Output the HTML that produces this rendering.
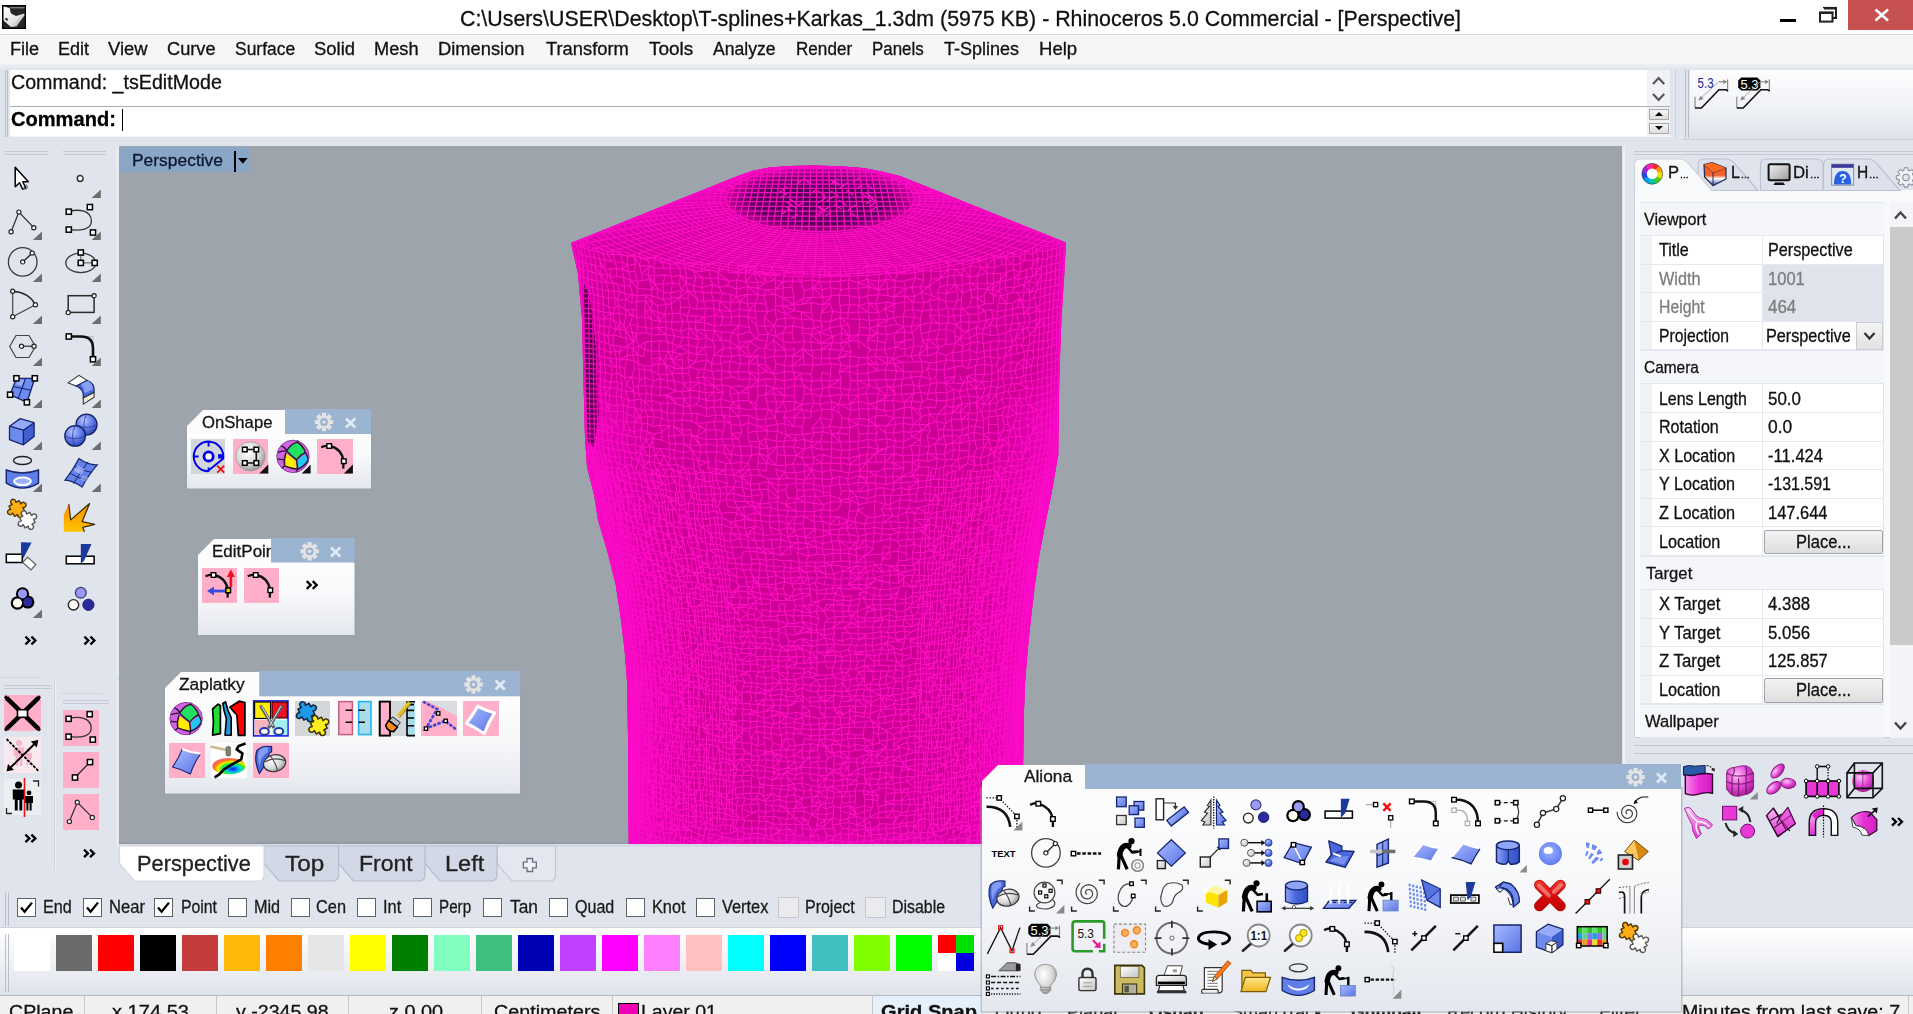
<!DOCTYPE html>
<html><head><meta charset="utf-8"><title>Rhinoceros 5.0 Commercial - [Perspective]</title>
<style>
html,body{margin:0;padding:0;}
body{width:1913px;height:1014px;overflow:hidden;position:relative;background:#e0e4ec;font-family:"Liberation Sans", sans-serif;}
div,span.t,svg{position:absolute;box-sizing:border-box;}
span.t{white-space:pre;line-height:1;transform-origin:0 0;display:block;-webkit-text-stroke:0.3px;}
.ic{overflow:visible}
</style></head><body>
<div style="left:0px;top:0px;width:1913px;height:34px;background:#fff;"></div><div style="left:0px;top:34px;width:1913px;height:1px;background:#d9d9d9;"></div><span class="t" style="left:459.5px;top:8.4px;font-size:21.79px;color:#111;transform:scaleX(0.9804);">C:\Users\USER\Desktop\T-splines+Karkas_1.3dm (5975 KB) - Rhinoceros 5.0 Commercial - [Perspective]</span><svg style="left:2px;top:5px" width="24" height="24" viewBox="2 5 24 24"><defs><linearGradient id="rh" x1="0" y1="0" x2="1" y2="1"><stop offset="0" stop-color="#ffffff"/><stop offset="0.6" stop-color="#e4e4e4"/><stop offset="1" stop-color="#8a9490"/></linearGradient></defs><rect x="2" y="5" width="24" height="24" fill="#262626"/><rect x="2.6" y="5.6" width="22.8" height="22.8" fill="none" stroke="#000" stroke-width="1.2"/><path d="M3.6 6.6L9.6 8L11 13.6L16 16L24.4 13.6V15.6L16.4 26.6L11 27L3.6 20.4Z" fill="url(#rh)"/><path d="M10 7.8H24.6" stroke="#bbb" stroke-width="0.8"/><ellipse cx="6.6" cy="19.2" rx="1.8" ry="1.3" fill="#5a3a48" transform="rotate(35 6.6 19.2)"/></svg><div style="left:1780px;top:19px;width:16px;height:3px;background:#000;"></div><svg style="left:1817px;top:5px" width="22" height="20" viewBox="1817 5 22 20"><path d="M1824 8.5h12v9.5h-3" fill="none" stroke="#222" stroke-width="2"/><path d="M1823 7.6h14" stroke="#222" stroke-width="1.4"/><rect x="1820" y="13" width="12.5" height="8.6" fill="#fff" stroke="#222" stroke-width="2"/><path d="M1819 12.2h14.5" stroke="#222" stroke-width="1.6"/></svg><div style="left:1848px;top:0px;width:65px;height:30px;background:#c75050;"></div><svg style="left:1872px;top:6px" width="20" height="18" viewBox="0 0 20 18"><path d="M3.5 3.5L16 14.5M16 3.5L3.5 14.5" stroke="#fff" stroke-width="2.6"/></svg><div style="left:0px;top:35px;width:1913px;height:30px;background:#f5f6f7;"></div><div style="left:0px;top:64px;width:1913px;height:6px;background:linear-gradient(#eef0f3,#dfe3ea);"></div><span class="t" style="left:9.8px;top:41.0px;font-size:17.74px;color:#111;transform:scaleX(1.0193);">File</span><span class="t" style="left:57.8px;top:41.0px;font-size:17.74px;color:#111;transform:scaleX(1.0185);">Edit</span><span class="t" style="left:108.3px;top:41.0px;font-size:17.74px;color:#111;transform:scaleX(1.0394);">View</span><span class="t" style="left:167.3px;top:41.0px;font-size:17.74px;color:#111;transform:scaleX(1.0278);">Curve</span><span class="t" style="left:234.8px;top:41.0px;font-size:17.74px;color:#111;transform:scaleX(0.9837);">Surface</span><span class="t" style="left:313.8px;top:41.0px;font-size:17.74px;color:#111;transform:scaleX(1.0429);">Solid</span><span class="t" style="left:374.4px;top:41.0px;font-size:17.74px;color:#111;transform:scaleX(1.0266);">Mesh</span><span class="t" style="left:438.4px;top:41.0px;font-size:17.74px;color:#111;transform:scaleX(1.0328);">Dimension</span><span class="t" style="left:545.6px;top:41.0px;font-size:17.74px;color:#111;transform:scaleX(1.0333);">Transform</span><span class="t" style="left:649.4px;top:41.0px;font-size:17.74px;color:#111;transform:scaleX(1.0706);">Tools</span><span class="t" style="left:713.3px;top:41.0px;font-size:17.74px;color:#111;transform:scaleX(0.9926);">Analyze</span><span class="t" style="left:795.8px;top:41.0px;font-size:17.74px;color:#111;transform:scaleX(0.9649);">Render</span><span class="t" style="left:872.3px;top:41.0px;font-size:17.74px;color:#111;transform:scaleX(0.9520);">Panels</span><span class="t" style="left:943.8px;top:41.0px;font-size:17.74px;color:#111;transform:scaleX(1.0161);">T-Splines</span><span class="t" style="left:1038.8px;top:41.0px;font-size:17.74px;color:#111;transform:scaleX(1.0451);">Help</span><div style="left:5px;top:70px;width:1px;height:67px;background:#b9bfcc;"></div><div style="left:7px;top:70px;width:1px;height:67px;background:#b9bfcc;"></div><div style="left:10px;top:70px;width:1637px;height:36px;background:#fff;"></div><div style="left:1647px;top:70px;width:23px;height:36px;background:#f1f2f6;"></div><div style="left:10px;top:106px;width:1660px;height:1px;background:#a9adb5;"></div><div style="left:10px;top:107px;width:1637px;height:29px;background:#fff;"></div><div style="left:1647px;top:107px;width:23px;height:29px;background:#f1f2f6;"></div><div style="left:10px;top:136px;width:1662px;height:1px;background:#f4f5f8;"></div><span class="t" style="left:11.1px;top:72.8px;font-size:19.55px;color:#111;transform:scaleX(1.0063);">Command: _tsEditMode</span><span class="t" style="left:11.1px;top:109.8px;font-size:19.55px;color:#000;transform:scaleX(1.0279);font-weight:700;">Command:</span><div style="left:122px;top:109px;width:1px;height:22px;background:#000;"></div><svg style="left:1650px;top:72px" width="18" height="34" viewBox="1650 72 18 34"><path d="M1653 84l5.6-6 5.6 6M1653 94l5.6 6 5.6-6" fill="none" stroke="#555" stroke-width="2.2"/></svg><div style="left:1649px;top:109px;width:20px;height:11px;background:linear-gradient(#f6f6f6,#dddddd);border:1px solid #a8a8a8;"></div><svg style="left:0;top:0" width="1913" height="140"><polygon points="1655,116 1663,116 1659,112" fill="#000"/></svg><div style="left:1649px;top:123px;width:20px;height:11px;background:linear-gradient(#f6f6f6,#dddddd);border:1px solid #a8a8a8;"></div><svg style="left:0;top:0" width="1913" height="140"><polygon points="1655,126 1663,126 1659,130" fill="#000"/></svg><div style="left:1675px;top:70px;width:1px;height:68px;background:#cdd2dc;"></div><div style="left:1685px;top:70px;width:1px;height:68px;background:#b9bfcc;"></div><div style="left:1688px;top:70px;width:1px;height:68px;background:#b9bfcc;"></div><div style="left:1690px;top:70px;width:223px;height:70px;background:linear-gradient(#fdfdfe,#f0f2f6 55%,#dde1e9);"></div><div style="left:1683px;top:139px;width:230px;height:1px;background:#c9cdd8;"></div><div style="left:0px;top:140px;width:118px;height:706px;background:#e0e4ec;"></div><div style="left:4.6px;top:150.5px;width:43.4px;height:1px;background:#c3c8d4;"></div><div style="left:4.6px;top:153.5px;width:43.4px;height:1px;background:#c3c8d4;"></div><div style="left:62.8px;top:150.5px;width:43.60000000000001px;height:1px;background:#c3c8d4;"></div><div style="left:62.8px;top:153.5px;width:43.60000000000001px;height:1px;background:#c3c8d4;"></div><div style="left:116px;top:146px;width:3px;height:698px;background:#e9eaee;"></div><svg class="ic" style="left:0;top:140px" width="118" height="730" viewBox="0 140 118 730"><defs><radialGradient id="gsph" cx="0.38" cy="0.3" r="0.75"><stop offset="0" stop-color="#b9c6ff"/><stop offset="0.45" stop-color="#6c87ee"/><stop offset="1" stop-color="#2c46b8"/></radialGradient><linearGradient id="gexp" x1="0" y1="0" x2="0" y2="1"><stop offset="0" stop-color="#ff8c00"/><stop offset="1" stop-color="#ffc400"/></linearGradient></defs><g transform="translate(22.0 178.5)"><path d="M-6.8 -11.2V8.2L-2.4 4.2L0.6 10.6L3.6 9.2L0.8 3.2H6.4Z" fill="#fff" stroke="#000" stroke-width="1.5" stroke-linejoin="round"/><path d="M1.5 9.5q2.6 2.4 3.6 -0.6q0.3 -2.2 -1.6 -2.4" fill="none" stroke="#555" stroke-width="1.1"/></g><g transform="translate(80.8 178.5)"><circle cx="-0.6" cy="0" r="2.9" fill="#fff" stroke="#333" stroke-width="1.5"/><polygon points="20,11 20,19.6 10.8,19.6" fill="#6e6e6e"/></g><g transform="translate(22.0 220.5)"><path d="M-10.9 11.3L-3.1 -8.4L11.8 7.2" fill="none" stroke="#2b2b2b" stroke-width="1.2" /><circle cx="-10.9" cy="11.3" r="2.1" fill="#fff" stroke="#222" stroke-width="1.2"/><circle cx="-3.1" cy="-8.4" r="2.1" fill="#fff" stroke="#222" stroke-width="1.2"/><circle cx="11.8" cy="7.2" r="2.1" fill="#fff" stroke="#222" stroke-width="1.2"/><polygon points="20,11 20,19.6 10.8,19.6" fill="#6e6e6e"/></g><g transform="translate(80.8 220.5)"><path d="M-12 -8.8C-2 -12 10.5 -10 10.6 0.5C10.6 9 0 10.5 -12 9.1" fill="none" stroke="#333" stroke-width="1.3" /><rect x="-14.6" y="-11.4" width="5.2" height="5.2" fill="#fff" stroke="#000" stroke-width="1.5"/><rect x="6.5" y="-16.0" width="5.2" height="5.2" fill="#fff" stroke="#000" stroke-width="1.5"/><rect x="-14.6" y="6.5" width="5.2" height="5.2" fill="#fff" stroke="#000" stroke-width="1.5"/><rect x="9.6" y="9.4" width="5.2" height="5.2" fill="#fff" stroke="#000" stroke-width="1.5"/><polygon points="20,11 20,19.6 10.8,19.6" fill="#6e6e6e"/></g><g transform="translate(22.0 262.5)"><circle cx="0.7" cy="-0.6" r="14.3" fill="none" stroke="#3a3a3a" stroke-width="1.3"/><path d="M0.7 -0.6L10.2 -9.4" fill="none" stroke="#2b2b2b" stroke-width="1.4" /><circle cx="0.7" cy="-0.6" r="2.1" fill="#fff" stroke="#222" stroke-width="1.2"/><circle cx="10.2" cy="-9.4" r="2.1" fill="#fff" stroke="#222" stroke-width="1.2"/><polygon points="20,11 20,19.6 10.8,19.6" fill="#6e6e6e"/></g><g transform="translate(80.8 262.5)"><ellipse cx="0" cy="0.4" rx="15" ry="9.8" fill="none" stroke="#3a3a3a" stroke-width="1.3"/><path d="M0 -10V0.4H13.9" fill="none" stroke="#555" stroke-width="1" /><rect x="-2.6" y="-2.2" width="5.2" height="5.2" fill="#fff" stroke="#000" stroke-width="1.5"/><rect x="-2.6" y="-12.6" width="5.2" height="5.2" fill="#fff" stroke="#000" stroke-width="1.5"/><rect x="11.3" y="-2.2" width="5.2" height="5.2" fill="#fff" stroke="#000" stroke-width="1.5"/><polygon points="20,11 20,19.6 10.8,19.6" fill="#6e6e6e"/></g><g transform="translate(22.0 304.5)"><path d="M-9.3 -13.2V12.3L13.4 0.3" fill="none" stroke="#444" stroke-width="1.2" /><path d="M-9.3 -13.2Q7 -12 13.4 0.3" fill="none" stroke="#2b2b2b" stroke-width="1.4" /><circle cx="-9.3" cy="-13.2" r="2.1" fill="#fff" stroke="#222" stroke-width="1.2"/><circle cx="13.4" cy="0.3" r="2.1" fill="#fff" stroke="#222" stroke-width="1.2"/><circle cx="-9.3" cy="12.3" r="2.1" fill="#fff" stroke="#222" stroke-width="1.2"/><polygon points="20,11 20,19.6 10.8,19.6" fill="#6e6e6e"/></g><g transform="translate(80.8 304.5)"><rect x="-12.6" y="-8.8" width="25.9" height="16.7" fill="none" stroke="#2b2b2b" stroke-width="1.5"/><circle cx="13.3" cy="-8.8" r="2.1" fill="#fff" stroke="#222" stroke-width="1.2"/><circle cx="-12.6" cy="7.9" r="2.1" fill="#fff" stroke="#222" stroke-width="1.2"/><polygon points="20,11 20,19.6 10.8,19.6" fill="#6e6e6e"/></g><g transform="translate(22.0 346.5)"><path d="M-12.3 0L-6 -11H7L13.5 0L7 11H-6Z" fill="none" stroke="#444" stroke-width="1.2" /><path d="M-0.5 -0.3H12" fill="none" stroke="#2b2b2b" stroke-width="1.2" /><circle cx="-0.5" cy="-0.3" r="2.1" fill="#fff" stroke="#222" stroke-width="1.2"/><circle cx="12" cy="-0.3" r="2.1" fill="#fff" stroke="#222" stroke-width="1.2"/><polygon points="20,11 20,19.6 10.8,19.6" fill="#6e6e6e"/></g><g transform="translate(80.8 346.5)"><path d="M0 -10H12.2V2" fill="none" stroke="#b9bcc4" stroke-width="1" /><path d="M-12 -10H0Q12.2 -10 12.2 2V12.8" fill="none" stroke="#111" stroke-width="2.6" /><rect x="-14.6" y="-12.6" width="5.2" height="5.2" fill="#fff" stroke="#000" stroke-width="1.5"/><rect x="9.6" y="10.2" width="5.2" height="5.2" fill="#fff" stroke="#000" stroke-width="1.5"/><polygon points="20,11 20,19.6 10.8,19.6" fill="#6e6e6e"/></g><g transform="translate(22.0 388.5)"><path d="M-5.6 -10.2L12.8 -10.2L4.9 13.8L-11.9 6.2Z" fill="#6f8cf0" stroke="#16256e" stroke-width="1.3"/><path d="M3.6 -10.2L-3.8 10M-8.8 -2L8.8 1.8" stroke="#16256e" stroke-width="1.1" fill="none"/><path d="M-4 -8.8L2 -8.8L0 -3L-6 -4Z" fill="#a8b9ff" opacity=".7"/><rect x="-8.2" y="-12.8" width="5.2" height="5.2" fill="#fff" stroke="#000" stroke-width="1.5"/><rect x="10.2" y="-12.8" width="5.2" height="5.2" fill="#fff" stroke="#000" stroke-width="1.5"/><rect x="-14.5" y="3.6" width="5.2" height="5.2" fill="#fff" stroke="#000" stroke-width="1.5"/><rect x="2.3" y="11.2" width="5.2" height="5.2" fill="#fff" stroke="#000" stroke-width="1.5"/><polygon points="20,11 20,19.6 10.8,19.6" fill="#6e6e6e"/></g><g transform="translate(80.8 388.5)"><path d="M-12.6 -5.6L-1.9 -13.1L6.3 -8.1L-4.4 -2.4Z" fill="#fff" stroke="#333" stroke-width="1.1"/><path d="M-4.4 -2.4L6.3 -8.1Q14.5 -5.5 13.3 4L2.5 9.4Q3.5 1 -4.4 -2.4Z" fill="#4a6be0" stroke="#16256e" stroke-width="1.1"/><path d="M0 -4.6L7 -7.8Q12.5 -5 12 1L4 4.5Q3 -1.5 0 -4.6Z" fill="#9fb2ff" opacity=".75"/><path d="M2.5 9.4L13.3 4V8.6L2.5 15.6Z" fill="#f4f0e0" stroke="#333" stroke-width="1.1"/><polygon points="20,11 20,19.6 10.8,19.6" fill="#6e6e6e"/></g><g transform="translate(22.0 430.5)"><path d="M-12.5 -4.3L-1.8 -11.9L12.1 -7.8L1.4 -0.3Z" fill="#95aaf8"/><path d="M-12.5 -4.3L1.4 -0.3V14.3L-12.5 9.2Z" fill="#6f8bee"/><path d="M1.4 -0.3L12.1 -7.8V6L1.4 14.3Z" fill="#3f5ed2"/><path d="M-12.5 -4.3L-1.8 -11.9L12.1 -7.8V6L1.4 14.3L-12.5 9.2ZM-12.5 -4.3L1.4 -0.3L12.1 -7.8M1.4 -0.3V14.3" fill="none" stroke="#16256e" stroke-width="1.3" stroke-linejoin="round"/><polygon points="20,11 20,19.6 10.8,19.6" fill="#6e6e6e"/></g><g transform="translate(80.8 430.5)"><circle cx="5.7" cy="-5.9" r="10.5" fill="url(#gsph)" stroke="#14205e" stroke-width="1.3"/><path d="M-4.8 -5.9Q5.7 -0.125 16.2 -5.9M5.7 -16.4Q0.4500000000000002 -5.9 5.7 4.6" fill="none" stroke="#2a3c9a" stroke-width="1" opacity=".8"/><circle cx="-5.7" cy="5.4" r="10.3" fill="url(#gsph)" stroke="#14205e" stroke-width="1.3"/><path d="M-16.0 5.4Q-5.7 11.065000000000001 4.6000000000000005 5.4M-5.7 -4.9Q-10.850000000000001 5.4 -5.7 15.700000000000001" fill="none" stroke="#2a3c9a" stroke-width="1" opacity=".8"/><polygon points="20,11 20,19.6 10.8,19.6" fill="#6e6e6e"/></g><g transform="translate(22.0 472.5)"><ellipse cx="0.5" cy="-12" rx="9" ry="4" fill="none" stroke="#222" stroke-width="1.4"/><path d="M-15.7 -2.5Q0.5 3.5 16.5 -2.5V10.7Q0.5 20.5 -15.7 10.7Z" fill="#5f7eea" stroke="#16256e" stroke-width="1.4"/><ellipse cx="0.5" cy="8.8" rx="8.4" ry="3.8" fill="#9db0fb" stroke="#fff" stroke-width="2"/><polygon points="20,11 20,19.6 10.8,19.6" fill="#6e6e6e"/></g><g transform="translate(80.8 472.5)"><path d="M-1.9 -13.9Q8 -7 16.4 -7.6Q8 2 1.3 14.5Q-8 8 -15.8 7.6Q-8 -2 -1.9 -13.9Z" fill="#6582ea" stroke="#16256e" stroke-width="1.2"/><path d="M-6.5 -6.6Q2 -1 11.3 0M-11.2 0.5Q-3 6 6.3 7.3M7.3 -10.8Q0 -1 -7.2 11M-7 -10.5" fill="none" stroke="#16256e" stroke-width="1"/><path d="M-3 -7L4 -3L0 2L-7 -2Z" fill="#b3c2ff" opacity=".7"/><path d="M2 3L8 5L5 9L-1 7Z" fill="#b3c2ff" opacity=".5"/><polygon points="20,11 20,19.6 10.8,19.6" fill="#6e6e6e"/></g><g transform="translate(22.0 514.5)"><path transform="translate(-5.2 -6) scale(1.25) rotate(-28)" d="M-4.6 -4.6H-1.7V-4.9A2.05 2.05 0 1 1 1.7 -4.9V-4.6H4.6V-1.7H4.9A2.05 2.05 0 1 1 4.9 1.7H4.6V4.6H1.7V4.9A2.05 2.05 0 1 1 -1.7 4.9V4.6H-4.6V1.7H-4.9A2.05 2.05 0 1 1 -4.9 -1.7H-4.6Z" fill="#ffad14" stroke="#4a3608" stroke-width="1.1" stroke-linejoin="round"/><path transform="translate(5.4 5.6) scale(1.25) rotate(-28)" d="M-4.6 -4.6H-1.7V-4.9A2.05 2.05 0 1 1 1.7 -4.9V-4.6H4.6V-1.7H4.9A2.05 2.05 0 1 1 4.9 1.7H4.6V4.6H1.7V4.9A2.05 2.05 0 1 1 -1.7 4.9V4.6H-4.6V1.7H-4.9A2.05 2.05 0 1 1 -4.9 -1.7H-4.6Z" fill="#ffffff" stroke="#555" stroke-width="1.1" stroke-linejoin="round"/></g><g transform="translate(80.8 514.5)"><path d="M-17 17.3V0.3L-12 -10.4L-10.1 5.4L8.8 -11L1.3 7.2L13.9 9.8L1.9 12.9L3.8 17.3Z" fill="url(#gexp)"/><path d="M-12 -10.4L-10.1 5.4L8.8 -11L1.3 7.2L13.9 9.8L1.9 12.9L3.8 17.3" fill="none" stroke="#3a2a00" stroke-width="1.2" stroke-linejoin="round"/></g><g transform="translate(22.0 556.5)"><polygon points="-1.1,-14.1 9.6,-14.1 2,0.6 -0.5,3.2" fill="#1c3a9c"/><rect x="-15.7" y="-2.3" width="16" height="8.3" fill="#fff" stroke="#000" stroke-width="1.5"/><rect x="-5.6" y="-3.6" width="11.2" height="7.2" transform="translate(7.3 7) rotate(42)" fill="#fff" stroke="#666" stroke-width="1.3"/><polygon points="-1.1,-14.1 4,-14.1 0.3,0.6 -0.5,-2" fill="#1c3a9c"/></g><g transform="translate(80.8 556.5)"><rect x="-14.5" y="-0.3" width="27.8" height="7.6" fill="#fff" stroke="#000" stroke-width="1.5"/><polygon points="0,-12.6 10.7,-12.6 3.2,4.4 0,7" fill="#1c3a9c"/></g><g transform="translate(22.0 598.5)"><circle cx="0.5" cy="-4.7" r="6.6" fill="#000"/><circle cx="-4.5" cy="4.5" r="6.8" fill="#000"/><circle cx="5.8" cy="3.5" r="6.6" fill="#000"/><circle cx="5.8" cy="3.5" r="4.6" fill="#2a2a9c"/><circle cx="0.5" cy="-4.7" r="4.6" fill="#9a9af5"/><circle cx="-4.5" cy="4.5" r="4.6" fill="#fffdf0"/><polygon points="20,11 20,19.6 10.8,19.6" fill="#6e6e6e"/></g><g transform="translate(80.8 598.5)"><circle cx="0" cy="-5.7" r="5.4" fill="#9a9af5" stroke="#3c3c80" stroke-width="1.3"/><circle cx="-7.3" cy="6.3" r="5.2" fill="#fffdf4" stroke="#222" stroke-width="1.4"/><circle cx="7.6" cy="6.3" r="5.6" fill="#2a2a9c" stroke="#1c1c70" stroke-width="1"/></g><g transform="translate(31.0 640.5)"><path d="M-5.6 -3.8L-1.6 0L-5.6 3.8M0.4 -3.8L4.4 0L0.4 3.8" fill="none" stroke="#000" stroke-width="2.3"/></g><g transform="translate(90.0 640.5)"><path d="M-5.6 -3.8L-1.6 0L-5.6 3.8M0.4 -3.8L4.4 0L0.4 3.8" fill="none" stroke="#000" stroke-width="2.3"/></g></svg><div style="left:0px;top:676px;width:120px;height:196px;background:#e0e4ec;"></div><div style="left:0px;top:677px;width:42px;height:1px;background:#d3d7e0;"></div><div style="left:4px;top:685px;width:47px;height:1px;background:#c3c8d4;"></div><div style="left:4px;top:688px;width:47px;height:1px;background:#c3c8d4;"></div><div style="left:54px;top:680px;width:1px;height:190px;background:#cdd1db;"></div><div style="left:55px;top:680px;width:1px;height:190px;background:#eef0f4;"></div><div style="left:60px;top:693px;width:42px;height:1px;background:#d3d7e0;"></div><div style="left:63px;top:700px;width:46px;height:1px;background:#c3c8d4;"></div><div style="left:63px;top:703px;width:46px;height:1px;background:#c3c8d4;"></div><div style="left:116px;top:680px;width:3px;height:166px;background:#e9eaee;"></div><div style="left:4.1px;top:695px;width:36.8px;height:36px;background:#ffb0c8;"></div><div style="left:4.1px;top:737.2px;width:36.8px;height:35.6px;background:#f7e9ee;"></div><div style="left:4.1px;top:779.4px;width:36.8px;height:35.6px;background:#eceef2;"></div><div style="left:63.4px;top:710px;width:35.6px;height:35.6px;background:#ffb0c8;"></div><div style="left:63.4px;top:752.2px;width:35.6px;height:35.6px;background:#ffb0c8;"></div><div style="left:63.4px;top:794px;width:35.6px;height:35.6px;background:#ffb0c8;"></div><svg class="ic" style="left:0;top:680px" width="118" height="190" viewBox="0 680 118 190"><g transform="translate(22.5 713.3)"><path d="M-16 -15.5L16 15.5M16 -15.5L-16 15.5" stroke="#000" stroke-width="4.6"/><path d="M-17.5 -17L-13 -13M17.5 -17L13 -13M-17.5 17L-13 13M17.5 17L13 13" stroke="#000" stroke-width="3"/><rect x="-5" y="-3.6" width="10" height="7.6" fill="#fff" stroke="#000" stroke-width="1.6"/></g><g transform="translate(22.5 755)"><circle cx="-3.5" cy="-11.9" r="3.1" fill="#f4b6c8"/><path d="M-8.7 -7.7h10.4v8.8h-1.8v9.9h-2.6v-9.4h-1.6v9.4h-2.6v-9.9h-1.8Z" fill="#f4b6c8"/><circle cx="6" cy="-5.0" r="2.0" fill="#f4b6c8"/><path d="M2.6 -2.2h6.8v5.8h-1.2v6.5h-1.7v-6.1h-1.0v6.1h-1.7v-6.5h-1.2Z" fill="#f4b6c8"/><path d="M-16 -16L16 16" stroke="#000" stroke-width="1.8" stroke-dasharray="3 1.2"/><path d="M-15 15.5L15 -14" stroke="#000" stroke-width="1.9"/><path d="M15.8 -15l-7.5 1.4 6 6z M-16 16.3l7.5 -1.4 -6 -6z" fill="#000"/></g><g transform="translate(22.5 797)"><circle cx="-4" cy="-12.0" r="3.5" fill="#000"/><path d="M-9.8 -7.4h11.6v9.9h-2.0v11.0h-2.9v-10.4h-1.7v10.4h-2.9v-11.0h-2.0Z" fill="#000"/><circle cx="6.5" cy="-4.1" r="2.4" fill="#000"/><path d="M2.5 -0.9h8.0v6.8h-1.4v7.6h-2.0v-7.2h-1.2v7.2h-2.0v-7.6h-1.4Z" fill="#000"/><path d="M2 -19V20" stroke="#ee1111" stroke-width="1.6"/><path d="M10.5 -16h5.5v5.5M-16 11v5.5h5.5" fill="none" stroke="#222" stroke-width="1.3"/></g><g transform="translate(31.0 838.4)"><path d="M-5.6 -3.8L-1.6 0L-5.6 3.8M0.4 -3.8L4.4 0L0.4 3.8" fill="none" stroke="#000" stroke-width="2.3"/></g><g transform="translate(80.6 727.6)"><path d="M-12 -8.8C-2 -12 10.5 -10 10.6 0.5C10.6 9 0 10.5 -12 9.1" fill="none" stroke="#333" stroke-width="1.3" /><rect x="-14.6" y="-11.4" width="5.2" height="5.2" fill="#fff" stroke="#000" stroke-width="1.5"/><rect x="6.5" y="-16.0" width="5.2" height="5.2" fill="#fff" stroke="#000" stroke-width="1.5"/><rect x="-14.6" y="6.5" width="5.2" height="5.2" fill="#fff" stroke="#000" stroke-width="1.5"/><rect x="9.6" y="9.4" width="5.2" height="5.2" fill="#fff" stroke="#000" stroke-width="1.5"/></g><g transform="translate(81.2 770)"><path d="M-6.2 7.5L8.8 -7.9" fill="none" stroke="#2b2b2b" stroke-width="1.3" /><rect x="-8.8" y="4.9" width="5.2" height="5.2" fill="#fff" stroke="#000" stroke-width="1.5"/><rect x="6.2" y="-10.5" width="5.2" height="5.2" fill="#fff" stroke="#000" stroke-width="1.5"/></g><g transform="translate(81.2 812)"><path d="M-11.8 9.6L-3.9 -9.7L11.1 5.4" fill="none" stroke="#2b2b2b" stroke-width="1.2" /><circle cx="-11.8" cy="9.6" r="2.1" fill="#fff" stroke="#222" stroke-width="1.2"/><circle cx="-3.9" cy="-9.7" r="2.1" fill="#fff" stroke="#222" stroke-width="1.2"/><circle cx="11.1" cy="5.4" r="2.1" fill="#fff" stroke="#222" stroke-width="1.2"/></g><g transform="translate(89.6 853.4)"><path d="M-5.6 -3.8L-1.6 0L-5.6 3.8M0.4 -3.8L4.4 0L0.4 3.8" fill="none" stroke="#000" stroke-width="2.3"/></g></svg><svg style="left:119px;top:146px" width="1503" height="698" viewBox="119 146 1503 698"><defs><clipPath id="bc"><path d="M571.0 243.0 L736.4 176.6 L752.0 171.0 L769.0 167.5 L790.0 166.0 L813.0 165.6 L840.0 166.2 L863.0 168.0 L882.0 171.5 L900.7 176.3 L1066.0 242.5 L1064.3 274.0 L1061.4 319.0 L1059.3 378.0 L1058.4 437.0 L1058.2 455.0 L1051.0 496.0 L1046.0 520.0 L1039.7 552.5 L1034.8 585.0 L1031.0 617.6 L1027.7 650.0 L1025.0 682.7 L1023.8 715.0 L1023.1 762.0 L1022.5 846.0 L628.8 846.0 L628.2 748.0 L627.2 683.0 L624.6 650.0 L620.7 617.6 L615.8 585.0 L607.7 552.5 L598.0 520.0 L594.4 496.0 L587.0 466.7 L585.0 437.0 L583.4 378.0 L582.0 319.0 L578.0 274.0Z"/></clipPath><clipPath id="tc"><path d="M571.0 243.0 L736.4 176.6 L752.0 171.0 L769.0 167.5 L790.0 166.0 L813.0 165.6 L840.0 166.2 L863.0 168.0 L882.0 171.5 L900.7 176.3 L1066.0 242.5 Q 819 312 571 243Z"/></clipPath><clipPath id="fc"><path d="M571 243 Q819 290 1066 242.5 L1100 260 L1100 850 L540 850 L540 260Z"/></clipPath><radialGradient id="nk" cx="0.5" cy="0.5" r="0.5"><stop offset="0" stop-color="#480050" stop-opacity="1"/><stop offset="0.7" stop-color="#560058" stop-opacity="0.97"/><stop offset="0.9" stop-color="#8a0070" stop-opacity="0.55"/><stop offset="1" stop-color="#b4007c" stop-opacity="0"/></radialGradient><filter id="bl" x="-2%" y="-2%" width="104%" height="104%"><feGaussianBlur stdDeviation="0.6"/></filter><clipPath id="nc"><ellipse cx="820" cy="199" rx="94" ry="33"/></clipPath><linearGradient id="tg" x1="0" y1="0" x2="0" y2="1"><stop offset="0" stop-color="#dc04a8"/><stop offset="0.55" stop-color="#cc02a0"/><stop offset="1" stop-color="#ca0092"/></linearGradient><clipPath id="ac"><path d="M584 284 L589.5 296 L596.5 350 L598.5 415 L593.5 447 L587.5 441 L585.5 380Z"/></clipPath></defs><rect x="119" y="146" width="1503" height="698" fill="#9da4ab"/><rect x="119" y="842" width="1503" height="2" fill="#969ca6"/><path d="M571.0 243.0 L736.4 176.6 L752.0 171.0 L769.0 167.5 L790.0 166.0 L813.0 165.6 L840.0 166.2 L863.0 168.0 L882.0 171.5 L900.7 176.3 L1066.0 242.5 L1064.3 274.0 L1061.4 319.0 L1059.3 378.0 L1058.4 437.0 L1058.2 455.0 L1051.0 496.0 L1046.0 520.0 L1039.7 552.5 L1034.8 585.0 L1031.0 617.6 L1027.7 650.0 L1025.0 682.7 L1023.8 715.0 L1023.1 762.0 L1022.5 846.0 L628.8 846.0 L628.2 748.0 L627.2 683.0 L624.6 650.0 L620.7 617.6 L615.8 585.0 L607.7 552.5 L598.0 520.0 L594.4 496.0 L587.0 466.7 L585.0 437.0 L583.4 378.0 L582.0 319.0 L578.0 274.0Z" fill="#ca0092"/><g clip-path="url(#bc)"><path d="M571.0 243.0 L736.4 176.6 L752.0 171.0 L769.0 167.5 L790.0 166.0 L813.0 165.6 L840.0 166.2 L863.0 168.0 L882.0 171.5 L900.7 176.3 L1066.0 242.5 Q 819 312 571 243Z" fill="url(#tg)"/><ellipse cx="820" cy="199" rx="100" ry="36" fill="url(#nk)"/><g filter="url(#bl)"><path clip-path="url(#tc)" d="M726.0 199A94.0 32.7 0 1 0 914.0 199A94.0 32.7 0 1 0 726.0 199M720.0 199A100.0 34.8 0 1 0 920.0 199A100.0 34.8 0 1 0 720.0 199M714.0 199A106.0 36.9 0 1 0 926.0 199A106.0 36.9 0 1 0 714.0 199M708.0 199A112.0 39.0 0 1 0 932.0 199A112.0 39.0 0 1 0 708.0 199M702.0 199A118.0 41.0 0 1 0 938.0 199A118.0 41.0 0 1 0 702.0 199M696.0 199A124.0 43.1 0 1 0 944.0 199A124.0 43.1 0 1 0 696.0 199M690.0 199A130.0 45.2 0 1 0 950.0 199A130.0 45.2 0 1 0 690.0 199M684.0 199A136.0 47.3 0 1 0 956.0 199A136.0 47.3 0 1 0 684.0 199M678.0 199A142.0 49.4 0 1 0 962.0 199A142.0 49.4 0 1 0 678.0 199M672.0 199A148.0 51.5 0 1 0 968.0 199A148.0 51.5 0 1 0 672.0 199M666.0 199A154.0 53.6 0 1 0 974.0 199A154.0 53.6 0 1 0 666.0 199M660.0 199A160.0 55.7 0 1 0 980.0 199A160.0 55.7 0 1 0 660.0 199M654.0 199A166.0 57.7 0 1 0 986.0 199A166.0 57.7 0 1 0 654.0 199M648.0 199A172.0 59.8 0 1 0 992.0 199A172.0 59.8 0 1 0 648.0 199M642.0 199A178.0 61.9 0 1 0 998.0 199A178.0 61.9 0 1 0 642.0 199M636.0 199A184.0 64.0 0 1 0 1004.0 199A184.0 64.0 0 1 0 636.0 199M630.0 199A190.0 66.1 0 1 0 1010.0 199A190.0 66.1 0 1 0 630.0 199M624.0 199A196.0 68.2 0 1 0 1016.0 199A196.0 68.2 0 1 0 624.0 199M618.0 199A202.0 70.3 0 1 0 1022.0 199A202.0 70.3 0 1 0 618.0 199M610.5 199A209.5 72.9 0 1 0 1029.5 199A209.5 72.9 0 1 0 610.5 199M603.0 199A217.0 75.5 0 1 0 1037.0 199A217.0 75.5 0 1 0 603.0 199M595.5 199A224.5 78.1 0 1 0 1044.5 199A224.5 78.1 0 1 0 595.5 199M588.0 199A232.0 80.7 0 1 0 1052.0 199A232.0 80.7 0 1 0 588.0 199M580.5 199A239.5 83.3 0 1 0 1059.5 199A239.5 83.3 0 1 0 580.5 199M573.0 199A247.0 85.9 0 1 0 1067.0 199A247.0 85.9 0 1 0 573.0 199M565.5 199A254.5 88.5 0 1 0 1074.5 199A254.5 88.5 0 1 0 565.5 199M558.0 199A262.0 91.1 0 1 0 1082.0 199A262.0 91.1 0 1 0 558.0 199M550.5 199A269.5 93.7 0 1 0 1089.5 199A269.5 93.7 0 1 0 550.5 199M543.0 199A277.0 96.3 0 1 0 1097.0 199A277.0 96.3 0 1 0 543.0 199M535.5 199A284.5 99.0 0 1 0 1104.5 199A284.5 99.0 0 1 0 535.5 199M528.0 199A292.0 101.6 0 1 0 1112.0 199A292.0 101.6 0 1 0 528.0 199M520.5 199A299.5 104.2 0 1 0 1119.5 199A299.5 104.2 0 1 0 520.5 199M513.0 199A307.0 106.8 0 1 0 1127.0 199A307.0 106.8 0 1 0 513.0 199M505.5 199A314.5 109.4 0 1 0 1134.5 199A314.5 109.4 0 1 0 505.5 199M498.0 199A322.0 112.0 0 1 0 1142.0 199A322.0 112.0 0 1 0 498.0 199M490.5 199A329.5 114.6 0 1 0 1149.5 199A329.5 114.6 0 1 0 490.5 199M483.0 199A337.0 117.2 0 1 0 1157.0 199A337.0 117.2 0 1 0 483.0 199M475.5 199A344.5 119.8 0 1 0 1164.5 199A344.5 119.8 0 1 0 475.5 199M468.0 199A352.0 122.4 0 1 0 1172.0 199A352.0 122.4 0 1 0 468.0 199M460.5 199A359.5 125.0 0 1 0 1179.5 199A359.5 125.0 0 1 0 460.5 199M453.0 199A367.0 127.7 0 1 0 1187.0 199A367.0 127.7 0 1 0 453.0 199M445.5 199A374.5 130.3 0 1 0 1194.5 199A374.5 130.3 0 1 0 445.5 199M438.0 199A382.0 132.9 0 1 0 1202.0 199A382.0 132.9 0 1 0 438.0 199M430.5 199A389.5 135.5 0 1 0 1209.5 199A389.5 135.5 0 1 0 430.5 199M423.0 199A397.0 138.1 0 1 0 1217.0 199A397.0 138.1 0 1 0 423.0 199M415.5 199A404.5 140.7 0 1 0 1224.5 199A404.5 140.7 0 1 0 415.5 199M408.0 199A412.0 143.3 0 1 0 1232.0 199A412.0 143.3 0 1 0 408.0 199M400.5 199A419.5 145.9 0 1 0 1239.5 199A419.5 145.9 0 1 0 400.5 199M393.0 199A427.0 148.5 0 1 0 1247.0 199A427.0 148.5 0 1 0 393.0 199M385.5 199A434.5 151.1 0 1 0 1254.5 199A434.5 151.1 0 1 0 385.5 199M378.0 199A442.0 153.7 0 1 0 1262.0 199A442.0 153.7 0 1 0 378.0 199M370.5 199A449.5 156.3 0 1 0 1269.5 199A449.5 156.3 0 1 0 370.5 199M363.0 199A457.0 159.0 0 1 0 1277.0 199A457.0 159.0 0 1 0 363.0 199M355.5 199A464.5 161.6 0 1 0 1284.5 199A464.5 161.6 0 1 0 355.5 199M348.0 199A472.0 164.2 0 1 0 1292.0 199A472.0 164.2 0 1 0 348.0 199M340.5 199A479.5 166.8 0 1 0 1299.5 199A479.5 166.8 0 1 0 340.5 199M333.0 199A487.0 169.4 0 1 0 1307.0 199A487.0 169.4 0 1 0 333.0 199M325.5 199A494.5 172.0 0 1 0 1314.5 199A494.5 172.0 0 1 0 325.5 199M318.0 199A502.0 174.6 0 1 0 1322.0 199A502.0 174.6 0 1 0 318.0 199M310.5 199A509.5 177.2 0 1 0 1329.5 199A509.5 177.2 0 1 0 310.5 199M303.0 199A517.0 179.8 0 1 0 1337.0 199A517.0 179.8 0 1 0 303.0 199M914.0 198.8L1340 198M913.8 200.9L1339 209M913.0 203.8L1335 225M912.2 205.4L1330 234M910.3 208.1L1320 249M908.5 210.1L1309 260M906.5 212.0L1298 270M903.0 214.5L1279 284M900.5 216.0L1265 292M896.2 218.3L1241 305M892.9 219.8L1223 313M888.5 221.6L1199 323M883.1 223.5L1169 333M877.0 225.2L1135 343M873.6 226.1L1116 348M867.8 227.4L1084 355M860.8 228.7L1046 362M853.8 229.8L1007 368M848.8 230.4L979 371M843.1 231.0L948 374M834.8 231.6L902 378M831.3 231.8L883 379M822.1 232.0L832 380M817.4 232.0L806 380M811.3 231.9L772 379M804.9 231.6L737 378M797.9 231.1L698 375M790.0 230.3L654 370M785.8 229.7L631 367M778.6 228.6L591 361M772.6 227.5L558 355M767.8 226.4L531 349M762.0 225.0L499 341M758.2 223.9L478 335M753.4 222.3L452 327M748.6 220.5L425 317M743.6 218.2L397 304M740.4 216.6L380 295M737.3 214.7L362 285M734.0 212.3L344 272M731.7 210.3L332 261M729.8 208.3L321 250M727.9 205.5L310 235M726.8 203.4L305 223M726.3 201.6L302 213M726.0 198.9L300 199M726.2 196.7L301 186M727.1 194.0L306 171M728.2 191.9L312 160M729.5 190.1L319 150M732.2 187.2L334 134M733.6 186.0L342 128M736.9 183.6L360 115M740.7 181.3L382 102M743.3 179.9L396 94M748.0 177.8L422 83M751.3 176.5L440 75M757.5 174.3L474 64M762.8 172.8L504 55M767.6 171.6L530 49M774.1 170.2L566 41M778.2 169.4L589 37M785.4 168.3L628 31M791.2 167.6L661 27M797.5 167.0L696 23M803.5 166.5L729 21M811.3 166.1L772 19M818.2 166.0L810 18M823.2 166.0L838 18M830.4 166.2L877 19M834.9 166.4L902 20M843.4 167.0L949 24M849.5 167.7L983 27M856.7 168.6L1023 32M862.2 169.5L1053 37M866.4 170.3L1077 42M872.3 171.6L1109 49M878.3 173.1L1143 57M881.7 174.1L1161 63M887.5 176.0L1194 73M891.3 177.5L1214 81M895.3 179.2L1237 91M898.9 181.1L1257 101M903.4 183.8L1281 116M905.4 185.2L1292 123M908.0 187.4L1307 136M910.3 189.8L1319 148M912.2 192.6L1330 164M912.9 193.9L1334 171M913.8 196.6L1339 186" fill="none" stroke="#fb0cc0" stroke-width="1.25"/><path clip-path="url(#nc)" d="M733.6 164L714.4 234M739.5 164L721.7 234M745.5 164L728.9 234M751.4 164L736.2 234M757.4 164L743.4 234M763.3 164L750.7 234M769.2 164L758.0 234M775.2 164L765.2 234M781.1 164L772.5 234M787.1 164L779.7 234M793.0 164L787.0 234M798.9 164L794.3 234M804.9 164L801.5 234M810.8 164L808.8 234M816.8 164L816.0 234M822.7 164L823.3 234M828.6 164L830.6 234M834.6 164L837.8 234M840.5 164L845.1 234M846.5 164L852.3 234M852.4 164L859.6 234M858.3 164L866.9 234M864.3 164L874.1 234M870.2 164L881.4 234M876.2 164L888.6 234M882.1 164L895.9 234M888.0 164L903.2 234M894.0 164L910.4 234M899.9 164L917.7 234M905.9 164L924.9 234M722 165.0L918 165.0M722 168.6L918 168.6M722 172.3L918 172.3M722 176.2L918 176.2M722 180.1L918 180.1M722 184.2L918 184.2M722 188.4L918 188.4M722 192.7L918 192.7M722 197.2L918 197.2M722 201.7L918 201.7M722 206.4L918 206.4M722 211.2L918 211.2M722 216.1L918 216.1M722 221.2L918 221.2M722 226.3L918 226.3M722 231.6L918 231.6M825 216l7.4 -5.1M856 189l7.4 -5.1M869 207l7.4 -5.1M866 184l7.4 5.1M785 206l7.4 5.1M818 203l7.4 -5.1M798 183l7.4 -5.1M831 191l7.4 5.1M839 200l7.4 5.1M816 215l7.4 -5.1M810 194l7.4 -5.1M833 180l7.4 5.1M868 196l7.4 5.1M804 179l7.4 5.1M827 201l7.4 -5.1M831 180l7.4 5.1M831 184l7.4 -5.1M866 204l7.4 -5.1M782 214l7.4 -5.1M818 191l7.4 5.1M780 192l7.4 -5.1M818 207l7.4 5.1M791 219l7.4 -5.1M785 201l7.4 5.1M846 190l7.4 5.1M840 188l7.4 -5.1M861 193l7.4 5.1M823 211l7.4 -5.1M834 204l7.4 5.1M851 213l7.4 5.1M790 199l7.4 5.1M869 212l7.4 -5.1M796 207l7.4 -5.1M815 218l7.4 -5.1M866 193l7.4 5.1M780 198l7.4 -5.1M790 204l7.4 5.1M818 206l7.4 5.1M853 182l7.4 -5.1M848 210l7.4 -5.1" fill="none" stroke="#fb0cc0" stroke-width="1.3"/><path clip-path="url(#fc)" d="M571.5 215.4l3.6 .9l4.5 1.9l3.9 1.1l4.2 .4l6.1 .9l5.1 1.4l5.8 1.5M617.7 223.5l4.7 .4l7.6 3.6l4.1 .9l7.1 1.7l7.6 .3l6.8-1.9l9.6 2.8M672.4 231.1l10.1-1.3l8 3.9M698.6 233.9l8.1 .5M716.9 232.1l6 1.9l11.9 1.5l8.1 .3l7.5-2.2l11.2 .1M768.8 236.2l11.4-.6l10.5 1.7l6.8-2.6l9.5-.3l11.3-.3l11.4 .1l7.4 3.6l10.7-3.2l8.2 1.1l11.6-.2l7.2-.1l11.9 1.3l9.5-.4l6.2-2.2l10-.6l8.5 .7l9.2-2.2l8.1-.9l10.4 2.7l7.7-2.8l6.6-1.5l8.8 1.8l6.2-.1l7.8-1.6l7.5-.6l10.1-2l4.5-1l5.3-.8l7.3-.4l7.5-1.2l5.1-1.3l7.3-1.7l3.9 .2l5-1.2l4-.1l4.3-1.3l5-1l3.7-1.2M571 223.1l4 1.2l4 .9l5 1l4.8 1.2l4 .8l4.9 1.9l5.4-.4l5.4-.1l9.5 2.6l6 1.6l3.1 1.2l10.4 1.9l4.4-2.4l9.9 2.5l5.9-1l7.4 2.6l7.2 1.1l11-2.4l4.4 2.4l12.3 .6l5.7 .2l10.4 1.3l8.9 0l10 2l6.8-2.6l9 .2l11.9 2.4l6.5 1.2l12.9-.4l5.6-.7l13.1-.7l6.3 1l11-.6l12 .4l8.5-2.3l7.5 .8l8.9 .2l10.8 2.3l9.4-4l11.6 .5l6.4 .1l8.8-.5l11.3-.5l9.4-1.1l9-.2l7.7 .5l7.3 .4M954.1 240.9l11.2-3.8l8.1 1.9l6.5-.7l8-1.8M993.4 236.2l6.5 .1l9.1-2.1l5.4 0l6.6-.1l7.1-2.2l6-3.2l5.1 2.2l4.8-1.6l4.9-2.1l4-.4l5.5-1.5l3.6-1.5l3.4-.7M572.5 230.3l4.2 1l4.7 2.2l3.4 .7l5.5 1l5.1 1.5l3.8 1.6l5.5 .5l6.7 1.7l4.5 1.2l7.1-2.6l7.9 1.5l6.7 1.3l7.2 2.2l7.1-1.5l7 2.1l9.6-.8l4.8 2.1l10.1-.2l7.3 2.5l10.5-.3l5.9-1.4l9.3 1.3l7.3 1.3l12.7 2.3M743.1 251.6l11.4-3.1l6 3l10-1.4l10.9 1.3l8.2-1.9l9.9 1.6l11.6-.3l6.7 2.2M829.5 250.8l9.8 0l8.1-1.3l9.4 .7l9.4 .1l11.8-1.1l5.6 2l10.2-3l9.7 2.8l7.8-.1l11.6-.7l6.8-3.7l10.1 1.8l6.4 .8l9.4-3.1l9.4 1.2l6.5-3.6l9 .8l7.9-.1l4.6-2.6l9.9 .5l5.5-1.9l7.6 .6l6.5-.6l3-1.5l6.3-1.5l7.3 .6l4.2-1.9l5.1-.6l4.2-1.1l4.4-1.3l5-1.1l3.5-1.5M574.9 238.1l3.6 1l3.7 1.6l4.5 .9l5.3 .8l4 1.9l5.4 1.5l4.8-.9l7.9 1.8l5.3 .4l6.7 1.5l6.9 2.1l4 1l8.2-.2l7.4-.6l8.9 3.3l4.9-1.5l10.4 2.2l8.9-.7l4.6 2.4l11.8-1.1l6.7 .2l10-.5l6.3 3.5l8.8-.3l11.4 .5l10-2.8l8.8 0l6.8 2.5l9 .7l13.2-.2l7.8-.6l10.4-1.3l7.7 3.4l9.2-2.8l11.9-1.1l8.5 3.9l8.4-2.9l11.7-.4l8.1 .9l7.3-.8l11.7-1.7l7.2 3l10.8-3.6l7.2 .9M930.2 255.9l9.9 .4l7-1.9l6.8-.9l11.4-1.6l6.5-.1l8.7-.7l6.2-.4l8.9-1.3l6 1.2l7.8-1.3l6.6-2.6l5 2.6l3.8-4.5l7.9 .7l6-1.9l4.3 .5l4.8-1.8l4.4-1l4.6-.5l4.5-1.4l3.6-1M576.7 246.3l3.4 .2l3.6 1.1l4.8 2.1l4.9 1l4.7 1l4.6 1.9l4.6 .6l6.1 .3l7 0l7.4 1.5l6.1-.1l6.7 1.4l5.9 1.1l8.9-.9l5 .7l9.2 1.9l6.8 3l6.8-.2l10.8 1.2l6.8-.2l9.7 .8l10-2.5l8.3 .6M737.3 264.6l9.3 1.6l9.7 .5M762.4 265.6l8.8 2l10.6-.8l8.8-1.6l12.3 1l9.2 .6l8.4-.8l8.1 0l11.5 .2l9.1-1.3l8.9-.4l8 1.9l9.8-1.1l12.4 2l5.9-3.7l10.2 2.7l8-1.8l10.9 .5l8.7-2.3l6.5-.7l8.3-.5l8.9-.9l7.2-.2l10.5-1l4.2-.4l8.2 .3M994.6 256.9l6.2-1l4.9 2.5l7.4-2.5l6.8 .8l5.4-4.2l7.2 2.2l3.8-4l6.5 .3l5-.3l4.8-2l4.3-.3l3.8-2l3.8-1.2M578.6 252.7l3.5 2.3l4.2 1.1l3.9 .6l4.9 .7l4.2 1.6l5.7 .6l6.7 2l3.1 .4l8 .4l4.6 3.2l8.1-1.4M639.7 266.3l10.3-.6l3.7 2.2l10.5 .2l5.9-.3l10 .8l4.8-.7l7.9 2.4l9.4 1.4l7.5-2.4l8.7 3.5M728.2 272.2l11 1.1l6-1.2M754.2 271.7l8.9 1.1l12 1.9l9.5-1.8l9.5-.9l9.8 1.2l8.2 1.3l7.4 .3l11.9 .7l9.2-.2l9.4-1M857.7 273.6l10.8-1.9l10.8 .2l6.8-.3l11.6 2.3l5.9 0l11.5-1.3l8-1.8l7.5 .1l10.4 .8l7.5-2.4l6.5-.3l8.5-.1l7-2.7l10.8 1.2l5.2-.1l8.6 .1l6.9-2.5l3.8-1l7.6 1l6.8-1.5l4.1-3l9.2-.2l4.7-1.9l4.6 1.1l4.7-1.1l3.9-2l5.1-.4l3.5-1.8l4.8-1.1M579 261.2l3.7 1.1l3.5 1.4l4.9 .4l4.3 1.5l5.6 .9l3.7 2.9l6.3-.5l6.2-.5l5 .7l6.3 2.7l6-.4M641.5 274l6.5 .7l6.3 1.1l11-.9l5.8 1.6l9.2-1.1l6.5 3.1l9-1.4l6.8 .5l7.6 .4l8.3 0l10.9 3.4l7.6-1.4l9 2.1l11.3 .2l9.3-.5l8.7-1.8l7.5 1.8l9.8-.9l8 .6l11.6-1.7l7.3 2.1l10.4-.2l10.4-.5l8.4-1.3l9.7 2.7l8.4-3.5l11.9 2.6l7.7-2.9l7.9 2.1l9.5 .3l11.6-3.4l8.2 2.9M931.3 279l8.5-.8l7.8-1.9l6.2-1l8-.1l8.3 2.2l7.4-1.8l9.5-2.4l6.2 .5l7.8-.2l5.8-1l6.8-3l6.7 2.8l6.3-2.9l5-1.4l5 1.2l4.9-2.5l5-.6l4.8-1.5l4.2-.9l5-1.1l3-2.3M579.5 268.6l3.9 1.5l4.4 .5l4.3 1.8l3.6 .7l5 1.5l6.9-.7l2.7 3.8l5.8-1.1l7.6 .8l7.2 3.1l6.9 .5l4.9-.7l6.9-1l5.1 4.5l8.1 .4l9.8-1.3l6.9 1.4M685.8 282.8l7.9 2.9l8.4 2l10.6-3.3l6.4 2.9l8.3-1.9l8.9 3.6l11.8-2.3l9.8 1.6l8 1.7l9.6-.5l7.8-1.6l8.6-.8M804.3 290.8l8.6-3.3l9.4 2.2l8.4-2l10.6 2l7.4-1.3l9.2-.1l12-1.4l8.6 3.2l9.2-1.5l7.8-1.6l10.1 1.7l6-1.5l9-.6l8.3-.1M940 287.1l7.8-2.7l7.5 .3l7.3 .3l6.8-2.2l7.8 .7l10.2 .4l6.2-.8l6.6-2.3l5.2 .1l9.6-3.2l3.1 2l8.3-2.7l6.6-.7l1.8-1.9l6.3 .2l5.8-1.3l4.1-1.2l4.3-1.5l4.1-.9l3.5-.8M580.2 276.4l3.2 .9l4.7 1.2l3.6 1.1l5.2 1.4l4.8 .7l4.5 .8l6.8 .2l3.9 1.2l7.5 2.4l5.7-.9M637.5 288.5l6 .4l8.4 .8l5.6-.7l5.8 3.1l7.6 .7l10.7-2.5l6.6 .7l6 .4l8.9 1.1l8.3-.2l11.1 1.1l8.6 1.2l5.3 1.9l10.7-2.1l11.2 .6l5.3 .1l12-.8l7.3 3.6l11.2-.9M803.2 298.1l9.5-.7l10.2 0l8.3-1.7l7.7-.5l10.4 .5l10.4 2.3l7.4-2.1l11.1-1.2l9.7 1l5.7 1.2l11-1.1l10.2 .5l6.5-3.9l10.6 3.1M937.4 292.3l8.7 1.4l11-2.7M962.6 293l8.2-3.2l7.6-1.5l8.6 .7l5.3 .8l7.3 .2l5.6-2.7l9.4 0l4.9-1.3l4.4-1.9l4.9-2.2l8.9 1.3l3.7-1.5l4.2-1.3l4.9-.3l5-1.1l4.1-1.9l2.8-.7M580.2 283.8l3.9 1.1l4.7 1.4l3.6 1l5.5 1.2l4.3 1.3l6.3 1l5.5 .3l5.7 0l5.5 2.7l7.3 .9l4.4 1.3l7.9-1l6.3 .7l6.4 1.9l5.7 1.9l7.8-1.7l8.6-.3l8.6 1.6M697.8 300.5l5.8 .8l9.7-1l6.2 .8l10.8 1.5l9.8-1.1l7.3 2.7l8-1.2l10.4 1.1M775.6 305.8l6.9-.1l11.1-.9l8.4-.5l9-1.6l11.9 2.4l6.5-2.2M839.9 305.6l9.6-1.2l9.3 1.3l10.2-2.8l7 1.1l11.4-2l7.3 1.9l9.7-2l8.6 .1l10.9 .6l5.2-1.7l10.3-1.9l5.8 2.3l11.9-.3l4.3-1.9M971.7 297.1l5.4 .4l6.9-2M993.2 295.8l7.4 0l7.1-1.9l4.1-.9l5-.8l7.1-.1l5.6 1l7.6-3.5l3.2-.4l4.8-1.4l5.3-1.2l4.7-1.2l4.1-.8l3.2-1.3M581.5 290.9l3.2 .8l4.9 1.7l4.2 .7l4.3 1.7l4.7 .6l6 2.2l6.2-1.5l2.3 3.2l8.2-1l6.3 3.7l5.4-2.2l8.6 .4l6.7 1.3l4.8 3.1l9.5-1.4l4.1 0M680.7 307.1l9.3 .3l6.5 1.9l9.2-1.1l8.1 .4l6 1.6l10.7 1.7l9.1-3l9.3 2l6.3 0l12.3 .9l7.3-2.3l10.2 4.1l10-2.9l6.4 1.1l10 .5M821.4 313l11.3-1.6l8.6 1.3l6.9 .1l9.9-.9l10 .3l10.8 .7l5.7-3.8l9 3.1M905 310.8l7.6-1.6l9.5 2.1l9.5-1.8l6.3 .8l9.8-2.4l5.8 1.4l7.7-.7l7.9-1.3l8.7-.7l7.2-2.8l8.3-.5M998.2 303.7l8.1-.1l6.2-.6l6.6-4.3l3.6 2.4l7.4-.4l4-3.4l6-.2l4.7-1.4l5.1-1.3l3.8-1.3l4.9-.5l3.6-1.9M581.6 299l4.8 .4l4 2l3.8 1.1l4.5 .8l4.9 1l4.6 2.2l6.7 1.8l4-2.8l6.2 3.5l8.3 .4l2.7 .1M644.8 310.9l6.1-1.1l7.2 2.6l6.7 2l7.7-.7l7.2-.5l7.4 3l8.8-.3l8.5 1.3l10.4-1.6l8.7 1.5l8.4-.1l7.2-.8l8.3 .2l8.8 2.6M776.8 319.3l8-1.2l10.6 .4l6 .8l11.3 .7l7.5 1l10.2 .6l9.5-4l7.9 1.3l11.9 .3l9.8 1.5l9.2-1.3l9.3 0l5.6-1.9l9.5-1.2l11.5 1.2l5.7 1M929.5 315.6l9.8-.8l9.1 2.5l4.5-2.1l7.7 .9l8.6-2.3l9.4 .3l6.2-3.4l6.4-1.1l6.4 2.2l8.1-2.1l6.7-.7l5-1.2l5.8-1l5.9 .8l7.3-.7l3.4-2.1l5.2-1.9l4.7-1.2l4-.8l4.2-.7l4-1.1M582.1 305.5l3.3 2.4l4.4 .4l4 1.3l4.9 1.5l4.6 .7l7.1 .9l2.4 .9l6-.6l7.2 2l7 .7l3.6 1.6l8.1-.3l6.9 2.7l8.2 1.9l6.3 .4l5.7 .3l11.1-.6l5-.2l7.9 1.2l8.9-.3l10 3.7l5.8-.9l9.8-.1l9 .2l10 2.3M756.2 325.6l8.1 .5l10.1-.7l11.5 1.6l6.7-1.3l10.8 2.7l10.5-.3l8.8-2.2M829.5 327.9l11.3-2l8-.8M859.6 326.9l9.8 1.4l7.8-2.5l8.1 .9l11.7-2.5l6.7 2.4l7.6-.8l9.1-.9l11.5-2.5l7.2 1.6l8.8-1.4l8.3 1.9l4.4-3.1l8.4 1.2l10.1-.9l7.1-1.5l7.1-1.9l3.7 1l7.9-3.7l7.8-.4l3.9-1.1l7.4-.6l4.4 .6l7.9-3.1l3.8 1.2l4-1l5.1-1.5l3.8-1.2l4.2-1.6l3.5-1.1M582.3 313.7l4.1 .8l3.3 2.1l4.8 .4l4.2 1.6l5.1 .7l7-.7l4.1 3.7l5.4 .5l3.7 2.4M630.1 323.7l7.8 2.8l7.8 .8l6.2 1.4l6.1-1.6l8.2 .4l5.8 2.1l8.5 1.4l9.1-2.8l5.8 1.3l9 .6l9.7 .6l7.5 1.2l10.9 .6l5 2.5l12.5-3.4M758.6 334.3l9.2 .2l8 1l6.8-2.6l9.6-.2M801.9 332.9l8.8 1.3l9.6-1.2l12.5 3.5l9-3.4l8.1 3.2l8.6-1.8l11 1.4l7.9-2.8l9.6 1.6l7.2-1.4l10.5-1.3l7.5 .9M920.8 333.8l8.2-2.1l10.4-2.3l6.2 .1l8.9 2.5M961.7 331.2l6.7-.5l8.1-3.2l7.1 1.5l6.8-4.1l6 1.2l9-1.6l6.5-.2l6.8-1.5l5.6-.3l6.5-.3l5.2-2l3.5-1.2l4.3-.5l4.7-.8l4.1-1.1l5-1.1l3-1.7M582.7 321.4l3.5 .6l4 1.8l4 .9l5.6 .8l4.7 1.3l5.1-.3l6.3 3.3l3.3-.4l6.2 1.6l7 1.4l4 1.3l10.5-.7l4.1 1.4l9 .4l5.6-.1l9.2 1.1l8.2 1.8l5-.5l10.9 2.8l8.1-2.9l5.5 4l8.7-1l8.6 .8M739.1 342l10-1.2l7.9-1.3l9.9 2M783.4 341.7l10.3 1.1l11-1.9l6.3 1.2l10.2 1.4l11.3-.8l8.4 .6l6.9-1.6l10.3-1.3M867.1 340.6l10.5 .2l7.8 2.3M895 342.9l9.3-2.1l9.5-1.7M922.7 339.5l5.2 .2l8.5-.5l10.3 0M954.9 335.8l5.1 2.2l9.8 .1l6.8-3.9l5.8-1l7.6 2.2l8.4-.4l7.9-2.3l3.3-2.1l8-1.1l5.5 .5l3.7-2.7l9 .7l3.3-1.1l5.2-.8l4.4-1.2l3.7-1.5l4.1-1.5l4.2-.3M583.3 328.2l2.8 2l3.8 .7l4.8 1.8l4.1 .3l5.1 1.3l4 1.7l5.4-1.4l8.4 2.8l4.1 .1l7.9 3.8l3.1-.3M645.8 341.4l5.8 .1l8.2-.8l7.8 1l4.7 1.9l7 2.7l9.3-1.5l7.8 2.6l8.2-.3l10.8-.4M723.7 347.7l6.5 .1l8.5 .2l8.6-1.2M758.4 347.9l6.3 .1l10.8 2.6l9.2-1.1l10.2-.7M802.4 348.8l9.4 1.7l10-1.3l8.9-.4l10.8 1.8l9.6 1.2M869.7 349.6l6.8-.3l7.9 .7l11.1-3l9.6 2.2l8.4-3.2l8.4 0l5.6 1.8l11.1-.2l6.3-2.9l10.6-1.1l7.9 2.3l7.1-3.1l7.2-1.1l5.6 2.2l7.4-2.6l8.6-.4l5.7-.1l7.3 .3l3.4-3.1l8.3 .3l6-3.6l4.6 .8l4.8-1l4.8-1.5l3.8-.9l4.7-1.2l4.1-1l3.6-1.2M583.2 335.9l3.8 1.7l3.8 1.7l4.3 .3l4.4 1.5l5.4 1.3l4.8 2.5l3.5 .3l7.8 1.5l6.7-.3l5.4 2.5l6.3-2.9l5.1 3.8l6.9 1.3l7.3 .1l9.6 .2l4.3 .4l8.1 2.3l8.2-1.8l8.2 2l9.6 .3M713.6 355.3l7.3 .5l11.2 .8l7.2-2l10.7 2.9l7.4-2.2l7.4 2.7l9.4-1.9l12.1-.2l6.7-.1l10.5 .3M812.9 357.5l8.5 .9l7.4-.1l9.8-.2l11.5-2.2l9.2 1.7l7.3 0l8.6-1.1l12.3 .8l5.8 .9l11.6-2.7l6.2 .8l7.8-1.3l8.6 1.2l9.4-3.7l8.1 2.9l7.4-2.7l9.5-1.2l7.6-1.7l7 3.1l7.3-1.7l6.4-.8l6.6-1.2l9.3-1.4l5.7-1.5l4.4-1.9l5.5 1.2l7.4-.6l5-3.5l4.8 .1l4.4-.9l4.5-.2l4.5-1.2l4.2-2.2l3.8-1M583.2 343.7l3.8 1.3l3.5 .9l5.1 2l3.8 .2l4.6 2l7.3 2.6l3.2-2.8l4.9 2.5M627.3 355.6l5.6-.6l4.5-.7l6.5 2.5M651.7 359l8.8-1.3M665.2 358l6.7 1.7l10.9 .2M687.8 358.8l7.6 3.2l11.5-2.1l4.8 4.1l9.1-.4l9.4-2.5l10.4 3.1l7.9-.5l8.8 .5l8.6 .4M775.8 363.3l8.2 2l8 .9l11.8-1.8l9 1l8.3-.7l10.2-1l10.1 1.5l8.4 1.2l7.5-.6l11-2.5l8.7 1.4l10.5-1.1l6.1 0l8.9-1.2l11.5-.5l7.7-.4l8.8 1.3l5.7-.5l10.3-2.3l7 .7l8.7 .1l8.5-1.3l7.2-.2l7-3l5.8 .8l8.2 .9l5.7-.8l5.9-2.8l6.7-.6l7-2.3l3.6-1.4l5 1.1l5.4-2l4.4-.3l5.7-1.4l3.2-1.6l5-1.3l3.8-1.1M582.8 351.7l4 .8l4.6 1.8l4.2 .2l4 1.4l5.1 1.4l4.5 1l7.1 .4l3.8 .9l6.8-.2l7.3 1.7l4.1 2.7l5.3 2l8.4 0l7.2-2.1l6.3 1l10.1 3.6l6.6 .5l7.5-1.7l9.6 2.6l5.2-.7l7.3 2.7l10.3-1.5l6.8 1.8l8.9-.4l11.1 .2l9.7 1.8l8.4-1.8l7.2 2.3l10.3-2.2l9.2 0l7.7 1.3l9.6 .9M822.3 372.1l8.2 2.4M839.2 372.1l9.9-.6l8.2 2.5l10.6-1.2l9.6-2.2l7.6-.6l11.4 .9l7.1 .5l7 .1l11.7 .4l5.1-3.3l9.6 .9l6.9 .4l10.7-2.8l7.8-1.1l4.8 2.7l8.5-3.1l9.2-1.2l7.1 1.1l4.6-.9M1004.5 364.5l6.8-2.4l6.5 .4l6.3-3.6l2.4 2l7.2-3l4.3-.3l5.4-1.3l3.6-1l4.4-1.3l4.5-.8l3.1-2.2M584 359l3 1.1l4.2 1.9l4.5 .9l4.8 1.3l4.1 .2l6.9 1.7l4.8 1.3l3.5-1.5l5 2.7M634.3 368.8l4.8 .2l5.5 .6l6.3 .8l6.8 3.8l9.2 .4l5.1-1.1l10.2-.4l6.5 .7M696.7 377.8l6.9-1l10.6 1.8l6.7 .7l11.1-2.7l8 3.2l10.3-1.2l8.7 2.2l5.3-1.9l11.6 .2l8.2 1.8l10.9-2.1l5.9 .4l11.3 2.5l8.6-1.9l9.2 1.3l11.3-2.2M851 380.5l6.2 0l11.5-.7l5.9 .4l11.5-.6l9.1-.3l7.5-.5l8.3-1.5l9.7-1.1l9.5 3.1l5.6-1.9M945 378.2l10.1-2M967.5 375.5l7.7-1.4l9.1 .5l7.5-1l6.4-2.1l4.9-.1l6.7-.3l5.1-.7l8.6-3l2.8 .6l4.6-1.5l6.4-1.3l5.9-1.2l3.9-1.7l4.3-.3l4-1.6l4.3-2M583.1 366.7l4 .9l4.1 1.3l4.2 1.7l4.8 1.3l5.2 .5l6.4 2.1l5.4-1.5l3 .8l4.6 4l7.1-1.3l7.8 3.5l4.9-2.8l9.1 4l6.8-2.5l7.3 2.3l6.1-.4l9.6 2.8l7.3-1.5l8.4 .5l5.6 2l8.5 1.6l8.9-1l8.4 1.4l9.7-.5l7.5 2.3l9.9-2.4l9.1-.5l7.1 2.5l10.9 .7l9.8-2.5l9.9 .2l6.1 3.6l12.7-1.7l5.4-1.2l11.4 1.5l9.2 1.4l9.1-.8l10.9-3.2l9.1 2.8l9-2.8l5.3 1.6l8.6-2l12.5-.7l4.9 1.9l12-2.6l5.8-1.4l8.6 .4l7.5-.1l10.4 .7l4.7-1.9l8.5-.9l5.7 .8l9.9-.6l6.8-1.5l4-1.4l9.3-.1l5 .3l6.2-2.2l2.6-1.2l5.2-.6l6.8-1.8l5.1-1.3l4.5-1.1l4.2-1.1l4.1-1.2l3.4-1.3M583.7 374.4l4.3 1.4l3.4 .3l5.1 1.4l4.1 1.8l4.1 1l6.2 2.4l5.8-1.6l5.8 3.3M633.4 386.8l4.3-.1l7.7-1.3l6 1.4l9-.1l7.1 .9l8.6 3.4l6.4 .9l6.5-1.6l10.1 .9l6.3 1.6l8.1-.8l9.6 1.1M730.2 394.1l8.6-1.1l9.5-.3M757.9 395.5l7.2-.6l8.4-1.3l11 2.3l9.7-.4M804.2 394.5l8.2-.9l8.1 2.4l9.4-.2l11.7-1.3l6.6 .7l10.2 0l7.4-1.6l12.6 .4l8.2 2.2l8.7-2.5l6.1 1.2l12.4-1.7l7.1-1.1l6.9 1.8l7.9-1.4l11.5 .4l6.4-3.8l6.2 2.6l7.1-2.3l8.7-.9l9.4 .2l6.4-2.9l5.8 2.5l7.1-2.8l7.5-2l2.4 0l6.1 .5l5-3.1l6.1 .3l6.8-1.5l4.1-1l4.7-1.4l4.7-.6l3-1.4l4.7-1.6M584 382l3.5 .7l4.8 1.5l4.1 1.5l3.8 .6l4.7 1.4l4.9-.4l7.9 1l3.8 2.3l4 .4l8.4 .6l5.2 3.2l7.7-1.4l5.1 1.1l7.7 1.4l6.7-.9l7 2.8l10.5 .7l6.8-1.5l8.9 1.4l6.2 2l9.1 .7l5.8-2.2l12.3 3.5l5.1-2.1l10.4 .3l7.9 3.4M766.9 402l9.5-.5l7.1 .1l11.7-.1l6.4 3.1l11.9-1.4l6.1 .9l12.1-2.3l7.2 2.2l11.3 .2l8.3-2.7l10.1 2l8-1.2l7.7-1.8l8.3 .2l11.9 1.6l7.1-1.5l10.3 1.5l5.5-3.5l9.5 1.9l9.8-.4l7.3-1l6.2-2.4l8.6-.9l8.9 1.1l4.4 .5l7.4-4l6.6 1.1l8.1-2.6l4.1-1l6.8 0l4.7-1.1l8-1.6l5.3 .3l4-1.2l4.7-.7l5.6-1l3.4-1.9l4.1-.9l4.3-1.8M584.3 389.4l4 1.5l3.8 .5l4.3 1l3.8 1.2l5 1.2l4.2 .7l6.5 1l5.1 .1l7.7 3.7l5.6-.5l6.4-.5l4.2 2l6.3-.6l9.1 2.2l7.7 .8l7.9-.6l7.2 3.3l6.3 .3l6.8-2l10.4 3.9l6.9-1.8l7.6 .4l8.8 .5l10.2 .7l7.6 1.3l8.1-.9l12.6 .4l7.4 3l10.5-.8l7.7-1.8l7.5-.5l9 2.8l11.9-2.3l9.4-.5l6.9 3M851.2 410.3l7.7-1.4l8.9-.2l9.4 .2l7.3 1.9l9.9-.1l10.1-3.3l6.7-.3l8.1 2.2l8.2-2.4l7.9 1.3M945.6 405.4l6.8 2.4l9.7-4.3l7.6-.2l6.2-.6l8.4 1.7l4.6-.2l8.7-1.7l4-3.6l9.6-.8l4.6 .3l4 .1l5.6 .1l5.2-3l6.8-.3l5.4-1.2l4.4-1.2l4.2-1.2l3.4-1l3.8-2.1M584.5 397l3.9 .6l3.7 1.8l4.9 1l4.3 1.3l4.7 1.1l3.1 2l8.3 .9l5.7-1l4.8 2.2l7.2 1l6.5 2.1l3-.1l8.2 .7l8.4-.4l5.7 3.2l6.7-.4l9.9 .7l8.2-.4l5.5 .1l9.3 3.2l9.4-1.4l6.5-.2l7.5 1.4l8.4-.2l10.4-1l8.3 4.1l8.4-.1l9.9-1.2M783.8 416.9l10.7 .8l10.2 .2l7-.9M820.3 417.8l11.8 2.1M841.9 417.5l6.6 2.2l11.1-1.2l9.3 1.2l7.2-4l10.8 .1l6.5 1.5l10.4 .3l8.7 .6M921.3 416.8l8.2-2.9l8.6-.1l6.7 .5l7.6-1.6l7.7-.5l9.2 .9l8.3-.2l3.7-1.4l8.7-.6l4.8-.1l10-3.9l4.3-.1l6.6-1.5l6.2 .2l6.9-.9l1.6 .8l6.7-3.1l5.6-.7l4.6-1.6l3.8-.2l4-2.1l3.9-1.6M584.8 404.1l3.1 2l4.7 .7l4.6 1l4.5 1.1l4.7 1.3l2.8 1.2l8.7-.3l5.2 .4l3.8 2.8l7.6 2.5l5.9 1.1l7.3-1.6l6.4 .5l7.8 1.6l6.1 2.5l6.5-.3l7.4-.7l9.5 1.2l5.2 2.4l10.1-1.1l7.4-.8l10.4 0l6.1 2.4l10.2 1.6l7.7-2.7l8.8 2.9l9 .7l10.9-2.6l7.5-.2l9.4 2.9l8.3-.3M811.8 427.9l11.4-.4l6-1.1l12.2 .9l8.7 .2l7-3.1l11.3 2l6.6-1.6l11.9 1.3l8.8-1.9l7.5-.6l10.1 1.1l5.6-.4l9.5 .3l7.8-3.4l9.7 2.3l5.4-4.3l9.8 .3l7-.7l8.6 1.5l7-.4l4.8-3.3l9.6-.8l3.6-.7l5.9 1.9l9.7-3.3l3.2 .2l7.9-2.1l5.4 .3l3.8-1.8l4.5-1.1l5-1.4l3.6-.9l4.6-1.9l2.7-.8M584.5 412.3l3.8 .7l4.6 1.3l4 1.8l4.6 .7l4.1 1l5.5 1l4.6 2.8l8.2-.6l2.9 1l8.4-.2l6.9 2.1l5.5-.6l4.6 3.2l7.3-1l10 .4l3.9 .1l8.7 4l7.9-.5M705.9 430.1l9.4-.6l8.3 1.8M731.3 433.3l10.4-1M747.7 432.7l8.6-1.5l11.5-.1l9.6 0l8.6 3.3l9 .1l7.1 0l11.7-1.7l9-1.1l9.1 2.3l6.3-1.1l10.8 1.8M859 434.2l8.7-.9l9.4-.2M884.8 432l8 1.2l11.1-1.7l6 .8l11.5-1.9l8.8-.4M938.5 429.9l4.9-1.1l8.9 1.6l10.4-.8l5.8-3.1l6.8-.3l8.2 1.6M988.6 424.4l9.3 .1M1004.2 424.5l3.9-.2M1015.2 420.3l4.5 1.4l7.3-3.7l6.4 2.7l3.3-2.6l4.9-1.3l5.4-.8l3.5-1.6l4.2-1l4.2-2.2M584.9 419.1l4.6 1.1l3.9 2.2l3.8 .8l5.1 1.3l4.7 1.2l4.9 1.6l6.4-1.2M623 429.9l7.2 .3l3.9 1.6l6.9-2.2l6.1 1.9l7.5 2.5l7.7-2.4M668.2 435.4l6 .6l9.3-1.3l8.7 .5l4.3 1.7l9.7 2.4l10.5-.1l4.7-.4l10.7-.1l6.5 .6M749.1 441.6l10 .1l6.3-2.7l10.7 2.1l8.3-.2l11.7-.4l8.8-1.1l5.8 2.4l9.5-.4l11.3 .9l8.9-.4l9.6-.4l8.4 0l9.5-2l7.5 .9l11.5-1.4l8.4 1.8l8.6 .6l8.4-4l8.2 1.9M927.1 437.1l11.4 2.4l5-3.4l8.8-.5l8.5 .5l6.9-2.2l6.3-1.4l9.6 2.2l5.1-2.3l9.8 1.3l4.9-3.7l7 1.3l3.3-3.9l5.7 1.9l8-3.3l6.3 1.6l2.9-2.1l5-1.6l4.4-.5l5.1-2.1l3.4-1.1l3.4-.4M586 426.8l3.7 1.7l4.1 .7l4.3 .9l4.2 1.5l4.8 1.1l6.2-.7l5.1 1.9l3.9 .4l5 .8l8.8 2.5l4.2-.6l5.7 2.4l7.1-.8l8.7 1.6l8.2 3.5l5.8 .1l8 .1l6.1 1.1l10.5 .5l6.3-1.9l10.3 2.5l7.1-1.2l9.8 .9l6.4 .6l11-.6l8.5 2.5l8 .3l9.4-1.8l6.4-.1l10.4 .2l10.6 2l6.5-1.8l11.2 2.6l9.5-.9l10.1 1.6l7.5-.2l8.3-2.2l10.9-1.1l10.1 2.6l8.5-1.9l6.7-1.4l9 2l7.5-2.7l9.5 0l9.4 1.6l6.1-3.6l10.9 1.7l6-2.2l6.7 .3l10.7-2.4l5-.6l8.5-.8l5.8 0l9.3 1.8l4.2-2.4l5.6-1.6l8.2-.9l3.5 .2l8.4 0l2.5-1.6l6.9-2.7l4.4 0l4.6-1.2l3.7-1.2l4-2.3l3.5-.9M586.1 434.1l3.9 1.6l3.5 1.4l4.7 1l4.5 1.8l5.3 .5l2.8-.1l6.1 2l5.4 .6l5 1.6l7.8-.2l6.8 4l7.7-1.6l3.3 1l6.9 1.2l8.9-.1l5.8 1.4l9 2.5l9-2.6l7.9 2.6l5.3-.8l11-.3l8 2.1l6.7 .6l10.1 1.6l9.8-.3l8-2.1l8.8 3.2M777.1 454.4l7.9 1.2l11.2-.1l5.7 2.2l11.7-.7l9.3-2.5l8.2 2.8l9.2 .4l8.5 .4l11.3-2.8l7-.6l8-1l9.3 1.1l10.1-1.5l8.3 2.8l10.1-1.2l6.3 .5l8.3-2.2l8.7 .7l7.9 .2l9.9-4.4l5.4 .9l9.6-.1M976.6 448.5l7.5-1.1l6.8 1l5.4-1l6.1-2l7-.9l5.4 1.6l8.1-4l2.8 1.5l4.7-2.4l5.9-.4l5.6-1.7l4.2-1.2l3.8-.6l4.9-1.3l2.7-1.7M587.2 442.5l3.8 .3l3.8 1.4l3.5 1.1l4.7 1.4l5.1 1.6l5.2 .6l4.9 1.3l6.2 .4l5.2 1.7l5.6 1.1l5.5 0l8.9 3.2l5.8-1.4l8.2 .2l6.6 2.5l4.2 .7l8.2-.8l10.5 1.2l5.5 1.8l10.5 1.1M715.4 460.2l10.3 3.1l5 .4l10.4-1.9l7 1.8M757.9 463.8l8.9-.6l8.9 2.2l10.1-.2l7-1.4l12.2 .6l8.2-.5l8.3-.6l9.5 .1l10-.2l9.4 1.4l8.5 .2l7.9-2.9l9.9 .5l8.5-.7l7.6 1.3l10.8-1.3l8.9 .7l5.7-2.8l9.5 1.9l9.5-3l8.5 1.7l6-.8l6.1 .3l10.8-3.5l4.9-.4l6.9 2.2l9.3-3.5l3.7-1.4l6.7-.4l7.8-1.4l5.5-.1l7.3 1.4l3.9-.8l5-3.6l5.4-.7l5.8-1l4.4-.9l3.8-1.5l4.1-.2l3.9-1.6M588.6 449.4l3.1 .9l3.9 1.3l4.4 1.2l4.1 2l5.1 .7l6.3 1.6l5.2 .5M624.6 456.7l7.8 1.8l5.6 1.9l5.8 1.1l5.5 .2l4.8 .4l6.7 1.9l7.9 1.6l8.2-1.4l6.4 3.9l10.9 .3M707.9 467.3l9.1 1.9l8.3 1l7.2-.7l8.1 1.4l8.7-1.5l8.8 .1l8.2 1.8M775.5 469.2l9.3 3.2l10.6 .5l8.9-1.5l7.6-1.5l10.5 2.2l8.2-2.3l10.6 1.8l7.6 1.2l11-1.9l8 .3l9.2 .5l7-3l10.5-.1l9.3-.2M912.1 471.2l7.2-4l8.8-.6l8 2.8l8-2.7l7.3-1.4l8.3 1.7l7.7-3.4l7.9 1.8l5.6-.6l6-.4l7.8-2.4l5-1l8.5 .4l4.1-.2l6.1-2.3l4.1 .6l8.6-2l3.1-2.2l4.4-.5l5.2-1.6l3.5-.7l4.6-1.2l3.4-1.4M589.9 456.2l3 1l4.9 1.5l4.4 1.1l3.6 1.3l5.3 1.1l5.2-.9l2.6 1.7l6.8 3.2l5.3-2l5.1 4.7M643 467.1l9 3.4l4.3-.5l7.2-.5l9.2-.4l6.2 3.7l7.8 0l8.2 1.6l6.7-2.4l8.9 1l5.1 1.1l9.7 .6l8.1 .3l7.7 2.1l10.3-2.3l9.6 .8l6.5 2.7l11 1l9-1.5l9.1 1.2l8.7 .8l9.5-1.9l7.1 1.1l10.5-.1l7.1-2.7l8.1 3.1l12.1-3.6l6.7 2.2l9.4-2.5l10.2 2.1l6.5-1l8.9 .3l10.5-.7l6.1-1.4l10.3 1.1l6.2 .2M943.4 475.8l9-4.4l5.8-.8M967.6 470.7l4.3 .6l9.9-.3l6.6-.8l5.4-1.6l6.4-2.7l4.4 3.1l6.1-3.8l7.1 .8l3.8-.8l7.2-3.9l4.3 1.2l5.2-2.1l4.3-1.2l3.9-.9l4.6-1.1l3.6-1.4M591.8 461.6l3.7 2.1l3.3 1.5l4.8 .4l3.4 1.8l5.7 .5l4.7-.3l3.1 2.9l8.8 2.3l4.9 .5l3.9-.1l5.9-.1l6.4 1.8l6-.4l9.5 2.6l5.1-.8l8.8 .1l8 3.7M695.9 478.2l7.2 2.1l5.7 1.7l8-2l10.8 3.7M735.3 480.7l7.4 2.3l7.6 1.3l9.4-.9l9-1.8l10.3 3.7l9-1l7-.8l8-.3l10.4 .8l9.7 2.4l7.1-.5l9.4-1.8l8.8 .6l9.5-2.1l9.4-.3l7.6 1l10.9 1.1l7.7-1.5l7.3-.2l9.2-.5l8.4-1.5l7.6 .1l6.9-1.7l10.6 .4l7.6 1.4l7.3-2.1l8.1-.4l4.1 .2l8.7-1.8l7.7-.2l7.6-1l3.1-.8l8.5-3.5l5.7 1.6l5.6-1.9l4-.3l4.8-.1l5.6-2.2l5.2-1.4l3.8-.5l5.2-1.5l3.7-1.5l3-1.3M592.5 468.6l4.5 1.1l4.1 1l3.3 1.8l4.7 1.5l4 1.1l3.8 1.9l7.3-2.1l6.5 2.1l4 3.5l5.4-2.5l5.4 3.6l6.1-.9l6.8 1.4l6.4 2.9l10.1-2.7l4.1 2.5l10.6 1.6l4.2 .9l7.3-.8l10.6 .3l7.6 1.7l6.3-1.8l8.8 .2l7.8 .3l9.2 3l7.9-.6l8.5-.8M777.5 492l8.2-3.1M797.2 489.9l7.1 .6l9.2-1.6l9.7 3.5l6.9-.1M841.5 491.2l8.4-.8l8.7 1.7l9.5-1.7l9.1-2.3l6.9-.3l9.4 2.2l8-2.4l6.5 2.2l10.2-1.7l8.8-1.8l7.8 .8l9 .3l7.7-.1l5.2-1.2l6.7-2l9-.9l6.2 .2l8.8-2.4l6.2-.8l6.7-.7l4.8 .7l3.2-1.1l6.9-.7l6.3-.4l4.3-1.9l5.6-.9l5-1l3.9-1.4l3.6-1.7l3.9-1.3l3.9-1.2M594.8 474.3l3.5 1.5l3.6 2.2l4.3 .7l4.7 1.6l3.7 .7l4.8-.7l7 2.1l2.3 .8l8.4 .8l4.7 2.1l6.2 2l6.9 .4l4.9 .8l6.8 .9l8.5 1.9l4.5 .2l10.3-1.4l6.7 2.9l8.1 .9l6.3 .2l10-1.8l6.7 1.2l6.3-1l11.4 3.6l6.1-.7l11.2-1.8M769 497.8l9.9 .7M787.8 497.9l8.8 .5l7.4-2.6l11.4 .3l8.7 0l6.5-.7l8.5 3.7l9.4-.1l7.8-2.6l11 2.1l7.1-2.4l9.6-.7l6.9-.1l10.9 0l7.8-1.5l7.1 .8M924.3 493.3l11 1.9l7.8-2.4l7.8-.2l4.2-.9l10.7-1.4l4.6-1.7l7.1-.7l9.1 .8l3.7-1.5l7.5-1.5l6.8-.3l4.6 1.6l5.6-3.3l6.6 1.2l4.8-2.8l4.6-1.4l4.6-.6l3.4-1.7l4.2-1.1l4.4-.8l3.5-1.7M595.2 480.8l3.9 2l4.1 .8l3.3 1.3l4.4 1l5.1 1.7l3.8 2.8l4.4-1.7l8.6 2.6l4-.4l6.6 1.7l3.9 1.1l9.5 2.2l3.4-2l6.2 2.3l9.4 2.3l6.8-1.6M691.1 496.2l5.9 3.3l6.9 1.1l9.6-.6l6.1 1.9l6.4-2.8l8.3 2l10.2 .3l7.8 .2l7.5 2.6l9.6-1.2l7.8-1.3l8.5 2.7l8.8-1.8l10.6-.7l8.5 1.5l9.9 1.1l6.8-2.4l11.5-.6l8.7 1.3M858.8 504.6l8-1.8l8.2-1.8l10.6 3.5l4.8-.4l9.1-4.1l11.1 .2l5.5 1.8l10-2.2l5.2 1.1l7.8-.5l9-.9l6.4-1.7l10.3-2l5.4 2.6l7.2-2.5l8.2 .1l5.5-.5l6.5-3M1000.6 490.7l7.7 1.8l4.2-2.3l5.5-1.8l5.2-.1l5.5-.9l5.2-.9l3.6-1.5l4.6-1.3l3.6-1.4l3.9-1.2M595.9 487.5l4.6 1l2.9 1.3l4.1 1.4l4.9 1.3l4.6 1l3 3.1l6.9-.9l3.3 1.6l8.9-.9l2.4 2.2M649.9 497.9l4.3 4.7l8.6 0l6.9-2l6.9 1.4l4.7 3.6l7.4-2.5l9.7 1.6l7.5-.3l6.2 .6l6.6 2M727.9 506.3l10.1 2.1l5.6-1.7l10.6 .2l6.1 .6l11.2 0l6.3 2.3l10.8 .8l7.6 .9l8.3 .2l10.1-.4l7.8-2.1l7.5 1.7l8.5-1.6M848.9 511.8l8.9-1.5l6.7-2.8M881.3 508.1l8.8 1l9.7-1.4l8.3 .9l9.8-1.1l6.7-1.5l9-1.6l5.4 .6l9.3 1l8.1-.7l5.6-3.2l6.6 1.5l8.7 .6l5.1-1.8l5.7-2.3l5.3-.2l7.3-1.4l6.1-.2l7.4 .1l2.9-1.3l5.2-2.3l5.8-.7l3.9-1.9l4.3-.2l3.9-2.2l4.1-.9l4.3-1.5M597 493.6l4.2 2l3.4 .5l4.4 1.5l3.5 1l4.6 1.5l3.9 2.3l6.5-1.7l4.3 2.6l8.4 2.9l5.7-1.4l2.8 2.5l8.4-1.8l4.7 .9l5.5 3.1l7.5 .2l8.4-.6l5.3 2.6l10.4-1.2l6 2.7l9.3-2l6.6 2.1l9.1-1.2l6.5 1l8.2 3.5l10.2-3.6l5.7 1.6l9.1 1.6l8.7-1l7.9 1.4l9.8-.2l7.8-.2l10.4 0l6 .9l10.5-.3l7.6-.1M848.2 518l7.4-.1M867.5 516.9l7.7 .5l9-2.8l8.4 1.2l5.1 .4l8.6-4l9 1.4l10.1-1l5.6 .9l6.6-1.3l7.6-1.5l9-1l6.6 1.8l7.9-1.8l5.5 0l7.9-1l7.3-2.2l6.8 .2l2.6-.8l5.6-3l5.2 2M1015.6 500.3l8.2-.3l2.8 0l4.2-1.4l4.8-1.1l4.3-.5l2.8-1.8l4.5-1.4M598.7 499.8l3.7 2.3l3.8 .4l3.5 1.4l5.1 1.5l4.3 1.5l5.2 2.2M627.8 508.8l7 1.8l3-.8l6.5 .6l8.6 3.3l6 1l5.3 .5l5.2-1.7M678.3 515.8l5.7-.6l5.2 3.8l7.4-.6l9.5 .9l7.3-1.6l9 .2l8.3 4l4.5-.8l9-1.8l10.7 1.9l6-.8l8.7 2.1l9.7-1.7l7.7 3.3l7.2-.6l8.8 0M814.1 522l9-.9l6.6 3.5l10.2 0l8.5-4l6.6 1l9.6 2.4l9.9-2.1l8.3 1.3l7.4-1.7l8.3 .7l10 .1M914.1 519.2l10.8 .5l4.5-1.4l7.3-1.4l9.1 2.1l7.4-2.4l7.2 .4l8.1 0l6.5-2.4l4.4-.4M988.8 515.1l3.1-1.5l7-3.3l7.9-.8l5.4 .8l2.4-1.3l7.6-2.3l3-.6l4.4-.6l5-1.5l4-.5l3.1-1.4l3.3-1.7M600.8 507.2l3.7 .5l3.7 1.2l4.3 1.6l3.6 1.7l4.8 .6l5.9-.2l2.3 4l5.7 0l5.9-.5M645.1 518.9l8.8-1.4l5.1 1l6.6 2.1l4.3 2.7l9.8-1.3l7 1.5l3.9-.1l10.3 2.8l6.5-.9l8.9-1.1l5.3 .2l9.7 4l5.4-2.2l8.5 2.4l10.4-2.6l7.4 3.7M769.9 527.2l8.7 2.8l8.5-2.4l7.5 3.1l9.5-2.6l11.3 .7l8.1 1.9l6.1-.5l9.9-1.1l6.9-1.2l9.9 .2l8.7 1.1l9-1.9l7.9 1.3l9.9 .2l7.7-1.1l7.5 .3l7-.2l10.4-.5l4.9-3.6l7.6 3l10.2-.4M952.8 522.1l7.8 2.4l5.9-4.3l6 1.2l6.1-2l9 1.9l4.5-1.9l7.9-2.8l3.5-1.6l5.1 .6l6.9-.5l3-2.8l5.3 .1l4.4-.9l5.2-.7l3.2-1.9l4.3-.2l3.1-1.7M603.2 513.3l3.1 1.3l3.8 1.6l3.2 .7l4.7 1.2l4 1.7l4.6-.6l5.4 3.1l4.7 .2l6.2 2.2l5.7 .3l4.5 2l5.7-1.3l8.1 .7l6.4 .1l4.9 1.2l9.6 .1l3.7 .5l9.6 3M709.2 532.9l6.2 0l6.3 .7l9-.7l9.6 1.7l6.2 .4l7.1-2.7l9.9 2.8l9.5-.1l7.6-1.7l7.2 3.8l9.1-1.4l8 1.7l9.6 .1l8.5-1.3l7.6-2.4l7.8 1.4l10.4-.9l9.5 2.4l7.9-2.5l7.9-1.3l7.9 .9l8.6 .9l8-2.5l8.1 .5l7.3-.5l9.7-.6M929.3 530.9l9.9 .4l6.1-.2M951.1 529.7l8 1.4M967.5 529.8l3.8-1.8l6.4 .2l5.8-3l8.8-.5l5.8 1.4l4.5-4l6.4-.5l5.8-1.4l4.3 .3l4-.8l5.1-1.7l3.9-1.4l3.9-.8l4.1-1.6l3.1-1.3M604.4 519.3l3.2 1.5l3.9 1.4l3.6 .6l4.9 1.2l4.3 1.2l4 2.7l7-.3l2.9 1.6l8 2.1l2.4-.4l5.7-.9l8.9 2.7l4.6 2.1l6.6-2l6.7 4.1l7.9 .7l4.9-2.9l6.8 4l10.3-2.1l5.6 1.4l8.2 2l5.6 1.1l9.2-2.4l8.7 1.3l7.4 1.2l6.9-.5l8.7-1.3l9.8 .2l9.5 3.1l7.4-.4l8.5 1.1l8.1-2.8l8.1 3l8.8-2.2l7.3-1.1l11.8 2.6l7.1-1.9l7.5-.8l7.8 1.7l7.3-1l10-2.2l7.1 2.5l10.7-2.4l5.2 .2l8.8-.4l7.4-.1l9.3-.1l4.3-2.9l9.4 1.6l6.9-2.6l4.8 1.1l6.5-2.1l8.6-.2l3.5 .6l9.1-4l4.4-.9l3.9 2.3l8.2-2.5l2.5-2.1l5.1-1.8l6 .5l4.7-1l3.5-.6l3.8-2.3l4.6-.8l2.8-.7M605.9 526.2l4.4 1.4l3.2 .8l3.8 .8l4.1 1.4l5.1 1.6l3.7 2.7l5.3-.6l3.5-.7l7.5 2.6l4.6 .9l4.2 1.9l7.7 1l7.7-1l5.4 1.3l6.6 1.7M687.1 542l10.5 .2l5.4-.3l7.9 2.6l5.1-.6l8.3 2.6l8.4 .8l9.4-.5l6.4 1.3l8.9-.8l6.2 .9l8.8 1l7.2-2.2l10.9-.4l8.5 2.4l8.7-1.7l9-.3l5.8 2.3l10.8 .1l7.9 .8l8.7-1.5l5.8 .6l11.1-3.1l6.7 2.9M883.8 545.9l6.1 2.4M900 545.7l5.6 .6l9.5-2.4l5 2.7l7.1-.6l10.1-.9l5.9-3.4l7.3 2.8l7.6-4.3l8.1 2.6l4.9-1.2l6.5-.5M988.4 537.3l8.8-2l5.5-.1l5.3-1.3l3.3 .3l6.3 .8l4-3.4l3.4-.5l4.4-1.8l4.2-.9l3.9-1.1l2.6-1.4M608.1 531.7l3.8 1.2l3.8 1.6l3.2 1l4.2 2l5 1.1l5.4 1l3.3-.7l4.9 1.4l4.5 4l4.7 .8l7.3-2.2l6.2 .6l8.1 3.1l3-.1l6.9 1.6M690 547.9l7 .7l8.7 2.7l4-1.2l8.3-.6l8.1 1.9l6.7 2.2M743 551.8l7.1-.5l6 .3l9.4 1.8l8.3 .2l7.2 1.4l9.9-.5M797.4 552.6l11.2 3.5l8.7-2l7.1 .9l8.7-1.9l7.1 .2l8.4-.2l8 2.7l8.1-.1l10.2-1.4l7.5-.1l6.3-1.8l9.3-1.4l8.7 2.8M912.7 552.2l8.6 .9l9-2.3l3.9 1.6l10.1-1.8l6.9-3.1l6.7 2.9l5.4-3.9l6.8 1.1l7.6-1.6l5.1-1.1l5.1-1.3l5.3 .9l8.1-.2l4.9-2.5l4.9-2.3l4.8 0l4.7-1.3l3.6-.4l4.5-2.3l3.6-.7l3.9-.9l2.6-2M609.4 538.1l3.8 1.5l4.1 1.5l2.9 1.6l4.2 .5l4.2 1.1l5.2 2.5l4.1-1.3l4.9 2.1l4.5-.4l6.2 4.1l6 .4l5.8 1.9l5.7-1.2l5.9 2l9.6 1.3l5.9-2.3l6.7 3.4l7.2-2.3M711.7 556.3l7.2 .1l9.6 1.8l5.9 .8l7.5-2M751.2 559.1l7.7 .1l7.5 1.2l6.9-1.2l9.9 1.7l7.6-.6l9.1 2.4l5.9-.1l10.3-.4l8.4-.2l8.5-.2l7.8-.9l8.9 .5l6.5 1.4l9.3-.6l7.6-.7M882.7 559.3l8-1M898.9 560.6l7.3-.3l6.3-1.8l7.2 1.1l10.7-2.6l3.5-1l10.7-1l4 .2l7.4-.8l7.9 1.6l5.3-1.6M976 553.1l6.2 .1l7.2-1.7l6.3-2.3l4.4 1.6M1005.7 546.8l3 1.2l7.1-3.1l3.1 .1l4.7-1.7l4-.3l3.4-2l4.2-1.3l3.2-1.3M610.8 544.6l3.8 .7l3.6 1.8l3.3 .8l4.8 1l3.7 1.4l6.6 .1l2.2 2.8l4.9-.7l5.2 .8l6.6 .7l6.3 2.4l6.6 .4l2.8 2l7 .2l7.4-1.1l6.2 .9l6.8 2.3l7.6 2.3l8.9-.4l5.6-1.4l6.8 1.2l8.4 .6l5.7 1.1l10.6-.7l7.9-.4l6.8 2.2l6.9 .4l11.2 1l6.2 1.3l7.2-.6l8.8-2.4l7.7 1.7l10.1-.8l6-1l10.2 .7l8.6 1.9l7.5-2.3l7.7 2l10.1-2.8l5.5-.2l8.6 1.2l7.3 .2l7.3-.7l9.5 .3l5.6-3.4l9.4 .9l9 .1M941.6 563.5l7.7-2.1l7.2-1.9l6.4-1l8.1-.6M973.9 558.7l8.7-2.4l5.1-.5l7.3-.6l4.6-.7l6.4-1l3.4 .4l5.9-2.9l2.7-.4l4.3-1.1l4.4-1.1l3.9-1.1l3.3-2.4l3.2-.3M612.5 549.1l3.9 1.9l2.8 1.3l3.7 .8l4.2 1.3l4.1 1.1l3.4 1.4l7.9 1.8l5-.8l3.3 3.2l6.3-1.5l5.8 2.2l5-.8l6.4 1.5l5.4 3.6l8-1l4.1 1.9M699.5 566.8l9.3 .9l4 1.1l6.8-1.1l7.2 1.8l9.2-1.6l7.3 2.8l6.7-1.2l9.7 1.5l6.4-.7l8.6 1.7l8.7-.9l6.8 .9l8.5-1.3l7.6 1.9l8.7-2l10.5 3.3l8.1 .1l9.2-2.8l7.3 .8l8.8 1.5l8.4-1.9l5-1.3l10.8 2.2l6.1-2.1l9.7 1l7.6 .4l8.4-2.4l4.5 .7M927.7 569l8.6 .8l7-3.9l6.7-1.1l5.6 1.3l7.9 1.2l5.9-3l4.8 1l5.5-2l8.8-.4l4.4 0l6.2-4.6l5.8-1.1l2.5 2.6l4.4-2.8l6.3-1.2l3.6-1.4l4.7-.8l3-.7l3.7-1.4l3.8-2M614.3 554.9l3.3 1.3l3.5 1.8l3.5 1.6l4.4 .3l4.4 1.3l5.5 3.3l1.9-1.4l4.6 2.9l7.5-1.6l6.5 1.5l2.8 3.6l8.2-2.6l6.4 4.4l5.8-1.1l5.5-.8l6.8 4.2l7.2-2.2l6.6 2.6l5.1 1.5l6.8-2.8l8.2 2.1l8.7 2.4l8.5-.3l7.1 .1l5.3 .5l10 0l8-2.2l8 3.6l6.1-.7l11.3-1.6l6.7 1.5l9.5-.3l8.3-.6l8.8 1.8l5.9 0l9.7-1l7.8 .6l9.1 .2l6.7-.8l6.8-2l9.1-.5l8.4-1l6.2 1.5l8.6-1.4l6 .7l9.7 .8l5.8-3.3l7.4 1.8l6.8-4.1l6 1.2l5.6 1M968.2 570.4l5.2-1.6l5.7 .2l8.8-3.4l2.5-.3l6.4 1.6l7.4-.4l3.5-4.2l6.3 .9l3-2l3.8-.9l4.3-1.6l3.7-1.3l3.5-1.1l3.4-.8M615.5 560.9l3.2 1.5l3.1 1.3l4.3 1.1l4.4 1.2l3.9 .6l3.7 3l3.4-2l5.6 4.4l6.1 1l4.7-2.6l7.6 1.8l3.2 1.2l8.1 3.2l5.4-.3l4.7-.6l9.2-.1l5.2 .5l8.4 2.6l6.9 0l6.7 1.5l6.9-1.3l5.9 3.4M745.9 582.1l7.8-.6l5.3 2.4l8.8 .3l7.5 .2l9.5-2.8l6.9 2.4l10.9-.8l6.8 1.6l5.7-2.3l9 2l10.3 .8l6.7-.3l7.2-.2l10.9-.5l7 .6l8.9-4.1l8 .6l5.8 1l9.6 1.1M911.1 581.4l7.5-.6l9.4-1.7l7.2 1l8.3-.7l5.2-1.3M953.2 577.1l9.8-1l5.3-2.3M974.2 576.5l5.9-4.1l5.5-.3M992.2 572.8l4.5-1.4l6.7 .6l3.9-2.7l4.5-1.2l4.8-.5l3.5-1.8l4.2-1.1l4.1-1.2l3.8-1.2l2.5-1.9M616.1 566.1l3.5 1.3l3.1 1.5l4.8 1.7l3.3 1.1l4.7 1l4.7-.3l4 3.8l4.6-2l7.4 1.9l4 1.7l3.2 1.8l9.3 1.5l3.2-1.2l7.6 1.8l5.2 .7l8.9 0l6 2.9l7.4-1.8l6.3 2.6l4.9 .5l6.8 .8M739.8 586.3l8-.1l4.6 1.2l6.8-.8l9.5 .5l7.6 1.4l6.9 .3M793.7 589.4l5.6-.2l10.6-.6l7.6 2.2l8.9-2.2l5.2-.2l8.1-1.1l8.3 1.9l9.9-.5l8.3-.7l7.7-.6l6.2 2.5l10.4-1l8.2-1.7l5.1-1.5l9.5 2l8.3-2.4l6.8 0l7-1.5l6.3 .7l7.7-2.6l7.3 1.1l6-2.7M968.8 582.6l4.4-2.5l7.9-1.3l3.2 .6l8-1.4l2.6-1.4l7-.1l5.4-.9l5.7-3.8l3 .6l3.2-1.2l4.2-1.4l4-.3l3.8-2.1l2.8-1.6M617.4 571.4l3.1 2.5l4.1 1l3.2 .5l3.8 1.6l4.4 1.4l2.8 1.1l6.3-.8l3.8 3.9l7.6-1.9l4.6 2.3l6.7 .8l2.4 2.8l7.4 1.2l5.3-2.6l7.5 4l4.7-1.3l8.4 2.5l5.4-.8l9.3 2.2l5.9-.8l7.4 1.7l5.8-1.7l10.3 .9l4.5-.5l8.2 1.8l10.9 2l5.9-1.6l8.4 .7l6.4 2.1l11-3.3l7.4 1M816.7 593.6l9.4 0l9.2 0l8 2.9l8.3-.9M859.2 592.7l7.2-.4l8.1 3.5l5.2-.3l11.6-.8l6.8-2.3M912.8 592.6l6.6-.7l6.1 .4l9.3-2l6.4 .5l8-1.8l4.4 1l5.4-1.3l6.5-2.1l9-.5l6.2 .2l4.2-.7l4-.7l6-2.9l7.6-.5l3.9 .7l3.7-4l5.1 .1l4.2-1.3l4-.6l3.6-2.2l3.4-.8l3.4-2.1M617.7 577.1l3.3 2.3l3.7 1.2l3.7 1l4.2 1.4l3.8 .5l2.8 .2l8.5 1.1l2.8 3.9l4.2-2.6l5.7 2.4l5.1 3.1M671.8 589.1l4.8 2.7l7.7 2.1l4.6 .1l6.3-1.9l7 4.1l8.4-.3l6.5-.9M723.9 597.2l7.2-.2l10 .5l7.3 .5l7.2-.6l5.2 .7l10.5 1.8l6.5 .8l7.8-.3l8.7-.2l8-1.7M811.4 601.2l6.6 .6l6.2-2.8l9.6 .8l9.2 .4l8 .7l8.2-2.3l5.6 .5l7.4 .5l8.5 .1l9.2-.2l5.4-1.1l9.8 1.1l6.8-3.3l9.2 .8l7.4-2.4l3.9 1.6l7-.4l9.3-1l6-2l6.1 1.8l5.2-.6l5.4-2.6l5.9-.4l9.1 .6l5.6-3.5l2.1-.5l4.8-1l5.4-1l5.3-.6l4.4-.8l4.1-1.4l4-1.1l4.4-1l3.2-1.3l3-2.4M618.8 582.9l3.6 1.3l3.5 2.1l3 1.2l3.9 .9l4.8 1.5l5.4-1l3 4.4M651.1 594.4l4.9 .1l6 .3l7.2 1.4l2.4 .9l8.9 1.3l6.1-2.2l3.8 1.4l5.9 1.6l9.6 .8l5 1.9l5.3 .8l8.4-1.4l6.8 3.3l7.9-.4l8.5 1l7.5-2.9l6.9 2.2l8.3-1M779.1 604.4l6.5-.7M795.1 605.4l8.3 .3l5.3-.4l9.4 .5M826.2 604.3l7 .3l9.7 .6l6.5 1l9.6-2M867.5 607l5-2.5l7.4 .6l9.6-.5l5.4-.1l10.8-1.8l6.8 1.4M917.7 604.7l8.9-.9l6-2.5l7.7-.8l6.8-1.4l6.7-.6l6.3-1l7.3 .7l6.9-1.1l5.5 1.2l4.3-2.1l4.5-3.4l7.3-.8l4-.6M1003.1 593l5.7-1.2l5.5-2.9l4.1-.5l3.1-1.4l4.2-1.6l3.1-1.6l3.4-.5M620.1 588.2l3.4 1.5l2.5 1.3l4.6 1.2l3.7 2l4.2 .8l5.9 2.8l1.4-2.7l5.2 4.2M656.6 598.3l7.6 0l3 2.6l5.3 0l5.6 3l8.9-1.8l3.7 4.2l6.3 .3l6.4-1.5l7.4 1l6.3-.3l10.2 1.6l6.4 .9l4.5-1.1l11.1 .8l6.5 .2M761.5 609.4l9.3 2.2l9.1-.7l4.4 .9l10.8-2.1l6.7 1.6l8.9 1.6l5.4-2l8 .3l9-.7l9.1 1.2l5.8-1l9.1 1M866.8 612.3l8.5-2.6l5.9-.4l8.6-1.1l5.3 2.6l9.8 .4l5-3.6l9.3-.4l8.5-1l4.7-.1M941.9 607.9l3.6-3.2l7.5 .5l4.9-2.4l6.8-1l8.3 .2l5.8-.6l4.4-.5l4 .8l5.4-2.8l5-.1l6.4-2.2l5.2-.9l3.5-.4l4.8-2.2l3.4-.1l3.8-1.7l3.8-.9l3.7-2.3M620.2 593.7l3.1 2.3l3.9 1.2l3.5 .7l3.8 1.2l4.8 1.2l3.4 1.6l5.8-1.1l5.9 2.1M658.4 603.8l3.9 1.4l5.2-.2l6.6 3.7l4.5-.3l9 0M692.9 610l5.8 1.6l6.3-2.1l6.4 .8l5.7 4.3l8.4-1.9l9.4-.4l3.5 2.3M747.2 613.9l6.7 1M762.3 615.3l6.6 1.3l7.6-.7l9.7-1.2l6.4 1.5l10-.9l8.4 .6l8.2 3.3M827.5 619l8.2-2.7l8 .5l6.8-1.1l7.5 .6l6.1 2.1l10.7-.9l6.1 .3l8.4-2.8l8.2 2l8-1.2l7.4 0l4.6-3.3l6.7 2l8.9-2.2l6 1.8l6.6-1l8.4-1l6.2-3.5l5.4-.4l5.1-.9l6.9 1.9M987.2 604.9l6-.7M999.9 603.6l2 .6l6.9-4.2l3.3 0l5.3-.9l3.9-.5l3-1.4l3.2-1.6l3-1.5M621.5 599.4l2.6 2.1l4.3 .9l2.8 1.8l4.6 .9l3.8 .6l4.5-.3l4 2.8l4.3 .8l4.5-.1l8.7 3l2.7 1.5l7.8 1.1l3.4-2.5l6.6 3l7.8 .9l4.3 .2l7.6 .8l4.8-.9l7.3 .6l9.1 3.7l7.6-2.5l4.2 2.7l10-.6l7.1-.1l5.6 .7l9.4-.3l7.4 .7l9.8 2.7l7.5-.3l6.8-1.7l8.3 1.9l6.1 1.2M825.1 622.3l9.9-.1l7-.6l8.9 1.2l7.7 0l6.9-1.8l8.7 1l8.8-2.3l6 .5l6.6 .8l8.2-2l8.8 .5l7.5-1.4l4.8-.4l7.5 2.2l8.8-1l5.1-.4l4.6-2.2l9.1-1.9l5.1 .5l4.3-1.1l8.6-.4l3.4 .8l6.2-4.7l4.6 2.3l6.3-1.2l4.9-1.7l5.1 .3l3.2-3.1l4-1.3l3.9-1.2l4.7-.8l3.2-1.1l3-1.6M622 604.8l3.2 2.1l3.2 1.4l4.3 .4l3.5 2l4.5 1.4l2.7 0l5.2 3l4.2 1.5l7.9-1.9l3.7 .6l6.8 2.4l4.6 .3l4.2 1.9l6.5 .9l8.7 .1M698.8 621.9l6.7 1.2l8.9 1.2l4.2 1l9.2 .6l5.8 0l8.4 .8l4.7-2.3l9 3.6l8.7-.9l7.5 1.6l6.7 .6l6.3-3.2l9 .2l9.9 1.1l8.2 2.9l4.1-.5l8.1 .1l8.6-2l10.9 .2l4.7-.2l10.6-1.1l5.9 .2l7.4-.2l7.2 .8l9.7-.7l5.7-1.2l8.4 .7l8.7 .5l6.8-3.6l4.8 2.6l7.3-.9l6.4-3l10.2 1.7l5.4-2.3M958.7 620l4.3-.8l6.4 .4l9.2-.7l3.1-1.1l5.2 1l6.8-4.8l4.9 1.1l3.6-.4l6.5-3.8l3.4 1l3.8-1.1l4.2-2.1l3.4-.7l2.8-.9l4.2-1.9M622.5 611.2l3 1.6l3.3 .8l4.1 .8l3.8 2l4.7 1.4l2.7 2.3l4.1-2.2l7.6 2.9l3.6-1.2l5.2 2.4l5.5-.3l5.4 2.9l5.9-1.3l5.6 2.7l7.1 1l4.9 .5l5.8-.8l7 2.3l6.3 .5l9.4 1l8.3-.6l5.2 2.7l8.1-2l8.9 .5l6 1.5l5.7-1.6l9.5 .5l6.9 3l10 .3l4.3-1.6l10.7-.8l6.7 .3l6.9 2.1l10.3-1.1M842.3 632.3l7.3 1l8.4 .4l8.4 .5l7.1-1.6l7.2-.9l6.3 .7l7.8 .2l10.5-1.9l5.1 1.9l7.5-3.8l6.7 2.9l7.1-2.3l8.5 .5l6.3-2.8l4.8 1.6l6.1-3.3l8.8-1.1M969.9 626.8l4.7-4l7.9 2.2l4-1.9l4.7 .3l6.4-1.6l3-1.8l4.2-1.3l6.6-1.6l3.8-.6l3.5-1.4l4-1.7l2.9-.9l3.3-1.7M622.8 616.9l4.1 .9l3.5 .7l3.2 1.4l4.2 1.4l3.3 1.7l3.4 .8l7.1-.8l4.5 3.9l4.6 1.8l4.9 .5l3.6-2l7.9 .9l3.7 1.7l8 .6l4.6 2l5.6 .5M705.4 635l8.3-2.2l6.7 .6l5.9 3l6.7-1.2l7.1 2.5l8.1-2.3l6.4 1.8l11 .4l5.2 0l7.7 3.1M788.5 640.8l6.5 .3l6.5-2.8l10 2.5l5.3 0l8.3-2.9l6.9 1.7l10.1 1l9.6-2.6l7.5 2l6.1-2.3l7.6 1.5l8.8-2.7l8.5 .7l6.6 2.4l7.3-.9l7.2 0l6.3-1.3l7.2-1.4l6.7-2.2l7-.8l5.7-.7l7-1.1M959.2 631.4l3 .3l6.6-1.4l8.8 1.2l5.6-3.3l2.2-.1l8.4-.6l3.2-1.3l6.5-1.3l1.4-1.7l5.4-1l4.5-1l3.7-.3l3.4-1.9l3.5-1.8l3.1-.9M623.6 621.7l3.7 1.5l2.9 1.5l4 1.3l4.1 1.7l3.7 0l2.8 2.7l5.9-1.5l6.3 2.9l4.3 2l5.6 .6l5.7 1.7l5.1-2.5l3.2 1.7l9 .8l6.2 3.1M700.7 637.4l5.1 3.7l6.5-.8l6.9 1.1l7.6 .9l7.3 .6l9.2 .5l6.2-2.3l7.2 2.3l7.8-.5l9.1 1.8l7.1 1.6l7.8-.6l4.7-.1l11-.3l8 1.2l5.2-1.8l9.6-.1l8.1-1l8.3 1.8l8.1-1.1l4.5 1.8l10-1.7l6.1 1.6l9-1.8l5.2-1.5l10.2-1.3l7.9 1.6M909.6 641.6l7.9 1.7l5.9 0l8.4-1.2l6.7-.9l7.6-1.7l6.9-2.3l5.4 2.2l6.9-1.9l4.7-1.2l4.4-.4l5-1.8l6.8-2l4.8-1M997.7 632.4l3.8-2.2l5.4 .3l2.9-2.2l4.2-.6l3.8-1.2l4-1.4l2.8-2l3.7-.6M624.3 627.6l3.8 1.4l2.8 .9l4.3 1.6l3.4 1.4l4.6 .6l4 2.3l5.2-1.4l5.5 4.6M661.1 636.2l3.3 1.1l7.1 3.8l5.4-.9l5 3.5l6.9-2l5.5 2l7-.1l7.6 .6l6.8 1.6M719.6 647.7l9.2-.9l6.7 .5l6.1 1.8l7.5-1l7.7 .3l9.1-.5l4.2 1l11 1.7l6 .5l8.4-1.8l6.4-.7l7.7 3.4l7.5-.4l10.1 .8l5.8-2l6.8 1.9l7.9-2.8l8.1 2.4l9.9-.7l7.6-.7l8.3-1.9l7.6 2.7l4.9-3.4l7 2l9.9-3l7.7-1.2M926.2 645.3l3.6-.7l8.8-.6l6.4 .2l7.3-1.9l4.1 2.8l7.9-4.2l5.2-.5l6.5 2.5l4.1-2l7-.9l2.4-3.3l7.6 .8l4.5-2.7l3.8 1.9l3.6-3.1l4.6-1l3.8-1.5l4-.8l3.5-1.8l2.6-.4M625.4 633l3.5 2l2.4 .8l3.6 1.6l3.6 1.3l5 .4l4.7 .4M652 640l3.5 1.1l7.7 2.5l5.2 2l3.7-1.5l6.9 .6l3.1 4.2l6.4-2M695.6 649.4l6.4 1.7l4.6-.2l6.6 2.1l7.2 0l8.9-.1l7.7 2.2l4.6-1.9l9.9 .1l3.7 3.1l8.5 .1l7.4-.3l6.8 .6l10.9-.6l7.8 .4l7.1-.2l6.9 1.1l6.4 .4M824.7 655.8l11.2-.7l5.4 2.1l9.4-2.7l4.9 0l11.2 .1l7.9 1.3l4.9-1.7l8.3-.5l6.2-1l8.9 2.3l8.1-.2M917.4 651.4l7 1.3l4.6-1.2l7.6-.2l9.4-1.7l2.8 .2l9-1.5l5.4-1.8l5.3 2.3l4.7-3.8l8.3 1l3.2-1.7M988.7 642l7.8-.3l2.7 .3l7.5-2.2l2.9-.8l4-.1l2.9-2l4.7-.5l2.3-1.8l4.1-2.1M625.2 638.8l3.3 1l3 1l4.1 1.9l3.8 1.7l4 .3l3.2 .8l6.7 3.4l5.5 1.2M662.5 648.3l4.9 3.2l6.7-.3l4 .9l6.4 2.3l6.7 1M695.6 652.7l7.9 1.6l6.2 1.5M722.5 656.1l7.4 2.1l5.2 .6l6 1.8l8.1 .9l9-2l7.4 .7l5.8-1.2l7.1 2.5l9.4-1.7l8.8 3.5l6.9-.1l6.4 0l7.3-.9l7.8-1l10 .9l7.8-1.9l7.7 .8l7.5 .2l6.8-1.1M874.1 661.9l4.8-2.1l8.1 .2l10 1.7l5.1-.7l8.3-3.3l7 1.4l7.4-.7l4.2-.1l7.8-1M944.4 657.9l5.7-3.3l6-1.2l7.8 1.6l4-1.5l5.7 .6M978.2 652l6.3-2.9l6.1 1.3l3.6-.9l6.8-2.5l2.1-1.1l5.5-.4l4.2-2.1l3.3-.5l4.6-1.2l2.3-2.1l3.6-.8M626.6 643.9l2.5 2.2l3.8 .5l2.7 2.1l4.9 .1l3.9 1.3l4.3 .4l2.1 .6l5.6 1.6l7.7 2.2l5.3 2.7l2.7-1.6l5.5 1.9l7.2-1l5.9 2.6l4.2-1l6.7 1.2l7.2 1.2l6.2-.4l5.3 2.4l7.7 .3l8.3 2.1l6.6-1.5l7.9 .4l5.8-.2l7.6 3.2l8.6-1.9l5.6 .6l7.6 1l7.3 1.2l10.1 .2l9-.8l4.4 2M826.7 668.2l5.8-.5l7.6 .8l9.6 .5l5.9-.2l9.1-3.2l9.6 .2l4.9-.7l10.2 .9l5.5-.3l7.8 .7l6.4-1.4l6.8-1.8l8.9 1.7l4.2-.6l7.9-3.2l5.3-.2l7.5 2.1M957.1 661.2l3.5-2.8l8.2-.5l6.1-2l6 1.2l4.7-1.9l3.5 .5l3.8-3.1l7.2-.2l5 .4l3-2l4.2-1.6l3.5-1.5l3.5-.2l3.5-1.7l3.8-1.9M626.1 650.2l3.2 .4l3.9 2.4l2.9 .5l3.8 2l4.3 .5l3 .4l6.6 1.7l4.8 1.5l3.3 .4l6.5-.4l4.6 3.3l5.6-.9l6 3.1l7.5-1.6l3.9 1.2l5.7 1.1l6.7 2.1l6.8-1.6l5 2.8l7.3-.2l7.8 .5l7.6 2.4l7.5-.8l9 1l3.5-.5l9.3-.9l6.6 1.6l9.5 1.1M793.4 673.6l11.2-.7l4.6-1.7l8.3 3.6l7.2 .4l7.3-.6l10.6-2.3l5.2-.1M859 672.1l4.9-1.1l9.3 .5l7.1-.6l8.4 .4l7.3-1.2l7 1.2M909.2 671.6l5.8-.4l7.2-3.5l7 1.9l9-2.1l4.7 1.2l5.5-.2l8.5-.8l3.9-3.3l6.4 .9l5.1-3.8l6.7 .1l6.3 1.1l2.3-1l6.2-1M997.7 658.7l6.6-.4l3.1-2.2l4.3-1l4.2-.8l3.4-1.7l3-1.2l3.9-2.3M627.1 655.6l2.4 1.7l4.3 1.2l3.2 1.2l3.5 .9l4.8 1.5l2.6 .2l5.2-.1l4.8 3.3l3.9 .8l5 2.2l7-.6l7 2.2M685.8 669.5l4.6 .1l7 3.3M701.6 670.4l7.9 3.6l6.7-1l6.5 .1l7.7 3.2l6 .2l5.1-1.6l8-.3M755.9 675.8l10.1 2.2l6.3-.8M779.7 679.7l6.8-.3l7.8 .7l7.2-2.7l9.8 0l5.4 2.5l9.4-.9l9.5-1.7l7.2 3l7.7-.7l5-1.1l9.2 .6M872.9 679.9l7.9-1.4l5.6-3l6.5 2.3l9.4 .6l8.6-3.6l5.8-.5l6.8-1.1l7.2 .8l7 .4l5.1-1.3l6.4-.6l5.9-2.1M961.4 669.4l7.5-.9l6.4 1.6l4.8-2.2l2.8-2l4.7 1.4l5.7-3l6.9 .4l2.8-3.5l3.9 .3l4.9-.9l3.2-1.3l3.8-1.7l3.8-1.1l2.5-1.5M626.8 660.4l3.4 2.1l4 1.6l3.5 .3l3.9 2.3l3.4 .4l4.3 3.1l6.4 1.1l3.9 .9M663.6 671.8l4.2 .2l7.4 3.2l2.3 1l8.2-.2l3.9-1.3l7.5 1.3l6.3 2.4l4.8 .7l8.9 .1l5.6 2.4M731.1 681.9l6.8-1.7l7 2.3l6.4 .1l6.3 1l7.5 .4l8.1-.6l7.1-1.1l7.8 1.1l9 .6l7.4 .2l5.2 1.1l10.5 .9l4.9-.3l10.4 .3l7.6-3.6M849.7 686l9.1-1l5.6 .7l6.2-1.7l7.9 .7l7-.3l10.7-3.5l6.2 1M907.1 682.3l10.3-2.3l4.3 1.8l6.4-3.4l8.7-.7l5 1.7l7.8-3.3l7.5 1.7l3.9-.5l4.7-.5l9.2-3l2.9-.2l7.4 .1l3.1-.8l3.4-.9l8.5-.4l3.9-4.7l3 1l4.1-1.2l4.2-2.2l3.5-.7l3.5-.9l2.7-2M626.8 666.2l4.1 1.1l2.9 1.5l3 1.2l4.1 1.7l4.8 .8l2.5 2.2l4.6-1.2l5.8 3.7l3.9 1.1l4.5 1.6l6.8-.3l5.9-.3l5.9 .2l3.3 1.8l8.9-.2l4.4 1.4l5.5 3.5l8.3-2.7l6.2 3.8l8.4-1.4l4.3 2.2M742.8 686.4l8.9 .5l5.5 .1l8.9 3l4.4 .5l11.2-1.1l5.2 .4l6.5 1.7l8.6-3.6l9.2 3.8l5.7 0l8.2-1.6l9.5 1.1l6.1 .2l6.9 0l9.7-2.1l7.6-.1l5.4 1.1l10.7-1.5l7.7-1.1l4.5 .6l9.9 1.1M906.9 686.9l7.6 1.6l6.9-4.4l7.8 2.7l5.4-1.9l6.6 0l9.8 .1l4.6-1.3l6.7-1l4.3-.7l6.1-3.4l4.2 2.4l7.3-1.9l5.8-2.7l4.3 0l3.6-.6l4.8-2.1l3.7-1.3l4.7-.1l3.6-1.8l3.4-1.9l3.4-.5l2.8-1.7M627 672.3l3.5 1l3.7 1.6l3.1 1.6l4.1 1.2l3.7 1.2l4.7 .8l5.7 3l4.8-.4l4.3 1.4l3.5 .1l5.4 2.5l5.3-1.3l7.3 .1l3.7 1.7l9 1.5l2.9 0l8.5 2.6l6 .3l6.2-.6l7.9 1.5l6.9-.7l4.8 1.4l7.6-1.5l6.3 2.1l8.4 0l6.5 2.7l10.3-2.3l5 3.1l10.7-.9l5.5-.3M809 697.2l11.2-.1l5.5-1.8l8.3 .1l8.9 1.2l7.9-.5l4.6-.5l7.2 .3l8 .4l9.8-.8l7.2 0l5-.8l9.5-.8l5.6-1.8l7.1 1.8l6.4-3.5l7.9 2.1l9-3.4l2.6 1.8l9.6-2l5.4 0l6.2 0l5-.6l6.9-2.4l3.8-2.7l4.4 0l6.4 1.2l3.3-2.3l5.1-2l5.6-1l4.6-.1l3.7-1.9l3.5-.9l3.4-2l4-.6l3.5-1.7M627 677.9l3.7 1.6l3 .6l3.4 1l3.7 2.1l4.2 .5l6.5 .1l2.8 1.4l5.9 3.3l3.2-1.4l5.5 1l5.5 2l5.8 2.2l3.8 .7l5.5-1.3l9 .3M704.4 694.5l3.1-.7l9.2 .8l4.8 1l9 3.5l4.5 0l7 .3M755.9 701.3l9.7-2.2l6.7 1.2l8.5-1l5.9 .9l9.1 1.5l7.6-.7M810.3 702.4l8.8-1.3l5.1 .1l9.1 .1M840.9 701l7.8 .7l7.4-2.2l8.9 .9l6.7 1.4l9.5-3.7l5.2 .8l9.8 1.9l5.2-1.7l6.4-.4l7.6-2.7l5.7-.3M930.9 696.7l6 .7l5.3-2.3l7.9 .5l2.9-2.1l9.8-2.4M964.9 693.1l9.2-2.4l2.3-2l8.1 .9l2.1-1.7l7.5-2.1l2.8-.7l4.2-.8l5.7 0l3.2-1l3.8-1.4l3.7-1.4l3.5-2.1l3.1-.7M627.5 682.9l2.9 1.8l4.1 1.1l2.7 1.4l4.2 1.5l4.2 1.1l3.7 .7l6.7 2.5l2.7-1.4l4.4 1.2l3.9 3.5l5.8-1.5l6.1 .6l4.5 2.9l8-1.5l5.2 1.5l7.3 1.4M709.4 702.6l4.9 .1l6.4-1.1l6.6 .9l9.6 1.3l5.5-.3l6.8 .3l8.9 .8l5.4 .6l10.8 .2l6.1-.3l7.7 .7l5-.9M802.5 706.5l8.4-.6l8.9 1.7l6 .2l7.7-.2l6-.8l10.4-1l5.7 .3l10.6 1.1l5.3-2.3l9.1 1.4l5.2 1l8.1-3.7l8.4 1.5l4.4-1.3l10.5-.3l3.6-2.3l6.7 .4l9.4 .4l7-2.7l4.6-1l5 .8l7.2 .8l5.8-.9l5.5-3.5l7.2-.8l5.4-1.6l2.7 1.4l5.7-3.4l4 2.7l6.5-2.9l2.4-1.8l4.1-.3l4.4-2.1l2.8-.4l4.1-1.9l3.1-1.6M627.4 689l3.3 .7l2.9 2l4.3 1.4l3 .6l4.1 1.6l3.2 .1l5.6 .3l4.5 4.6l7-1.8l3.6 1.9M675 702.5l5.1-1.6l4.3 4.3l4.7 .1l9.7 .6l3.5 .1l7.1 1.1l5.2 1.3l9.7-1.4l4.7 3.1l6-1.4l8.7 .1l8.4 1.3l4.9 2.3l7.2-.7l7.6-1.3l7.8 1.8l7.9 1.4l8.8-1.5l5.4 1.7l8.8-2.5M819.8 712l5.4 2.1M835.5 712.2l7.5 2.1l6.3-3l5.8 .7l9.1 .8l6 .6l10.9-3.7l5.6-.7l8.2 0l5.7 .4l8.6-.3l7.1 .3l7.4-2.2l4.6 .4l8.2-.6l5.5 1.3l5.3-4.4l7.6 1.4l5.9-.2M966.3 703l5.1-1.8l5.9 .4l5-2.2l6.1 .2l2.5-1.6l6-.4l6.8-2.3l2.3 .4l4.5-1.5l3.4-1.2l3.8-1.1l3.4-2.1l3-.7M627.5 694.3l3.7 .8l2.7 2l3.6 1.6l3.6 .9l4.3 .8l5.7 .9l1.4 .9l7.3 2.7l2.6-.1l5.3 .5l7.4 .8l2.4 2.1M683.7 708.9l7.1-.2l5 3.3l5.7 .8l8.1-.1M721.8 711.9l6.4 2.3l8 .6M742 714.9l7.5-1.1l8.9 2l5.4 2.6l8.2-2l7.8-.7l6 1l10.3 2.8l6.3-2.1l6.8-1.2l10 2.5l5.6-1l10.4-1l4.9 .8l9.7 .4l5.6-2.2l8.8 1.5l5.7 .5M877.8 717.5l7.4-.8l10.4-2.4l5.9 .6l6.6-1.6l5.3 2.7l8.4-3.5l6.8 1.5l5.1 .1l7.8-3l8.3 .1l3.3-1.9l8.3 .7l4.7-.1M971.4 706.7l6.6-.7l3.9-1.6l6.4 1.4l5.8-3l4.2-.7l3.4-.1l4.5-1.7l3.7-.4l3.6-2.1l3.8-1l3.7-1.1l3-1.3M627.3 700l3.5 1.2l3.6 1.3l2.9 1.5l4.5 1.7l4.4 .1l4.3 .1l4.6 4.6l3.3 .6M664.6 710.7l5.9 .2l2.9 3l5.8-1.8l6.3 2.8l5.1-.5l5.6 2.9l7.4-1.9M711.2 717.4l5.1 2.9l5.7-.5l7.6 .3l6.3 1.4l7.4-1l7.6 1.5l5.5-1l7.8 1.2l10.2 1.8l5.1-1.6l6.9 1.6l8.1-2.1l9.3 2.4l5.9 .4l8.9-.8l8.9-.9l6.3 .9l6.8 1.3l8.2-1.9l5.8-.3l11.1-1.9l6.5 0l7 2.3l5.5-.3l7.6-2.1l7.9 .3l8.9 0l6-2.8l8.5 1l6.9-2.4l6.7 2l4.6-1.3l6-1.9l7.1-1.3l4.1 1.2l9.1 .7l3.7-1.7l5-.1l5.2-3.9l5.2 .3l4.5-2.7l6.9-1.5l2.8-.1l4.5-.3l3.9-1.6l3.3-.9l4.6-1.4l3.1-1.6l3.2-1.5M628.2 705.1l2.3 1.9l4.4 1l3.5 2l3.7 .8l4 1.2l5.4-.2l2.5 1.1l4.3 .4l5.4 3l5-.3l3.6 4.2l7.2-2.7l4.6 3.6l5.3 .6l6.9 1.8M702 724l6.9 1.2l8.3-.4l6.5-1.3l7.4 .8l5.3 1l5.5 2.8l8.2 0l6.9-1.4l7.7-.2l6 1.2l8.7 .7l6.3-1.6l8.7 1.1l6.5 1.2l10.5 0l8.6 .3l3.8-.3l10.3 .7l7.5-2.3l8 0l5.1-.5l9.5 0l9.1 .3l5.8-.1l5.5 2.3l8.4-1.7l9.6 .1l4.1-2l10.1-.6l6-.3l7.1 .3l5.1 .1l6.2-2.9l7.9-1l5.3 1.3l5-2.5l7 .3l4.1-2.8l5.9-.2l7.4-.6M987.9 715l5.5 1.5l4.1-1.1l4.5-1.9l3.6-2.2l4.3-.8l4-1.1l2.9-1.7l3.4-.7l3.5-2.2M628 710.7l3.7 2.1l3.1 .6l3.7 1.5l3.5 1.8l3.4 1.3l3.8 1.2l6.9-.8l1.5 3.6l6.5-1.8l6.8 3.8l4.4 .9l2.6-1.4l5.5 2.2l5.8-.9l9.7 1.1l5.6 2.5l4.5 .8l7.8-.3l6 2.1M729.8 730.2l5.9 .1l7.3-.3l6.4 1.5M756.4 731.2l8.2 2.2l6.8-.2l9.8 2.3l5.6-3.1l6.9 1.5l7.7-.4l9.6 2.6l8.1-1.2l6.7 .6l6.4-1.8l9.8 1.5l6.2-2l7.6 1.8l7.3 0M873.5 732l4.1 2.5l10-2.8l5.4 2.6l6.8-2.3l10.1-.3l6.8-.2l5.6-.6l6.5 .5l5.1-2.7l9.4 .2l6.7 1.2l3.3-1.6l5.4-1.4l6.7-1.4l5.7-2.2l6.7 1.7l4.7-2.3M987.1 723.7l3.9-1.4l5.3-3.9l4.9 .6l4-1.9l4.6-1.2l4.1-1.3l2.6-.3l4.2-1.5l2.8-2M628.2 716.5l2.7 1l4.1 1.5l2.5 1.5l4.1 1.4l3.8 1.1l3.9 .1l6.7 1l4.4 4.1l3.9 .1l6.2 1.8l4.8-1.4l3.4 1.4l7.6 1.9l4.3-.2l7.8 2.3M703.4 732.2l5.4 1.4l7.1 1.6l6.6 2.6l8.4-2.8l6.5 2.1l4.3-.4M750.6 737.6l8.3 2M764 736.9l7.6 2.9M781.5 741.2l5.3-3.3l6.9 2.2M804.4 738.3l4.3 1.3l10.8 .3l4.9-1l10.6 1.7l7.3-.4l5.3-1.6l7.2-.1l8.9-.3l9.2 3M879.7 741.2l7.3-.8l7.8-2.2l7.6 .4l6-1.2l5.9-1.7l6.6 1.2l8.6-2.1l5.5 .8l7.5-1.4l5.1 1l5.6-1.6l7-2.6l6 2.2l4-2.6l7-2.1l3.6 .4l6-1l5.4 .2l4.2-2.2l5.4-2.1l3.8-.8l4.3-1.1l3.7-.8l3.3-1.7l3.3-1.5l2.6-1.6M628.2 721.5l3.3 2l3.7 1.3l3.1 1.7l4.2 .6l3.7 2.1l4.1 0l4.1 .7l3.1 1.5l4.7 1.2l6.6-.5l5.7 3.4l4.4-.3l6 3.4l5.7-1.6M695.6 739.7l8-.8l5.3 1.2l5.6-.1l7.1 2.4l9.1 0l4.3-1.3l6.8 2.1l9.8-.1l5.6 2.7l7.1-2.1M773 743l8.7 2.6M789.3 745.5l6.3-.1l7.6-1l8.1-.5l7.3 .7l7.9 2.6l5.2-3l8.8 1l8.7 2.1l5.8-3.2l11 2l7.5-1.2l5.2-1.9l8 3.3M893.4 745l6.5 .4l6.7-3.1l8.9 1l6.3-2.1l7.1 .9l7.9-.4l4.7 .3l6.6-2l5.3-2.8l5.9 2l7.1-3.3l4.5 1.3M976.5 733.8l5.6 1.8l7.1-1.4l4.6-2.7l2.2-.5l3.4 .5l5.9-3.3l4.4-1.2l4-.9l3.2-.8l3.2-1.3l3.3-2.1M627.8 727.5l3.8 1l3.6 1.6l3.2 2.1l3.1 .5l4.9 2l2 1l7.1 .1M660.5 738l3.3-.7l6.9 4.3l2.9-.2l6.6 1l3.9-1l8.3 .1l3.2 4.3l6.2-1.5l8.6-.2l7.4 3M723.7 746.1l5.7 3.3l5.5-1.6l8.8 1.7M751.1 749.9l5.3 .1l9.9 1.1l4.4 .2l9.1-1.7l6.7 .8l6.9-.6l8.8 .2l7.5 2.1l7.6-2M825.5 750.6l6.8 2.7l7.8-2.1l9.2 .7l6-2l8.2 0l8.1 1.8l6.3-.9l7.7-2l9 1.9l4.8-3.3l10.1 1.7M915.3 748.5l5.4-2.8l7.5 2.8l7.7-.3l4.2-1.4l9.5 0l6.3-1.9l6.2-2.4M966.2 744.3l7.1-2.8l3-1l4.8-1l7.7-2.4l4.4 .3M997.4 737.8l4.1-1.2l3.7-2.2l3.8-1.1l4.3-1.7l3.2-1.8l3.3-.8l4-.9M628.5 732.9l3.2 2.3l3.1 .6l3.4 1.7l3.8 .9l3.7 1.3l4.5 1.8M658.5 742.5l5.9 .6l2.8 1.6l6.7 2.2l6.3 .2l3.6 2.6l6.7-1.2l6.2 1.7l8.5-.9l3.4 .6M717.8 750.9l3.3 .1l7.8 3.2l5.9 .3l10.2-.9l6.5 1.3l6.9 1.6l5-2.6l10.9 1.2l7.5 .8l4.3 2l7.7-2.6l8.9 2.6l6.4-.1l10.8-.6M827.6 758l7.5-2.8l6.1 2.1l7.6 .7l8.6 .7l5.1-3.4l9.5-.8l5 .8l11.1 2.2l3.7-1l7.5 0l7-2l10.4-2.5l7 .1l4.4-.4l5.5 .8l7.9-1.5l8-2M953.6 750l6.3-1.5l6.4-.3l3.8-1.3l8.5-.4l4.6-2.2l2.2 1.1l5.7-2.2l4.3-.2l7.2-4l3.3 .9l3.8-1.7l3.9-1.3l3.5-.9l3-1.6l3.6-1.7M628.2 738.8l2.8 1l3.9 1.6l2.9 .9l4.7 2.2l3.9 1.2l3.1-.2l4.6 1.6l3.4 2.5l8.2 .1l3.1 1.9l6.7-.5l5.3 3.1l3.6-.9l5.8 2.8l8.8 .9l4.6 .2l5.1-.1l6.6 1.9l8.1-.7l5.9 1.3l5.3 1.4l6.9-2.3l10.6 1.4l7.1-.1l7.7-.2l5.8 .5l6.2 1l9.2-.4l6.9 1l9.1 .8M810.6 763.1l6.4-1.4l9.7-.7M833.6 764.4l9.4-.8l6.6-1.7l6.6 .2l7.3 .9l7.7-1.1l6.1 1.3l7.2-.1l9.3-2.9l9 1.9l3.3-1.3l8.5-1.4l8.9 0l3.6 .2l8.3-.9l4.5 .1l8.3-4.1l7.9 .5l2.6 .8l5.5-1.4l6-3.8l5.3 2.1l7.1-3.7l6.1 1.4M997.1 748l5.5-3.1l3.2 .7l3.8-1.4l4-1.1l2.9-1.6l3.3-1.9l3.4-.8M628.7 744.6l2.3 .7l3.3 2.1l3.5 1.6l4 .8l4.7 1.6l3.1 1.1M654.9 753.5l4.7 2.8l4.3-1.7l6.6 2.3l3.1 2l4.3-.7l6.7 2.2l7.3-.4l5.7 .3l6.9 1.9l3.5-1.6l7 3.6l6.1-1.6l6.8 0l7.8 4.3M742.4 767.3l6.9-.8l7.8-1.8l7.3 2l8.7 1.3l5.6 1.5l9-1.6l9 1l4.2-1.6l9.5 0l9.2 1.1l6.2-.7l8 2.1l6.1-1.5l8.6-.4M858.1 768.9l6.6-1.5l5.9-.3l10.1-1.2l6.2-.5l6.8-.3l9 2l3.3-.3l9.2-1.7l7.9-1.5l3.7 1.9l7.2-2l6.5-.2l5.9 .2l6.4-4.3l5.3 2.2l6.8-4.2l5.9 2.7l7-.6l4.2-4.3l6.7-.6l2 1.3l6.9-3.5l2.5-2l5 .9l4.1-1.9l3.3-.3l3.7-2.2l3.6-1.2l2.9-.7M628.6 749.6l2.7 1.4l3.6 1.4l3.9 1.6l2.9 1.8l4.9 1.2l5.2 .8l4.7-.9l4.2 3.6l3.7-1.1l3.3 4.5l8.4-1.3l2.5 2.9l7.2-1l3.5 2l6-2l8 .9l7.5 2.2l3.8 2.7l6.2-.4l10.4 .2l6.1-1l7.1 2.3l7.9-1.4l5.1 1l8.3-.4l8.2 2.1l5.3 2.4l6.6-2.7l10.3 2.6l5.1-2.2l8.2 .8l8.8 1.6l9.3 .1l5.1-2.8l8.2 2.1l7.7 .9l9.5-2l6.3 1.9l7.8-2.8l7.9-.6l6.1 1.2l6.5 0M901.2 770.3l7.3-1l6.5 1.2l7.9 .9l6.8-.5l4.5-2.4l8.5-2.2M946.5 767.4l7.8-2.6l7.2 2.1l6.1-.2l3.2-2.2l4.2-2.2l7.9 .8l2.8-.6l6.4-1.4M995.5 758.4l5 .4l4.5-1.8l3.9-1.2l4.4-1.8l3.9-.8l2.8-1.7l2.7-1.2M627.8 755.3l3.3 1.5l3.6 1.1l3.5 1.5l3.9 1.1l3.7 1.3l3.3 2.5l6.6 1.3l3.8 .2M668 767.6l6.1 .5l7.8 0l2 2.2l8.5 1.6l5.3-.8l5.1 .8l5.6 1.1l8.7 .3l4.6 2.1l6.9-.9l6.1 1.4l7.5-.5l9.5-.1l7.3 4.1l5.2-3l8 3.7l8.4-2.2l7.6 .6l5.7 .9l9.2-1.5M811.5 780.2l6.1 .6l8.5-2.2l8.2 2.8l8.1-2.1l5 0l9.1 .9M864.9 779.2l5.2-.6l9.7 .7l5.3-2.3l7.9 .2l7 .9l7.4-1.4l7.5 0l7.7-1.6l4.9 .7l8.9 .1l5.9-2.8M947.4 771.7l5.7 .5l6 .1l8-2.9l6-1.1l3.3-.2M980.4 767.3l8.3-1.6l4.2 .5l3.3-1.6l6.6-2.2l3-.9l3.4-.6l4.1-1.6l2.8-1.6l4.3-.3l2.6-1.9M629 761.4l3.1 .5l3.1 2.5l3.4 1l4 1.6l3.4 1.2l2.8-.1l5 1l7.1 .8l4.1 3.1l2.4 1.8l7.5 .5l4.2 1.3l6.1 0l7.1 .5l5.2 .7l7-.7l5.8 3.3l4.9-2l9.5 2.3l3.8-.3l6.1 2.3l7.6-2l8.8 .9M759.5 783.3l4.8 1.4l7.6 1.1l9.7 .1l6.2-.9l5.9-1l7.3-.9l10.8 2.4l6.4 1.4l6.3 .1l7.6-.6l10.7-1.1l4.9-.1l10-1.2l8.1-.6l4.4 2.3l7.2-1.8l9.1 .2l7 0l7.3-1.9l5.7-.4M914 782.1l6.9 .6l7.4-3.6l7.5 .6l7.5 .9l5.7-1.9l6.1-1.7l6.9 .8l2.2-1l5.4-2.4l7.6-.2l3.3 .3l5.9-4.4l6.1 1.2l2.9-2.1l4 .9l6.3-2.7l3.1-.5l4.7-1.3l2.6-1.8l4.2-1.1l3-1.7M628 766.9l3.1 .8l3.6 1.7l3.4 1.7l3.7 .6l4.8 1.9l2.8 .3l6.4 .8l4.4 .2l2.1 3.7l7.8 .3M676 780.4l3.5-1l5.7 3.8l4.4-.5l9.7 .1l5.6 .7l5.3 3l6.1-.8l6.7 1l8-1.1M735.2 788.4l8.9-2.3l7.8 .7l7.4 .6l4.3 .6M771.6 787.9l9.6 1.5l7.9 .4l7.2-.4l8.2 1.7l5.7-1.4l9 2.3l7.7-2.3l7.2 2.5l7.2 0l5.6-1.1l7.8-.3l9-.2l9.2 .9l7.1-2.8l6.2-.9l8.7 1.9l5.4 .1l8.2-1.8l7.3-.2l4.8-1.2l6.1 1.5l7.7-2.3l8.3-2l4.6 .6l6.7 .4l7.1-2.8l4.1-.5l7.3-.3l6.1-.3l5.4-2.2l3.5-2l6.2 .8l2.3-2.5l3.1 .8l6-3l4.5-.5l3-1.7l3.3-1.2l3.8-1.6l2.7-1.6M628.7 772.6l2.7 .5l4 2.1l3.4 .8l3.2 1.4l4.8 1.3l3.5 3l5.2-1.5l3.9 3l4.5 1.2l7-2l4 3.2l5 1.7l6.3-1.3l4.1 3.4l7.5 .7l5.1-.3l8.5 1.6l5.7 .8l4.9 1.1l5.7 .8M735.2 794.4l7-.8l8.1-.5l8.6 0l4.5 2.7l9.4-2.5l5.6 3.7l7.6-.3l7.9-1.9l9 3l9.4-.7l4.2-1.8l11 3l6.1-1.5l8.6 .1l8.1-.9l5.3-.3M864 794.5l8 .6l6.5 .2M886.2 793.9l9-1.2l6.2 .1l6.7-.3l6.8-1.1l5.1 .8l8-.1l5.7-1.6l7.4-1.7l6.7 .1l7.7-.4M958.2 789.7l6.7-3l4.5-.7l6-1.9M983 784.8l4.6 .2l3.2-2.2l7.2-.8l4.9-2.3l2.3-.5l3.8-1.1l3.6-1.6l3.7-1.8l3.6-.6l2.4-2.5M628.6 777.2l2.8 1.5l4 1.3l3.6 2.1l3 1.6l4.3 .1l4.1 .2l3.5 4.2l6-1.5l4.1 1.6l5.8 1.6l6.6 2.1l3.1 .7l6 .4l5.6 2.4l5.3-1.3M702.2 796.3l6.9-2.3l7.7 2.7l4.4-1.2l7 4.5l10-2.6l6.8 1.1l7.3 1.7l3.6-2.1l8.8 2.9l9.7-.3l5.4-1.5l6.3 3l10.3-.5l4.5 1.4M811.5 802.5l8.5-.9l4.8 1.4l7.5 .2M841.5 802.9l7.7-.3l6.1-.9M864.7 799.5l8.1-.1l4.5 1.5M884.8 801.3l8.9-1.1l8.1 1l8-2l3.1 .4l10.7-2l5.2-1.9l7.4 2.6l5-2.1l7.7-2.9l6.6 2.2l3.2-3l7.3 .8l4.4-2.3l6.7-1.2l4.9-1.1l6.6 1.1l2.6-1l3.9-.5l5-1.4l4.9-2.2l4-1.2l3.8-2.2l4-.9l3.3-1.7l2.9-1.4M628.9 783.5l3.3 1.7l3.2 .4l2.6 1.9l4.8 .9l4 1.2l5.2 0l2.4 2.1l6 1.7l4.7 1.6l4.8-1.1l3.5 4.4l5.5 .3l4.9-.2l7.7-.2l4 1.8l7.1 .8l8.9 1.8l4.5-1l5.9 2.9l7.7-2.3l6.9 3.3l6.5 .2l7.4-1.8l8.5 .5M765.2 804.1l6.5 1.8l9.1-.4l5.8 2.5l8.3 .3l8.7-.7l8.2-1.1l8.1-.4l6.2 2.5l8.1-2.4l6.1 2l9.1-2.7l5 3l10.3-2.6l7.8 2M878.1 807.1l8-2.8l8.6 .1l6.5-.6l8.4 1.1l6-.6l8.1 .1l4.8-3M934.9 800.7l7.5 .7l5.4 .9l5.9-1.8l6.1-1.6l6.4-.3l4.3 .2l6.9-4.3l3.4 0l4.6 1.8l6.8-1.2l4.9-1l3-4.3l4.6 .1l3.8-.6l3.9-1.7l3.6-1.3l4.1-1.4l2.5-1.3M629.2 788.8l2.3 2l3 1l3.7 1.7l3.7 .6l5 1.2l3.7 2.9l4.5-2.1l6.2 4.7l2.1 .4l7 1.4l5.9-.9l3.2 2.3l6.7-1.8l5.5 3.7l5.3-.3l6.6-.8l7.4 2l6.7 1.3l6.4 .9l4.9-.6l7.7 3.1M741.7 808.5l10.3 4.3l6.9-2.7l7.2 2.5l7.7-2.6l4.8 1.2l9.7 .7l4.9-.4l11.5-.3l7.3 3.5l5-.7l10.2 .3l6.1-1.8M840.7 811.2l9.7 2.4l5.9 .9l8.4-3.3l5.6-.7M879.3 812.3l6.3-.5l7.1-1.3l9.4 2.2l4.4-1.2l10.1-1.1l6.6-2.4l6.7-.1l4.3-.4l8.4-.6l5.8-.5l7.2 .4l4-.7l4.3-.5l7-2.6l7.6-2.3l1.6-1.4l5.4 .4l6.8-.1l5.1-1.6l2-1.4l5.2-.8l4.3-1.6l3.3-1.2l4-1l3.8-1.5l3.2-1.7M629 794.1l2.7 1.2l3.2 2.2l3.9 .9l3.5 1.2l3.8 1.1l2.9 3.1l4.4-1.6l7.8 2.5l1.6 .3l6 2.5l5.3-.4l5 3.1l6.5-2l7 2.6l3.5 .4l7.7 1.6l5.5-.4l8.3-.3l7.2 1.3l6.4 2.9l6.7 .5l5.2 1l7.6-3.4M758.7 816.3l5.1 .9l10-.8l4.8 1l8.4 2.3l7.1-2.1l8.7 .8l6 2.2M818.2 819l7.3 1.1l7.8-2.2l7.3 2.6l7-1.9l8.4-2.1l9.2 3.4l4.6-2.6l7.8 .5l9.6 0l8.1-.1l4.1-2.7l7.6 .8l7.2-1.4l5.7 .7l9.1-2l4.1 1.7l7.1-2.9l9.5-.9l5-.7l3.9-.4l7.4-.1l4.3-1.9l6.3-2.2l5.6 1.4l5.6-3.4l3.2-.2l3.5 .4l5.5 .2l4.5-2.9l5-1.4l3-1.3l3.6-.8l3.6-1.8l2.6-1.6M628.9 799.4l2.4 1.9l3.3 2.1l4.4 .6l3.5 .8l4.2 1.3l2.8 2.2l6.5 .1l3.4 2.3l4 .9l6-1.1l6.2 3.8l4.6 1.1l6.4 0l6.9 1.6l3.3-1l5.1 .5l9.5 2l6.1 .1l6.5 .5l5.8 .7l7.7-.7l7.1 1.3l6.9 .3l8 .7l7.1-.3l6.1 2.8l9.2 .5l4 0l9.7 0l7.4 .4l5.3-.5M816.3 825.7l7.6 .5M832 824.8l7.2-1l10.3-1.4l7.8 2.5l6.7 .9l5.9-4.2M879.8 823.9l7.5-.1l5.9 .5l7-.7l6.7-.7l7.2-1l8.3-3.5l6.3 1.3l4.9 .1l7.6-1.6l8.4 .2l5-3.4l3.9-.8l6.2 2.2l7.4-3.9l2.8 1.7l7-3.3l5-1l5.1 1.8l6-3.8l3.1-.4l3.4-1l4.8-.5l3.9-1.4l2.5-1.6l4.3-1.5l2.7-1.8M629.1 805.1l3.2 1.5l2.8 1.9l3.5 1.7l3.4 .9l4.9 1.7l4.2-.1l2.3 1.7l5.1 2.6l7.1-2.1l4.5 3.2l4.3 1.2l5-.7l6.8 2.8l4.7 1.7l4.9-2.1l8.8 1.5l4.9 1.1l6.8 2.6l5.7-1l8.6-.2M735.3 827.8l7 .2l9.9 1.3l5.8-1.7l6.6 1.9l6.5-1.8l8.8 2.8l7.4-2.1l8.5 2.9M801.5 828.1l10.2 2.1l6-.8l6.2-1.3l10.8 1.6M842.7 828.1l5.8 .8l7.9 1.1l9.3-.6l5.3 .9l6.7-.7l7.5-1.2l9.4-.5l4.9-1.1l7-1.4l7.3 1.1l8.4-1.4M930.1 823.9l4.2 0l8.7 1.8l2.8-2.2l9.8 .5l3.2-1.6l7.6-.2M971.6 819.8l6.6 .1l1.7-3.1l7.4 1.3l6.3-4.4l2.2-.4l6.3-1.1l2.8 .4l3.6-2.1l4.1-1.2l3.6-1.4l3.8-.9l3-1.4M628.3 810.9l3 1l3.4 1.7l4.6 1.7l2.8 1.6l3.8 .7l2.8 2.9l5.5 1.6l6.9 .7l2.1-1l7.5 2.3l3.3-.2l5.1 2.2l5.7 1l8.3-1.7l5.4 3.2l6.8-.2l5.5 2l5.8-1.1l5 3.5l8.6 .6l7.4-3.2l7 3.5l7.3 .1l5.9-.6l9.2 2.4M770.8 836l7.3-3l8.2 2.2l7.9-.5l9.1 1.2M809.9 837l8.3-2.6M826.8 835.4l8.3 .5l4.6-2.2l8.6 1l9.9 .2l6 1.6l6.9-1.8l9.2-.2l7.3-.6l6.1-1.4l7.8 2.3l7.1-2.7l4.4 1.1l8.8 0l5.4-1l6.4-.4l8.4-1l5.9-3.1l5.4-.8l8.4-.2l5.1-1.2l3.6 1.3l6.8-2l6.5 .1l3-3.1M998.2 818.4l3.7 2.3l2.9-2.4l3.5-1.8l3.9-.7l4.3-1.3l2.8-1.8l2.7-1.5M628.9 816.8l2.8 1.3l3.1 .9l3.5 2l4.1 1.6l3.8 .5l6.3 2l3.8 .5l4.2-.6l2.9 2.5l6.9 1.9l5.9 .6l2.3-.5l8.3 .9l4.1 .5l8.5 3.6l4.7 1.8M708.1 834.7l7.3-.7l7.3 3.1l7.1 1.6l7.6 .9l4.6-.8l6.8-.7l9.2 0l5.3 0l10.5 1.9l6.1 1.6l6.3-1.4l8.2 1.6l6.7-.4l10.8 .7l7.2 1l7-1.5l6-2l10 1.9l7.2 .3l7.5 .3l7.1-1.5l8.2 .5l8.6-2.9l3.9 1.3l9.2-.1l6.1 .2l6.1 .1l10.3-2.2l4 .6l8.1 .1l6.4-4l4.8 2.3l7.8-2.5M960.4 833.1l5.5-2.2l4.5-.2l8.1-1.5l1.3-.1l7.9-2.5l4.7-.9l4.7 1.3l3.5-3.8l3.9-.1l3.8-1.5l4.1-.9l4.2-1.1l2.8-1.5l3.3-1.3M628.3 822.2l3.8 1.9l3.2 1.4l3 1.4l3.9 1l4.9 1l2.6 3M654.3 831.1l5-.5l3.8 2.1l7.7 .4l6 1l4.1 3.1l3.2 .8l7.6-.4l5.6 2.8l5.1 1.2M708.7 840.2l6.4 1.5l8.7 2l5-2l8.9 3.5l7.6 0l6.6 0l5.7 .8l7.4-1l9.3 2.5l7.5-1.1l5.2-1.5l8.5 2.9l5.5 .2l10.4-1.7l5-.8l9.6 1.7l7.3-1l9.7 2l3.7-3l9.4 .3l7.7 .4l6.6-.5l6.8-1.6l8.1 2M891.4 843l8.4 2.8l5.9-2.1l7.3 .1l8.7-.6l5.6-2.1l9.1 1.6l6.6-1.6M948.3 839.5l6.3 0l3.2-1.7l9.4 1.3l3.3-4l5.9 .5l3.5-.8l6.8-2.7l6.1-.2l2.2-1.5l4.7 .7l5.5-2.7l3.9-1.3l3.4-.3l3.4-1.5l3.3-1.7l3.8-1.2M628.7 827.6l3.7 1.6l2.9 1.7l2.9 .5l3.9 1.7l4.9 1l4.4-.1l3.5 2.1l5.4 2.4l4.7 1.7l4 1.1l4.4-.2l6.3 2.7l4.7-1.5M691.8 842.3l6.1 .6l4.3 2.7l6.4-.1l6-.2l7.6 4.2l8.2-2.3l6.9 3.4l6.9-1.7l7.8 2.2l5.2-2.5l6.9 1.8l9.2 1.8l5.5-1.3l8.1 1.3l8.3-1.9l8.6 2.5l6.2-1.1l8.4 .6M826.8 852.5l7.9 .1l7.1-.8l6.4-.9l7.1 1.4l7.7-1.9l7.6 2.9l8.7-3.1l8.6 .1M891.6 848.9l8.8 .5M906.4 848.2l8.4-.4l8.5 1.1l6.1-1.5l3.7 .9l8.7-1l6.5-.7l5.2-1.1l4.5-.5l8.8-.2l2.5-4.7l8.8 1l3.9-2l6.5-1.9l2.7 2l4.2-1.8l4.8-3.3l4.2 0l4.8-1.4l2.8-1l3.9-.6l3-2.1l3.3-1.4M628.9 833.5l2.8 1.2l3.6 1.2l3.2 1.2l4.4 1.8l3.4 1.6l4.1 .3l5.7 1.3l1.7 .6l7 2.6l4.1 1.3l4.9-.3l4.7 2.2l6.9 1.6l5.9-.4l6-1l8.2 .8l4.6 3.3l4.6-1.2M724.8 851.6l6.7 .4l5.9 3.1l6 .4l7.7 .5l5.7-.4l7.7 .5l8.4-.5l6.4 .3l7.4 2.5l7.1-2.5l10.4 1.2l5.7 .3l8.9-.4M824 856.1l9.2 3.7l7.5-2.9l9.8 .7l7-1.7l7.6 2.7l6.5-1.4M880.7 856.2l3.6-.5l7.1-1.1M900.2 857.4l7.6-2.7l8.5 .2l3.3-2.7l7.9 .4l6.9 .9l5.5-.9l6.2-2l6.1-1.2l9.4 1.8l5.8-3.1M970.3 849.6l5.6-2.7l7.7-.3l2.4-1.9l5.6-2.4l5.7-1.4l1.9-.5l5.1-.7l4.1-.9l4.6-.7l3.6-1.8l3.3-1.8l3.1-1.8M629 838.4l3.3 2.4l2.5 1.4l3.5 .4l4 2.3l4.6 .6l4.6 .9l3.9 3l5.9-1.6l4 1.9l5.4 .1l3.9 3.3l7.3 1.9l4.1 0l6.5 .6l3.6 1.8M702.3 857.3l6.6-1.5l7.2 3.9l8.4-1.7l5.1 0l7.2 1.6l7.9 .6l6.2 2l5.8-.3l9.8 0l5.9 .2l5.9 1.5l9.2 1.3l9.1-3l5.5 .1l10 .7l6.2-.3l5.5 2.6l10.9-1l5.1 .9l10.6-1.2l7.4-2.3l5.6 3.3l9.3-2.3l5.1-.2l7.8 .7l8.4-2.8l8.1 2l5.7 0l8.7-3.9l4.1 1.8l7.8 .4l6.8-4.1l7.4-.6l5.8-.1l7.1-.8l6.1-1.5l2.1 1l7 .1l6.8-1.4l4.1-.8l4.9-4l4.7 1.2l4.4-1.8l3.5-2.5l5.3 1l4.2-1.2l4.1-2.1l3.3-.8l3.1-1.6l2.9-1.7M628.9 844.8l3.4 .6l3.1 2.1l2.8 1l3.9 2l4.3 .1l6 2.2l2.5 2.1l4.7 .4l5.6 2l3.7-1.6l7.2 2.8l2.5 2l9.2-.8l2.6 .1l8.3 2.4l3.3 .2l9.7 2.1l3.3-2.1l6.3 1.3l7.9 .4l9.1 2l6 .2l6.1 .8l8.3 .4l7.2-.9l8.7 1.8l5 .7l6.7-1.9l8.1 2.5l6.3-1.8l10.6-.6l8.7 1l6.6 .1l4.7-.7l10.4 3.4l7.3-1.6M854.9 869.6l6.9 .6M872.5 868.3l8-.1l5.7-2.4l9.1 1.8l6.1-2.4l8.2-.5l4.7-.2l9.1 .4l4.7 .7l5.7-2.5l6.3 .5l7.3-1.6l8 1.3l4.9-2.2l3.5-1.1l8.8-2.4l2.2 .8l6.4-3l5.5 .5l6.3-2.6l2.1-.1l6.4-1.5l3.2-1l3.5-.9l4.7-1.1l2.7-1.6l4.4-.9l2.3-1.7M628.8 850.3l3.3 .9l3.1 2.3l3.5 .9l4 .8l3.3 1.7l4.9 1.2l2.6-.2M661.5 859l3.7 3.9l6.4-2l3.5 2.6l5.7 .1l3.6 2.8l8.1 .7l5.3 1.8l7.3-1.9l6.5 1.3l4.4 1.6l6.1-1.5M731.4 870.1l3.6 .8l10.1-.1l5 .4l5.9 .7l8.3 1.2l7.4 1.5l7.3 .6l8.1-1.2l7.2 2.1l7.3-.2l10.5 .7l4.2-.3l8-2.5l8 1.7l8.7 1.1l6.4-.9l8.7-3.3l8.1-.1l6.5 .7l6.8-.9M887.4 874.5l4.8-3.2l9.3-.8l6.1 3l6.5-2.8l7.2 1M930.1 871.8l5.1-.5l5.5-1.2l7.7-2.2l5.8-1.5l6.4 .7l5.6-1.7l5.6-1.5l6-2.1l2.2 2.3M986.4 859.4l4.1 2.8l4.7-1.1l5.6-3.9l3.9-.5l3.9-.7l4.4-1.5l2.8-1.8l3.4-1.4l3.5-1.6M628.3 855l3.6 2.6l3.8 1.4l3.4 .3l3.7 1.7l3.7 .8l3.2 .4l6.4 4.3l2.6-.3M665.9 866.5l3.4 1.2l4.7 .7l7.6 .1l4.8 3.1l6.3 1.5l6.9-2.1l4.5 1.5l5.6 1.6l7.3 .2l7.5 2.7l6.3 .4l6.8-2.1l7 3.3l7.8-2.4M757.1 879.1l7.6-.2l7-.1l7.8-.9M788.7 879.6l6.2-.4l9.3 2.8l4.6-1.5l7.7-.5l8.7 2.4l7.7-2.4l7.7 2l8.1-3.8l8 2.1l5.1 .8l10.8-1.7l7.2 1.2l6.9-1.7l8.3 1.3l3.7-2.5l7.5-.1l9.8-2.6l3.6 .1l9.9 .8l5.3 .2l6.2-2l5.8-.5l5.1 .8l9-.7l5.3-2.7l4.6-1.9l5.8 1.1l6-4.2l4.2 2.4l3.3-2.4l6.4-1.7l2.8 0l5.7-2.1l3.7-1.5l4.4-.9l2.5-1.3l4-1.3l3.3-2.1M628.3 861.1l3.7 1.7l3.6 1.7l2.6 1.3l4.8 .9l3.5 1l3.5 1.7l4.2 2.8l5.7-1.3l4.9 1.6l3.5 1.3l7.8-1l2.9 3.7l6.4 1.2l4.4 0l7.3 1l5-.7l6.9 1.5l8-.2l5.1 .2M728.3 881.2l8.4 2l5.9 .9l8.2 1l5.9-2l7.6-.5l8 .5l6.7 1.3M786.4 885.7l8.3-.7M818.8 884.1l8 .9l5.9 1.1l6.3-.2l10.2 1.5M857.9 886l6.7-2.6l5.8 .1l7.1 .1l7.7-.8l8.7-.5l6.8 2.6l6.5-1.3l6.4-.6l8.9-3l6.5 1.7M934.4 882.4l8.3-1l6.7-2.7l6.2 1.5l2.5-3.3l6.3-1.9l5.9-1.4l4.4 2.3M983.2 874.6l2.1-.3l4.9-2.8l4.7-.4l3.9-3.5l5.7 .2l4.1-1.4l3.7-.9l3.7-1.8l3.8-.9l2.7-1.4M628.2 866.7l4.1 1.3l2.7 2.1l4.1 .9l3.5 1.4l3.5 .8l4 2l5.4-.7l3.1 1.8l5.4 3.3l7.5 .5l2.2-1.1l5.4 .8l6.9 .9l6.6 2.6l5 2.4l5.2 .9l5.9-.1l9-1.1l6.4 1.2l7.7 1.1l4.2-.2l9.4 1.7l5.4-.7l8.9 2l5.9 0l7-.8l6.7 .7l9.2 1.5l7.9-2.4l4.7 1.5l9.6 0l8.6-1.2l7-.2l5.6 2l9.8 1.1l6.5-2l8.4-1.3l5.5 3.6l8.4-.4l7.6-1.2M887.1 889.9l8-1.3l4.3-.3l9.7 .9l5.4-3.1l8.4 .9l4.5 .8l6.7-3l8.3 2.4M946.2 884.8l7.5-.3l6-1.4l5-2.3l7.3-.8l3.3 1M980.7 880.2l6.1-.9l6.5-.3l2.7-4.2l4.4-1.2l4 0l4.2-1.9l4.5-.9l3.1-1l3.1-1.4l2.8-2.1M629.1 872.5l2.4 .8l3.6 1.6l3.4 1.4l4.5 1.1l3.3 2.2l5.3-.8l3 1.6l7 2.6l3.2 1.2l4.1 1.6l6.2 .6M678.7 888l7.1 .4l4.8 1.4l7.6-.8l6.7 .7l6.7 .1l5.2 1.3l6.8 1.1l4.5 .3l8.4-.4M742.1 895.7l9.3-2.8M759 895.6l4.8 1.6l9.9-2.5l7 2.7l8.4-1.5l6 2.7l7.1-.7l8-.7l8.1-1.2l9.1-.3l4.2 1.9M839.8 898.6l10.5-.4l4.5-2.3l8.5 1.7M872.4 895.9l6.2-.1l6.2-2l8.2 .7l6.7 1.8l6.1-1.1l6.9-1.9l7.9-.6l8.1-.2l7-1.8l5.2 1.1l7.4-2.9l6-1.3l6.2 2.1l4.7-1.5l5.3-3l5.7-.2l5 1.7l3.9-4.6l7.6-1.4l2.4 1.6l6.2-3.7l2.9 .5l5.2-1.3l3.4-.9l3.3-2.2l3.7-.7l2.6-2.1M628.3 877.3l3.8 2.3l2.7 .8l4 1.5l3.7 .9l4.2 1.6l3.9 1.2l6.4 .4l2.7 3.2l4.4 1.6l6.5-1.5l6.2 3.3l5.1-.6M685.9 893.5l4.5-1.1l6.9 3.1M704.1 896.2l5-1.4l8.6 4.1l3.4-1.2l6.8-.1l9.6 1.1l8-.5l6.8 2.8l6.2-1.2l6.9 2l8.1 .7M780.1 900.4l5.9 .7l8.6 .6l10.1 2.6l6.1-2.9l7.4 .9l7.4-.6l8.7 2.9l4.8-.3l11.5-3.2l7.2 3l4.6-1.9l10.5-.8l4 1.6l9.8-.9l6.2-1.5l7.1 .3l9.5-.8l5.7-2.5l5.4 .1l9.5-.5l3.1-.8l9.5-.2l3.9 1.3l5.8-1.7l7.3-1.7l5.4-1.5l5.9-1.8l4 1.9l5.4-3.4l7.7 0l3-1.7l4.2 0l6.5-.3l2.7-2.8l4.1-1.4l3.7-1.6l3.9-.6l2.7-2.1l4.1-.8M571.5 215.4l-.5 7.7l1.5 7.2l2.4 7.8l1.8 8.2l1.9 6.4l.4 8.5l.5 7.4l.7 7.8l0 7.4l1.3 7.1l.1 8.1l.5 6.5l.2 8.2l.4 7.7l.6 6.8l-.1 7.7l0 7.8l-.4 8l1.2 7.3l-.9 7.7l.6 7.7l.3 7.6l.3 7.4l.2 7.6l.3 7.1l-.3 8.2l.4 6.8l1.1 7.7l.1 7.3l1.1 8.4l1.4 6.9l1.3 6.8l1.9 5.4l.7 7l2.3 5.7l.4 6.5l.7 6.7l1.1 6.1l1.7 6.2l2.1 7.4l2.4 6.1l1.2 6l1.5 6.9l2.2 5.5l1.3 6.4l1.4 6.5l1.7 4.5l1.8 5.8l1.2 6l.6 5.2l1.3 5.3l.3 5.7l1.1 5.8l1.3 5.3l.1 5.5l1.3 5.7l.5 5.4l.5 6.4l.3 5.7l.8 4.8l.7 5.9l1.1 5.4l-.2 5.8l1.4 5.1l-.5 6.3l1 5.4l-.3 4.8l0 5.8l.2 6.1l0 5.6l.5 5l-.1 6.1l.1 5.3l-.2 5.7l.9 5.1l-.2 5.6l.2 5.8l0 5l-.4 6l.7 5.4l-.3 5.9l.5 5.8l-.1 5l-.8 5.7l1.2 6.1l-1 5.5l.7 5.7l-.1 4.6l.3 6.3l.3 5.3l-.2 5.3l-.1 5.3l.2 5.7l-.8 5.8l.6 5.9l-.6 5.4l.4 5.4l.2 5.9l.1 4.9l-.1 6.4l-.1 5.5l-.5 4.7l0 6.1l-.1 5.6l.9 5.8l-.8 4.8M575.1 216.3l-.1 8l1.7 7l1.8 7.8l1.6 7.4l2 8.5l.6 7.3l.7 7.8l0 7.2l.7 7.6l.6 6.8l1.7 7.7l-1 8.5l1 6.6l-.2 7.5l-.1 8.2l.9 7.4l0 7.4l-.2 7.5l.2 7.6l.1 7.5l.9 8.2l-.5 6.9l.8 8.2l.1 6.7l-.5 8.5l.4 6.9l1.2 7.2l.2 8.3l.3 7.2l1 7.1l.7 7.5l1.2 6.9l2.6 6.5l1.5 6l1.3 6.1l.8 7l1.4 5.7l.7 7.1l1.2 6.5l2.1 5.6l1.8 6.9l1.3 6.2l2.7 6.8l1.6 5.3l1.3 6.7l1.4 5.7l1.8 5.7l1.2 5.2l1.1 6.2l.9 5l.9 6.5l.5 5.5l1.4 4.8l1.1 5.5l-.2 6.3l.8 5.5l1.1 5.4l.3 5.9l1.4 5l.4 5.4l.8 5.8l.8 6l-.4 4.8l.6 6.3l.2 4.5l.2 6.7l.7 5.2l.7 4.8l-.4 6l.2 6.2l-.3 5.2l.3 5l.5 5.4l-.4 6.1l-.3 5.8l1.2 5.8l-.8 4.7l.6 6l.1 5l.1 6.7l-.7 4.6l0 5.5l.3 5.7l-.2 5.8l1 5.1l-1 5.8l.3 5.4l0 5.6l.8 6.5l-.7 5.6l.2 4.5l-.4 6l1 5.3l-1 5.3l.4 6.2l.4 6l.3 5.1l-.7 5.5l.6 6.1l0 4.6l-.2 5.8l-.2 6.4l.1 5.2l.3 5.2l-.8 5.3l.6 6.3M579.6 218.2l-.6 7l2.4 8.3l.8 7.2l1.5 6.9l2.6 8.5l-.1 7.6l1.6 6.9l.3 7.9l.7 7.8l.8 7.1l.8 8l-.6 6.9l-.1 8.3l.5 7.2l-.3 7.1l.9 8.4l-.3 6.6l.9 8.4l-.2 7.7l0 6.9l.2 7.2l.9 8.1l-.2 7.2l0 8l.5 7.4l.3 7.5l.5 8.1l.4 6.8l-.3 7.9l1.3 7.1l.8 7.4l2.2 7.1l1 6.5l2.3 5.5l.8 7.3l1.3 5.6l.2 6.2l1.2 6.3l1.6 6.4l2 6.4l1.9 7.3l1.4 6l2 6.2l2.2 6.1l1.6 6.6l.9 6l1 5.2l1.9 5.7l.7 5.7l.9 5.2l1.9 6l.1 5.7l1.2 5.7l.1 4.7l1.2 6.2l1.2 5.2l0 5.9l.4 5.3l1.6 4.9l-.2 6.2l.7 5.2l.4 5.9l.2 5l1.4 5.8l.3 6.4l.6 5.5l.4 5.6l-.4 4.7l.4 6.1l-.5 5.2l.8 5.7l-.9 5.9l.3 5.4l.5 5.4l.5 5.5l-.1 5.4l.2 5.6l.2 5.8l0 5.3l-.4 5.7l.1 5.6l-.6 6l.6 5l-.2 5.5l.5 6.5l-.5 5l.7 5.8l0 4.8l0 5.6l-.9 6.2l.4 5.7l-.3 5.9l.5 5.1l-.4 5.1l.1 5.4l.5 6.5l0 5.4l0 5l-.5 6.3l.6 5.3l-.2 6l.5 5.5l-.1 5.5l-.6 5.6l.1 4.8l-.3 5.5M583.5 219.3l.5 6.9l.8 8l1.9 7.4l1.8 8.1l1.7 7l.9 7.4l1 8.3l-.4 7.2l.7 7.7l1.4 6.8l.4 8.4l-.4 7.1l.7 7.4l-.3 7.7l.5 8l.4 6.9l.5 8.3l0 6.6l.1 8.4l-.3 7.7l1.1 6.9l-.1 8.2l0 6.7l.6 8l.2 7.4l-.3 8.3l.3 7.1l.9 6.9l.1 8l.1 7.2l1.7 7.5l2.2 7l1.4 5.8l.8 6.9l1.8 6.2l.3 6.2l1 6.3l1.5 6.4l.7 6.3l2.8 6.6l.8 6.4l1.8 5.9l2.2 6.4l1.6 6.3l1.3 7.2l1.3 5.2l1.4 5.2l1.7 6.5l1.5 5.2l1.4 5.8l.3 4.8l.6 6.2l.5 5.9l1.7 4.7l.1 5.7l.5 6.3l1.5 4.5l.2 5.7l.7 5.5l.6 6.1l1 5.5l-.3 5.9l.7 5.3l0 6l.5 4.8l.9 6.2l.7 4.7l-.9 5.6l.5 6.5l-.2 4.6l.1 6.1l.7 5.9l-.4 5.6l-.2 5.3l1.1 6l.1 4.9l-1 5.6l.8 6l.1 5.7l-.2 5.3l-.4 4.8l0 6.7l1 5l-.6 5.4l.4 6l-.5 5.7l.7 4.9l.2 6.1l-1 5.4l.2 6l.6 4.9l.2 5.6l-.4 6.2l.7 5.1l-1 5.7l0 5.9l-.1 4.5l.3 5.7l-.2 5.5l-.1 5.9l.5 5.9l.4 4.9l-.9 6.5l.9 5.2l-.6 5.3l.3 5.6M587.7 219.7l1.1 7.7l1.5 7.8l1.7 7.2l1.4 8.3l1.7 6.7l.3 8.2l.3 7.5l1.2 7.9l1 7.5l.2 7.3l.6 7.5l0 7.8l0 7.5l1.1 6.9l-1 7.5l.7 8.1l-.1 7l.2 7.8l.9 8.3l-.3 7.7l.4 7.4l-.4 7l0 7.3l1.1 8.1l.4 7.2l-.2 7.9l.8 7.7l0 7.1l.4 8.3l.3 6.8l1.1 8.1l1.7 6.3l1.2 6.3l2.1 6.6l1.8 6.3l0 5.6l1.5 6.6l.1 6.1l2.3 6.8l1.3 6.8l1.9 5.9l2 5.9l1.4 6.6l1.7 6.9l1.3 5.7l1.9 5.7l.8 5.5l1.9 5.5l1.5 6.1l.3 5.7l.8 5.3l1 6l.2 5.4l1.5 5.8l.2 4.9l1.3 6l.4 5.6l.5 5.7l1.1 4.9l.5 6.4l.3 5.2l-.1 5.8l.9 5.7l1.1 4.4l-.6 6.7l.6 5.1l1.1 6.1l-.7 5l.5 6l-.6 5.5l.6 5.5l-.5 5l.2 5.9l.7 6.1l.3 5.1l-.1 5.9l-.4 5.2l.9 5.2l-1 5.6l.5 5.7l.5 6.1l-.7 5.3l-.1 6l.4 4.7l.5 6.5l-.8 4.7l.2 5.7l0 6.3l.8 4.7l-.9 5.7l.4 5.5l.2 5.2l-.5 6.3l.1 5.8l.3 5.7l-.2 5.3l-.1 5.2l.8 5.8l-.6 6l-.2 5.6l.6 4.7l.1 5.8l.2 5.7l-.4 5.7l.4 5l-.5 5.4M593.8 220.6l-1 7.6l2.6 8.5l.6 7.6l2.1 7.4l1.2 7.3l1.7 7.5l-.3 8.1l1 7.1l.5 8.1l.6 6.6l.8 7.9l-.3 7.5l.5 7.5l.7 7.5l-.6 7.5l1 8.1l-.9 7.7l.7 7.2l-.1 7.1l.8 8l-.7 7.9l.2 7.4l.3 7.1l.8 8l.4 7.4l-.8 7.6l1.4 7.9l.1 7l.9 7.7l.1 7.9l1.1 7.2l1.9 6.7l1.6 5.7l.4 7.2l1.5 5.9l1.4 6.6l1 5.9l.1 6.6l2 6.8l1.8 5.9l1.1 7l2.3 5.4l2.2 7l1.6 6.4l.5 5.7l1.4 6l1.2 5.2l2.2 5.7l1 5.4l1.1 6.1l.5 5.7l.4 5.1l1.2 6.4l.9 5.1l.8 5.3l.3 5.4l1.1 6.4l.7 5.7l-.3 5.2l.9 4.7l1.2 5.8l.3 5.6l-.1 5.6l1 5.4l-.2 5.9l1.1 6.1l-.3 5l.7 5.4l-.6 6.4l-.1 4.8l.6 6.1l-.6 5.5l.4 5.1l.8 5.4l-.1 6.2l-.7 6l0 5l.8 6.2l.2 5.5l-.7 5l.7 6l.1 5.7l.1 5.6l-.8 4.8l.2 6.4l.6 5.4l.2 5.1l-.5 5.1l.5 5.8l.1 5.7l-.8 5.4l.6 5.4l.2 6.7l-1 4.8l.3 5.5l.9 5.8l-.1 5.2l-.7 6.4l.6 5l-.5 5.1l-.4 6.3l.5 4.9l0 5.9l-.4 5.5l.2 6.4l.4 4.8M598.9 222l-1.2 8.1l1.5 8.2l2.2 7.5l1.3 7.8l2.3 6l-.3 9.8l2.9 4.5l-1.4 8.6l2.3 8.3l.3 7.8l-.6 7.9l2.2 6.2l.4 5.9l-1.2 7.9l-1.7 9.5l1.8 8.9l1.6 7.8l-2.1 5.6l2.3 7.8l.3 8.4l-.9 8.2l-1.1 4.6l-.4 8.2l-.3 9.3l.1 6.6l1.9 7.4l.8 8.5l1.4 4.7l-2.5 8.3l2.5 8.6l2.2 8.2l.8 4.2l1.1 6.3l-.5 9.4l2.5 3.3l.4 10.1l.2 6.2l1 5.8l3.3 6.7l2.5 3.5l-.2 6.6l1.7 8.7l1.9 7l3.3 4.7l.3 7.2l2.8 3.6l-2 6.5l4.3 7.6l-.8 5.1l2.1 2.8l-1.4 7.1l.4 4.2l3.8 5.2l1.4 8.9l-1.7 4.1l1.4 3.5l-.7 6.7l.7 8l.4 3.7l.3 6.6l2.4 5.4l1 3.7l-1.6 6l2.1 5l-1.5 5.9l.7 5.9l1.4 7.9l-1.1 4.5l1.6 5l1.7 4.1l-2.2 6.7l-1.1 4.9l2.9 5.9l-.6 4.6l1 5.9l-2.3 7.4l.1 3.9l1 6.1l-1.9 6.5l1.8 5.8l-.7 4l.1 7l2.2 5.3l-2.7 6.5l-.3 3.8l.6 5.8l.9 7.8l.1 2.3l1.6 5.6l-1.4 8.6l-1.6 5.6l.5 4.5l1.6 4.4l-2.4 7.8l3.8 4.6l-2.8 6.8l1.7 2.1l-1 6.8l1.1 5.6l.9 6.4l-1.5 5.3l-1.2 4.1l.3 7.2l.1 5.8l1.5 3.6l-1 6.8M604.7 223.5l-1.6 6.2l1.6 9.1l1.5 6.1l1.1 9.3l4.4 7.4M611 268.9l-.7 8.8l2.7 5l1 8.4l1 6l-.1 11.2l-2.1 5.3l2.1 8.7l1 7.5l-2.6 4.8l-.1 10.6l1.3 4.7l1.8 8.8l0 8.7l.9 5.6l-.5 8.1l1 7.2l-1.8 8.2l1.5 9.2l.5 5.4l-2.2 10.5l2.6 4.5l.1 7.8l-1.5 8.4l1.3 7.9l2.5 7.4l-1.8 5.4l1.6 7.5l3.7 4.4l2.2 7.5l-2.2 6.3l2.7 7l.6 5l.3 8.1l1.3 7.8l2.9 5.7l3.3 5.3M635.5 534.3l1.3 4.6l1.1 6.6M638.8 553.2l3.7 5.5l-1.7 4.4l.7 4.5l2.7 8.6l.9 2.5l2.6 6.1l-1.7 8.5l-.2 1.8l2.7 5.7l-.4 7.4l.5 6.9l-.4 2.8l3.4 5.1l-.9 5.9l1.7 5.5l-.4 5.6l1.3 8.9l-2.5 2.2l3 7l-.7 4.1l2.6 9.1l-2.9 2.2l2.7 9.2l-1.2 2.5l1.7 7.8l-2.2 2.7M652.5 702.2l2.6 8.3l-1.1 2.4l2.1 5.5l-.1 5.7l-1.6 5.8l1.1 5.9l-2.2 6.1l.8 5.2M654.9 753.5l1.6 3.4l-.8 8.7l-1.9 3.5l2 5.6l-.3 5.5l-1.6 8l.5 3.5l.7 4.4l-1.7 6.1l2.6 6.2l-2.6 6l.8 7.7l2.1 3.5l-2 5.5l.6 5l1.2 6M655.4 849.4l-.5 5.5l-1.4 3M656.1 866.5l-1.9 5.7l1.3 2.3l-.9 5.9l2.4 5.6M610.2 223.9l-1.7 5.7l2.9 10.9l2.7 6.2l-.7 7.8l1.4 7.5l2.4 6.4l-1.1 8.2M616.9 283.9l2.8 7.2l-2.4 9.2l1.6 5.2l-.1 7.5l1.5 9.8l-1.1 6.6l2.5 8M621 346.7l-1.6 5.7l.7 7.2l-.3 6.3l.4 7.9l2.3 10.6l-1 6.2l-.5 6l2.1 8.1l0 6.8l.8 9.5l-.9 8.9l-.7 4.4l0 8.6l2.1 7.7l.2 6.1l1.1 9.5l3.6 6.6l1.4 4.2l-2 6.2l4.1 8.1l-2.6 6l1.6 6l3 7.3l0 6l1.9 5.9l1.5 6.7l.8 4.4l2.7 6.7l1.1 7.3l.9 4.9l3.8 5.4l-2.1 8.1l1.7 6l1.7 2.2M648.9 582.6l1.6 6.1l.6 5.7l-.1 4.9l3.4 3.6l-2 6.1l.4 7.6l3 4.2l.3 6.1M657 631.8l.9 7.2l-2.4 2.1l3.3 9l-2.4 2.6l2.2 6.9M657.9 665.5l1.7 6.7l-1 5l1.7 5.1l-.1 6.2l-1.5 3.1l-.4 8.7l1.5 4.6l-1.4 6.2l-.1 2.2l-.7 8.7l2.8 6.2l-2.9 3.2l3 6.6l-2 4.5l-1 7.1l2.1 6.7l1.1 4.2l-1.2 5.3l1.4 4.1l-.7 5l-.8 8.3l.5 3.5l.5 6.7l.9 7.4l-.1 3.9l-1.8 6l-.9 6.3M661.1 822.8l-.6 2.2l-1.2 5.6l1 7.9l-2.5 4.2l3.5 5.1l-1.7 7.5l1.9 3.7l-2.8 7.2l1.2 4.7M661.6 883l-1.9 6.2M617.7 223.5l.3 8.7l-2.1 9.5l3.5 5.4l1 7.4l2.4 7.9l-.6 6.7l1.5 8.3l.7 8.9l.8 7.5l.3 5.5l-.4 9.7l.9 6l-2 10.2l1.4 5.8l.4 6.5l1.9 8.9l-.4 9.2l-.4 3.8l-2.1 9.2l0 9.2l1.6 6.5l-.9 6.7l3.2 9.3l-.8 6.6l-1 7.4l-.1 7.7l3.4 8.2l-2.9 4.9l0 9.4l2.3 7.8l2.8 6.2l-1.4 5.7l3.2 9.1l.5 7.2l2.4 3.5l-.3 6.9l2.3 5.5l1.1 9.8l-2.4 3.6l2.9 6.3l2.2 8.6l3.3 6.6l.3 4.9l-.3 8.1l1.1 2.9l1.6 6.1l1.9 7.8l2.1 3.3l.3 8.6l3 3.1l.3 4.6l-1.8 5.4l1.3 8.4l.6 3.8l1.8 5.5l-1.5 5.1l3.8 5.8l-1.3 4.9l1.3 9.1l.6 5.1M661.1 636.2l2.1 7.4l-.7 4.7l1.6 6.6l-2.2 5.1l-.1 6.3l1.8 5.5l-1.1 6.5l2.1 5.4l-1.2 3.4M663.1 692.8l2.2 5.7l-2.9 6.3M664.6 710.7l-.9 5.6l.4 3.9l.2 8.1l-2.1 4.3l1.6 4.7M664.4 743.1l1.3 6.6l-1.8 4.9l.5 4.8l-.1 6.5l.7 7.1l-2.7 5.6l1.6 5.8M664 788.3l1.1 6.7l-1.7 6.2l-.6 3.8l.6 6.6l2.2 3.3l-2.4 6.9l.2 5.7l-.3 5.2l1.9 7.5l-.2 5.1l.5 4.4l-.1 7.6l0 5.6l.7 3.6l-1.1 6M664.8 884.2l-.7 6.6M622.4 223.9l1.6 9.9l-1 5.3l3.1 9.5l1.7 7.4l-.4 9.6l1.1 6.2l2.4 8.7l-.8 4.9l2.4 9.3l-.7 8.3M633.4 309.4l-.4 6.3l-2.9 8l2.3 8.7l1.3 8.9l-.6 7.6l-.2 6.1l1.3 6.1l.1 7.7l-2.4 7.7l1.5 10.3l.5 4.8l.4 8.2l.8 8.1l-.6 8.9l.7 5l-1.1 10l2 5.8l-1 6.7l.1 9.1l2.8 7l-1.9 8.5l2 4.3l2 4.8M641.8 486.1l1.6 6.5l-1.9 6l4.4 6.2l-1.6 5.6l.8 8.5M648.6 525l0 5.9l2.5 6.2l-.2 8l2.6 6.2l2 2.7l1.6 5.6l2.3 6.3l-1.5 4.5l2.3 7.4l.9 5.2l-.7 5.5l1.6 6.3l2.2 3.5l-1.9 6.9l3.3 6.7l-1.2 3.4l.2 6.7M665.6 629.2l1.3 5.2l-2.5 2.9l4 8.3l-1 5.9M669.4 657.6l-1 2l-1.6 8.9l1 3.5l-.8 7.9l1.1 3.9l.8 4.3l-1.9 8.2l1.9 4.1l-1.2 4.9M670.5 710.9l-1.8 5.1l2.2 8l-.4 6.1l-1.7 2l1.9 9.5l-3.5 3.1l1.6 6.9l1.7 5.3l-2.8 7l.3 3.7l-.6 7.2l2.7 4.1M670.9 782.4l-1.1 7.5l.1 4l.5 8.7l-1.6 4.9l.6 3l.7 7.6l.6 6l-.4 5.3l.5 3.7l-1.8 8.2l-.1 5.3l1.8 3.2l-1.8 5.9l2.7 5.2l-2.3 6.8l-1 6.1l3.2 6.3l-2.6 5.7l1.7 3.5M630 227.5l-2.9 7.5l3.8 5.6l2.1 10.1l.9 5.2l1.6 8.3l-1 7.2l3.3 9.6l-.3 7.5l-.6 7.5l.3 4.8l-1.1 8.7l.5 7.8l1.3 9.2l-1.5 7.2l.4 7.3l2.6 5l-2 8.3l.9 9.5l.8 5.2l.6 11l-2 6.7l1.4 8.1l1.6 4.5l.9 10.7l-1.2 7.9l1.7 6l-1.1 5.7l-.7 7.4l1.6 11.3l-1.2 5.1l3.1 8.1l-.8 5.6l1 6l1.5 8.5l2.5 6.5l-.7 5.6l2.6 4.2l-1.2 9.4l4.2 6.4l1 3.8l-.8 9.5l1.2 3l1 9l2.9 3.9l1.3 8.8l2.3 4.7l1.1 5.4l-.7 7.7l3.3 2.7l-2.1 7.4l4.4 4.2l-2.3 7.8l3.7 4.6l-2 4.7l.3 4.1l.8 8.4l2.9 4.3l-1.1 4l-.9 5.5l3.4 8.9l-1.1 5M672.1 644.1l2 7.1l-2 4.8l.9 6.9l.8 5l1.4 7.3l-1.4 4.4l-.3 6.7l.9 3.8l-1.6 4.7l2.2 7.7l.1 3.6l-1.7 7.8l-1.1 6.3l3 4.7l0 3.8l-.8 6.8M673.6 741.4l.3 5.5l1.6 4.2l-1.9 7.8M676.1 762.6l-2 5.5l.8 7.2l1.1 5.1l-1.1 5.2l1.5 6.4l-3 6.3l2.9 3.4l-2.2 5.4l1.5 7.2l-1.2 5l-.4 4.6l2.2 6.1l.6 4.1l-3.4 7l.4 5.2l.8 6.8l1.5 5.4l-1 5l-1.1 4.9l2.1 4.4l-2.4 6.2l1.4 7.4l1.7 6.2M634.1 228.4l3.4 8.5l.1 5l-.6 9.8l3.6 5.6l-.9 9l1.8 7.7l1.2 6.3M644.8 295l1 6.2l-1 9.7l-.1 6.1l1 10.3l1.2 5.7M645.8 341.4l-1.3 8.4l-.6 7M643.6 365.8l1 3.8l0 7.6l.8 8.2l1.4 8l-1.9 7.9l-.3 8.6l3.1 6.4l-.1 7l-.5 8.2l-1.1 7.9l3.6 7.3l0 9.9l-.3 5.1l2.7 8.8l-1.6 4.4l1.2 5.8l3.3 7.8l1.9 7.4l-2.6 6.7l2.9 2.9l1.8 9.2l.1 3.8l-.2 7.2l4.4 7l-.2 7.3l1.4 3.5l.9 10.1l3.1 3.2l-.5 4.2l2.5 5.9l-1.7 6.5M672.7 581.1l-2.5 5.5l1.6 2.5M671.6 597.1l.9 3.8l1.6 7.8l2 5.8l-.3 3.5l-.3 6.6l1.6 3.5l.6 5.5l-.8 6.6l2.1 4.5l-.9 7.4l-.5 5.8l1 4.1l2.2 8.1l-3.3 6.1l2.2 3.1l-.9 5.7l1.4 7.3l-1.3 3.1M680.1 700.9l-2.6 7.3l1.7 3.9M679.5 717.5l-1.6 6l.8 6.6l.2 5.1l1.3 7.2l0 4.7l.6 7.1l-2.9 4l.7 7.3M681.9 768.1l-2.8 8.5l.4 2.8l.4 7.9l-.4 5.4l-.6 5.9l.6 5.4M679.1 810.2l1.1 5.2l-.8 3.2l-.3 7.5l-.6 3.4l2.4 7.7l-1.2 6.6M678.5 848.5l3.4 6.5l-3.3 5.5l2.2 3.1M681.6 868.5l-2.6 8l.1 3.3l-.4 8.2l3.2 4M641.2 230.1l.7 4.4l2.9 9.6l.4 7.4l1.3 6.9l3.5 7.3l-2 9l1.6 4.6l2.3 10.4l-.8 6l1.4 6.8l-1.6 7.3l.7 9.9l.3 9l-.9 5.7l.6 7.1l-.2 9.6l.3 7.9l.3 6.8l-1.1 4.6l2.8 10.8l-2.3 5.6l.5 7.7l-.7 6.2l1.6 9.9l1.3 6.2l-1.9 9.7M654.6 434l-1.5 4.6l-.2 9.1l2.5 7.5l-1.3 6.9l2.2 7.9l.1 4.5l2 7.6l1.4 7.2l.4 4.6l2.6 8.7l-1 3.8l2.4 8.8l1.4 5.4l1.3 5.8l.9 8.4l2.9 4.2l1.8 7.6l-1.5 5.8l.2 6.4M674.3 562.5l2.5 8.8l0 5.3M675.9 579.9l1.7 7.9l-1 4l3.9 6.6l-2.4 5.5l.5 4.5l.9 3.6l.5 7.9l1.4 3.4l-.6 6.5l.1 5.5l1 8.4l.2 5.2l2.4 5.5l.3 2.5l-.2 8.2l1.2 4.4l-.1 6.5l-.1 3.5l.5 5.6l-2.1 7.9M683.4 698.3l1 6.9l-.7 3.7l1.8 6l-1.4 6.2l-.7 4.6l2.9 6.3l-1.4 6.6l-.8 2.8l-.3 8.3M684.4 753.3l.2 7.1l1.2 4.1l-1.9 5.8l1.3 6.3l0 6.6M686.2 786l-.7 7.1l-1.7 5.3l2.4 3.8l-.6 6l1 7.2l-.4 6l-1.4 5.7l2 3.3l-2.7 7.6l.3 4.3l1 7.8M686 855l1.8 4.7l-3.4 6.7l2 5.2M686 880.7l-.2 7.7M648.8 230.4l3 6.6M651.9 242.6l.7 8.3l2.8 6.6l-1.7 10.4l.6 7.9l.4 8l2.8 5.2l0 8.6M657.3 305.6l.8 6.8l1.7 9.2l-1.8 5.5l2 7.7M659.8 340.7l-1.1 10.5l1.8 6.5l-1.3 6l-1.5 10.5l2.8 4.5l-.1 8l-.8 9.2M660.3 402.9l.9 7.3l.7 8.2l-2.4 7.1l2.8 6.1l-.5 8.6M659.8 448.9l3.8 6.5l-2.8 8.6l2.7 5.5l2.4 7.6l-1.1 7.9l1.8 5.2l-.2 6l3.3 4.4l-2.4 8.9l2.1 4l.5 9.8l3.4 3.2l1.1 6.3l1.7 7.5l-.6 6.2l1.4 7.9l1.3 4.6l1.5 7.1l2.9 4.1l-.4 6.1M683.5 581.7l-.6 3.5l1.4 8.7M686.6 596.2l.4 5.9M687.6 608.4l-1.5 6.6l.4 5.8l.5 5.2l1.8 4.4l1.1 5.7l-1.1 5.6l-.3 5.2l2.7 8.5l-.5 4.1l1.4 4l-1.7 6.1l-.8 5.1l-.7 6.6l.9 5.5M689.5 691.7l1.9 5.1l-2.3 8.5l1.7 3.4l-.2 5.7l-1.2 7.3l-.2 3.1M690.6 731.8l0 5.2l1.8 4.5l-1.9 7l-.3 7.6l1.7 3.9M689.3 766.5l3.1 5.4l-.1 5.2l-2.7 5.6l.7 6.7l.8 6.1l.4 2.7l.2 7.7l.9 4.9l.9 6.2l-2.6 6.1l2.2 2.3l-2.2 5.5l.8 6.7l.1 4.7l-.5 7.4l1.2 5.9l-2.1 4.2l2.1 7.3l.2 6l-2.9 4.6l2.8 5.6l-2 6.5l-.2 2.6M655.6 228.5l2.1 7.5l1.2 8.7l2.6 9.5l-1.1 4l3.8 9.9M665.3 274.9l-2.5 9.3l.5 7.9l-.1 7.4l3.6 4.7l-2 10.2l1.3 7.6l.1 5.5l-.6 7.2l2 7l.7 9.7l-3.1 6.6l.3 6.7l1.4 9.9l.9 6.4l-.3 6.6M666.3 395l1.7 8.7l-1.1 9.7l1.1 7.5l1.5 5l-1.3 9.5l1.8 8.3l-1.3 5.1l1.5 9.1l-1.5 7.7l4 3.5l-1.7 7.2l3.9 6M675.1 492.1l.7 6.4l.8 3.5l-1.8 7.7l3.5 6.1l1.4 6.2l-1.5 5.7l2.9 9.2l1.6 5.1l-.3 6.1l4.1 7.6l-.9 2.2l2.1 7.2l.4 4.3l-1.2 6.3l1.8 6.7M690.4 589.2l-1.5 4.8l1.5 3.6l.3 8.7l2.2 3.7l1 5.9l1.3 5l-1.1 6.1l-.7 5.4l2.7 6.8l-1.8 4.5M695.6 649.4l0 3.3l-.7 5.8l1.1 6.2l1.4 8.2l-.3 3.1l.7 5.1l1 7.2l-.3 3.7l-1.9 6.3l2.2 7.6l-3 6.1l.4 5.3l.1 6.2l2.6 2.4l-.5 8.2l-2.8 5.6M695.6 745.8l1.1 4.4l2.3 6.8l-1.4 3.3l-2.3 4.2l2.4 6.6l-.2 6.7l1.8 5l-1.5 7.3l-1.4 4.1l-.9 5.8l1.5 5.6l-.9 5.6l.7 4.8l-1 5l2.7 7.6l.9 5.9l-2.1 5.9l.6 2.5l-.6 5.8l-1.2 8.7l2.6 4.8l-.9 6.7l1.8 2.1l-2.5 7.7l.5 7M698.2 889l-.9 6.5M665.2 231.3l-.1 7.3l3.4 5.3l-2.1 8.8l3.2 7.4l.5 7.7l1 8.7l1.5 6.4l-1.7 9.9l.1 5l-.1 6.4l1.6 9.5l-.7 8.6l.2 7.3l2.8 6.2l-2.5 7.8l.3 8.2l-.7 7.9l3.7 8.6l-3.6 5.2l1.9 7.1l2.2 10.4M673.3 397.8l2.6 5.3l-2.3 9.9l.9 7.6l-1.1 5.4l.8 10l1.6 7.8l-1.3 6.4l-.1 8.4l2.5 5.6l2 8.6l.9 3.6l-.8 8.4l.6 7.5l3 4.6l-1.3 8.7l1.9 3.5M684 515.2l2.7 8.3l1.1 4.3l1.2 9.8l-1.9 4.4l2.9 5.9l2.4 5.5l-.6 5.4l0 8.2l3.1 6.6l1.2 2l1.5 6.8l-2.5 5.5l.1 4.2l1.1 7.1M697 606.6l1.7 5l-.5 4.5l.6 5.8l.2 5.6l0 5.4l1.7 4.5l.6 6.2l.7 7.5l1.5 3.2l-1.9 5.4l.1 6.1l-.1 4.6l1.8 8l-1.2 4.1l-.5 5.8l2.7 6.2M703.9 699.7l-1.6 6.3l-.8 6.8l2.1 2.6l-1.6 8.6l2.5 4.4l-1.1 3.8M703.6 738.9l-1.8 5.4l3.4 5l-1.6 7.9l.9 5l-1.2 3.2l-.5 6.5l1.7 5.2l.4 6.4l-2 6.3l-.7 6.5l.4 4.5l1 4l.2 8l-1.9 3.7l2.7 6l.7 5.9l-1.2 7.9l-1.7 5.3l-.2 4l3.3 3.9l-3.2 7.8l-.3 5.1M705.1 867l-1 5.5l-2 5.5l.7 8.6l2.1 3.1l-.8 6.5M672.4 231.1l-.1 8.6l1 6.3l3.5 8.9l-.4 8.2l3.7 5.5l.2 6.8l-.8 8.9l2.1 6l-2 7.2l1.1 9.6l-1 6.1l3.2 8.5l-2.4 9.3l2.5 6.6l-3.7 8.7M680.7 354.1l2.1 5.8l-.6 8.9l0 4.3l1.3 10.3l-1 8.5l1.3 6.6l-.7 7.9l.4 7.3l-1.6 6.2l.2 10.1l1.4 4.7l.3 9.2l-.3 8.8l-.9 5.1l.7 10.3l3.4 4.7l1.1 7.3l1.8 6.3l.3 4.5l1.2 5.3l-2.4 6.9l-.2 8.6l.7 7.3l1.4 4.4l.9 4.9l2.4 6.4l3.7 7.5l-.6 6.4l2.1 8.2l-.5 4.3l.9 5.7l2.6 4.6l-.8 4.7l2.3 9.2l-.1 5.1l-1.3 5.8l3.7 3.8l-2.5 5.1l1.6 4.4l.8 7.4l-.3 6.2l-.7 3.6l.6 8.3l.4 6.1l3.1 3.1l-2.3 6.7l3.1 4.9l-.9 5.1l-.4 7l1.1 6.1l-1.3 5.1l-.5 6.9l2.5 4.9l-2.7 2.9l1.9 8.8l0 4.5l.2 5.6l1.6 4.7l-2.3 7.8l.1 4l-.2 4.4l.1 6.5M710.4 744.1l-1.8 5.8l.1 7.2l-.7 3.5l2.8 7l-2.4 5.4l1.9 7.4l-.1 6.1l1.2 4.9l-2.3 2.6l2.4 8.6l-.5 4.2l-1.7 5.6l2.1 6.1l-1.9 5.1l1.3 6.8l-2.7 4.3l.6 5.5l-.1 5.3l1.5 7.3l-1.2 3l2.8 8.7l-.1 3.8l-1.9 5.8M709 879.5l-.3 7l2.9 3.3l-2.5 5M683.3 237.3l.1 8.5l2.3 8.4l-2.5 8.7l1.7 5l1.9 10.6l-1 4.3l2.4 8.2l0 8.1l1.8 8.3l-2.9 8.8l.8 5.3l1.7 6.7l-1.6 8.9l.6 7.7l.3 7.5l-1.1 6.5l1.9 8.3l-1 6.7l2.1 8.1l-1.8 8.4l1.6 6.7l-1.2 9.7l2.3 6.6l-.3 7.8M690 429.5l2.2 5.7l-2.3 9.8l2.6 5.1l.6 8.9l1.1 9.4l.7 6l1 3.8l-2.1 9.1l2.8 6.5l.4 5.7l1.4 5.2l.5 5.8l-2.3 7.9l4.3 7.8l.2 5.1l-.4 7.4l2.3 3.2M705.7 551.3l.6 3.2l-.1 8.9l2.6 4.3M708.7 574l1 4.7l1.3 4.8l-2.1 6.1l1.7 6.3l.3 6l-.1 4.2l.6 4.2l-.8 5.7l3.8 8.3l-2.6 4.7l1.9 3.8l-1.4 7.5l3.4 5.5l-2.5 7.2l3.5 2.9l-1.7 4.6l.2 5.8l1 6.7l.9 6.2l-1.1 4.1l.2 7.9l.5 3.4l-2.4 8.1l.3 5.7l2.2 5.5l-.5 6.4l.9 4.5l-.4 4.1M715.9 735.2l-1.4 4.8l3.3 7.1l0 3.8l-2.5 8.1l-.3 5.2l-.4 6.1l2.5 3l-1.9 5.1l1.1 7.3l.8 6.5l-.3 4.5l-.8 4.9l1.7 6.5l-.1 4l-.1 6.5l-1.2 7.6l.3 3.1M715.1 841.7l-.5 3.6l.1 6.3l1.4 8.1l-1.1 2.7l1 7.5l1 4.4M717 879.3l.7 6.1l-.9 5.7l.9 7.8M690.5 233.7l-2.8 6M690.7 248.3l-.4 8.3l3.7 7.5l-1.2 6.2l3 6.8l-2.1 8.6l.5 5.7l3.6 9.1l-1.3 8.8M695.9 315.9l-.1 6.8l-.4 6.8l3.5 10.4l-2.5 7.5l.7 6.9l-1.7 7.7M699.3 369.7l-2.6 8.1l2.5 4.6l-.1 8.8l.4 7.2l-3.3 6.3M697.2 413.4l-.6 10.1l3.2 4.1l-3.3 9.3l3.9 8.6l0 7.2l-1.8 8.1l0 4.8l3 6.4l1.5 8.3l-2 6.2M703.9 500.6l2 3.8l-1 8.8l1.2 6.1M707.4 525.3l1.8 7.6l1.8 3.7l-.1 7.9l-1.2 5.6M711.7 556.3l3.4 6.7l-2.3 5.8l1 6.7l2.8 3.2M717.3 586.1l.9 5.7l-1.1 3.2l-.9 7.7l.9 3.1l0 8.8l.8 2l.7 8.7l-.5 4.2l2.3 3.9l-1.2 8M719.6 647.7l.8 5.3l2.1 3.1l-2.2 6.8l-.1 6.2l2.5 4l0 8.5l-.5 5.5l.2 3.5l-.9 5l-.8 6l3.6 5.4l-2.5 4.9l.2 7.9l1.7 3.7l-.9 7.5l-.3 6.8l-.9 4.6l2.1 3.7l-2.6 4.9l2.3 7.3l-2.3 4.3l-.3 7.3l.9 5.5l3 5.3l-1.7 6M722 793.3l-.8 2.2l.7 9l2.2 4.5l.7 4.4l-.8 5.7l-2 6.1M721.6 832.8l1.1 4.3l1.1 6.6l-1.6 5.8l2.6 2.1l-.3 6.4l-3.2 5.7l.8 4.7l2.4 8.6l-2.4 2.5l2 7.1l-.5 5.6l-2.5 5.5M698.6 233.9l1.4 6.4l1.2 7.7l.9 7.5l-1.3 8.4l1.4 7.8M702.6 277.6l-.5 10.1l1 4.8l.5 8.8l2.1 6.9l-1.3 9l.3 5.2l-.3 7.7l2.6 6.9l-2.4 10.1l2.1 7.5l.2 5.3l-2.4 9.1l-.9 7.8l1.2 7.6l.6 8.4l.3 7.6l.9 8.2l-.1 8M706.7 422.4l-.8 7.7l.3 9.2l.5 4.3l-1 8.3l3.4 10l-1.2 5.4l2.6 5.7l-1.7 9l2.9 4.8l-.7 8.1l2.5 5.1l-1.4 5l2.1 6.2M713.4 517.7l2.9 6.5l-.9 8.7l1.2 5.1l-.6 5.9l2 5.6l.9 6.9l1.8 5.2l-1.1 6.1l1 5l2.7 7.5l-1.1 6.4l1.9 4.4l-.2 6.2l.7 4.1l2.7 6.1l-1.8 5.3l1.5 7.6l.8 5.6l-.3 4.6l-1.2 5.9l.5 5.9l2 4.5l.5 6.1l.6 5.3l-1.9 5l-.5 5.7l2.9 7.4l.7 5.6l-.5 3.8l-.3 6.4l.2 7l-3.2 3.4l1.7 7.6l-.8 4.1l1.4 5.9l1.5 4.2l-1.3 5.9l1.1 4.8l-.2 7.4l-1.3 7M728.9 754.2l.4 5.4l-1.4 3l3.3 7.5l-2.6 4.4l-.1 5.9l2.5 5.2l-3.3 8.5l.5 5.9l1.4 2.2l-.6 6.2l2.2 7.9l-1.4 3.5M730.6 825l-.4 8.4M729.8 838.7l-1 3l1.6 5.5l1.1 4.8l-1.9 6l-.4 6.1l2.2 6l-.6 7.3l-2.5 3.8l3.5 6.5l-3.7 4.8l-.2 5.1M706.7 234.4l-1 6.1l1.4 6.1l1.7 9.1l1.7 9M709.7 269.3l.5 8.7l2.5 6.4l-1.3 7.9l1.9 8l.5 8.3l1 7l-.1 10.5l-.6 4.6l-1.6 10.3l2.9 5.7l-1.8 8.6l-1.9 8.7l.1 7.7l2.4 6.9l-.9 7.4l.2 6l1.3 9.1l-1.3 5.7l2.4 8.4l-1.8 6.4l1.2 7.9l1.4 9.7l.3 6.9l-.3 5.5l-1.3 8.6l1.6 9l-1.4 4.9l1.2 5.9l2.5 8.5l1.7 4.6l-1.4 8.8l-.9 5.1l2.1 6.3l1.6 4.6l-.8 6.5l.1 9.2l3.1 6.4l-.5 6.5l1.8 4.9l2.4 6.8l-1 4.6l-.7 6.7l2 5.3l1.4 4.1l-1.2 8.5l2.5 5.3l-.4 4.3l.3 7.6l2.3 3.7l1.2 4l-.3 5.5l-1 8.1l2.2 4l-2.8 5.3l1.1 7.7l1.4 4.4l1.5 7.8l-1.9 3.7l1.2 6.5l-1 4.1l1.1 7.1l1.5 3.7l-3 7.7l2.3 3.5l-2.2 7.7l1.9 4.7l-1.9 4.9l1.2 6.1M735.9 721.5l.5 3.8l-.7 5l1.7 6.8l-2.4 4l-.1 6.7l-.1 6.7l-.2 6.5l1.1 5.9l1.6 2.2l-2.6 6.8l-.1 6.8l.6 5.7l0 6l3 3l-1.7 8.1l.2 6l1.2 5.3l-.4 2.3l-2.2 8.7l2.3 2.4l-.2 9.4l.3 5.6l-.4 5.4l.1 4.5l-.6 4.5l1.5 6.5l-3.3 4.8M737.6 875.3l-.9 7.9l-.7 4.3l.5 4.6l1 6.6M716.9 232.1l-.8 9.7l.3 6.1l2.4 7.3l1.7 7l-2.1 10.6l.1 5.2l.6 9.3l3.4 6.1l-3 7.7l.3 9.1l3.7 6.9l-3 8.1M721.6 331.9l-.4 8.1l2.5 7.7l-2.8 8.1l-.1 7.8l1.3 6.6l-1.2 9.1l1.3 5.7l.9 8.1l-2.5 5.8l.5 8.3l1.3 7.8l2.1 6.6l-.9 9.7l-2.2 7.5l2.7 6.1l.6 8.8M725.7 463.3l-.4 6.9l0 4.5l2.3 9l-2 3l2.1 7.6l-1.7 4.8l1.9 7.2M730.7 521.9l.6 6.5l-.6 4.5l-.3 8.2l2.3 6.2l.1 6.3l1.6 5.4l1.5 4.4l.1 4.5l1.5 9.3l-1.4 5.1l3.7 4l-2.5 4.7l3.8 6.5l-1.8 6.7l-1.1 3l.2 7.4l.4 5.9l3.2 6.2l-1 5.9l-.9 5.1l3.2 5.7l-1.7 5.7l0 4.1M741.1 660.6l1.8 3.2l0 8l-1.4 3.1l3.4 7.6l-2.1 3.9l-.8 6.4l0 6.6l.4 4.1l1.3 5.3l-1.7 6.1l1.3 5.6l-1.4 7.6l1.1 1.9l-1.3 6.7l.1 6.5l1.9 6.3l1.3 4.1l-3.5 5.1l.9 8.6l2 4.1l-2.2 4l0 5.3l1.9 5.4l-1.9 7.5l2.8 4.9l-2 7.2l-1.3 2.8l1.4 9.3l1.5 2.6l-2.3 7.6l2.3 5.7l-2.6 5.1l3.3 6.4l-1.1 3.7l-.8 6.6l1.3 4.7l-.4 6.1l.8 4.5l-.5 7.8l-2 5.5l2.8 5.1l-3.3 6.5M722.9 234l2.1 7.8l-1.3 7.4l1.4 9.5l3.7 4.1l-.6 9.4M729.4 281.4l-2 4M731.1 294.6l-.8 8l.2 9.3l1.4 5.1l-1.6 8.1M732.5 332.5l-2.7 8.3l.4 7l1.9 8.8l-1.9 4.5l-1.3 10.9l3.1 4.6M730.6 386.4l-.4 7.7l2.7 8.3l-3 5.3l0 8.7l.7 7.6l.7 9.3l.8 5.4l1.8 7.1l-2.5 8.5l-.7 9.4l1.8 5.8l.9 5.5l1.9 5.7l-.9 6.2l-.4 6.4l.3 7.8l3.7 7.3l-1.6 4.7l-1.2 8l1.5 5.1l3.6 8.4l-.7 4.1l2.5 8.1M743 551.8l-1.1 5.2l-.3 7.5l1.7 6.2l2.7 6.2l-.1 5.2l1.9 4.1l-.2 5.7l.8 6.1l-.6 7.2M749.3 608l-2.1 5.9l1.6 6M746.7 624.4l2.4 6.2l-.9 4.8l1.3 5.7l-.4 7l2.4 5.2l-2.3 8.2l1.6 2.7l-.4 6.8M749.5 674.6l1.8 8l.4 4.3l-2.1 4.4l2 6.8l-2.4 5.7l2.9 6.3l-2.6 3.7l1.4 8.2l-.8 6.1l-.7 3.4l1.2 6.1l1 5.5l-.5 6.8l.4 5l.6 5.2l-2.8 6.4l3 3.5l-.6 5.3l-.7 6.3l.9 5.2l-1.6 6.3l2 7.1l-1.9 3.7l1.6 8.9l-1.3 1.6M751.5 820.7l.7 8.6l-.3 4.5l-3.1 4.3l3.1 7.1l.1 5.9l-.9 4.9l-.2 6.2l-.5 4.9l-.3 4.1l2.3 5l-1.6 8.9l0 3.4l.6 4.4l.9 8.1M734.8 235.5l.2 8.3l1.4 7.7l-2.5 6.9l3.4 6.2l1.9 8.7l-2.2 6.7l-.7 9l.1 7.5l3.7 5l-.5 7.4l-.5 7.3l.2 9.1l-1.8 9.7l1.6 7l-.4 6l.6 6.6l1.3 9.6l-2.8 7.4l2.2 8.2M738.8 393l-.8 7.3l2.1 8.1l-1.8 7.8l2.5 9.4l.9 6.7l-3.1 7l1.7 7.1l1.2 9.5l-.4 5.9l-.5 9.1l.5 6.2l1.6 5.9l-.5 4.2l3.2 9.7l-.9 4.5M743.6 506.7l1 9.9l-.4 2.7l1 9.3l1.3 6.4l1.8 5l.2 8.1l1.6 3.2l1.1 7.8l1 4.7l-2.2 5.7l3.1 7.5l.6 4.5l-1.3 5.9l-.3 4l3.5 6l-.3 4.9l.5 5.9l-1.9 6.7l2 4.9l-.2 8.2l2.3 3.1l-3.4 6.1l2.1 6.2l.1 5l-1.6 8l3 3.1l-1.6 4.5l2.8 8l-3.5 3.8l1.7 7.8l-.4 3.4l-1.3 6.4l0 7.9l2.2 3.3l-1.1 7.8l1.4 3.4l-2 5.2l.6 5.7l-.6 4.5l2.5 8.4l-1.7 6.2l-.8 4.2l2 6.5l.8 3.5l-2.1 4.7l.3 6.3l1.6 8.4l.5 3.9l-.2 4.1l-.4 5.7l-3 5l3 6.3l0 5.7l-.2 6.2l.8 5.1l-1.5 6.2l-.2 5.6l.2 4.9l-.4 7.9l-.4 2.6l-.4 7l-.1 6.3l2 5.6l-2.7 4.4l1.1 7.2l-.4 4l3 7.4l-.7 5.1M742.9 235.8l-1.1 5.4l1.3 10.4l2.2 7.3l1.3 7.3l-1.4 5.9l.8 10l2.1 4.6l-1 7.7l.3 9.8l1.5 6.7l-1.5 5.5l1.9 11.2l.7 4M749.1 340.8l-1.8 6l2.7 10.7l-1.5 6.2l.4 8.1l1.4 6.8l-2.5 9.6l.5 4.5l.1 7.9M748.7 415.2l-.2 7.7l-.8 9.8l1.4 8.9l2.2 4.2l0 9.8l-3.2 8l1.2 5.8l2.1 5.4l-1.1 9.5l1.1 5.9l.1 6l.8 5.4l1.9 5.3l.6 6.1l.1 8.2l.7 4.8l-2 6.3l2.1 8.9l1.7 6.1l-1.3 4.3l2.8 7.6l1.2 4.2l-.4 7.6l-1.3 6.5l.6 6.4l.2 2.7l1.1 6.6l.5 4.9l1.4 6.4M761.5 609.4l.8 5.9l-.8 5.2l2.9 6.6l-.4 5.5l1.6 5l-1.1 5.3l1.4 5l-2.2 8.6l1.9 3.7l-1.4 7l-1.3 4.3l3.1 6.5l-.9 6l1 6l-1.8 3.4l1.3 5.7l-2.1 6.1l.7 6.5l-.4 6.7l.4 3.8l.5 4.3l-.1 6.9l-.6 3.5l.3 6.8l2 7.4l-2.9 2.8l3.5 5.9l-2.5 6.9l1.3 3.9l-1.5 5.8l.1 8.3l-.7 3.3l-.2 7.8l1.3 5.2l.5 3.1l.9 8.5l-2.3 4.6l2.8 3.9l-2 8.4l2.4 6.1l-3.7 2.5l1.7 6.9l-.9 5.4l.4 5.7M766.5 861.9l-.6 4.7l-1.6 6.5l.4 5.8l-.4 3.7l1.3 7.9l-1.8 6.7l1.6 4.6M754.5 248.5l.8 7.6l1 10.6l-2.1 5l3.1 10.6l.6 6l.4 6.7l-2.9 8l-.2 7.9l1 8.1l0 6.6l2.4 8.7l-1.6 5.2M757.4 355.3l-.1 8.9l1.3 9.4l.4 7.2l-1.3 5l.2 9.7l-1.6 8.5l-.5 4.8l1.2 10.5l.3 6.5l-1 5.4l2.8 10.5l.7 6.6l-.5 5.2l-1.4 10.3l.2 5.7l2.9 6.1M759.7 483.4l-.4 6.2l3.4 4.8l-2.9 9.8l.5 3.3l.2 7.1l.4 5.8l2.1 9.3l.5 5.4l-.9 5.6l1 7.5l1.9 5.2l.9 7l.5 5.2l-.8 4.7l2.3 7.2l-.6 6.7l.9 2.9l2.5 8.1M771.3 599.9l-.8 3.6l.3 8.1l-1.9 5l2 3.6M771.9 628.7l-2.2 2.3l1.1 6.6l2.8 7.1l-3.5 4.2l1 7.3l.3 2.8l1.4 6.3l-.6 5.3l.1 6.6l.9 6.2l-2.7 7.1l.3 5.6l1.5 4.2l2 5.1l-2.5 5l.2 6l2.4 7.6l-3.7 3.7l.7 5.5l.2 6.6l1.4 3.2l-2.3 8.3l3.6 3.8l-1.6 5.2l.4 7.7l.8 4.7l-1.7 7.4l-.3 5.7l-.3 2.1l1.2 5.4l1.6 7.4l-2.7 5.2l2.1 4.1l0 6.4l-1.1 7.5l-1.6 3.8l-.3 8.3l3 4l.5 7.5l-1 4.7l-.4 3.4l-.5 6.5l2.2 6.3M771.7 874.6l0 4.2l.6 4.3l.3 6.6l1.1 5l-.2 7.8M761.6 233.7l1.1 10.1l-2.2 7.7l3.6 4.6l-1.7 9.5l.7 7.2l3.5 9M765.9 290l-2.3 5.1l2.2 9l1.7 7.7l-3 5.9l-.2 8.4l3.5 8.4l-.9 7l-2.2 6.5l.1 10l1.1 6.6l1.1 7.2M764.3 378.9l2.5 6.4l-1.7 9.6l1.8 7.1l1.5 7.2l-3 10l.9 7.3l1.5 4.6l-2.4 7.9l2.4 9.6l.3 8.1l-1.3 6.5l-.5 8.1M767.5 478.3l1.2 3.3l-.9 7.2l1.2 9l.4 5.2l2.1 4.5l-1.9 8.7l0 6.3l.3 4.7l3.1 7.8M771.3 539.4l1.1 9.8l1.4 4.4l-.5 5.6l.5 6.8l.9 6l1.7 3.3l-1.1 9.1l1 4.1l.8 5.1l.7 7.1M779.1 604.4l.8 6.5l-3.4 5l1.8 5l.3 8.4l.6 2.2l-.7 9.2l2.2 5.6l.4 4.3l-3.2 6.2l.6 4.7l-.1 4.4l.4 6.3l.9 7.5l.6 2.6l1.4 7.1l-.6 4.4l-.3 5.5l-.4 5.8l-.8 7.1l.2 3.5l-.3 6.7l-.1 6l1.8 7.1l.3 5.7l.2 4.4l-1.9 4l2 6.3l-2.9 5.4l-.2 8.2l.5 5.6M780.6 777.9l1 8l-.4 3.5l-2.8 7.6l1.4 2.2l1 6.3l-2.2 5.7M778.6 817.4l3.3 7l-2 6.1l-1.8 2.5l1.8 8.6l1.9 4.8l-3 4.5l.5 5l-1 7.7l1.3 5.5l-.6 6.1l.5 2.7l-.5 6.5l.3 6M780.7 897.4l-.6 3M768.8 236.2l.4 8.8l1.3 5.1l.4 8.5l.3 9l3.9 7.1l.2 5.3l.2 9.5l.1 4.8l0 11.5l-.8 3.7l2 9.8l-2.4 6.1l1.4 10.1l-2.5 4.6l2.2 10.5l-1.3 5.5l1.6 7.2l-1.6 10.8l1.7 5l-2 8.7l-.4 5.8l2.9 7.9l-.6 10.7l-.5 5.8l1.9 5.9l.2 7.2l-1.3 10l1.1 5.7l-.1 7.6l-1.4 11M775.5 469.2l3 10.1l.5 6l-1.5 6.7l1.4 6.5l-1.7 3.2l.6 8.1l.5 5.4l1 5.6l-.7 9.2l2 3.3l.5 6.3l-1.5 7.4l1.4 8M783.2 560.9l1.8 6.1l-1.6 4.1l1 7.8l.4 2.7l-1.6 7.2l2.3 5.5l.1 6.1M785.6 603.7l-1.3 8.1l1.9 2.9l1.9 8.9l-3.2 2.5l1.2 8.4l2.4 6.3l0 4.9l-1.4 5.4l1.7 5.1l-.9 3.6l-1.9 7.1l2.3 6.4l-1.8 6.1l1.6 4l-1.2 6.4l-.8 7.1l.6 3.3l1.4 5.6l-.6 7.8l-1.7 3.1l.6 7.3l-.7 2.8l1.1 5.6l0 5.5l2.5 7.6l-2.8 4.9l-.4 7.5l2 3l-.4 7l-1.9 4.5l2.4 6.1l-.4 6.5l1.3 4.8l-3.1 6.9l.1 5.5l.5 5.8l1.7 3.9l-1.3 7.8l-1.1 4.7l1.4 4l-1 6.8l-.1 5l.8 4.7l-.1 7.3M786.7 858.4l.8 6.5l-1.2 2.3l.8 6.8l1.6 5.6l-2.3 6.1l2.1 6.2l.6 4l-3.1 5.2M780.2 235.6l1.9 9l-.7 6.8l-1.5 7.9M781.8 266.8l2.8 6.1l-1.8 8.9l.5 6.1l-.4 10l-.4 7.8l2.5 7.9l-.2 4.5l1.1 8.9l-3.3 5.9l.8 8.8l1.3 7.8l1.6 6.4l-2.3 9.4l.5 6.6l-.4 9l.7 7.6l-.3 7.4l-1 5.7l2.8 9.8l-2.5 5.5l.9 6.8l1.3 10.7l-1.6 6.5l-.8 5.8l1.4 8.9l.8 9.6l-1 7.2l2.7 5.4M788 484.3l-2.3 4.6l2.1 9l-2.1 6.5l2.9 6.2l-2.4 6l.8 7.5l.1 3.5l.7 9.5l2.8 5.6l-.1 3.9l.4 7.9M790.8 560.3l.4 8l-1 3.7l.3 6.2l1.2 5.8l2 5.4l-1.8 7l2.4 3.8l.8 5.2l0 4.3l-2.5 6.5l3 7.1l-1.7 3l2.2 8.5M795 641.1l-1.8 4.5l2.3 3.7l1.1 7.3l.1 6.7l-3.4 4.8M793.4 673.6l.9 6.5l2.8 3.9l-3.7 7.5l3.4 4.5l-1 5.7l-2.7 3.2M796.3 712.1l-.2 7.4l-1.6 2.4l-.1 6l-.7 6l0 6.2l1.9 5.3l-2.2 4.4l.4 5.5l1.2 6.6l1.7 7l-.6 6.1l-2.2 4.4M793.7 784l2.6 5.4l-2.4 5.4l2.5 6.9l-1.5 6.6l-1.7 3.2l.9 6.1l1.5 6.8l.2 6.9l-1.6 3.4l.2 7.1l1.1 6l-.3 2.5l-1.4 5.6l2.8 6l-2.2 7.8l-.1 6.4M794.9 879.2l-.2 5.8l1.7 4.5l-1.3 9.1l-.5 3.1M790.7 237.3l-3 6.6l1.9 5.6l3.5 9.6l-2.5 6.1l3.5 6.8l-1.5 8.9l-.7 6.2l2.2 9.9l-.5 7.8l1.4 5.9M795.4 318.5l-2.8 7.2l-.4 7l1.5 10.1M794.9 348.8l-1.9 7l-1 10.4l1.7 5.7l1.3 6.9l-.4 7.2l-.4 9.5l1 6l-1.2 8.1l.5 8.1l-.4 8.9M795 434.5l1.1 6l-2.1 6.4l2.2 8.6l-3.4 8.3l2.6 9.1l1.2 6.1l-1.6 4.5l2.2 6.4l-.6 8.5l-2.1 4.2l1.7 8.9l-.2 4.9l-1.8 7.1l.4 7.2l2.3 5l1.1 6.6l1 6.7l-1.6 3.6l2.5 10.1l-1.5 5l.3 3l3.1 5.9l.8 6.6l-3.3 6l3.6 3.9l-.6 5.4l1.1 7.2l-1.6 5.6l.8 4l-.2 6.3l1.4 5.8l-3.4 5.8M801.5 638.3l2.7 7l-2.3 3.3l1.8 7.8l-.1 6.8M803.4 668.3l1.2 4.6l-3.1 4.5l3 6.8l-2.5 3.7l.3 7.8l1.1 5.3l-.9 5.5l-.8 7.3l.7 3.6l1.4 6.9l-2.9 4.8l.5 4.4M804.4 738.3l-1.2 6.1l-1 5.6l.5 7.9l1.4 4.8l-3.2 4.6l.3 5.5l1.9 5.1l-2.1 5.2l3.5 8l-1.6 6.7l-2 5.3l2.7 4.5l1.1 3.6l-1.9 7.2l.2 6.4l-1.5 3.3l1.8 7.8M801.1 841.4l-.1 6.6l2.8 4.8l.4 4.3l-2.1 4.9l-1.4 5.9l.9 8l2.6 6.1l-3.5 3.1l.4 5.9l1.1 6.9l2.5 6.4M797.5 234.7l3.3 8.5l-1.3 7.9l1.4 7.4l2 7.7l1 7l-3.3 8.3l3.7 9.3l-1.1 7.3l-1.2 6.2M801.4 311.8l0 7.5l2 9.1l-1.5 4.5l2.8 8l-2.3 7.9l1.1 7.3l.3 8.3M801.4 373.2l-.5 6l3.6 7l-.3 8.3l-2.6 10.1l-.1 4.5l3.2 8.8l-2.3 8.4l-.3 8.2l2.8 4.9l-.3 9.5l-2.7 8.8l3.1 6.7l-.7 7l1 8.4l-2.3 3.4l1.3 7.3l-.3 5.3l1.1 6.1l-.6 9.8l-.7 4.5l-.8 7.3l1.1 4.6l.8 9.3l1.6 6l1.2 3.9l.9 8.8l-2.8 6.5l1.4 2.7l-.9 7.3l2.2 5.5l.9 6.7l.5 3.8l.4 5.5l1.1 7.1l-2.7 4.1l2 7.6l.3 3l-.3 7.6l1.3 6.8l-.9 2.1l.4 8.4l.7 5.7l-2.6 5.5l1 5.5l-.6 5.7l2.4 4.3l-3.2 3.7l2.1 6.2M809.7 685.3l1.5 6.4M809 697.2l1.3 5.2l.6 3.5M810.5 711.3l-1.3 4.9l.5 8.5l1.7 4.4l-.4 7l-2.3 3.5M811.3 743.9l-1.6 8.2l-.6 5.7l1.5 5.3l-.2 4.2l-1 6.3l2.1 6.6M811.8 785.5l-1.6 4.2l2.1 7.4l-.8 5.4l.3 4l.2 8.2l-3.2 5.9l-.5 3.7l3.4 5.9l-1.8 6.8l2 5.1l-.5 4.2l-1.4 5.4l-.1 5.7l2.2 5.3l-.8 4.6l.8 9.3l-3.3 3.9l.3 6.9l1.6 3.6l-.5 6.2M807 234.4l.1 9.8l4 6.6M811.3 257.2l.8 9.6l0 7.7l.1 5.3l.7 7.7l-.2 9.9M811 302.7l.4 9.6l1.3 7.7l1.2 8.1l-3.2 6.1l.3 7.9l.8 8.4l1.1 7l-.1 7.9l-1.8 8.7l1.2 7.6l-1.6 8.1l1.8 3.8l1.1 9.6l-3 8.7l1.2 5.1M811.8 427.9l2 4.9l-3.1 9l.4 5.3l2.5 9.9l-.4 6.9l-1.3 6l2.9 8l-1.4 6.1l.1 4.9l1.9 7.2l-1.8 7.3l1 7.9l-.4 4.9l-.1 5.8l1.3 6.8l-.9 8.7l.1 3.1l2.1 6.4l.6 7.1M816.1 562.2l-1.2 4.8l.1 3.6l3 7.2l-2.9 4.7l2.4 8.3l-.8 2.8l1.3 8.2l.1 4l-2 5.1l3.1 8.3l-2.4 5.5l-.7 5.1l1.7 2.9l-1 8.1l.6 3.9l-.3 6.9l-.1 6.3l.3 4.4l-.5 7.2l.7 5.3M816.7 679.9l3.5 6.3l-3.3 5.5l3.3 5.4l-1.1 4l.7 6.5l0 4.4M819.2 718.7l-.6 5.2l1.4 5.5l-.9 5.5l.4 5l-.9 4.7l-1.3 5.5l2.6 7.1l-2.9 4.5l2.6 6.7l-1.4 6.8l-.6 5.6l.6 6.1l1 5.1l-2.7 3.3l3.5 6.3l-.1 4.5l-2.9 7.9l1.2 5l-1.9 6.7l1.4 3.7M818.2 834.4l.9 8.7l-2.7 2.4M818.4 852.3l.4 4.7l-.5 5.4l1.7 5.9l-3.7 8l.2 3.7l2.3 4.1l.5 5.7l-1 6.2l-.1 6.3M818.3 234.1l-.2 9.5l-.3 9.4M819 260.6l1.5 5.4l-1 8.8l0 7.1l2.8 7.8l.6 7.7l0 7.7l-1.5 7.9l-1.2 8l2.5 4.9l-2.4 7.1l.9 10.5l.6 5.7l-.4 9.2l-.3 6.3M822.3 372.1l-1.5 7.7l2.5 8.3l-2.8 7.9l-.9 8.1l2.8 5.5l-2.1 8.2l2.9 9.7l-.4 4.2l-2.6 9.7l2.1 8.3M822.9 454.5l-1.4 8.8l.9 8.8l-.5 6.9l1.2 7.4l.1 6l.9 3.7M823.5 504.5l-1.1 4.7l-2.2 7.9l2.9 4l.4 9.6l-.5 5.5l-.3 7.4l-.2 5.7l1.9 5.7l.1 7l.5 4.2l.5 7.7l.8 3.3l-2.2 7.3M826.4 588.6l-.3 5l-1.9 5.4M826.2 604.3l-2.1 6.9l3.4 7.8l-2.4 3.3l-.9 7.6l.5 4.9l.4 3.1l1.9 6.7l.2 7.8l-2.5 3.4l.4 5.5l1.6 6.9M824.7 675.2l1.4 3.8l-1 6.9l0 4.2l.6 5.2l-1.5 5.9l1.6 6.6l-.6 6.3l-.4 3.6l2.7 5.3l-3.7 6.1l2 6.4l-1.4 3.4l2.1 8.3l-1 3.4l2.1 7.4l-.9 3l-.9 6.7l1.7 7.6l-1.4 3.3l-1.6 8.4l2.4 2.7l.6 8.6l-2.7 4.7l1.3 5.6l1.1 5.7l-1.7 5.8l-1.6 6.1l0 1.9l2.9 7.3l-.7 6.2l-.1 5.6l.8 5.3l-2.8 3.6l-.2 8.9l2.8 3.4l-2.3 5.4l.9 8.6l1.6 2.6l-.5 4.6l1.1 6.1l-1.8 6M829.7 234.2l.4 9.8l-.6 6.8l-1.3 7l.4 8.2l2.8 9.5l-1.5 6.2l.8 6l.5 8l-1.8 7.2l3.3 8.5l-2.3 10.2l-.9 6.3l3.3 8.6l-.3 6.2l-1.8 6.1l-1.9 9.5l2.5 5.4l-.8 10.8l-.5 6.6l-1.3 5.8l1.2 8.9l1.8 6l.1 7.3l.3 10.8l-2.9 6.5l2.7 7.6l-.4 8.3l.3 6.5l-.7 8.5l-.1 6.1l-.4 6.4l1.8 9.1l-2.2 7l-.1 6.4l.5 3.1l-.3 6.7l-.4 8.8l.8 5.9l-1 7.8l-.1 5.6l1 3.6l.9 7.6l1.8 8l-.2 3.7l-.1 8.7l-2 3.4l2.6 8.8l1.5 5l-.7 6.3l-2.8 3.1l3.7 5.2l-1.5 6.2l-.6 4.8l-.1 5.9l2.6 5.8l-.7 5.9l-2.2 5.7l2.2 5.8l-3 5.9l3.1 4l-2.1 6.8l2.9 4.7l-.8 7.1l-2.6 5.5l-.5 6.9l3.6 2.7l-.1 8.9l-.9 5l-.6 4.2l-.7 5.9l.2 6.3l2 4.6M835.2 716.7l-1.4 7.2l.3 5.9l-1.9 3.9l2.8 6.9l-3.3 3.6l.6 9.1l2.8 1.9l-1.5 9.2l.2 5.4l-1.2 2.7l1.7 8.9l-2.2 5l2 5.8l-.5 4.6l-1.3 6.4l1.9 3l-.9 6.3l0 5.4l-1.3 6.9l2.7 4.9l.4 6.2l-3 3.7l1.2 6.6l1.4 6.4l-1.5 7.2l1.5 4.2l-3.4 3.7l1 7.8l.6 4.5l-.2 6.1l-.8 5.5l-.3 6l2.7 7M837.1 237.8l1.5 3.9l.7 9.1l.8 5.9l0 9.5l.5 9.1l-.3 5.9l1 8.5l-2.4 5.5l1 10.4l1.4 7.1l-1.4 4.9l.9 8.3l1 7.2l-.9 10.2l.6 7.3l-2.9 7.5l2.8 7.1l-2.2 6.9l2.1 6.8l-1.2 9.5l1.5 6.1l-2.7 9.5l-.2 8.1l3.2 5.4l-.5 9.8l-3.2 5.6l2.2 9l1.5 8.5l-1.6 7.3l.7 5.5l.2 8.4M839.5 476.2l.1 7.9l1.9 7.1l-2.4 7.9l2.7 2.4l-3.4 7.8M838.3 516.7l1.6 7.9M839.5 529.1l-1.1 6.1l.4 5.1l2.4 9.9l-1 3.1l.6 7.6M841.2 565.9l1.6 5.3l-1.8 7.8l.1 6l-1.4 2.3l3.6 9.2l-.3 3.7l-.1 5l-.7 6.5l1.5 5.1l-1.7 4.8M842.3 632.3l-.2 8.3l1.3 4.8M839.8 652.3l1.5 4.9l1.6 3.1l-2.8 8.2l2.5 3.8l.2 8l.3 2.3l-2.4 8.8l2.2 5.2l-2 4.4l-1.4 5.8l3.5 7.5l-2.9 3.2l.5 7.7l1 2.3l.4 7.7l.3 5l-1.8 5l-.4 6l1.1 6.1l1.8 6.3l-3.1 4.7l.9 6.3l1.6 4.7l.4 6l-1.5 6.9l.9 4.7l-.7 6l-1.2 5.3l.4 3l-.1 9.3l-1.4 3.3l3.5 4.3l-3 5.6l2.4 7.8l.9 6.7l-1.2 3.6l-1.1 5.1l-.9 8l1.9 6.2l-.7 5.5l-.4 5.4l-1.6 3.9l2.7 6.8l-1.9 5.9M846.1 242.5l1.3 7l1.2 11.1l.6 4.3l.8 9.4l-1.3 5.6l0 8.5l.6 7.3l.2 8.7l-1.3 8.4l-.4 6.1M848.8 325.1l1.1 11.2l-2.1 5.4l3.3 10.1l-1 4.1l-.3 10.5l-.7 5.1l1.9 9l-1.7 9.3l-1.1 5.4l2 9l1 6.1l-2.7 9.4l1.6 7.8l-1.1 7.2l1 6.8l-.6 8.7l-.6 7.9l1.6 6.5l-1.6 8.2l-1.2 6.5l.8 5.4l1.5 5.7l-1.4 8.6l2 3.8l-1.6 9l-.7 6.2l.2 2.6l-2 7.3l2.4 6.4l1.8 8.6M849.9 548.7l-1.3 4.4l1.1 8.3l.1 6.4l.3 4.2l.6 6l-2.4 6.8M851.6 595.6l-.6 5.3l-1.6 5.3l-1.4 4.5l2.5 5l.4 7.1l-2.5 5.1M849.6 633.3l2.1 4.7l-.2 6.3l-3.8 5.2l3 5l-.1 6.6l-.9 7.9l-1.9 3.2l2.7 7.4l-.8 6.4l-2.1 5.4l3.2 4.7l-2.1 5.6M849.9 705.8l-.6 5.5l.5 6.6l-1 5.4l.8 4.2l-1.4 5.7l-.6 5.4l1.6 8.7l.1 4.6l-.5 6.1l.8 3.9l-1.1 6l0 7.6l-1.1 3.8l.3 5.9l-.8 5.9l3.4 4.9l-1.1 6.6M849.4 805.5l1 8.1l-2.8 5l1.9 3.8l-1 6.5l-.2 5.8l1 7.1l-2.6 3.4l1.5 5.7M850.5 857.6l-.1 6.1l-1.4 5.8l-1.6 6.2l1.3 2.5l.5 9.2l-1 3.3l2.1 7.5M856 235.7l-1 7M856.8 250.2l.2 7.5l1.1 6.8l-.4 9.1l.7 9l-.5 5.7l1.8 9.7l-.9 7.7l-.7 6.2l1.6 7.3l-.1 7.7l-1.1 7.6l-.4 5.9l.9 9M859.3 357.6l-2 8.2l0 8.2l-.1 6.5l1.2 8.5l0 6.2l.1 6.3l.4 7.4l.7 9.6l-2.5 5.9l1.9 9.8l-.6 7.3l-.7 6.5l2.4 7.3l-1.2 9.5l.9 6.1l-.1 4.8l-1.8 6.9l.7 9.5M856.3 496.4l2.5 8.2l-1 5.7l-2.2 7.6l-.6 3.7l1.3 6.5l2 8.6l-.6 4.3l-2 8.3l.9 6.5l-.4 7M857.3 565.5l1.6 8l-.4 5.1l.7 5.7l-1.3 4.4M859.2 592.7l0 5.9l-.2 5.6l-1.9 7.5l.9 4.6l.6 6.5l.4 4l-1 6.9l1.2 6.3l-3.2 6.1l-.2 5.8l-.2 2.6l2.5 6.8l-2.5 7.5l3.4 3.3l-3.5 6.4l3.3 6.5l-1.5 4.3l-1.9 6.3l.7 3.9l-.5 6.6l-.5 5.9l.3 3.7l-.8 7.3l.1 4M855.8 735l-1 3.5l.2 5.6l.3 5.8M857.4 758.7l-1.2 3.4l1.9 6.8l-.1 4.6l-1.5 6.7l1.2 3.8l-3 6.8l.9 4.9l-.3 6l-.9 6.8l1.9 6M856 816.5l1.3 8.4l-.9 5.1l1.8 4.9l-1.4 7.2M856.1 845.5l-.8 6.8l2.2 3.6l.3 5.5l-2.9 8.2l1.2 2.8l.6 7.9M857.9 886l-1.3 3.4l-1.8 6.5l3 8.2M867.6 235.5l-1.8 9.5M866.2 250.3l2.5 7M866.1 266.4l2.4 5.3l-1.7 7.4l3.1 7.8l-2.8 9l1.9 7l-.9 9.3l1.4 8.5l-.1 7.6l.1 7.6l-2.4 4.7l2.6 9l-3.1 8l1.7 5.7l-.4 9.5l.8 7l.6 6l-3.5 7.8l2.8 9.9l-.8 5.2l1.1 11l-.5 6.7l-.7 6.9l.2 6.2l.7 7.4l-1.5 7.8l-.3 7.2l1 9.3l-1.4 6.7l.9 4.4l.8 8.1l-.8 8.1l-.5 4.3M867.5 516.9l-2.9 7.1l.4 5.2l1.2 5l-1 6l1.6 6l-2.1 9.5l.8 6.5l-.5 5.3l2.3 4.1l.3 7.2l-1.4 6.1l0 3.1l.2 4.3l-1.6 6.8l2.7 7.9l-.7 5.3l-2.7 6.1l1.4 2.6l-.6 6M866.4 634.2l-1.1 3.5l.7 6.7l-.3 6.8l1.1 3.4l-1.9 5.6l-.2 5.4l-.8 5.4l.8 8.1l-.3 6.6M864.9 689.2l-2.3 6.7l2.4 4.5l1.2 6.8l-2 5.6l0 4.4M865.7 721.1l-1.5 5.9l-1.1 8l.6 3.2l2.3 7.9l-2.5 3.8M862.5 755.3l1 7.7l1.2 4.4l-.4 8l.6 3.8l.9 4.2l-2.1 7.2l.3 3.9l.7 5l0 6.4l0 5.3l.5 8.7l-1.2 5.9l1.7 3.6l-1.5 7.1l-.3 4.1l-.1 5.3l-.8 4.5l2.1 8.2l-1.7 6.1l-1.6 5.5l2.4 2.1l-2.4 8.8l2.8 2.3l-2.5 9.6l1.2 4.6l-.9 4.6M874.8 235.4l.4 5.6l2.8 8.2l-1.2 9l-.9 7.1l3.4 6.6l-.6 9.8l-.2 8.4l-.3 4.6l-2.2 9.3l2.9 8.9l-.2 6.5l-1.5 6.4l.2 7.3l.2 7.7l-1.1 8.5l-1.3 7.2l1.8 8.2l.5 5.9M874.6 380.2l3.8 8.4l0 5.4l-1.8 8.3l.6 6.6l-1.1 6.8l-1.1 9.1l2.1 8.3l-1.7 7.3l3.3 9.1l-3.6 4.2l1.6 8.7M877 471.7l-1.2 3.7l-.9 7.9l2.3 4.8l-2.8 8l.6 4.9l-.7 8.6l.9 7.8l-.7 4.5l-.5 5.4l.1 5.6l-1.1 9l.5 7.2M873.1 561.5l2 3.2l-2.8 5.6l2 7.7l.8 2.8M873.9 587.4l.6 8.4l-2.3 3.8l.3 4.9l2.8 5.2l-.5 7.8l-.6 4.5l-1.9 4.8l1.2 5.8l-.6 6.6l-.8 6.8l1.2 4.5l1.4 5.4l-.6 6l.2 3.9l-1.1 5.7l-.3 8.4l-2.3 4.1l-.3 6.3l.3 6l1.1 5.5l-.2 3.1l-1.3 8.5l-.3 4.3l2.3 3.4l1.1 6.2l.2 4.7l-.6 9.2l.6 3.7l-1.9 6.8l.4 2.8l-.8 7.4l-.6 5.2M872.1 772.6l-2 6l.1 7.1l2.7 5.8l-.9 3.6l.8 4.3l-.3 8.5l-2.2 2.6l-.5 6.8M869.9 821.6l1.1 8.7l.1 4.4l1 6.4l-1.7 4.3l.2 7.9l1 3.9l1.1 5.2l-.2 5.9l-1.8 4.7l1.9 6.4l-2.2 4.1l.1 9.1l1.9 3.3l.5 5.5M886.7 236.7l.1 4.8l-3.2 9.7l.5 6.2l4.2 9.9l-2.2 4.3l.3 7.2l1.3 9.8l.2 7.1M887.4 302l-2.8 7.1l3.4 10.3l-2.7 7.3l1.7 8l-1.6 8.4l-1 6.9l3.1 7.3l0 6.3l-2.4 6.4l1 9.6l1.3 6.2l-.8 10.4l-2.3 4.3l.2 10.3l2.4 5M886.9 426.1l-2.1 5.9l2.1 7l.3 8.6l-2.8 7.2l.8 6.9l-1.2 7l2 8.8l-.2 6.9M884.1 487.8l-.1 7.6l1.6 9.1l-4.3 3.6l2.9 6.5l-1.4 8.6l-.9 5.4l.1 5.2l-1.7 7.1M883.8 545.9l-1.4 8.3l.3 5.1l-2.1 5.2l2.5 8M881.1 576l2 5.4l-3 8.5l-.4 5.6l1 4.2l-.8 5.4l1.3 4.2l-.3 8.5l2.1 1.9l-3.5 7.9l1.2 4.1l1 4.8l-.6 7.7l.5 4.4l-2 5.6l-.7 5.6l.3 5.3M880.3 670.9l.5 7.6l-2.3 6.2l2.5 4.1l-.6 6.7l.8 2.6l-.6 8.2l.5 3.4l-3.3 7.8l1.4 5.9l-.1 3.8l-1.5 7.3l2.1 6.7l-1 1.8M877.9 750.8l-.9 4.5l.3 7.9l3.4 2.7l-.7 6.1l-.2 7.3l-2.4 4.6l2.6 4.8M878.5 795.3l-1.2 5.6l.8 6.2l1.2 5.2l-1.7 5.5l2.2 6.1l-2.1 5.7l2.6 4.9l.4 3.7l-3.5 5.6l2.1 6.4M880.7 856.2l-2.9 6l2.7 6l-3 3.9l2.3 8.5l-2.3 3l.6 7.8l.5 4.4l-1.7 7.2M896.2 236.3l-3 5.3l.6 6.6l2 7.5l-1.6 7.9l3.5 10.3l-3.4 7l1.2 6.1l-1.9 9.9l1.1 7l-1.1 8.3l0 5.3l3.4 6.7M894.2 333.3l.8 9.6l.5 4.1l-2.2 11.2l.3 5.4l2.9 7.3l-1.3 8.4l-2.5 8.1l2.6 6.3l-2.7 7l1.8 10l-1 6.6l2.3 6.9l-2.9 9l2.5 7.6l-1.4 5.4l.6 7.1l-1.7 9.7l1.7 5.6l-2 7.9l1 6.4l0 7.1l-2.6 5.3l-.5 8.8l-.3 5l2.5 6.7M890.2 521.5l1.6 7.3M890.6 534.7l-.3 4l-.4 9.6l-1.2 4.1l2 5.9M889.2 565.7l0 4.7l1 5.1l-1.3 6.9l1.6 6.5l.8 5.8l-1.4 4.8M889.8 608.2l-.5 6.8l-.3 5.2l.2 6.7l-2.2 5.5l3.2 4.8l-3.9 5.5l2.9 8.6M887.9 653.7l-.9 6.3M889.4 666l-.7 5.3l-2.3 4.2l-.9 8.9l3.2 3.3l-1.1 7.8M886.4 698.9l-.6 8.4l.9 1.7M885.2 716.7l-.5 6.4M884.6 729.5l3 2.2l-.6 8.7l-.3 5.9l-1.1 2.5l2.5 8.7l-3.6 5.6l2.4 2.3l-.8 7.8l-1 3.8l1.4 7.1l-.3 3.7l0 6.1l-1.4 7.4l1.3 3l-.5 7.5l1.6 6M887.3 823.8l-2.1 4.6l2.4 5.5l-3 5.6l.7 6.3l2.6 4.5l-3.6 5.4l1.3 7.2l.6 2.9l1.2 8.7l-.7 4.4l-1.5 3.9l1.9 7.1l-2.3 3.9l1.9 8.3M902.4 234.1l-.4 7l1.5 9.9l-.5 7.7l1.4 7.6l-.8 7.6M903.8 281.2l1.8 7.5l-1 7.1l-.2 6.1l.6 8.9l-1.9 5.5l.6 10.3l1 5.4l-.4 8.8l.8 8.4l-.2 6.3M902.5 362.4l1.1 9l-.9 7.4l-1.4 6.6l.1 9.5l3.1 7.4l0 5.1l-.7 10.2l-.6 6l.7 7.9l0 9.9l-1 6.8l-.1 7.9l.8 5.6l.2 6.7l-2.4 8.4l-.6 5.9l.7 4.9l.3 7.7l-2.3 4.7l.3 7.7l-2.1 8.5l.8 6l1 5.5l-.9 4.5l-1.2 9l2.6 4.5l-2 5.3l.9 9.6l-2.4 5.3l2.4 5.5l-.3 3.1l-.1 9M898.7 587.2l-.6 5.2l-2.8 6l-.4 6.1l.2 6.3l2.4 6.2l-1.9 4l-.7 4.7l-.1 6.9l2 7l-.3 1.8M894.1 647.9l0 4.8l2.9 9l-2.1 4l1.1 4.4l-3.1 7.7l3.3 3.1l-3 7.4l-.6 6.4l3.6 6.1l-2.3 2.8l1 5.4l.7 5.3l-3.3 6.7l.7 6.8M893 734.3l1.8 3.9l-1.4 6.8l1.2 5.7l-2.8 5.8l2 3.7l-.1 4.9l-1.1 8.1l.4 4l.5 6.9l1.4 5.6l.3 3l-1.5 7.5l1 4.2l-2 6.1l2.6 7.2l-2.1 6.6l1.4 3.6l-.9 4.6l.1 6.9l-2.4 3.6M891.6 848.9l-.2 5.7l2.6 5.5l1.3 7.5l-3.1 3.7l2.8 8.9l-1.1 2.1l1.2 6.3l-2.1 5.9l-.1 6.1M912.4 233.5l.9 7.1l-2 10.3l2.5 4.2M912.4 264.5l2.7 8.1l.3 5.2l-3.8 9.4l3.2 9.1l-1.8 5.7l-.4 7.2l2 8.3l-3.3 8.3l.9 7.1l1.6 6.2l-.3 6.9l-2.4 10.3l2.9 5.6M910.6 371.5l.4 5.8l2.8 7.4l0 8.5l-2.2 7.6l-.4 6.3l1.3 11.1l.8 6.5l-3.4 7.6l2.4 5.1M910.4 445.5l2.5 9.4l-.4 7.5l-.4 8.8l-.2 4.9M910 482.2l-2 7.6l1.6 4l1 6.4l-2.5 8.4l-1.8 3.6l2.2 10.1l-1.5 5.7l-.3 4.7l1.4 6.1l-2.5 7.5l1.1 7.5l-.5 6.5M903.8 565.2l2.7 6.6M904.8 576l-1.6 5.1l.6 4.6M906.1 590.6l-1 8.9l.6 3.2l-.8 8.5l.6 4.6l-1.7 3.2l-.5 7.4l2 4.3l-1.2 8l.3 4.3l-3.3 6.9l1.9 5.1l-.9 6l.6 5.4l.3 4.9l-.7 7.1l.1 3.5l.7 7.5l-1 4.5l-.7 5.2l.9 6l-1.7 4.3l.9 5.5l-1.3 6.4l2.4 6.6l-2.8 4.1l2.6 6.6M899.9 745.4l-.5 2l-.1 9.1l3.5 5.6l-.1 5l-1.5 3.2l-1.2 7.8l.8 4.1l-.5 7.6l1.1 3l.4 8.4l-.6 2.6l.9 8.9l-2.7 2.3M900.2 823.6l-.7 3.2l2 8l-1.6 4.8l-.1 6.2l.6 3.6M900.2 857.4l1.9 4.7l-.7 3.1l.1 5.3l-2.8 7.2l2 7.2l-1.3 3.4l.3 8l.3 4.6M920.9 234.2l1.8 5.3l.2 10.7l-1.9 5.8l2.3 9l-.2 5.8l.5 9.9l-3 5.9l.7 5.8l2.6 10.2l-1.8 8.7l-1.8 7.2l.1 6.4l.4 8.9l1.9 5.7l-.8 6.5l-3 9l2.8 6.5l.6 10.4l-1.6 4.3l-2 10.4l2.2 5.5l1 10.2l-2.6 7l2 7.5l-2.4 7.5l2.5 6.1l-.9 8.9l-.6 6.2l-.7 9.9l-1 4.2l1.1 7.6M918 474.7l.4 6l-.2 7.4l-1.5 6.5l-.6 7.4M917.9 507.5l-2.6 6.1l-1.2 5.6l-.1 8.6l0 4.4l-.7 6.8l1.8 4.9l-2.4 8.3l-.2 6.3l.8 7l1.6 3.9l-1.5 5.2l-2.3 6.8l2.2 6.3l-.5 4.9l-.9 3.6l.6 7.9M909.9 607.6l3 8.2l-.3 3.7l-.6 7.4M911.3 638.7l-1.7 2.9l1.4 5.3l.1 7.9l-.7 2.9M909.1 665l.1 6.6l1.7 3.2l-3.8 7.5l-.2 4.6l.8 5.2l.1 6.6l-1.1 5.1l2.5 5.3l-1.1 4.2l1 8l-2.4 4.6l3.2 5.8l-1.5 5.7l-1.8 4.9l2.9 6.8l-3.2 5.4l-.2 6.3l-.1 6l2.5 2.5l-1.1 7.4l-.9 5.1M908.5 788l-.4 4.5l1.7 6.7l-.2 5.7l-3.1 6.6l.5 4.3l-.1 7.1l-.4 2.5l2.1 6.7l-2.6 7.6l-.3 4l.7 4.5l1.4 6.5l0 7.4l1.8 2.6l-2 8.8l-1.4 4.1l1 6l1.9 5.6l-3.3 6M930.1 232l1.6 7.3l-2 7.2l.5 9.4l1.8 6.8l-1.4 8.2l.7 8.1l-2.4 7.5l3 9l-2.8 5.4l2.5 8.6l-2.1 6.1l2.4 6.8l-2.9 9.3l-1.1 8l-.4 8.1l0 8.4M930.5 362.8l-3.1 5.8l2.8 10.7l.5 4.7l-2.9 9.9l-.4 4.9M927.5 406.9l2 7l-1.1 10.7l1.8 5.4l-3.1 7.1l2.2 10l-1.8 6.1l.2 8.3M928.1 466.6l.2 9.2l-2.3 5l1 5.5l-2.7 7l1.8 6.5M924.6 506l.8 6.6l-.5 7.1l-.5 7.6l-.7 4.3l-1.6 7l-2 8l1.2 6.5l-1.6 6.5l-.8 2.5l.5 8l0 5.2l-.8 5.5l3 4.5l-2.2 6.6l1.7 5.1l-3.4 7.7l1.5 2.5l-1.7 5.3M920.1 618.1l-1.3 5.2l-.9 5.5l-.3 8.6l-.1 5.9l1.2 2.4l-1.3 5.7l0 7.7l-1.5 4.1l-.9 8l1.7 3.1l.7 5.7l-2.9 8.5l.3 5.4l.6 2.1l1.8 7.5l-.9 5.9l-2.9 6.6l1.7 2.5l1.7 6.8l-.1 6.2l-2.4 4.2l1.2 7.6l-.2 5.2l1.4 3.5l-2.1 7.4l.6 5.7l-.2 5.4l-.1 6.2l-.9 5.4l1.8 5.7l-.9 3.6l-2 8.2l2.7 4.7l1 6.1l-2.4 4l-.1 7.5l-.3 4.6l-.8 6.7l3.3 4.3l-3.3 6.3l1.8 4l1.5 7.1l.2 3.3l-2.2 6.3l-.2 6.2M916 875l-2.4 8l.9 3.1l-1.8 7.2l2.5 4.3M938.2 231.1l1.2 8.7M939.8 248.3l.3 8l-1.6 5.7l2.5 9.7l-1.2 6.5l.2 8.9l-2.6 5.2l2 6.7l-1.5 11.3l1.4 4.5l-.2 9.2l.3 5.4l-3 9.8l2.2 8.4l-1.7 4.9l-.7 9.8l.8 7.2l-1.2 7.9l.7 5.2l-.8 9.9l1.2 8.2l-1.5 7.5M938.1 413.8l-1.9 7.4l2.3 8.7l0 9.6l-3.1 4l.8 10.4l1 4.6l-1.1 10.9l-1.6 6.6l-1.6 3.1M934.8 487.1l.5 8.1l-4 5.7l2.3 3.5l-2.6 9.1l-1.6 4.8l-.1 5.4l0 7.2l.2 7.6l-2.3 7.5l3.1 4.8M930.4 557l-2.1 6l-.6 6l1.4 7.1l-1.1 3l.4 6.2l-2.9 7l3 2.3l-1.9 9.2l1.1 2.4l-3.5 8.3l.7 3.2l-1.3 8.2l1 5.8l.2 4.3l-1.4 7.3l2.8 2l-1.8 7.4l.4 5.7l0 6.5M922.2 667.7l1.3 5.5l-1.8 8.6l-.3 2.3l-.2 6.3l-.1 5.3l-.3 5.5l2.9 6l-1.9 5.3M923.6 719.5l-.8 5.5l-.5 5.9l-1.4 6l.9 4.3l-1.1 4.5l3 6.4l-.2 7.3l-.4 4.2l-.2 7.8l-.3 3.7l-1.7 7.6l-.3 3.9l-.6 5.6l3.6 5.4l.1 6.8l-.5 3.6l-3.3 7.1l2.5 3.3l-.2 6.7l-.4 8.1l-1.5 4.9l1.4 5.1l1.6 5.7l-3.7 3.3l1 7.8l2.8 4.9l-2.1 6.8l-1.7 3.4l2.9 4.9l.4 7l-2.3 5.7l0 5M948.6 233.8l-1.9 6.4l-.5 8.9l.9 5.3l-.3 7.1l1.7 7.8l-.9 7l.2 8.1l-1.7 9.3l-.9 7.6l2.5 6.6l.7 9.4l-.5 5.3l-2.3 6.9l1.1 9.7l-1.8 5.5M945 355.4l1.5 4.6l-2.6 9.9l1.1 8.3l.1 4.8l2.1 9.9l-.5 7.4l-1.1 5.1l-.8 8.9l1.1 9.2l-2.5 5.3l.1 7.3l2.8 9.1l-2.2 8.9l1.6 6.1l-1.6 6.5l-.7 9.1l.1 3.7l.3 7.9l-.7 5.4l-4 7.6l-.1 4.6M937.6 512.2l-.9 4.7l.2 9.8l2.3 4.6l-.4 7.1l-1.5 6.7l-3.1 7.3l-.3 3.6l3.4 7.1l-1 6.7l-1.4 3l.3 7.3l.2 3.7l-.6 6.5l-2.4 5.9M932.6 601.3l-.2 4.8l.7 6.2l-.7 7.6l-1.5 5.1l.8 4.4l-.2 4.4l.3 8.3l-2 2.5l-.8 6.9l0 6.8l0 6l.2 5.3l1.5 4.4l-2.6 4.4l1.1 8.4l-.1 5.7l1.8 4.2M927.5 701.6l.8 6l.3 6.4l1.9 3.1l-.6 8.2l-1.1 6.1l.7 3.4l-.6 7.3l-.7 6.4l-.1 3.2l-1 7.9l-.3 5.9l2.9 5.4M927.5 775.8l.8 3.3l-1.6 9l1.3 4l.8 3.6l-.3 5.7l1.4 6.5l-.9 5.2l-.3 6.6l1.4 4.2l-2.9 8.3l1.2 6l-1.1 2.9l2.1 6.3l-1.9 5.2l.9 7.8l-.3 5.2l2 6.2l-.6 4.1l-.5 5.8l-1.6 6.1l1.3 4.7l1.4 4.7M956.3 231l-2.2 9.9l1.5 5.1l-1.7 7.5l1.8 7.1M955 269l-1.2 6.3l1.5 9.4l1.8 6.3l0 10l-3.6 8.3l-.6 5.9l3.3 9.3l-1.7 7.5l.4 3.8l.6 7.8l-3.1 9.1l1.1 8l1.1 6.4l.5 9.1l-2.5 6.7M953.6 389.1l.4 10.2l-1.6 8.5l0 4.9l-1.1 6.5l1 11.2l0 5.2l0 7.4l1.7 6.7l-2.3 9.7M951.4 465.3l1 6.1l-1.3 9.5l.4 6.4M950.9 492.6l-2.8 6.9l.2 6.5l-3.1 4.7l.6 8.3l1.3 7.3l-1.8 4.8l-2.2 4.4l.1 6.2l1.1 8.9l.3 4.4l-3 8.5l1.7 2.4l-1 8.7l1.2 4.8l-1.8 5.1l-.5 6.3l-1.8 5l.9 4.7l1.6 7.4l-2.8 6.2l2.1 4.8l-3.9 3.1l2.9 7.9l-1.7 3.1l0 8.2l.1 2.8l-2 7.3l.2 6l.1 3.8l1.3 6.4l-.5 6.9l-.9 3.3l-2.2 7.2l3.5 4.2M936.9 697.4l0 4.6l-.4 5M933.7 714.1l3.5 5l-2.2 6.3l-1.1 3.3l1.1 6.9l1.8 6.1l-.9 6.5l-2.3 4.3M935.4 758.7l-1.4 4.8l.2 5l2.2 7.4l-.6 3.8l-1.4 6.1l-.7 4.7l2.5 7.8l-1.3 2.4l-.7 6.8l-1.1 7.3l.5 5l.7 4.1l-.7 7.9l1.2 2.4l1.6 8.5l-3.3 5.6l1.3 5.2l.8 2.8l-1.4 6.8l1.4 8.2l-.4 4.8l-.4 6.3l-.3 2.4l1.6 5.9l-2.5 5.7M962.9 229.5l2.4 7.6l-.3 10.1l.3 4.7l-2.4 8.5l.6 8.5l-1.7 6.3l.8 9.8l0 8l-1.2 6.1l-.2 9.5l-.6 7.5l0 5.3l1.1 9.8l-1.7 6.8l3.4 7.9l-1.5 5.6l.3 9.3l.2 5.2M959.6 375.2l3.4 8.4l-3.2 8.1l.4 5.2l1.9 6.6l-2 8.7l1 7.3l1.6 10.1l-1.9 6.5l-1.8 7.2l.4 7.3l-1.6 9.1l1.9 7.3l-1.5 3.6M958.4 478.8l-1.7 7.3l-1.6 5.6M954.5 497.8l1.9 7.5l-2.2 4.4l-1 6.9l-.4 5.5l-1.7 7.6l1.4 7.4l-2 7.4l.7 3l-2.6 7.7M949.3 561.4l.7 3.4l-.9 5.7l-.4 7.6l.7 3.8l-.2 7.1l-.5 5.8l-1.6 4.3l-1.6 5.6l.2 8.4l.6 5.4l1.2 5.2l-1 3.4l-2.3 5.2l1.9 7.2l-1.1 4.7l1 5.4l-1.6 8.3l-2.2 3M942.9 668.7l-.1 4.4l-1 6.3l-.6 5.5l-.5 6l1.5 4.2l1.7 4.2l-1.9 9M941.5 711.1l.3 6.7l-.6 4.7l2.1 6.4l-.8 5.3l-1 7.8l-1.4 4.8l1.4 4.2l-1.6 7.8l.6 4.5l2.2 3M942.3 773.1l1 7.5l-.6 3.2l-1.6 5l.1 7.4l1.2 5.2l.2 5.5l-2.4 5l1 6.3l1.8 7.5l-1 5.1M939.6 836.5l3.4 4.6l-1.2 6.2l-1.9 5.3l2.7 3.1M940.1 863.6l.6 6.5l.3 4l1.7 7.3l-.3 5.8l-1.5 4.6l1.8 4.4M971.7 231.3l1.7 7.7l-1.9 4.6l.3 8.2l1.6 7.6l-2.9 6.8l-.4 11.2l-.7 5.4l1.4 7l.9 7.3l-2.6 10.2M969.2 313.8l-.2 8.8l-.6 8.1l1.4 7.4l.7 4.7l-1 7l1.2 9.7l-3.5 9.2M967.5 375.5l.2 6.2l-.8 7.7l1.9 6.6l.9 7.3l-.4 9.8l-1.2 5.7l.4 7.7l-.8 7.4l2 7l-.7 9.6l-.4 5.7l-1.2 7.4M967.6 470.7l-1.1 7.7l-3.1 5.7l2.4 6.2l-1 5.5l-2.8 6.3l-1.2 9.4l-.4 5.5l.2 7.5l-1.5 6.6l.3 3.4l-1.3 5.7l-.2 10.2l-1.9 4l.5 5.1l-.9 6.6l-.5 5.6l-1.9 5.4l3.5 5.9l-3.1 7l1.1 2.8l-.9 5.7l-.8 6.7l1.1 6.9l-3.2 4.2l2 5.1l-1.6 7.3M951.2 631.2l1.8 6l-.7 5.1l-3.5 7.5l1.3 4.8l-.4 8.4l-1.3 5.5l.8 4l.4 3.6l1.4 8.9l-.7 3.9l-.2 6.7l-1.6 2.7l-1.2 5.6l2.5 7.3l-2 4.7l1.3 5.6M950 730.1l-2.4 5.1l.5 4.8l1.5 6.8l-.1 2.2l-1.3 5.7l-1.8 8.8l.1 3.9l.9 4.3l1.6 7l-1.7 5.7l.5 4.5l1.1 4.4l-1.1 9l.6 4.1l1.3 4.6l-.1 7.4l-3.8 5.1l2.1 4.2l-.5 6.3M948.3 839.5l0 7.1l-2.2 4l2.3 5l-1 6.4l1 5.9l-1.6 5.7l2.6 5.1l-3.2 6.1M948.3 888.9l-1.7 8.6M977.9 231.2l2 7.1l.6 6.1l0 6.7l-2.9 7.9l3.7 8.4l-3.8 8.2l-.3 7.9l1.2 4.8l-1.3 9.2l.7 9.1l.8 7.5l.5 7.6l-2.6 5.8l.1 6.7l1.1 7.5l-1.2 11.2l1.4 6.4l-2.2 6.3l-.5 8.5l1 6.7l-.6 7.7l2.1 8.6l-1.8 5.6l1.7 10.2l-.9 7.4l-1.4 5.9l-1.3 6.3l.7 7.8l1.9 8.2l-3.1 7.3l1.8 9.6l-3.4 5.9l-1.3 7.3l1.8 4.6l-2 5.4l-.2 9.8l-1.6 5.2l.1 6.1l-.2 7.3l-2 3.2l1 9.6l-3.3 5.8l2 7.2l-2.9 3.7l.6 9.5l-1 2.5l.6 8.8l-2.8 5.4M963 576.1l-.3 4.2l-3.7 8.4l1.8 5.9l-.7 2.9l-2.2 5.3l2.4 5.8l-.3 5.8l-1.3 5.6l-1.3 5.4l1.8 6M958.4 639.4l-2 5.7l1.4 3.2l-1.7 5.1l1 7.8l-.2 6.5l-1.8 2.7l2 7.4l-1.5 5.9l.1 5.2l-2.7 4.6l.5 5.6l1.4 6.2l-1.8 4l1.8 5.3M954.4 722.8l-1.1 5.7l-.1 5.1l.2 3.6l2.5 7.7l-2.3 5.1l2.5 5.2l-3.3 4l1.5 5.6l-1.2 7.4l2 4.8l-1.1 7.8l1.5 3.7M955.5 795.5l-1.8 5l1.9 6.3l-.9 3.5l-.1 4.7l1 9l-2.3 2.9l-.5 5.9l1.8 6.7l-1.1 6l-1.3 3.9l3.3 5.4l-.1 8.5M954.2 866.4l-2.3 8l3.7 5.8l-1.9 4.3l.6 3.1l-1.9 8.2M985.7 229.6l2.2 6.9l.5 7.8l-1.7 6.4l-.9 8.6l.7 8l.5 5.9l.4 10.7l-.4 5.1l-3 6.5l1 8.3M984.8 310.7l1.4 9.5l-2.6 8.8l-1.2 4.2l.9 10.7l.5 7.3l1.1 5.1l0 8.1l-.6 10.2l-2.4 7l3.1 7.1l-2.9 8.9l2.2 6.8l-3 7.1l2.4 8.4l-.2 7.9l.1 6.9l-.4 4.8l.9 7.9l-3.7 10.6l.5 6.8l.9 6.2l-2.5 5.8l-.7 6.6l-1.1 4.5l-.1 8l-.1 8.3l-3.1 5.5l.8 4.9l-2.5 6.8M971.3 528l-.6 5.5l.4 8.1l-1 6M969.2 554.4l1.8 3.5l-1.6 6.4l-1.2 6.1l.1 3.4l.5 8.8M965.5 586.6l.5 7.4l1.4 4.2l-2.7 3.6l1 6.4l-.6 6.7l-2.1 4.3M966.2 624.3l-4 7.4l3.1 5.8l-1 3.4l-1.1 5.6l.7 8.5l-3.3 3.4l.2 6l.6 5l-.4 7.9l1.3 5.4l-.4 6.2l.9 2.2M960.7 699.9l.1 5.2l.6 4.9l-2.4 5.8M959.4 720.3l-.7 6.8l1.5 3.9l-.9 8.2l2.8 3.3l-2.2 6l-1.2 7.5l-.6 5.4l3.4 5.5l-2.4 5.4l2.9 5.5M961.1 782l-2.9 7.7l.5 2.8l1.1 6.4l-.2 7.2l-1 3.8l-.1 4.3M958.8 822.4l2.9 4.3l-1.3 6.4l-2.6 4.7M958 845l3.6 6.2l0 2.1l-1.3 7.8l.3 6l.3 6.6l-2.8 3.2l1.6 6.2l.8 6.6M993.2 229l.2 7.2M995.6 249.4l-1 7.5l.5 10.5l-1.9 6.3l.4 9.4l-1.3 6.7l.9 6l.1 7.5M991.2 309.6l2.1 8.7l-2.9 6.6l-.4 10.5M990.7 341.3l-.5 9.1l.5 6.7l1.3 8.4l-.2 8.1l0 7.4l-.4 4.8l-1.9 7.8l-.6 10.6l1.1 6.7l-1.5 5.7l.1 7.8l.1 8l.3 7.1l1.9 8.9l-1.2 6.1l-2.8 9.9l1.5 5.8l-1.4 6.4l.4 4.4l-.8 7.7l-1 7.3M982.4 502.4l-.3 6.3l-2.7 5.5l-.8 5.2l-.9 8.8l1.6 5.1l-1.7 7.8l.1 4.9l-1.7 7.1l-2.1 5.6l.3 6.6l-.8 3.5l.8 7.7l-1 3.6l1.3 6l-3.1 5.3l2.9 5.7l-1.3 4.9l-2.2 5.3l-1.4 6.5l0 5.8M969.9 626.8l-1.1 3.5l1.2 6l-.5 4.1l-1 8.4l-.6 4.7l.9 4.4l-1.6 7.4l1.7 3.2l-3.2 8.3l.9 5.2l.3 6.3l-2 4.8l1.6 5.9l-.2 4l-.2 6.9l2 6.6l-1.7 4.1l-1 5.1l.8 7.5l.2 2.7M966.2 744.3l.1 3.9l-2.1 6.4l.7 2.6l2.7 9.5l-.5 2.7l-2.9 7.4M965.2 781.5l-.3 5.2l1.1 6.6l.2 5.3l-2.3 7l2.1 4.2l-1.3 6.6l1.7 5.8l.4 3.3l-.9 5.4l1.3 8.2l-.4 5.7l.6 3.3l-3.7 6.2l.1 5.7l2.4 5.4l0 5.6l-1.8 4l.3 5.8l.5 7.4l-.1 4.4M1003.3 227l-3.4 9.3M1002.9 242.2l-1.3 8.4l-.8 5.3l1.2 9M1001 273.5l-.8 7.3l-.6 9.2l1 5.8l-2.4 7.9l-.6 8.1l-.6 7.5l-.6 6.8l2 8.9l.9 5.9l-2.5 8.3l2.1 8.8l-2.3 6.6l1.6 6.9l.4 8l-1.4 8.8l-1.1 6.4l1.5 7.8l-2.8 8.3l3.3 5l-.2 8.7l.6 9.2l-.2 7.6l-2 6.1l-2.9 5.7l1.3 8.9l-.9 6.6l.8 7l-1 4.6l-3.3 7l.8 8.3l-3 4.6l1.3 6.4l-.6 8.6l-1.2 6.2l-4.1 3.9l-.7 8.7l-.5 6.6l.5 4.4l-.6 8.3l.4 3.1l-2.9 7l-.6 5.7l1 3.4l1 6.4l-.4 7.5l-3.4 4.7l2.5 7.3l-1 3.1l-1.1 7.8l.3 4.2l.6 5.5l-4 3.9l3 8.7l-3.2 4.4l1.6 7l-2.8 2.1l.4 9.1l1.3 1.8l-2.6 5.6l3 8.6l-.4 3.7l-2.2 4.8l1.1 7.3l.3 4.8l-2.1 4.8M971.4 701.2l0 5.5l.4 8.1l-1.3 3l.6 5.7l-.9 7.1l.7 6.6l2.4 4.3l-3.2 5.4l.1 3.9l.6 9.1l0 4.6l2.3 3.8l-3.5 6.1l2.9 6.8l-3.1 4.8l1 5l.1 7.8l.4 4.2l-.6 4.9l1.8 4.6l-.5 7.3l-1.2 7l0 3.9l.1 4.4l-1.2 5l1 9.5l.4 4.8l1.9 3.2l-.8 6.3l-1 5.2l-.5 4.5l1.7 6.4l-1.5 5.2l.5 5.6M1007.8 226l1.2 8.2l-.6 6.1l1 9l-3.7 9.1l.1 5.5l1 8.6l-1.4 8.4l-.2 6.4l2.5 6.6l-1.4 9.7l-.6 6.1l-.8 5.9l.5 8.9l.9 8.2l-1.3 8.1l1.1 7l-1.5 9.4l-.1 7.3l-1.4 6.9l-.5 6.7l1.7 7.4l-.1 6.6l-2.6 6.8l3.2 8l-3.1 8.2l2.5 9.4l-.8 5.5M1002.5 438.9l-.1 6.5l-2.3 7.3l-.4 8.3l.5 4.9l-2.5 8.9l2.6 4.7l-2.5 6.2l-.2 6.8l-4.2 7.4l2.8 6.8M991.9 513.6l.2 5.8l.2 5.3l-.4 5.2M988.4 537.3l-.5 6.3l1.5 7.9l-1.7 4.3l.8 7.1l-.6 2.7l-2.3 6.5l-1.3 7.3l.6 6.2l1.5 6l-2.3 4.6l-.9 4.7l-.9 5.9l-.9 7.4l.3 3.6l.8 7.2l.7 3.2M979.4 634.1l.7 6.8l1.4 5.1l-3.3 6l2.7 5.1l-1.9 4.5l1.1 6.3M977.8 673.6l-.9 7.4l.7 2.2l-1.2 5.5l2.8 6l-1.9 6.9l.7 4.4l-1.2 8.7l-.4 2.9l1.4 7.6l-.6 3.3l-.7 5.3l-.2 6.7l2.3 6l-3.1 6.4l2.3 6.4l-2.8 3l1.4 5.8l.8 6.1l1.4 6.7l-3.2 3.2l1.7 5.7l.3 4.7l1.1 6.2l-1.9 5l-1.7 8.5l3.3 5.7M977.2 824.8l1.3 4.4l-2.1 6.4l1.7 5.5l-2.2 5.8l1.6 6.1l-2.7 5.4l3 3.4l-1.2 8.4l-1.9 5.7l.6 5.1l.9 4l-1.2 7.7M1013.1 225.2l1.3 9l1.6 6.7l0 5.8l-2.9 9.2l.3 9l.2 4.6l1.4 8.2l-.4 9.6l-2.8 5.7M1012.5 303l-.1 6l.3 6.2l-.8 9.1l-2.3 6.3l2.7 10.5l-.5 5.2l-1.3 8.1l.8 7.7l-1.5 9l2.1 6.9l-.1 5.5l-3.5 7.6l2.9 7l-2.1 8.7l-1.5 10.2l.5 7.3l2.3 7l-2.3 6l1.3 7.2l-1.5 6.8l.3 10.1l-3.6 7.6l1.6 2.3l-1.1 8.9l-.5 5.2l-4 5.3l.1 7.8l-1.9 7.4l.1 4.4l1.1 6.3l-1.9 9.5l-1.8 2.9l.9 6.3l-4 9.2l2.5 4.7l-.7 6l-2.1 7.7l-2.5 2.4l1.8 7.5l.1 5.2l-3.4 6.9l3.1 3.2l-3.4 4.7l-1.4 8.9l0 3.2l.4 4.6l-.7 9.3M986.5 623.1l-1.1 5l.8 4l.9 7.9l-2.4 4.3l-.2 4.8l1.1 6.1l-.3 7.5l-2.4 3.2l2.3 7.8l-1 5.4l-2.2 4.1l2.5 6.4l.1 3.5l-2.3 6.3l-.4 5l.1 6.4l1.8 6.2l-1.3 5.9l-1.7 6l1.3 6.7l-1 3.9l2.1 4.8l-.6 4.9l-.6 5.8l.9 8.1l-2.5 4.2l.1 7.2l3.5 4.2M983 784.8l-1 3.9l-1.2 5.8l-.7 4.8l2.1 7.8l-.3 3.8l-2 5.9l3.8 8.1l-3.9 4.2l.1 5.7l2.1 4.3l1.6 7.5l-2 5.6l-.4 3.2l-1.2 8.7l2.6 1.9l.6 8.6l-2.5 5.6l.5 6.5l-.8 2.6M1020.4 224.8l.6 9.3l1.5 6.2l-1.5 9l-1.1 7.4l.3 6.7l.1 8.9l-2.2 7.4l1.4 6.3M1019.1 298.7l-1.7 9.1M1016.6 314.1l2.1 8.7l-1.1 6.7l-1.9 8.5l.5 6.4l1 9.4M1017.8 362.5l-2.9 7.9l2 7.9M1014.2 383.5l.9 7.6M1015.8 398.4l-.1 6.9l1.6 8.4l-2.1 6.6l-1.5 7.1l2.6 9l-1.5 9.7l-1.4 5.1l-1.1 10l-1.6 4l1.2 7.7l-3.6 6.2l.9 7.9l-.9 5.5l-1.5 5.8l-2.4 4.6l2.4 6.6M1002.6 522.1l-2.4 9.2l2.5 3.9l-1.4 9.1l-1.2 6.5l-.5 3.7l-.5 3.8l-2.3 8.6l-.1 4.5l-1.8 5.2l0 5.4l-.8 5.6l1.8 4.4l-3.3 6.9l.6 5.3l-1 7.6l1.5 2.2l-2.5 9.4M993.8 627.5l-2.8 3.6l-1.5 5.6l-.8 5.3l1.9 8.4M989.1 655.7l-1.5 6l0 5.6M988.3 672.9l1.7 3.5l-1.6 8l-1.8 3.5l.7 6.6l1.1 5.1l-.1 6.2l-1.1 5.3l.7 3.9l-.8 8.7l-.3 4.2l2.4 6.3l-.4 2.9l-3.4 8.3l3.3 5.2M988.7 754.4l-3 8.1l3 3.2l-2.3 4.4l1.1 6.6l.1 8.3l1 4.8l-3.2 6.5l.1 3.4l2.3 4l-.9 6.2l.4 8.2l-.6 3.7l1 4.8l-1 5.5M988.5 837.2l-2.5 7.5l.5 3.5l.2 7.7l-.3 3.5l.4 9l-1.5 5.9l1.5 5l-1.7 2.8l3 7.2M1025.5 238.8l-.7 6l.5 7.7l-1 7.9M1026.6 269.4l-.2 7.6l-2.5 7.1l0 8l-1.2 9l.5 5.7l.8 6.7l.3 9l-1.2 7.5l.9 8.3l-2.3 7.3l2.5 5.9l-.1 7.4l-.6 8.5l-.4 8.7l-2.8 7.9M1019.8 390l0 8.5l2.1 7l-1.4 8.4l-.8 7.8l-.3 7.6l.4 7.3l3.1 5.5l-2.2 10.5M1018.4 458.9l-.6 7.1l-.3 5l-2.3 7.4l-.4 5.3l-2.3 6.5l1.7 8.2l-4.6 6.5l2.6 5.4l-3.6 5.3l.4 6l-.6 7.2l-.4 5.1M1006.2 541.8l-.5 5l.3 6.7l-1.1 3.7l-.7 9.3l-.8 5.5l-1.5 4.5l.6 5l-3.6 5.1l1 4.8l-2.3 7.4l2.3 4.8l-1.4 7l.1 4.5l-1 6.7l-.6 4.4l.7 6.2l-.6 5.1l-.6 4.2l-2.3 7.8l-1.3 3.1l.9 8.1l-.5 3.6l-1.6 7.7l2.6 4.4l-2.6 5.7l2.4 3.7l-1.1 5.3l-2.1 6.9l3.2 4.8l-2.4 5.6l1.7 8.1l-2.4 5.8l1.2 5.8l1.6 3.4l-.6 5.9l-2.1 5.8l2.6 5.8M990.7 755.7l1.4 5.4l.8 5.1l-.4 5.1M993.7 777.5l-2.9 5.3l.4 6M992.2 795.1l.1 4.5l-1.3 3.9l1 8.2l1.6 2l-3.2 7.2l2 4.8l.4 6.2l-1.6 7.3l.4 3.1l-.4 7.1l1.8 3.9l-2.5 8.9M990.1 866l.1 5.5l3.1 7.5l-.6 1.7l-1.6 6.9M1033 222.3l1.1 6.4l-2.3 8.6l.9 8.2l-.2 9.2l1 5.5l-1.9 7.8l1.4 8.3l-4.2 5.6l.7 11.2l.6 7.6l-1 6.9l-.7 6.5l2.4 8.1l-4 5.1l3.2 7.4l-.9 10.3l-1.3 5.1l-1.3 10.8l-.2 7.1l-.6 6.9l-.4 6l2.5 7.5l-2.4 10.2l3.4 6l-.4 7.2l-1.4 6.2l.4 8l.8 10.6l-2.5 7l-1.1 8.2l-2.1 7.7l-.9 5.7l-.1 5.5l0 7.3l-.1 6.9l-3.4 3.5l-.9 8.7l-1.5 3.2l-1 8.7l.9 6.1l-.7 5.1l-3.9 6.5M1011.3 534.2l-.2 5.3M1008.7 548l.7 5.9l-2 5.9l.3 2.5l-.4 7l0 6.3l-.9 6.6l-2.1 3.4l-1.2 7.4l.9 3.6l-2.1 7.6l1.5 4.7l-1.2 5.8l-1.6 5.3l2.9 4.9l-2 5.3l.1 4.6l-2.4 7.2l1.8 5l-.9 5.4l-2.4 6.3l2.5 6l0 6.9l-2.3 4.2M996.8 680.1l.1 5l.1 8.7l-.1 3.8l1.4 4.5l.3 4.8l-1.1 8.5l-1.2 3l.1 7.5l-.4 5.1l1.4 6.8l-2 5.2l1.7 5l.5 4.2l-2.1 6.2l.7 6.2l-.8 4.6l.6 5.8l2 7l-2.9 6.3l2 5.8l.3 3.9l-2.9 5.9l3.5 4M995.8 813.3l2.4 5.1l-1.1 8.6l-2.1 3.4l.4 7l1.9 3.5l-1.7 6.7l-.5 5.6l.1 7.9l1.3 3.2l-1.6 6.8l1.1 3.7l-.9 7.5l.2 5.3M1040.3 220.6l-1.1 10.3l-.1 7l-.4 5.7l-2.4 7.1l1.9 7.6l-1.6 10.9l-1.8 5.2l2.9 8.8l-.6 6.4l-3 7.7l2.3 9.6l-.1 4.1l-.3 9.2l-.2 7.8l-1.2 7.5l-.5 6l-1.3 9.7l.9 6.7l-2.8 8.6l0 7.8l.5 6.9l1.7 7.5l-2.5 6.9l-.2 9.8l3.4 6.7l-.4 8.6l.3 6.9l-3 7.4l-.3 6.2l-.8 7l1.5 9.3l-2.3 3.8l-2.5 9.3l-.5 5.5l.4 6l-3 6.2l-.9 6.5l1.5 5.2l-1.6 6.7l-3.7 5.6l.6 8.2l-3.1 4.4l1.6 10.1l-1.7 4.5l-.1 5.4l-.5 6.1l-3.5 6l2.2 6.2l-2.2 4.9l1.2 3.7l-2.9 6.4l-.5 6.8l-.8 6.8l.4 3.9l-.4 4.3l-.3 9.2l.2 1.7l-3.9 7.8l.1 4.5l2 7.3l-1.5 6.2l1.3 3.1l-3.6 6.1l2 6.9l-.8 5.5l-1.3 2.9l1.1 5.7l-1.4 6.8l-.3 5.4l-1.3 5.2l2.4 6.6l.2 4.4l-2 6.7l-.3 4.8l.6 6.7l-.8 5.5l.6 4.8l-2.4 7.7l2.1 5.1l1.1 2.4l0 5.9l-2.5 5.3l.4 8.6l2.3 3.6l-3.4 7.7l-.3 5.7l3.8 3.9l-2.8 7.2l0 2.9l-.7 6.8l.6 7.5l1.1 3.4l1 4.7l-.2 8.5l-1.3 2.5l-.9 7.9l.5 3l-1 6.3l-.1 4.7l2.4 6.6l-.7 5.5l-1.5 7.1l-.5 3.3l1.6 6l.9 5l.5 8.7M1044.2 220.8l-.2 8.5l-.7 6.7l-.3 8.1l-.2 6.9l0 8.4l-1.3 7.3l-.4 7.9l.3 7.1l-1.1 7.5l-.2 7.9l-.3 7.7l.3 7.4l-.6 6.8l-.4 7.9l.3 7.6l-.5 7.1l-.7 7.6l-.2 8.4l-.7 7.6l.4 7.3l.5 7.2l-1.1 7.8l.3 7.8l-.3 7l.5 8l-.9 7.8l-.1 7.4l1 6.8l-1.3 8.5l-1.3 6.7l-.8 7.8l-1.1 7.2l-1.2 5.9l-.5 6.8l-.6 5.5l-2.1 6.7l-.6 6.7l-1.5 5.9l-1.4 6.1l-1.4 6.3l-.7 7.3l-1.1 5.7l-.4 6.2l-1 6.6l-1.7 6.8l-.9 5.6l.1 5.2l-1.1 5.4l-.4 6.4l-.6 4.8l-.8 5.9l-1.2 5.9l.3 4.7l-1.6 6.4l-.6 4.7l-.4 6.1l.4 5.8l-.7 5.2l-1.1 5.1l-.5 6.1l-.8 5.3l.6 5.4l-1 6.5l-.5 5.3l-.7 5.3l-.5 5.4l.2 6.4l-.7 4.5l.6 6.6l-.2 5.3l-.9 4.8l.1 6.6l.2 4.6l-.3 6.2l-.3 4.8l-.4 5.8l.4 5.9l-.3 5.2l-.1 6.2l.7 5.5l-.1 5.7l-.7 5.5l-.1 5.9l.8 4.5l-.1 5.9l-.6 5.4l.1 6.4l-.2 5.5l-.3 5.2l-.1 5.9l-.1 5.4l0 5.3l.4 6.1l-.1 5.7l-.3 4.8l.7 5.3l-.8 5.7l-.1 5.6l.1 6.4l.3 4.6l0 6l.3 5.5l-.5 5.6l-.1 5.8l-.2 5.5l.3 5.4M1049.2 219.6l-.3 7.6l-.5 8.2l-.6 6.9l0 8.4l-.3 7.6l-1 7.8l.4 7.2l-1.3 7.1l-.5 7.4l-.3 7.9l.2 7.2l-.9 8.3l-.3 7.3l.5 7.6l-.1 6.9l-.9 7.7l-.7 8.2l.8 7.4l-.2 7.7l-.4 7.2l-.5 7.5l-.5 8.1l1 7.3l-.1 7.5l-.6 7.6l-.5 7.6l0 7.1l.4 8.4l-.1 6.8l-1.1 7.4l-2.2 8.3l-.3 5.6l-1.2 6.6l-.7 7.2l-1 5.9l-1.5 6.4l-1.9 5.7l-1.2 6.4l-1.2 6.9l-1.4 6l0 6.5l-1.5 6.4l-1.7 6.7l-.8 6.7l-.6 5.5l-1.3 6.2l-.6 4.9l-.9 5.9l-.7 5.5l-.9 5.4l.2 5.8l-1.3 5.8l.3 5.6l-.9 4.7l-.1 6l-1.7 5.7l.2 6l-.7 5.7l-.4 4.7l-.8 6.5l-.4 4.9l0 6.3l-.8 4.5l-.5 5.8l-.6 5.9l.1 5.5l-.6 6.1l-.1 5.6l-.4 4.8l-.7 6.2l0 5.5l.5 5.4l-.6 5.7l-.1 5l.1 5.6l-.1 5.4l.1 6l-.2 5.1l-.7 6.3l.7 4.9l-.1 6l-.4 5l-.3 6.6l.3 5.1l-.4 6l.8 5.4l-.6 5.8l0 5.4l-.5 5.8l.4 4.9l.6 5.6l-.2 6.2l-.8 4.5l-.2 6l0 5.1l.8 5.5l.1 5.6l-.8 6.1l.2 6.1l-.4 4.9l.4 6.2l.1 4.7l-.1 5.7l0 5.3l.8 6.1l-.8 5.3M1053.2 219.5l-.3 7.3l-.3 7.5l-.4 7l.4 7.4l-1.2 7.6l-.1 8.3l-.3 7.5l-.5 8l-.1 6.5l-.5 7.8l-.2 7.3l-.5 8l-.7 8l.2 7.2l-.7 7.2l-.2 8.4l.5 7l-1.3 7.8l.1 7l.2 7.8l-.3 7.2l.4 8.5l-.2 7.1l.1 7.1l-.2 7.8l-.1 8.2l-1 7.4l.6 7.7l-.5 6.8l-.9 7.7l-1.4 7.6l-1.2 6l-1.7 7.3l-.6 6.3l-1.5 5.6l-1.3 6.6l-1.2 7l-.7 5.5l-1 6.5l-1.2 6.8l-1.3 5.8l-1.9 7.2l-.8 5.5l-.7 6.2l-1.1 7.5l-.9 5.4l-.3 5.2l-1.3 5.1l-.8 6l-.9 5.1l0 6.6l-1.3 5.3l-.6 5.3l-.6 6l.4 5.6l-1.7 5l.5 5.1l-1.4 6.4l-.2 5.8l-.7 5.6l-.4 4.6l-.9 5.8l-.4 6l-.3 4.8l.1 6.6l-.9 5l.4 5.2l-.7 6l-.5 5.7l-.4 5.7l.6 4.8l-.5 6.3l-.4 4.8l-.4 6.2l.8 5.4l0 5.2l-.3 6.5l.1 5l-.4 5.5l.3 5.3l0 6.2l-1.1 5.8l.8 5.1l0 5.3l.2 6.3l-.9 5l0 5.9l.2 4.8l-.4 6.3l-.2 5.4l.3 5.5l.7 6.1l-.6 4.7l-.4 6.5l.2 4.9l.1 6.1l-.5 4.9l1 6.4l-.3 4.7l.2 5.9l.1 5.8l.1 5.3l-.8 5.7l.8 5.3l-.3 6.1l-.5 4.6M1057.5 218.2l.9 7.1l-1.4 7.7l-.2 7.8l.1 7.6l-.4 7.5l-1 7.8l-.2 6.9l.2 8.4l-.4 6.4l-1.4 7.7l0 7.8l-.7 7.6l-.4 8.1l-.2 6.8l.3 7.5l-.4 8.4l-.8 6.6l-.1 8.1l0 8l.1 7l.2 7.7l-.9 7.2l.6 7.8l-.3 8.1l-.4 7.1l-.2 7.5l.6 6.9l-.8 8.6l-.4 7.4l-.9 6.8l-1.7 8.4l-.8 5.8l-.4 6.7l-2.2 6.1l-.9 6.2l-.9 6.4l-1.9 6.1l-.3 7.2l-1.3 6.5l-2 5.4l-.6 6.9l-2 5.7l-.4 6.9l-1.3 6.4l-1.3 6.2l-.4 6.3l-1.2 5.6l-.6 4.5l-.4 6.1l-1 6l-.4 4.7l-.5 6.5l-.8 4.7l-1 5.9l-.4 5.9l0 5.6l-.8 5.2l-.8 5.4l-.8 5.6l-.1 6.1l-.4 5.2l-.2 6.1l-.5 5.3l-1.4 5.8l0 5.1l-.5 5l.1 6.2l-.8 4.8l-.5 5.6l-.1 6.3l-.3 5.8l.5 5.6l-.4 4.9l.4 5.8l-.9 5.1l-.3 6.6l.4 5.1l0 5.9l-.4 4.5l.6 6.2l-.6 5.5l-.3 5.2l1 6.5l-1.1 4.5l0 6.1l-.2 5.6l.4 5.3l.5 5.7l-.8 5.9l.2 5.7l-.1 5.7l-.4 5.3l.5 4.9l.3 6.6l.1 5.1l-.7 5.7l0 5.8l.7 5.2l-.6 5.7l-.4 5.1l.2 5.6l-.2 5.8l.4 5.2l.2 6.1l-.1 4.9l.1 6.2M1062.5 217.2l-.5 6.6l0 8.1l-.7 7.5l-.6 7l-.7 7.7l.5 8.5l-1.1 7.1l.2 7.4l-.4 7.5l-.6 8l-.7 7.6l-.7 6.7l.4 8.6l-1.1 6.4l.3 8l-.3 7.2l0 7.5l-.6 8.6l-.5 7.2l.2 7.4l-.9 7.5l.2 7.7l-.1 7.7l.3 7l.2 7.3l-.6 8.4l-.2 6.8l-.2 7.4l.5 8.4l-1.7 7.9l-1.2 7.4l-.8 5.9l-1.3 6.3l-2 6.3l-.4 6.7l-1.7 5.8l-1.4 6.6l-1.6 6.3l-1 6.9l-.8 6.6l-.8 5.5l-1.5 6.5l-1.1 6.6l-1.3 6.6l-1 5.8l-1.3 5.2l-.8 6.6l-.8 4.8l-.1 6l-1 5.1l-.8 6l-.7 6l-.9 4.4l-.3 6.6l-1 5.2l0 6.1l-1.2 5.4l-.7 5.4l-.2 4.7l-.8 5.9l.3 5.4l-1.4 6.1l-.5 5l-.2 6.2l-.5 5.6l.3 5.1l-.2 6.4l-.9 5.2l.1 5.5l-.6 4.8l.3 6l-.2 5.4l-.1 5.9l-.2 5.3l-.6 6l.5 5.8l-.5 5.1l-.1 6.1l-.3 5l.3 5.4l-.3 5.2l0 5.9l.2 6l.4 5.9l-.1 5.3l-.6 5.1l.2 6.3l.2 4.6l0 6.2l-.1 5.6l-.3 5.4l.3 5.6l0 5.5l-.7 5.7l.1 5.4l-.2 5.5l-.3 5.4l1 5.5l-.8 5.9l.9 5.8l-.8 5.1l.4 5.9l.2 5.6l-.5 5.6l.5 5.6l-.9 4.8M1066.2 216l-.8 7.1l.1 7.3l-.6 8l-.4 6.8l.3 7.8l-1.3 7.3l-.6 8.6l-.5 7.5l0 6.9l-.2 7.4l-.3 8.4l-1.2 6.7l-.1 8l.1 7.8l-.3 7.1l-.1 7.4l0 7.4l-1.3 7.5l.7 7.4l-.7 8.1l.4 7.2l-.2 7.5l-.6 7.4l.4 7.5l-1 8.1l.9 7l-1 8.6l-.1 6.9l-.3 7.6l-.5 8l-1.7 7.6l-.6 5.9l-1.9 6.4l-1.1 6.4l-.8 6.2l-1.3 6.3l-1 6.3l-1.4 6.4l-2.2 6.6l-1 6.6l-.8 5.9l-1.8 7.1l-1.3 5.9l-1.3 6l-.4 6.5l-1.3 6.2l-.2 4.9l-1.2 6l-1 4.9l-.7 5.4l-.2 5.5l-1.1 5.7l-.5 6.3l0 4.8l-1.7 6l0 6l0 5.1l-1.6 5.6l-.4 5.5l-.2 6.2l-.8 5.6l.1 4.4l-1 6.3l0 5.1l-.4 5.2l-1.1 5.9l0 5.9l-.8 5.5l.8 5.5l-1 5.8l.3 5.1l-.3 6.3l-.1 5.3l0 5.1l-.3 5.3l-.2 6l-.7 5.5l.6 5.6l.4 6.2l-.1 4.6l-.5 6.1l-.5 6l0 5.5l.3 5.2l.3 5.5l-.9 5.2l-.1 5.4l.7 5.7l-.4 6.3l.6 5.2l-.9 5.5l.4 5.4l.3 5.9l-1 5.6l.7 5.6l.3 5.6l-.8 5.2l.8 5.1l-1 6l.3 5.8l.4 5.2l.2 5.4l-.4 6.3l-.4 4.9l.3 5.6l.6 6.1M589.7 470l7 30l5.6 30l9.4 30l6.4 30l4.5 30l3.5 30l3.1 30l-.3 30l.2 30l.9 30l.3 30l.2 30M594.2 470l5.8 30l5.8 30l9.5 30l5.8 30l5.1 30l3.4 30l1.4 30l1.9 30l-.9 30l1.2 30l.5 30l.4 30M597.6 470l6.2 30l6.1 30l9.3 30l5.7 30l4.4 30l3.4 30l2.9 30l.7 30l-.1 30l0 30l.8 30l.5 30M602.4 470l6.2 30l5.6 30l8.7 30l6 30l4.3 30l3.2 30l3.3 30l-.3 30l.3 30l-.3 30l.6 30l.4 30M605.9 470l7 30l6.5 30l7.1 30l6.3 30l4.2 30l4 30l1.6 30l.4 30l1.5 30l-.7 30l0 30l-.1 30M610.9 470l7.4 30l4.5 30l8.4 30l5.9 30l4.7 30l2.4 30l3 30l.9 30l.6 30l-.2 30l-.9 30l.9 30M615.7 470l7.4 30l4.7 30l8.3 30l5.4 30l4 30l3.5 30l2.8 30l.2 30l-.4 30l1.6 30l-.3 30l.3 30M621 470l7.6 30l4.6 30l8.2 30l5.2 30l3.8 30l2.9 30l2.6 30l.7 30l-.6 30l.3 30l.3 30l.5 30M627.3 470l6.8 30l3.9 30l7.3 30l5.8 30l4.4 30l3.5 30l1.4 30l1 30l-.4 30l1.3 30l-1.2 30l.7 30M634 470l4.6 30l5.6 30l7.5 30l5.6 30l2.9 30l4.1 30l1.5 30l.7 30l.2 30l.5 30l-.8 30l.1 30M639.4 470l5 30l5.9 30l6.1 30l6.6 30l2.6 30l3.1 30l2.3 30l-.2 30l1.5 30l-1.2 30l.7 30l.3 30M645 470l6.7 30l3.8 30l7.1 30l5.8 30l2.5 30l4.1 30l.9 30l1.4 30l-.7 30l1.1 30l-.6 30l0 30M651.6 470l6.5 30l3.5 30l6.9 30l5.7 30l3.9 30l2 30l2 30l.7 30l-1 30l1 30l.5 30l.2 30M658.6 470l5.9 30l3.5 30l7.4 30l5.3 30l2.4 30l3.5 30l1.6 30l.4 30l.4 30l-.3 30l-.3 30l.5 30M666.3 470l5 30l3.1 30l7.1 30l5.3 30l2.5 30l2 30l2.3 30l.3 30l.2 30l-.3 30l.8 30l.6 30M673.5 470l5 30l3 30l5.6 30l5.8 30l3.2 30l2.2 30l.8 30l.3 30l.1 30l.2 30l.9 30l.2 30M680 470l4.6 30l4.2 30l6.5 30l4.7 30l2.8 30l2 30l1.5 30l-.9 30l1.1 30l.2 30l-.5 30l.6 30M688.3 470l5 30l2.5 30l6 30l4.8 30l2.4 30l2 30l1.9 30l-.7 30l.6 30l.4 30l-.7 30l.3 30M695.9 470l4.2 30l4 30l4.2 30l4.1 30l3.2 30l1.5 30l2.5 30l.4 30l-1.3 30l1.5 30l-1.3 30l1.3 30M703.4 470l4 30l3.4 30l5.4 30l4.7 30l1.1 30l2.7 30l.8 30l.2 30l.7 30l-.4 30l.6 30l-.9 30M711.9 470l3.2 30l3.9 30l4 30l3.9 30l2.5 30l1.7 30l2.1 30l-1.2 30l.6 30l1 30l-1.3 30l.9 30M931 470l-1.4 30l-3.6 30l-1.4 30l-1 30l-1.4 30l-1.7 30l-.1 30l-.9 30l-.2 30l-.9 30l-.2 30l.3 30M939.5 470l-1.6 30l-3.1 30l-1.9 30l-2.3 30l-.7 30l-2.9 30l-.8 30l-.1 30l0 30l-.9 30l-.3 30l-.1 30M947.5 470l-2.6 30l-3.5 30l-1.4 30l-2.6 30l-.8 30l-2.6 30l-.8 30l-1.4 30l-.1 30l.5 30l-.3 30l-.5 30M955.7 470l-3.7 30l-3.3 30l-1.6 30l-3 30l-.6 30l-2.4 30l-.6 30l-1.6 30l-1 30l-.2 30l0 30l.1 30M963.2 470l-3 30l-3.2 30l-4.1 30l-2.1 30l-.6 30l-2.1 30l-2.4 30l-.5 30l.2 30l-.6 30l-.2 30l.4 30M970 470l-2.1 30l-4.1 30l-4.2 30l-.8 30l-2.6 30l-2.5 30l-.6 30l-.9 30l-1.4 30l.5 30l-.4 30l-.9 30M977.3 470l-2.9 30l-4.4 30l-2.8 30l-2.6 30l-1.8 30l-2.9 30l-1.6 30l-.1 30l-.1 30l-1.8 30l.7 30l.6 30M984.8 470l-3.2 30l-4.3 30l-3.7 30l-2.9 30l-1.8 30l-2.1 30l-2.6 30l-.7 30l-.5 30l-.1 30l.5 30l-1.4 30M990.6 470l-2.9 30l-5.2 30l-3 30l-2.2 30l-2.8 30l-2.8 30l-.6 30l-.9 30l-.8 30l-.2 30l-1.3 30l.7 30M997.2 470l-2.7 30l-5.4 30l-3.9 30l-2.5 30l-2.5 30l-2.6 30l-1.2 30l-1.1 30l-.4 30l-.6 30l.1 30l.2 30M1004 470l-4.5 30l-4.3 30l-3.1 30l-3.6 30l-2.7 30l-1.8 30l-2.3 30l-1.3 30l-1.1 30l.7 30l-.2 30l-.8 30M1010.9 470l-4.8 30l-5.8 30l-4.1 30l-2 30l-2.8 30l-2.7 30l-2.9 30l-1 30l.2 30l-.9 30l.6 30l-1.1 30M1016.4 470l-4.9 30l-4.5 30l-4.2 30l-4.3 30l-2.8 30l-2.1 30l-2 30l-1.6 30l.3 30l-.2 30l-1.1 30l.7 30M1021 470l-4.1 30l-5.3 30l-4.1 30l-3.5 30l-2.2 30l-3.4 30l-2.8 30l-.5 30l-1 30l1 30l-.4 30l-.6 30M1026.6 470l-4.8 30l-5.1 30l-4.4 30l-2.9 30l-3.2 30l-2.3 30l-3 30l-1 30l-.1 30l-1.2 30l-.4 30l1.1 30M1031.4 470l-4.8 30l-5 30l-4.1 30l-4.3 30l-3.6 30l-1.9 30l-2.9 30l-.5 30l-.5 30l-.2 30l-.5 30l.5 30M1037.2 470l-4.5 30l-6.8 30l-3.9 30l-4.1 30l-3.1 30l-3.3 30l-1.4 30l-2.2 30l-.4 30l.5 30l-.7 30l.4 30M1040.8 470l-4.4 30l-5.8 30l-4.6 30l-4.3 30l-3.5 30l-2.3 30l-1.9 30l-1.6 30l-1.1 30l-.2 30l-.5 30l.8 30M1045.9 470l-5 30l-5.4 30l-5.3 30l-4.5 30l-3.5 30l-2.1 30l-3.5 30l-.8 30l-.7 30l.5 30l-.5 30l-1.2 30M1049.4 470l-5.3 30l-5.2 30l-5.8 30l-3.1 30l-4.6 30l-2.9 30l-2.2 30l-1.7 30l-.2 30l-.7 30l.5 30l-.7 30M1053.3 470l-4.9 30l-6.3 30l-4.6 30l-4.2 30l-4 30l-3.6 30l-2.6 30l-.5 30l-1.1 30l.8 30l-1 30l.2 30M593.8 220.6l-5 6.8M604.7 223.5l-7 6.6M634.1 228.4l7.8 6.1M655.6 228.5l9.5 10.1M698.6 233.9l7.1 6.6M750.4 233.6l12.3 10.2M807 234.4l11.1 9.2M902.4 234.1l-9.2 7.5M1020.4 224.8l7.7 7.1M1033 222.3l-4.9 9.6M597.7 230.1l-2.3 6.6M651.8 237l-7 7.1M683.3 237.3l7.4 11M741.8 241.2l12.7 7.3M762.7 243.8l-8.2 4.7M893.2 241.6l-9.6 9.6M913.3 240.6l9.6 9.6M1009 234.2l7 6.7M1021 234.1l4.5 4.7M615.9 241.7l-1.8 5M623 239.1l10 11.6M630.9 240.6l6.1 11.1M644.8 244.1l7.8 6.8M760.5 251.5l10.4 7.1M770.5 250.1l9.4 9.2M856.8 250.2l11.9 7.1M893.8 248.2l-9.7 9.2M946.2 249.1l7.7 4.4M980.5 244.4l6.2 6.3M1016 240.9l5 8.4M1031.8 237.3l6.9 6.3M592 242.4l6.1 9.3M606.2 244.9l7.2 9.6M614.1 246.7l6.3 7.8M702.1 255.5l-8.1 8.6M770.9 258.6l10.9 8.2M819 260.6l-6.9 6.2M857 257.7l-7.8 7.2M884.1 257.4l-8.2 7.9M947.1 254.4l-8.6 7.6M986.7 250.7l7.9 6.2M1001.6 250.6l4.1 7.8M1032.7 245.5l-7.4 7M633.9 255.9l5.8 10.4M756.3 266.7l-11.1 5.4M820.5 266l10.9 9.5M828.6 266l12 9.3M866.1 266.4l-8.4 7.2M912.4 264.5l-8.8 9.4M912.4 264.5l10.7 6.3M994.6 256.9l-8.1 10.4M1005.7 258.4l7.7 6.5M1019.9 256.7l4.4 3.7M599.3 259l5.4 10.4M627.4 265.6l-5.2 3.5M650 265.7l-8.5 8.3M692.8 270.3l9.8 7.3M718.4 272.8l11 8.6M754.2 271.7l-8.2 10.4M754.2 271.7l12.4 10.1M763.1 272.8l12.2 7.2M794.1 272l6.5 9.5M886.1 271.6l8.2 9.3M948.5 269.3l-8.7 8.9M955 269l6.8 6.2M963.5 268.9l6.6 8.5M981.3 267.4l5.7 5.8M1038.2 258.3l-6.6 9.7M595.4 265.6l5.3 9M648 274.7l6.7 9.1M680.3 275.4l5.5 7.4M766.6 281.8l-8.7 6.5M782.8 281.8l-7.3 7.7M819.5 281.9l-6.6 5.6M858.4 282.6l11.5 4.3M866.8 279.1l11.7 11M886.4 278.8l-7.9 11.3M939.8 278.2l-10.9 8.3M1006.8 272.5l-6.6 8.3M1020.3 272.3l-5.3 5.4M1041.5 266.7l-6.7 7.7M600.7 274.6l5.5 7.9M607.6 273.9l5.4 8.8M630.9 280.5l6.6 8M654.7 283.8l-2.8 5.9M685.8 282.8l-4.2 7.5M748.1 286.7l10.2 8.3M765.9 290l9.7 4.3M812.9 287.5l10 9.9M905.6 288.7l-12 8.2M928.9 286.5l-7.6 5.9M955.3 284.7l-9.2 9M955.3 284.7l7.3 8.3M969.4 282.8l9 5.5M993.6 283.1l-6.6 5.9M1000.2 280.8l-7.9 9M1026.4 277l2.4 4.9M1041.1 274.6l-3.4 8.6M688.2 291l-8.6 6.5M688.2 291l9.6 9.5M736.4 296.5l-6.1 6.1M747.1 294.4l-7 7.1M782.9 297.9l10.7 6.9M803.2 298.1l-9.6 6.7M812.7 297.4l-10.7 6.9M831.2 295.7l-8.3 9.4M904.6 295.8l8.4 6.2M931.9 295.5l7.5 3.5M987 289l6.2 6.8M999.6 290l-6.4 5.8M1023.9 284.1l5.6 9M1037.7 283.2l-8.2 9.9M632.5 294.7l-7 4.6M644.8 295l7.7 7.5M679.6 297.5l-8.7 6.7M719.5 301.1l11 10.8M755.4 303l-6.5 7.9M782.5 305.7l12.5 5M829.4 302.9l-8 10.1M858.8 305.7l9.3 6.5M869 302.9l9.9 10M894.7 303.9l-10.1 5.2M977.1 297.5l7.9 6.3M1000.6 295.8l5.7 7.8M1016.8 292.2l5.9 8.9M645.8 301.2l5.1 8.6M719.8 310.2l-5 5.4M785 313.6l10.4 4.9M801.4 311.8l11.3 8.2M961.2 308.6l8 5.2M977.8 306.6l7 4.1M1019.1 298.7l4.1 8.1M625.1 309l7.9 6.7M644.8 310.9l6.8 8.8M650.9 309.8l8.9 11.8M664.8 314.4l-5 7.2M704.4 317.2l-8.6 5.5M747.4 316.4l8.8 9.2M764.5 317.7l9.9 7.7M839.9 317.6l8.9 7.5M888 319.4l-10.8 6.4M929.5 315.6l9.6 8.4M1029.1 307.6l-5.1 5.9M1036.4 306.9l3.7 5.3M610.4 312.7l-6.6 6.6M739.3 325.3l-6.8 7.2M774.4 325.4l-6.6 9.1M813.9 328.1l6.4 4.9M829.5 327.9l-9.2 5.1M840.8 325.9l9.1 10.4M869.4 328.3l8 4.8M903.7 326.6l-9.5 6.7M920.4 324.9l-8.2 8M956.2 324.5l5.5 6.7M986.2 320.2l4.2 4.7M620.3 322.8l-4.4 7M624 325.2l-4.8 4.2M630.1 323.7l-4.7 7.3M658 327.1l7.6 7.6M689.6 328.2l9.3 11.7M695.4 329.5l11.6 7.5M714.1 330.7l7.1 9.3M750 331.6l7 7.9M775.8 335.5l7.6 6.2M810.7 334.2l10.5 9.3M832.8 336.5l-11.6 7M849.9 336.3l-9 7M858.5 334.5l-10.7 7.2M877.4 333.1l-10.3 7.5M968.4 330.7l-8.4 7.3M1018.7 322.8l4.4 7.2M1039.5 319l-3.7 9M1039.5 319l4.8 7.1M625.4 331l8.3 10.3M636.4 333.7l-2.7 7.6M729.8 340.8l8.9 7.2M749.1 340.8l-10.4 7.2M749.1 340.8l9.3 7.1M773.3 340.1l-8.6 7.9M773.3 340.1l11.4 9.4M832.5 342.7l-10.7 6.5M847.8 341.7l-6.3 8.9M858.1 340.4l11.6 9.2M904.3 340.8l-8.8 6.2M922.7 339.5l4.8 8.3M927.9 339.7l10.7 7.9M960 338l-4.5 5.6M1023.1 330l-7.4 8M1035.8 328l-5.8 6.7M633.7 341.3l-6 5.1M645.8 341.4l-6.4 4.6M679.3 346.3l-6.7 5.5M679.3 346.3l9.6 6M704.6 347.1l-7.5 7.2M723.7 347.7l-10.1 7.6M738.7 348l11.3 9.5M758.4 347.9l-8.4 9.6M802.4 348.8l-9.4 7M802.4 348.8l10.5 8.7M851.1 351.8l-12.5 6.3M927.5 347.8l-8.6 7.2M627.7 346.4l-8.3 6M633.1 348.9l4.3 5.4M668.3 351.4l3.6 8.3M680.7 354.1l-8.8 5.6M757.4 355.3l-8.9 8.4M803.5 356.1l-11.5 10.1M866.6 357.6l10.4 7.1M875.2 356.5l12.3 7.1M893.3 358.2l-5.8 5.4M893.3 358.2l9.2 4.2M1011.8 346.3l-7.2 10.9M627.3 355.6l-7.2 4M660.5 357.7l-8.5 8.1M660.5 357.7l5 7M671.9 359.7l10.3 9.1M695.4 362l-5.7 5.1M757.3 364.2l9.7 7.6M765.9 364.6l8.3 9.5M849.8 366.4l-10.6 5.7M868.3 363.3l9.2 7.3M893.6 363.6l10 7.8M609.2 358.3l7.1 9.1M665.5 364.7l6.5 8.8M748.9 371.8l10.1 9M801.4 373.2l-6.4 5.6M1004.5 364.5l-6.3 7M1017.8 362.5l5.7 4.9M1026.5 360.9l4.4 5.6M703.6 376.8l9.7 9.2M759 380.8l-11.2 7.4M841.3 378.9l-12.6 8M857.2 380.5l12.1 5.3M955.1 376.2l-10 6.8M967.5 375.5l-4.5 8.1M967.5 375.5l8.7 5.3M631.9 376.5l-5.5 7.8M683.5 383.4l5.5 6.9M699.2 382.4l-10.2 7.9M713.3 386l9.8 7.1M730.6 386.4l8.2 6.6M747.8 388.2l-9 4.8M773.9 387.8l-8.8 7.1M773.9 387.8l10.6 8.1M878.4 388.6l8.2 7.6M887.4 385.8l7.9 7.9M945.1 383l8.5 6.1M967.7 381.7l7.9 6.8M981.9 381.6l-6.3 6.9M626.4 384.3l7.5 7.3M676.1 391l-9.8 4M713.5 392l-7.8 8.4M858.4 395.2l-8.2 9M886.6 396.2l-10 6.1M913.8 393.2l-9.3 9.1M1020.3 384l7.5 4.4M609.8 387.3l-4.6 7.5M666.3 395l9.6 8.1M683.8 398.5l5.6 8.2M732.9 402.4l7.2 6M748.4 400.6l7.4 8.2M783.5 401.6l-7.7 10.6M801.6 404.6l-7.6 5M838.9 404l-7.1 5.1M838.9 404l12.3 6.3M868.6 403.5l8.6 5.4M982.1 397.6l-6.2 5.1M989.5 393.6l-5.2 10.8M996.1 394.7l-7.2 9.5M644.9 401.3l7.9 9.3M729.9 407.7l8.4 8.5M768.4 409.2l6.9 8.8M801.5 409.1l-7 8.6M911.2 407.1l10.1 9.7M945.6 405.4l-7.5 8.4M962.1 403.5l-9.7 9.2M969.7 403.3l-9.6 8.9M975.9 402.7l5.4 8.8M1019.8 398.5l-4.1 6.8M606 402.8l3.2 8.6M635.1 407.9l5.3 10M722.4 415l8.2 9M783.8 416.9l10.3 9.7M820.3 417.8l-8.5 10.1M848.5 419.7l8.6 4.7M868.9 419.7l6.1 5.1M893.4 417.3l-6.5 8.8M921.3 416.8l-8 7.9M929.5 413.9l6.7 7.3M969.3 413.1l-8.2 6.4M1009.1 406.8l8.2 6.9M1030.4 405.4l7.2 4.9M640.4 417.9l-5.2 3.9M696.6 423.5l9.3 6.6M757.3 425.8l10.5 5.3M875 424.8l9.8 7.2M928.4 424.6l-7 5.8M1042.1 409.2l-5.4 8.9M611.1 418.8l7.2 7.3M626.8 422l-3.8 7.9M669.5 425.9l-7.2 5.7M673.4 426l10.1 8.7M705.9 430.1l-9.4 6.8M731.3 433.3l7.3 6M786 434.4l10.1 6.1M831.9 434l8.5 7.9M921.4 430.4l-9.1 7M1015.2 420.3l-4.8 11M1033.4 420.7l-6 5.3M602.3 424.5l4.8 8.2M607 425.7l6.3 6.3M647.1 431.5l6 7.1M692.2 435.2l8.2 10.3M759.1 441.7l8.7 6.9M820.2 441.4l-9.1 5.7M920.5 439.3l-10.1 6.2M943.5 436.1l-8.1 7.4M960.8 436.1l-8.5 6.9M967.7 433.9l-8.7 9.4M983.6 434.7l5.4 4.8M1003.4 430l-5.1 11.3M1036.6 425.5l-5.9 9.5M646 439.4l-4.1 8.9M653.1 438.6l-3.5 8.1M683.8 443.9l8.7 6.2M724.1 444.9l7.3 9.4M777.2 446.8l-9.1 9.9M804.6 448.9l-8.4 6.6M887.2 447.6l-12.1 6.1M989 439.5l-4.9 7.9M1002.5 438.9l6.9 5.6M1028.2 436.6l2.2 4.6M641.9 448.3l-6.7 5.1M641.9 448.3l7.7 8.3M659.8 448.9l-4.4 6.3M692.5 450.1l6.1 10.7M724.7 453.7l6 10M759.3 453.5l7.5 9.7M768.1 456.7l7.6 8.7M813.6 457l7.9 6.3M860.1 455.3l-9.7 9.3M875.1 453.7l-8.3 8.2M894.5 453.3l-9.3 8.4M927.5 453.2l9.7 5.3M990.9 448.4l2.5 4.7M1002.4 445.4l-9 7.7M1030.4 441.2l-5.8 10.6M640.7 453.4l-2.7 7M655.4 455.2l5.4 8.8M663.6 455.4l5.1 10.2M709.1 461.9l-10.5 3.7M748.1 463.6l-7.5 7.3M805 464.4l6.9 5.5M866.8 461.9l-7 9M892.8 463l11 5.4M912.5 462.4l6.8 4.8M957.8 459.7l-6.4 5.6M968.6 456.2l6.7 9.2M993.4 453.1l6.3 7.9M1013.4 451.2l-5.2 10.2M1013.4 451.2l5 7.7M1020.7 452.6l1.8 6.9M604.1 454.8l7 7.4M638 460.4l5 6.7M649.3 461.7l-6.3 5.4M660.8 464l-4.5 6M683.3 468.1l-4.4 4.7M717 469.2l-6.5 3.8M725.3 470.2l-9.7 3.9M740.6 470.9l-7.2 4.1M749.3 469.4l-8.2 7.7M784.8 472.4l-6.3 6.9M811.9 469.9l-6.6 9.9M867.8 471.2l8 4.2M912.1 471.2l-10.7 5.6M919.3 467.2l-7.4 8.9M967.4 463.6l-9.2 7M625.7 466.2l-5.2 4.3M652 470.5l4.4 4M656.3 470l9.6 7.1M741.1 477.1l9.2 7.2M859.7 475.7l7.6 6.6M901.4 476.8l-7.9 6.1M911.9 476.1l6.5 4.6M993.8 468.6l3.9 6.2M1010.7 465.2l6.8 5.8M1033.1 462.5l-6.8 8.1M620.5 470.5l-3.6 6.5M656.4 474.5l8.4 10.5M768.7 481.6l8.8 10.4M867.3 482.3l-8.7 9.8M918.4 480.7l-10.4 9.1M997.7 474.8l7.4 5.4M1031.9 468.4l4.5 5.8M616.9 477l9.5 5.4M651.6 480.7l8.2 8.6M734.4 486.9l-6.7 7.4M767.8 488.8l11.1 9.7M849.9 490.4l6.4 6M972.4 483.2l-6.6 7.1M1000.3 479.5l4.3 5.9M614.6 481l5.2 9.4M648 488.1l8.8 7.8M796.6 498.4l8.5 3.5M815.4 496.1l8.1 8.4M848.5 499l10.3 5.6M935.3 495.2l3.8 5.2M1004.6 485.4l3.7 7.1M1021.4 484.9l1.8 3.4M1035.4 480.1l-6.7 7.3M624.2 488.7l6 8.6M666.4 496.2l10.2 5.8M744.5 501.4l9.7 5.5M759.8 504.2l-5.6 2.7M785.7 504.4l10.5 7.1M948.1 499.5l8.3 5.8M991.1 495.5l-8.7 6.9M1023.2 488.3l4.9 5.8M620 496.6l-2.9 3.5M626.9 495.7l-5.9 6.7M639.1 496.4l6.8 8.4M669.7 500.6l5.1 9.1M738 508.4l6.6 8.2M754.2 506.9l6.3 7.7M857.8 510.3l9.7 6.6M908.1 508.6l7.2 5M917.9 507.5l7.5 5.1M977.3 504.2l4.8 4.5M1000.7 498.5l-4.5 8.2M1017.1 497.1l-7.5 7.8M1028.1 494.1l-4.3 5.9M617.1 500.1l-2.3 5.3M688.5 511.7l-4.5 3.5M744.6 516.6l10.3 4.6M796 516.4l-9 7.7M803.8 516.2l10.3 5.8M838.3 516.7l-8.6 7.9M838.3 516.7l10.1 3.9M892.6 515.8l-9.8 7.4M974.2 509.7l-5.7 7.3M989.4 506.5l-10 7.7M1026.6 500l3 5.5M619.1 506.9l7.7 5.7M658.9 514.7l6.7 5.9M684 515.2l-4.3 6.8M730.7 521.9l6 4.3M787 524.1l7.6 6.6M848.4 520.6l-8.9 8.5M855 521.6l-8.6 6.3M914.1 519.2l10.3 8.1M929.4 518.3l-5 9M953.2 516.6l7.4 7.9M616.1 512.2l5.9 7.6M620.9 512.8l5.7 6.4M640.7 516.1l-4 6.4M653.9 517.5l4.9 8.2M665.6 520.6l7.7 5.9M690.6 523.4l-2.8 4.4M700.9 526.2l8.3 6.7M755.6 526l-9.1 9M794.6 530.7l-6.8 6.4M815.4 528.8l-10.5 8.6M823.5 530.7l7.1 3.1M891.8 528.8l6.8 3.4M914 527.8l9.7 3.8M929.3 523.7l-5.6 7.9M947.1 526.3l4 3.4M966.5 520.2l-7.4 10.9M622 519.8l-2 4.2M642.9 524.7l-4.7 4.5M653.1 527l-4.5 3.9M730.7 532.9l8.9 5.8M746.5 535l9.2 6.2M923.7 531.6l5.8 6.9M977.7 528.2l5.1 5.7M992.3 524.7l4 4.3M635.3 527.6l-5.1 7.3M646.2 531.3l4.9 5.8M663.2 532.7l7.5 6.3M798 542.3l-7.5 4.3M806.5 543.4l10.2 3.6M838.8 540.3l11.1 8.4M857.7 541l-7.8 7.7M865.2 540.2l-9.5 9.1M908.1 538.8l7 5.1M938.8 538.4l-11.6 7.6M959.4 534.5l-8.9 10M964.2 535.6l-6.1 4.6M979.3 533.3l-8.2 8.3M1008.4 528.8l2.9 5.4M621.4 530.6l6.7 8M676.1 540.3l6.3 7.8M757.4 547.3l8.1 6.1M763.6 548.2l10.2 5.4M790.5 546.6l-9.5 8.4M873.5 549.1l-8.8 6.6M937.3 545.1l-7 5.7M958.1 540.2l-6.9 7.3M1002.7 535.2l-9.5 9.3M672.5 546.6l4.4 7.8M709.7 550.1l9.2 6.3M864.7 555.7l-8.5 7.1M888.7 552.4l-6 6.9M934.2 552.4l10.4 2.6M977.7 546l-8.5 8.4M982.8 544.9l6.6 6.6M1015.9 539.5l-7.2 8.5M1024.2 537.8l-5.3 7.2M628.6 544.3l8 6.1M637.9 545.5l-1.3 4.9M642.8 547.6l6.1 5.7M659.5 551.7l8.9 5.1M699.1 556.8l-7.3 2M824.5 562l6.5 3.2M919.7 559.6l-6.4 5.9M944.6 555l-7.3 8.1M976 553.1l-5 4.8M638.8 553.2l-4.2 3.7M643.7 552.5l7.1 8.6M671.2 558.8l8.5 7.3M706.2 563.4l-6.7 3.4M798.4 567.7l7.9 4.9M814.9 567l10.6 6.9M849.8 567.8l-7 3.4M857.3 565.5l-7.2 6.5M865 567.5l-6.1 6M875.1 564.7l8 7.8M889.2 565.7l9.7 5.7M941.6 563.5l8.4 1.3M949.3 561.4l6.3 4.7M971 557.9l-7.5 9.4M971 557.9l3.2 7.4M987.7 555.8l-8 7.5M1006 553.5l1.4 6.3M1015.3 551l-7.9 8.8M1018 550.6l3.7 3.8M631.2 555.5l7.7 9M642.5 558.7l2.9 7.3M650.8 561.1l8.6 4.8M679.7 566.1l8.4 3.3M699.5 566.8l-4.6 6.8M726.8 569.5l10.7 7.7M850.1 572l8.4 6.6M867.3 571.6l-8.8 7M906.5 571.8l-7.9 2.7M955.6 566.1l-6.5 4.4M633.4 561.2l-2.9 4.8M682.6 570.2l-5.8 6.4M688.1 569.4l8 6.2M702.1 571.4l-6 4.2M753.1 577l5.9 6.9M801.8 576.6l-10.1 7.4M808.5 578.1l-5.9 5.1M858.5 578.6l-10.2 6.2M874.3 578l8.8 3.4M904.8 576l-6.3 7.5M634.4 566.6l-3.6 5.1M657.9 570.4l5.5 9.2M676.8 576.6l6.7 5.1M753.7 581.5l5.5 5.1M848.3 584.8l9.6 3.9M875.1 580.8l-8.9 7.2M903.2 581.1l10.1 6.6M918.6 580.8l-5.3 6.9M935.2 580.1l-6.8 5.2M985.6 572.1l6.7 5.9M1016.6 567.6l2.6 3.6M635.5 572.7l3.3 6.8M648.8 574.2l7.7 6.5M663.4 579.6l6.8 7M703.6 585.3l-8.5 2.6M703.6 585.3l5.3 4.3M739.8 586.3l-8.3 6.4M747.8 586.2l4.3 5.2M776.3 588.5l-5.1 6.7M839.7 587.3l-4.4 6.3M857.9 588.7l8.5 3.6M984.3 579.4l-3.6 6.9M984.3 579.4l4.6 5.5M1007.3 575.6l2.8 2.6M648.9 582.6l5.8 3.5M661.1 583l-6.4 3.1M677.6 587.8l-5.8 1.3M737.3 591l-6.2 6M747.6 591.9l8 5.5M771.2 595.2l6.6 5.5M791.9 596.4l-6.3 4M810.3 594.1l-8 4.4M859.2 592.7l5.6 6.4M898.1 592.4l-8.2 7.1M953.6 590l7.2 4.6M974.5 586.1l2.8 4.9M1006.4 582.2l-7.5 4.4M1015.2 578.3l-5.6 6.7M639.2 583.7l6.8 9.6M723.9 597.2l7.5 7.4M760.8 598.1l-5.5 4.2M818 601.8l-9.3 3.5M833.8 599.8l9.1 5.4M921.1 597l-8.6 7.1M921.1 597l5.5 6.8M986.4 591.6l-6.6 6.7M986.4 591.6l2.2 1.2M1009.6 585l4.7 3.9M643 588.9l-4.5 6.1M651.1 594.4l5.5 3.9M671.6 597.1l6.5 6.8M686.6 596.2l4.1 10.1M705.9 600l-8.9 6.6M731.4 604.6l-4.1 2.8M747.8 605.2l-9.6 2M755.3 602.3l-6 5.7M803.4 605.7l7.3 7.2M818.1 605.8l6 5.4M833.2 604.6l-9.1 6.6M867.5 607l-10.4 4.7M867.5 607l7.8 2.7M912.5 604.1l-7.6 7.1M940.3 600.5l5.2 4.2M1014.3 588.9l3.2 4.2M645.8 595.1l8.6 7.8M687 602.1l5.9 7.9M733.7 608.3l4.7 6.3M738.2 607.2l9 6.7M755.8 608.2l6.5 7.1M857.1 611.7l-6.6 4M932.4 606.1l-8.2 8.4M978.8 601.4l-8 5.9M992.6 598.9l7.3 4.7M674.1 608.7l-5.8 4.7M711.4 610.3l-5.6 6.6M747.2 613.9l-8.4 6.6M762.3 615.3l-6.4 4.5M850.5 615.7l8.1 7.1M880.9 617.8l-6.7 4.2M977.7 609.2l-8.3 4.6M977.7 609.2l3.7 5M1012.1 600l3.6 4.8M644.1 605.4l-3.4 6.7M648.1 608.2l-4.7 3.9M802.4 621.6l9.6 8.7M842 621.6l-9.2 6.3M850.9 622.8l-7.2 5.3M850.9 622.8l8.1 4M903.8 619l8.2 7.9M978 613.4l-8.6 6.2M1003.4 608.9l-4.8 6.2M1008.5 609.2l-6.3 5.5M648.6 615.1l7.2 5.7M671.2 617.7l-6.6 4.3M686.5 620.8l7.6 6.2M727.8 625.9l-9.7 3.6M727.8 625.9l8 4M803.8 627.4l-7.7 7.4M812 630.3l-11.6 2.9M843.7 628.1l5.9 5.2M937.3 622l-5.6 7.4M993.7 614l3.9 7.8M670.1 621.7l-4.5 7.5M749.1 630.6l-9 7.1M749.1 630.6l5.5 6.6M817.8 632.7l7.3 5.2M866.4 634.2l-7.2 5.8M910.4 632.6l-6.3 6.1M974.6 622.8l8.6 5.4M986.5 623.1l7.3 4.4M1000.6 620l-3.6 6.2M637.8 621.3l4.2 6.4M660.7 628.7l-3.7 3.1M713.7 632.8l5.5 8.6M748.2 635.4l-4.9 8M801.5 638.3l10.7 8.2M904.1 638.7l-7.6 2.7M917.6 637.4l-8 4.2M959.2 631.4l-6.2 5.8M983.2 628.2l-8.8 7.7M1003.5 624.9l3.4 5.6M657 631.8l-4.6 2.6M749.5 641.1l7.3 7.3M764.5 642.9l-7.7 5.5M780.7 646.3l6.4 4.8M793.2 645.6l-6.1 5.5M793.2 645.6l8.7 3M835.1 643.6l-7.9 8.8M886.3 642.7l-4.7 5.9M886.3 642.7l7.8 5.2M931.8 642.1l-5.6 3.2M970 636.3l-5.7 4.6M979.4 634.1l7.7 5.9M1006.9 630.5l-5.3 4.3M643.2 633.5l-4.7 5.2M701.3 643.6l-5.7 5.8M719.6 647.7l-6.4 5.3M809.6 652l7.4 5.9M817.1 651.6l7.6 4.2M833 650.4l-8.3 5.4M865.7 651.2l-10.1 3.3M918.7 645.7l5.7 7M976 642.9l-7.5 5.9M987.1 640l-5.6 6M643.5 639.1l-4.1 5.3M648.2 639.5l5.1 9.4M652 640l6.8 10.1M679 644.7l5.5 9.7M695.6 649.4l-4.4 6M713.2 653l9.3 3.1M737 655.1l4.1 5.5M751.5 653.3l-10.4 7.3M796.6 656.6l-8.7 3.2M810.6 657.5l-7 5.7M817 657.9l-7 5.3M866.8 654.6l7.3 7.3M924.4 652.7l4.6 5.6M984.7 644.3l5.9 6.1M653.3 648.9l-4.6 1.6M667.4 651.5l-3.3 3.4M678.1 652.1l-6 3.9M703.5 654.3l-8.6 4.2M796.7 663.3l-10.7 3.6M897 661.7l5.7 4.7M963.9 655l4.9 2.9M973.6 654.1l7.3 3M990.6 650.4l2.3 2.2M1003.1 645.9l5 4.9M1012.8 643.4l-4.7 7.4M672.1 656l-3.7 3.6M677.6 657.9l7 7.2M694.9 658.5l-2.8 5M720.3 662.9l7.2 6M778.4 665.9l-6.2 4.7M864.7 665.6l8.5 5.9M936.9 661.1l-7.7 8.5M949.7 663l-6.8 5.7M985.6 655.2l-6.6 6.4M989.1 655.7l-3.8 7M1005.1 652.8l-7.4 5.9M639.9 655.5l5.4 6.6M653.8 658.1l4.1 7.4M673 662.9l-6.2 5.6M673 662.9l7.8 7.2M684.6 665.1l5.8 4.5M692.1 663.5l5.3 9.4M750.4 671l-8.9 3.9M778.8 672.2l7.7 7.2M817.5 674.8l-6.2 2.6M847.8 672.2l-5 8.1M859 672.1l5.7 7M972.3 661.5l-3.4 7M1007.4 656.1l-4.4 5.1M647.9 662.3l7.8 9M673.8 667.9l-6 4.1M697.4 672.9l6 5.5M772.3 677.2l8 5.1M816.7 679.9l-7 5.4M864.7 679.1l-5.9 5.9M937.7 674.4l-9.6 4M641.6 666.7l4.1 5.8M667.8 672l6 7.6M689.6 674.7l-4 4.8M722.7 681.6l7.9 4.1M780.3 682.3l-9.8 8.2M797.1 684l-10.2 5.8M843.1 682.6l4.5 8.8M864.4 685.7l5.9 4.6M928.1 678.4l6.5 6.5M957.1 677.8l-6.1 7.2M957.1 677.8l5.2 4.9M985.2 673.7l-8.3 7.3M988.3 672.9l6 3.5M991.7 672l6.2 3.8M1004.1 666.9l2.3 5.5M640.9 671.7l4.2 7.2M645.7 672.5l4.1 7.2M658.6 677.2l6 6.5M673.8 679.6l-5.7 4.2M685.6 679.5l-6.8 5.5M688.9 681.3l9.9 7M697.8 681.1l3.9 7.2M707.7 686l-6 2.3M730.6 685.7l6.6 5.7M766.1 690l-10.2 3.4M770.5 690.5l-6.2 2.9M870.3 690.3l10.1 5.2M906.9 686.9l7.9 7M914.5 688.5l6.7 1.9M934.6 684.9l-5.5 7.6M941.2 684.9l9.1 4M966.6 682l-4.7 6.9M976.9 681l-3.1 4.9M984.2 679.1l-6.6 4.1M686.1 685.1l-5.9 7.2M742 692.8l-7 6.3M796.8 696l6.6 5M802.3 695.7l8 6.7M820.2 697.1l4 4.1M834 695.4l-9.8 5.8M855.4 695.6l-6.7 6.1M887.6 695.5l-6.4 2.6M892.6 694.7l-6.2 4.2M914.8 693.9l-7 4.8M940.7 690.9l-3.8 6.5M1002.4 679.1l4.4 5.2M645 683.7l-3.6 5M654.3 685.2l4.4 6.4M680.2 692.3l3.2 6M721.5 695.6l5.8 6.9M730.5 699.1l6.4 4.7M735 699.1l7.4 4.4M765.6 699.1l-7.5 5.5M795.8 701.7l-7.7 4.1M856.1 699.5l10.1 7.7M865 700.4l6.5 4.5M881.2 698.1l4.6 9.2M986.6 687.9l6.4 3.2M656 693l-7.8 2.4M663.1 692.8l-4.8 7.5M678.9 695.4l5.5 9.8M727.3 702.5l-3 4.5M774.3 705.4l-10.1 6.3M802.5 706.5l8 4.8M833.5 707.6l9.5 6.7M855.6 706.1l-6.3 5.2M966.5 699l-5.7 6.1M984.6 693.1l-7.3 8.5M668.9 700.4l-6.5 4.4M680.1 700.9l3.6 8M698.8 705.9l-8 2.8M729 710.1l7.2 4.7M757 712.4l-7.5 1.4M779.6 712.2l-7.6 4.2M779.6 712.2l6.2 4.5M801.7 713.8l7.5 2.4M819.8 712l5 5.7M835.5 712.2l4.6 5.3M881.1 709.7l4.1 7M909.2 709.1l-7.7 5.8M928.3 707.6l-6.5 4.9M947.3 703.9l-5.8 7.2M954.9 705.3l6.5 4.7M977.3 701.6l-5.9 5.1M977.3 701.6l4.6 2.8M1010.5 694.2l-4.3 6.1M683.7 708.9l-4.5 3.2M683.7 708.9l6.9 5.5M785.8 716.7l-6.3 5.7M849.8 717.9l4.8 5.1M921.8 712.5l8.7 4.6M941.5 711.1l-4.3 8M966.1 709.9l-7.1 5.9M966.1 709.9l5.7 4.9M988.3 705.8l-6.3 5M988.3 705.8l3.4 2.6M690.6 714.4l-6.5 6.7M690.6 714.4l5.7 9.1M711.2 717.4l-9.2 6.6M735.9 721.5l-4.8 2.8M827.5 723l-7.5 6.4M872.2 721.1l6.9 6.1M947.8 715.9l6.6 6.9M959 715.8l-4.6 7M971.8 714.8l4.6 2.8M987.2 711.1l-3.4 5.9M1005.9 706.5l4 4M696.3 723.5l-7.1 1.3M708.9 725.2l-4.4 3.2M717.2 724.8l5.6 6.2M723.7 723.5l6.1 6.7M794.4 727.9l7 5.6M841.6 727.5l-9.4 6.2M879.1 727.2l8.5 4.5M906.7 725.9l-6.9 6.1M949.1 721.5l4.2 7M959.4 720.3l6 5.4M683.4 725.7l7.2 6.1M704.5 728.4l4.3 5.2M729.8 730.2l-7.3 7.6M743 730l-5.6 7.1M756.4 731.2l-5.8 6.4M977.8 725.2l3 3.7M987.1 723.7l5.1 4.4M991 722.3l5.4 3.6M996.3 718.4l5.5 5.4M649.3 723.1l-3.1 6.1M715.9 735.2l5.7 7.2M737.4 737.1l-6.7 5.3M786.8 737.9l-5.1 7.7M819.5 739.9l7 7.3M835 740.6l5.5 4.6M863.7 738.2l9.8 6.7M902.4 738.6l-9 6.4M914.3 735.7l7.5 5.5M986.8 727.9l7 3.6M1005.6 723l4.1 4M678.9 735.2l-5.3 6.2M730.7 742.4l4.2 5.4M781.7 745.6l4.8 4.8M818.6 744.6l-8.9 7.5M826.5 747.2l5.8 6.1M866 746.1l5.6 5.6M886.7 746.3l-8.8 4.5M899.9 745.4l-5.3 5.3M928.9 742.1l7 6.1M953.4 737.2l-3.8 9.6M680.2 742.4l3.6 7.3M701.8 744.3l-5.1 5.9M743.7 749.5l7.8 5.4M770.7 751.3l-7.3 2.6M770.7 751.3l11.1 4.6M802.2 750l-8.4 5.3M840.1 751.2l8.7 6.8M863.5 749.9l8.5 4.6M885.6 748.8l-8.6 6.5M909.5 749.1l7.2 2.9M940.1 746.8l9.4 2.2M988.8 737.1l-5.6 7.2M993.2 737.4l2.2 5.6M650.2 741.5l-3.8 4.2M774.3 755.1l4.6 6.2M809.1 757.8l-5 4.9M848.8 758l-5.8 5.6M872 754.5l-8.5 8.5M877 755.3l-5.8 6.6M888.1 757.5l-10.8 5.7M899.3 756.5l-5.5 3.7M953.6 750l5.1 6M966.3 748.2l3.9 2.6M970.1 746.9l5.4 6M654.1 747.1l-4.5 5.4M654.1 747.1l5.5 9.2M729.3 759.6l6.4 7.3M741.5 758.7l-5.8 8.2M741.5 758.7l7.8 7.8M778.9 761.3l-5.8 6.7M795 761.9l-7.3 6M804.1 762.7l-7.4 6.2M843 763.6l5.5 4.3M902.8 762.1l3.2 4.7M988.7 750.6l-6.7 4.4M988.7 750.6l2 5.1M649.6 752.5l6.9 4.4M735.7 766.9l-4.5 3.2M778.7 769.5l-4.8 3.2M796.7 768.9l-10.9 3.5M833.8 769.8l-6.3 5.5M833.8 769.8l7 4.8M848.5 767.9l-7.7 6.7M858.1 768.9l-9.6 6.6M906 766.8l9 3.7M940.5 763.3l6 4.1M958.1 761.4l-3.8 3.4M977.8 759.3l5.1 3.8M646.6 757l-4.5 3.5M710.8 767.6l-8 4.3M714.6 770.3l-6.2 2.7M779.2 775.1l-7 5M785.8 772.4l-5.2 5.5M818.2 775.2l7.9 3.4M840.8 774.6l6.6 4.7M886.1 773.2l6.9 4M922.9 771.4l-8 5.3M970.8 764.5l5.6 3.6M1005 757l-2.2 5.4M664.3 765.9l-3.4 4M681.9 768.1l3.3 8.5M788.2 778.5l5.5 5.5M826.1 778.6l-7.9 8.3M856.5 780.2l-8.8 5M864.9 779.2l5.3 6.5M893 777.2l-6.5 6.9M914.9 776.7l-8.4 5.1M942.3 773.1l-6.5 6.6M953.1 772.2l8.9 5.6M642.6 767l4 6.6M667.4 774.8l8.6 5.6M759.5 783.3l4.1 4.7M787.8 785l8.5 4.4M832.1 786.4l-5.2 3.3M832.1 786.4l9.2 5.8M906.5 781.8l9.3 6M955.1 777l-7.8 7.4M977.2 774.2l6.8 4.5M646.6 773.6l-4.6 3.8M679.5 779.4l6.7 6.6M735.2 788.4l-7.5 5.7M819.2 792l8.3 6.3M846.9 791.1l-4.7 5.8M872.9 791.5l-8.9 3M872.9 791.5l5.6 3.8M908.5 788l-7.1 4.8M942.7 783.8l-9 6.7M961.1 782l3.8 4.7M642 777.4l4.3 6.4M670.9 782.4l5.5 9.6M697.8 790.1l-6.7 5.4M717.1 792.2l4.1 3.3M772.8 793.3l-8.1 7.7M802.9 797.8l-6.5 3.9M816.5 795.3l-5 7.2M908.1 792.5l-6.3 8.7M955.5 788.5l-6.6 4.8M676.4 792l2.5 6.6M721.2 795.5l-5.2 6.1M721.2 795.5l8.4 6.7M800.9 803.1l-6 5.2M820 801.6l-8.2 4.9M824.8 803l-4.9 3.1M884.8 801.3l9.9 3.1M941.2 796.2l-6.3 4.5M941.2 796.2l6.6 6.1M955.5 795.5l-7.7 6.8M977.1 789.8l-6.6 9M982 788.7l-4.6 5.8M982 788.7l3.4 7.6M1000.1 786.9l-3 7.2M1005 784.7l3.5 4.6M652 789.6l3.1 6.5M665.1 795l5.3 7.6M780.8 805.5l7.5 6.4M819.9 806.1l-7.9 8.6M849.4 805.5l6.9 9M928.5 801.4l5.7 6.1M992.2 795.1l5.2 2.9M641.9 794.1l4.2 6.6M646.9 795.3l2.1 8.5M650.6 798.2l2.8 4M679.5 804l-5.4 3.1M691.7 805.9l4.4 5.3M729 808.4l8.9 8.4M758.9 810.1l-8.2 4.3M788.3 811.9l5.8 5.7M812 814.7l6.2 4.3M850.4 813.6l5.6 2.9M879.3 812.3l-9.5 5M892.7 810.5l-5.5 7.3M955.6 806.8l3 3.1M978.5 800.7l-8.2 7.2M978.5 800.7l3.7 6.4M999.4 796.6l-4.9 7.3M662.8 805l6.6 5.5M709.3 812.4l8.2 6.2M794.1 817.6l8.9 7.2M802.8 818.4l5.5 5.9M825.5 820.1l-9.2 5.6M833.3 817.9l-9.4 8.3M865.2 819.9l-7.9 5M899.4 815l-6.2 9.3M907 815.8l-6.8 7.8M966 809.8l6.1 2.7M659.4 810.7l-6 3.7M680.2 815.4l6 6M711.4 818.5l-6.8 4M737.5 819.1l-6.9 5.9M772.7 823.9l7.2 6.6M864 825.8l7 4.5M879.8 823.9l-8.8 6.4M922.4 818.4l-8.6 8.1M954.6 815l-8.8 8.5M954.6 815l4.2 7.4M964.7 816.4l-5.9 6M679.4 818.6l5.4 8.5M704.6 822.5l-6.1 6.1M730.6 825l7 5.2M779.9 830.5l-9.1 5.5M787.3 828.4l6.9 6.3M817.7 829.4l-7.8 7.6M856.4 830l-8.1 4.7M865.7 829.4l5.4 5.3M913.8 826.5l8 6.7M930.1 823.9l3.5 7.9M934.3 823.9l7.7 6.9M993.6 813.7l-6.9 8.1M654.2 822.1l6.3 2.9M674 823.9l-3.7 5.5M679.1 826.1l-2.9 3.9M684.8 827.1l6.1 3.8M901.5 834.8l-7.7 4.6M908.6 832.1l-8.7 7.5M913 833.2l-7 6.5M921.8 833.2l-5.5 4.3M927.2 832.2l7.6 2M961.7 826.7l-8.9 6.1M970.4 826.8l-4.5 4.1M986.7 821.8l5.7 3.9M656.3 825.6l-6.6 6.3M676.2 830l-5.4 3.1M715.4 834l-6.7 6.2M722.7 837.1l-7.6 4.6M742 838.8l-4.3 6.4M794.4 841.8l-7.4 3.1M801.1 841.4l10.3 4.9M826.1 841.6l-9.7 3.9M856.8 842.1l-10.1 3.1M872.1 841.1l5.1 2.7M979.8 829.1l-3.4 6.5M992.4 825.7l-5.7 6.4M997.1 827l-4.3 4.9M1008.3 821.6l-3.1 6.8M647.1 828.9l-5 4.2M684.1 838l7.7 4.3M697.3 840.4l4.9 5.2M723.8 843.7l-9.2 1.6M737.7 845.2l-7.3 2M801 848l-5.8 2.3M801 848l9 3.7M826 847.2l8.7 5.4M833.3 846.2l8.5 5.6M995 830.4l5.2 3.7M651.4 834l-5.1 6.5M654.9 836.1l2.9 6.6M669 841.3l4.8 5M773.3 852.2l-8.8 3.9M786.9 852.2l-7.6 3.7M795.2 850.3l-8.5 8.1M795.2 850.3l9 6.8M841.8 851.8l-8.6 8M923.3 848.9l-7 6M933.1 848.3l-5.6 4.3M933.1 848.3l6.8 4.3M650.4 840.8l-3.5 4.7M685.4 850.1l-3.5 4.9M691.3 849.7l4.8 7.7M705.5 849.5l-9.4 7.9M705.5 849.5l3.4 6.3M724.8 851.6l-8.7 8.1M724.8 851.6l4.8 6.4M751.1 856l5.6 5.9M772.9 855.6l5.4 8M779.3 855.9l8.2 9M786.7 858.4l9.9 3.5M927.5 852.6l-6.9 7.4M939.9 852.6l8.5 3M970.3 849.6l-6.6 4.7M970.3 849.6l7.2 3.4M983.6 846.6l2.9 1.6M991.6 842.3l-5.1 5.9M997.3 840.9l1.8 4.2M1004.3 839.7l4.3 5.2M651.5 846.4l3.4 8.5M750.9 862.2l-6.6 4.1M766.5 861.9l8.1 6.5M812.1 862.7l7.9 5.6M877.8 862.2l-5.3 6.1M916.5 858.2l-6.9 6.5M935.2 856.3l-7.1 9.3M948.4 855.6l-8.3 8M970.7 854.4l4.1 4M986.5 848.2l6.5 5.1M646.4 850.6l-3.7 4.6M678.6 860.5l-3.5 3M702 862.4l-4.2 6.5M738.3 866.1l6.8 4.7M779.6 869.1l-7.9 5.5M820 868.3l4.3 5.5M872.5 868.3l-8.3 4M895.3 867.6l-7.9 6.9M901.4 865.2l-9.2 6.1M914.3 864.5l7 7.2M960.3 861.1l-6.1 5.3M963.8 860l-3.2 7.1M981.2 855.4l-3.4 6.4M1001.5 851.7l3.2 5M646 856.9l-3.2 4.1M653.5 857.9l5.2 8.3M711.6 868.3l-7.5 4.2M716 869.9l8.5 7.1M764.3 873.1l7.4 5.7M794.3 876.1l-5.6 3.5M812.1 876.6l4.4 3.4M824.3 873.8l8.6 6.2M864.2 872.3l-7.5 8M864.2 872.3l8.4 7.1M901.5 870.5l-6.5 9.7M966.2 865.4l-5.3 8.3M971.8 863.9l-5.6 7.1M971.8 863.9l4.8 6.3M1000.8 857.2l-4.3 7.1M665.9 866.5l-6 4.4M674 868.4l5 8.1M686.4 871.6l-7.4 4.9M704.1 872.5l4.9 7M771.7 878.8l7.3 5.6M816.5 880l10.3 5M840.6 882l-7.9 4.1M898.7 877.7l8.5 5.9M976.6 870.2l6.6 4.4M999.3 864.3l5.2 3.5M676.1 872.8l3 7M717 879.3l-8.3 7.2M818.8 884.1l7.5 5.5M839 885.9l9.2 4.8M893.9 882.3l5.5 6M929 881.7l-6.1 5.3M994.9 871.1l-1.6 7.9M994.9 871.1l5.5 2.5M1008.6 866.4l-4.2 7.2M658.6 876.3l-4 4.1M692.6 883.3l5.6 5.7M717.7 885.4l5.9 6.8M745.4 889.2l-8.9 2.9M772.6 889.7l-8.8 7.5M788.5 891.9l6.6 6.7M796.4 889.5l5.8 8.4M899.4 888.3l-6.4 6.2M934.1 884.8l-5.4 7.7M986.8 879.3l-5.6 7.4M1008.6 871.7l-4.4 7.4M654.6 880.4l5.1 8.8M690.6 889.8l-4.7 3.7M711.6 889.8l6.1 9.1M723.6 892.2l4.3 5.4M742.1 895.7l-4.6 3M751.4 892.9l-5.9 5.3M863.3 897.6l9.6 3.8M928.7 892.5l-8.1 5.2M935.7 890.7l-5.6 6.5M948.3 888.9l4.1 6.9M954.3 887.6l5.4 6.5M960.5 889.7l4.6 2.9M985.1 882.1l-4.7 7.2" fill="none" stroke="#fb0cc0" stroke-width="1.25"/></g><path d="M585.0 437.0 L587.0 466.7 L594.4 496.0 L598.0 520.0 L607.7 552.5 L615.8 585.0 L620.7 617.6 L624.6 650.0 L627.2 683.0 L628.2 748.0 L628.8 846.0M1058.4 437.0 L1058.2 455.0 L1051.0 496.0 L1046.0 520.0 L1039.7 552.5 L1034.8 585.0 L1031.0 617.6 L1027.7 650.0 L1025.0 682.7 L1023.8 715.0 L1023.1 762.0 L1022.5 846.0" fill="none" stroke="#ff0ccc" stroke-width="120" opacity="0.16" stroke-linecap="round"/><path d="M585.0 437.0 L587.0 466.7 L594.4 496.0 L598.0 520.0 L607.7 552.5 L615.8 585.0 L620.7 617.6 L624.6 650.0 L627.2 683.0 L628.2 748.0 L628.8 846.0M1058.4 437.0 L1058.2 455.0 L1051.0 496.0 L1046.0 520.0 L1039.7 552.5 L1034.8 585.0 L1031.0 617.6 L1027.7 650.0 L1025.0 682.7 L1023.8 715.0 L1023.1 762.0 L1022.5 846.0" fill="none" stroke="#ff0ccc" stroke-width="84" opacity="0.2" stroke-linecap="round"/><path d="M585.0 437.0 L587.0 466.7 L594.4 496.0 L598.0 520.0 L607.7 552.5 L615.8 585.0 L620.7 617.6 L624.6 650.0 L627.2 683.0 L628.2 748.0 L628.8 846.0M1058.4 437.0 L1058.2 455.0 L1051.0 496.0 L1046.0 520.0 L1039.7 552.5 L1034.8 585.0 L1031.0 617.6 L1027.7 650.0 L1025.0 682.7 L1023.8 715.0 L1023.1 762.0 L1022.5 846.0" fill="none" stroke="#ff0ccc" stroke-width="52" opacity="0.25" stroke-linecap="round"/><path d="M585.0 437.0 L587.0 466.7 L594.4 496.0 L598.0 520.0 L607.7 552.5 L615.8 585.0 L620.7 617.6 L624.6 650.0 L627.2 683.0 L628.2 748.0 L628.8 846.0M1058.4 437.0 L1058.2 455.0 L1051.0 496.0 L1046.0 520.0 L1039.7 552.5 L1034.8 585.0 L1031.0 617.6 L1027.7 650.0 L1025.0 682.7 L1023.8 715.0 L1023.1 762.0 L1022.5 846.0" fill="none" stroke="#ff0ccc" stroke-width="26" opacity="0.3" stroke-linecap="round"/><path d="M571.0 243.0 L736.4 176.6 L752.0 171.0 L769.0 167.5 L790.0 166.0 L813.0 165.6 L840.0 166.2 L863.0 168.0 L882.0 171.5 L900.7 176.3 L1066.0 242.5 L1064.3 274.0 L1061.4 319.0 L1059.3 378.0 L1058.4 437.0 L1058.2 455.0 L1051.0 496.0 L1046.0 520.0 L1039.7 552.5 L1034.8 585.0 L1031.0 617.6 L1027.7 650.0 L1025.0 682.7 L1023.8 715.0 L1023.1 762.0 L1022.5 846.0 L628.8 846.0 L628.2 748.0 L627.2 683.0 L624.6 650.0 L620.7 617.6 L615.8 585.0 L607.7 552.5 L598.0 520.0 L594.4 496.0 L587.0 466.7 L585.0 437.0 L583.4 378.0 L582.0 319.0 L578.0 274.0Z" fill="none" stroke="#ff0ccc" stroke-width="40" opacity="0.14"/><path d="M571.0 243.0 L736.4 176.6 L752.0 171.0 L769.0 167.5 L790.0 166.0 L813.0 165.6 L840.0 166.2 L863.0 168.0 L882.0 171.5 L900.7 176.3 L1066.0 242.5 L1064.3 274.0 L1061.4 319.0 L1059.3 378.0 L1058.4 437.0 L1058.2 455.0 L1051.0 496.0 L1046.0 520.0 L1039.7 552.5 L1034.8 585.0 L1031.0 617.6 L1027.7 650.0 L1025.0 682.7 L1023.8 715.0 L1023.1 762.0 L1022.5 846.0 L628.8 846.0 L628.2 748.0 L627.2 683.0 L624.6 650.0 L620.7 617.6 L615.8 585.0 L607.7 552.5 L598.0 520.0 L594.4 496.0 L587.0 466.7 L585.0 437.0 L583.4 378.0 L582.0 319.0 L578.0 274.0Z" fill="none" stroke="#ff0ccc" stroke-width="20" opacity="0.22"/><path d="M584 284 L589.5 296 L596.5 350 L598.5 415 L593.5 447 L587.5 441 L585.5 380Z" fill="#38003a" opacity="0.85"/><path d="M583 288L600 289.5M583 293L600 294.5M583 298L600 299.5M583 303L600 304.5M583 308L600 309.5M583 313L600 314.5M583 318L600 319.5M583 323L600 324.5M583 328L600 329.5M583 333L600 334.5M583 338L600 339.5M583 343L600 344.5M583 348L600 349.5M583 353L600 354.5M583 358L600 359.5M583 363L600 364.5M583 368L600 369.5M583 373L600 374.5M583 378L600 379.5M583 383L600 384.5M583 388L600 389.5M583 393L600 394.5M583 398L600 399.5M583 403L600 404.5M583 408L600 409.5M583 413L600 414.5M583 418L600 419.5M583 423L600 424.5M583 428L600 429.5M583 433L600 434.5M583 438L600 439.5M583 443L600 444.5M588.5 290L590 444M592.5 300L594.5 446M596 330L597.5 430" fill="none" stroke="#f60abc" stroke-width="1.2" clip-path="url(#ac)"/><path d="M571.0 243.0 L736.4 176.6 L752.0 171.0 L769.0 167.5 L790.0 166.0 L813.0 165.6 L840.0 166.2 L863.0 168.0 L882.0 171.5 L900.7 176.3 L1066.0 242.5 L1064.3 274.0 L1061.4 319.0 L1059.3 378.0 L1058.4 437.0 L1058.2 455.0 L1051.0 496.0 L1046.0 520.0 L1039.7 552.5 L1034.8 585.0 L1031.0 617.6 L1027.7 650.0 L1025.0 682.7 L1023.8 715.0 L1023.1 762.0 L1022.5 846.0 L628.8 846.0 L628.2 748.0 L627.2 683.0 L624.6 650.0 L620.7 617.6 L615.8 585.0 L607.7 552.5 L598.0 520.0 L594.4 496.0 L587.0 466.7 L585.0 437.0 L583.4 378.0 L582.0 319.0 L578.0 274.0Z" fill="none" stroke="#ff08c8" stroke-width="5" opacity="0.85"/></g></svg><div style="left:119px;top:146px;width:131px;height:26px;background:linear-gradient(#98a7b7 0,#8aa6c6 3px);"></div><span class="t" style="left:131.6px;top:152.7px;font-size:16.62px;color:#0c1830;transform:scaleX(1.0485);">Perspective</span><div style="left:234px;top:151px;width:1.6px;height:21px;background:#000;"></div><svg style="left:236px;top:156px" width="14" height="10" viewBox="236 156 14 10"><polygon points="238,158 247.6,158 242.8,163.8" fill="#000"/></svg><svg style="left:184px;top:407px" width="190" height="84" viewBox="184 407 190 84"><defs><linearGradient id="fg187" x1="0" y1="0" x2="0" y2="1"><stop offset="0" stop-color="#fdfdfe"/><stop offset="0.45" stop-color="#f7f8fa"/><stop offset="1" stop-color="#e4e7ee"/></linearGradient></defs><rect x="185.5" y="432" width="187" height="58.0" fill="#98a0ad" opacity="0.55"/><rect x="284" y="409" width="87" height="25" fill="#9ab4d2"/><rect x="187" y="434" width="184" height="54.5" fill="url(#fg187)"/><path d="M187 435 L187 426 L203 410 L285 410 L285 435Z" fill="#fcfcfd"/><g transform="translate(324 422)"><circle r="6.6" fill="#e3e3e3"/><rect x="-2.1" y="-9.2" width="4.2" height="4.6" fill="#e3e3e3" transform="rotate(0)"/><rect x="-2.1" y="-9.2" width="4.2" height="4.6" fill="#e3e3e3" transform="rotate(45)"/><rect x="-2.1" y="-9.2" width="4.2" height="4.6" fill="#e3e3e3" transform="rotate(90)"/><rect x="-2.1" y="-9.2" width="4.2" height="4.6" fill="#e3e3e3" transform="rotate(135)"/><rect x="-2.1" y="-9.2" width="4.2" height="4.6" fill="#e3e3e3" transform="rotate(180)"/><rect x="-2.1" y="-9.2" width="4.2" height="4.6" fill="#e3e3e3" transform="rotate(225)"/><rect x="-2.1" y="-9.2" width="4.2" height="4.6" fill="#e3e3e3" transform="rotate(270)"/><rect x="-2.1" y="-9.2" width="4.2" height="4.6" fill="#e3e3e3" transform="rotate(315)"/><circle r="3.9" fill="#9ab4d2"/><circle r="1.8" fill="#e3e3e3"/></g><path d="M346.0 418.4L355.20000000000005 427.6M355.20000000000005 418.4L346.0 427.6" stroke="#dfe8f3" stroke-width="2.8"/></svg><span class="t" style="left:202.2px;top:414.6px;font-size:16.9px;color:#151515;transform:scaleX(0.9867);">OnShape</span><svg style="left:195px;top:536px" width="162" height="102" viewBox="195 536 162 102"><defs><linearGradient id="fg198" x1="0" y1="0" x2="0" y2="1"><stop offset="0" stop-color="#fdfdfe"/><stop offset="0.45" stop-color="#f7f8fa"/><stop offset="1" stop-color="#e4e7ee"/></linearGradient></defs><rect x="196.5" y="560.5" width="159.5" height="76.0" fill="#98a0ad" opacity="0.55"/><rect x="270" y="538" width="84.5" height="24.5" fill="#9ab4d2"/><rect x="198" y="562.5" width="156.5" height="72.5" fill="url(#fg198)"/><path d="M198 563.5 L198 555 L214 539 L271 539 L271 563.5Z" fill="#fcfcfd"/><g transform="translate(309.6 551.3)"><circle r="6.6" fill="#e3e3e3"/><rect x="-2.1" y="-9.2" width="4.2" height="4.6" fill="#e3e3e3" transform="rotate(0)"/><rect x="-2.1" y="-9.2" width="4.2" height="4.6" fill="#e3e3e3" transform="rotate(45)"/><rect x="-2.1" y="-9.2" width="4.2" height="4.6" fill="#e3e3e3" transform="rotate(90)"/><rect x="-2.1" y="-9.2" width="4.2" height="4.6" fill="#e3e3e3" transform="rotate(135)"/><rect x="-2.1" y="-9.2" width="4.2" height="4.6" fill="#e3e3e3" transform="rotate(180)"/><rect x="-2.1" y="-9.2" width="4.2" height="4.6" fill="#e3e3e3" transform="rotate(225)"/><rect x="-2.1" y="-9.2" width="4.2" height="4.6" fill="#e3e3e3" transform="rotate(270)"/><rect x="-2.1" y="-9.2" width="4.2" height="4.6" fill="#e3e3e3" transform="rotate(315)"/><circle r="3.9" fill="#9ab4d2"/><circle r="1.8" fill="#e3e3e3"/></g><path d="M331.0 547.4L340.20000000000005 556.6M340.20000000000005 547.4L331.0 556.6" stroke="#dfe8f3" stroke-width="2.8"/></svg><div style="left:198px;top:539px;width:73px;height:23.5px;overflow:hidden;"><span class="t" style="left:13.8px;top:4.6px;font-size:16.9px;color:#151515;transform:scaleX(1.0063);">EditPoints</span></div><svg style="left:161.5px;top:669px" width="361" height="128" viewBox="161.5 669 361 128"><defs><linearGradient id="fg164" x1="0" y1="0" x2="0" y2="1"><stop offset="0" stop-color="#fdfdfe"/><stop offset="0.45" stop-color="#f7f8fa"/><stop offset="1" stop-color="#e4e7ee"/></linearGradient></defs><rect x="163.0" y="694.3" width="358.0" height="100.7" fill="#98a0ad" opacity="0.55"/><rect x="257.7" y="671" width="261.8" height="25.3" fill="#9ab4d2"/><rect x="164.5" y="696.3" width="355.0" height="97.2" fill="url(#fg164)"/><path d="M164.5 697.3 L164.5 688 L180.5 672 L258.7 672 L258.7 697.3Z" fill="#fcfcfd"/><g transform="translate(473 684.5)"><circle r="6.6" fill="#e3e3e3"/><rect x="-2.1" y="-9.2" width="4.2" height="4.6" fill="#e3e3e3" transform="rotate(0)"/><rect x="-2.1" y="-9.2" width="4.2" height="4.6" fill="#e3e3e3" transform="rotate(45)"/><rect x="-2.1" y="-9.2" width="4.2" height="4.6" fill="#e3e3e3" transform="rotate(90)"/><rect x="-2.1" y="-9.2" width="4.2" height="4.6" fill="#e3e3e3" transform="rotate(135)"/><rect x="-2.1" y="-9.2" width="4.2" height="4.6" fill="#e3e3e3" transform="rotate(180)"/><rect x="-2.1" y="-9.2" width="4.2" height="4.6" fill="#e3e3e3" transform="rotate(225)"/><rect x="-2.1" y="-9.2" width="4.2" height="4.6" fill="#e3e3e3" transform="rotate(270)"/><rect x="-2.1" y="-9.2" width="4.2" height="4.6" fill="#e3e3e3" transform="rotate(315)"/><circle r="3.9" fill="#9ab4d2"/><circle r="1.8" fill="#e3e3e3"/></g><path d="M495.0 680.4L504.20000000000005 689.6M504.20000000000005 680.4L495.0 689.6" stroke="#dfe8f3" stroke-width="2.8"/></svg><span class="t" style="left:179.4px;top:677.0px;font-size:16.9px;color:#151515;transform:scaleX(1.0279);">Zaplatky</span><div style="left:190.7px;top:439px;width:34.5px;height:34.6px;background:#d3d7da;"></div><div style="left:232.7px;top:439px;width:35.6px;height:34.6px;background:#ffb0c8;"></div><div style="left:317.2px;top:439px;width:35.7px;height:34.6px;background:#ffb0c8;"></div><div style="left:201.5px;top:568px;width:35.7px;height:35.4px;background:#ffb0c8;"></div><div style="left:243.7px;top:568px;width:35.7px;height:35.4px;background:#ffb0c8;"></div><svg class="ic" style="left:300px;top:575px" width="24" height="20" viewBox="300 575 24 20"><g transform="translate(312.3 585)"><path d="M-5.6 -3.8L-1.6 0L-5.6 3.8M0.4 -3.8L4.4 0L0.4 3.8" fill="none" stroke="#000" stroke-width="2.3"/></g></svg><div style="left:294.8px;top:700.8px;width:35.6px;height:35.7px;background:#d3d7da;"></div><div style="left:378px;top:700.8px;width:37px;height:35.7px;background:#d3d7da;"></div><div style="left:421px;top:700.8px;width:36px;height:35.7px;background:#ffb0c8;"></div><div style="left:463px;top:700.8px;width:35.6px;height:35.7px;background:#ffb0c8;"></div><div style="left:169.4px;top:742.6px;width:35.6px;height:35.6px;background:#ffb0c8;"></div><div style="left:211px;top:742.6px;width:35.6px;height:35.6px;background:#ffffff;"></div><div style="left:253px;top:742.6px;width:35.6px;height:35.6px;background:#ffb0c8;"></div><svg class="ic" style="left:160px;top:400px" width="370" height="400" viewBox="160 400 370 400"><defs><radialGradient id="ggs" cx="0.4" cy="0.35" r="0.7"><stop offset="0" stop-color="#ffffff"/><stop offset="0.6" stop-color="#d8d8d8"/><stop offset="1" stop-color="#8a8a8a"/></radialGradient><linearGradient id="gbl" x1="0" y1="0" x2="1" y2="1"><stop offset="0" stop-color="#a9baff"/><stop offset="1" stop-color="#5874e6"/></linearGradient><radialGradient id="grb" cx="0.62" cy="0.68" r="0.62"><stop offset="0" stop-color="#1010e0"/><stop offset="0.22" stop-color="#0090ff"/><stop offset="0.4" stop-color="#00e0c0"/><stop offset="0.55" stop-color="#30e830"/><stop offset="0.72" stop-color="#f0f000"/><stop offset="0.88" stop-color="#ff8800"/><stop offset="1" stop-color="#ff6060"/></radialGradient></defs><g transform="translate(208.6 456.4)"><path d="M14.6 2A14.8 14.8 0 1 0 -1 14.8L15 1.8" fill="none" stroke="#0000f0" stroke-width="2"/><circle r="4.6" fill="#fff" stroke="#0000f0" stroke-width="2.8"/><path d="M0 -15v5M-15 0h5M0 15v-4" stroke="#0000f0" stroke-width="2"/><path d="M9.5 -2.2h5.5v4.4h-5.5z" fill="#0000f0"/><path d="M8.6 9.3l7 7M15.6 9.3l-7 7" stroke="#ee1111" stroke-width="1.9"/></g><circle cx="250.5" cy="456.4" r="14.6" fill="url(#ggs)" stroke="#9a9a9a" stroke-width="0.8"/><path d="M244.8 449.5H256.3M244.8 463H256.3M256.3 449.5V463" fill="none" stroke="#111" stroke-width="1.6"/><rect x="242.5" y="447.2" width="4.6" height="4.6" fill="#fff" stroke="#000" stroke-width="1.5"/><rect x="254.0" y="447.2" width="4.6" height="4.6" fill="#fff" stroke="#000" stroke-width="1.5"/><rect x="242.5" y="460.7" width="4.6" height="4.6" fill="#fff" stroke="#000" stroke-width="1.5"/><rect x="254.0" y="460.7" width="4.6" height="4.6" fill="#fff" stroke="#000" stroke-width="1.5"/><polygon points="268.3,464.6 268.3,473.6 259.3,473.6" fill="#111"/><g transform="translate(293 456.4) scale(0.988)"><circle r="16.4" fill="#d264e0"/><path d="M-6.5 -5.5Q-2 -13 4.5 -14.5Q11 -10 12.5 -4Q7 -1 3.5 3.5Q-2 -1 -6.5 -5.5Z" fill="#22e060"/><path d="M-7.5 -3.5Q-2 0 2.8 4.5Q3.5 9 3.8 12.5Q-3 12 -8.5 9.5Q-9.5 3 -7.5 -3.5Z" fill="#ffea00"/><path d="M13 -2.5Q8 0 4.5 4.5Q5 9 5.5 12.5Q12 10 15.5 3.5Q15 0 13 -2.5Z" fill="#22c8f2"/><path d="M-6.5 -5.5Q-2 -13 4.5 -14.5Q11 -10 12.5 -4Q7 -1 3.5 3.5Q-2 -1 -6.5 -5.5ZM3.5 3.5Q4.5 9 4.6 13M-7 -4Q-9.5 3 -8.5 9.5Q-3 12 4.6 13Q12 10 15.5 3.5Q15 0 12.5 -4M-6.5 -5.5Q-11 -6 -15 -4M-8.5 9.5Q-11 12 -11.5 12M-12 -11Q-8 -9 -6 -6M4.5 -14.5V-16.4M-16 2.5Q-12 3.5 -9 3.2M4.6 13Q4 15 3 16" fill="none" stroke="#2a1038" stroke-width="1.4"/><circle r="16.4" fill="none" stroke="#8a3a9a" stroke-width="1"/></g><polygon points="310.6,464.6 310.6,473.6 301.6,473.6" fill="#111"/><path d="M321.2 447.2Q325.2 445.6 329.2 446Q341.2 448 343.7 461L343.2 468.6" fill="none" stroke="#111" stroke-width="2.3"/><rect x="326.9" y="443.7" width="4.6" height="4.6" fill="#fff" stroke="#000" stroke-width="1.4"/><rect x="341.5" y="458.9" width="4.6" height="4.6" fill="#fff" stroke="#000" stroke-width="1.4"/><polygon points="352.9,464.6 352.9,473.6 343.9,473.6" fill="#111"/><path d="M205.5 576.2Q209.5 574.6 213.5 575Q225.5 577 228.0 590L227.5 597.6" fill="none" stroke="#111" stroke-width="2.3"/><rect x="211.2" y="572.7" width="4.6" height="4.6" fill="#fff" stroke="#000" stroke-width="1.4"/><rect x="225.8" y="587.9" width="4.6" height="4.6" fill="#fff" stroke="#000" stroke-width="1.4"/><path d="M230.9 587V574" stroke="#ee1122" stroke-width="2.6"/><polygon points="230.9,569.6 235,577 226.8,577" fill="#ee1122"/><path d="M226 591H212" stroke="#3a4ae0" stroke-width="2.8"/><polygon points="207,591 214,586.6 214,595.4" fill="#3a4ae0"/><rect x="225.9" y="588.1" width="4.6" height="4.6" fill="#e8f000" stroke="#000" stroke-width="1.4"/><path d="M247.7 576.2Q251.7 574.6 255.7 575Q267.7 577 270.2 590L269.7 597.6" fill="none" stroke="#111" stroke-width="2.3"/><rect x="253.4" y="572.7" width="4.6" height="4.6" fill="#fff" stroke="#000" stroke-width="1.4"/><rect x="268.0" y="587.9" width="4.6" height="4.6" fill="#fff" stroke="#000" stroke-width="1.4"/><g transform="translate(186.1 718.6) scale(0.988)"><circle r="16.4" fill="#d264e0"/><path d="M-6.5 -5.5Q-2 -13 4.5 -14.5Q11 -10 12.5 -4Q7 -1 3.5 3.5Q-2 -1 -6.5 -5.5Z" fill="#22e060"/><path d="M-7.5 -3.5Q-2 0 2.8 4.5Q3.5 9 3.8 12.5Q-3 12 -8.5 9.5Q-9.5 3 -7.5 -3.5Z" fill="#ffea00"/><path d="M13 -2.5Q8 0 4.5 4.5Q5 9 5.5 12.5Q12 10 15.5 3.5Q15 0 13 -2.5Z" fill="#22c8f2"/><path d="M-6.5 -5.5Q-2 -13 4.5 -14.5Q11 -10 12.5 -4Q7 -1 3.5 3.5Q-2 -1 -6.5 -5.5ZM3.5 3.5Q4.5 9 4.6 13M-7 -4Q-9.5 3 -8.5 9.5Q-3 12 4.6 13Q12 10 15.5 3.5Q15 0 12.5 -4M-6.5 -5.5Q-11 -6 -15 -4M-8.5 9.5Q-11 12 -11.5 12M-12 -11Q-8 -9 -6 -6M4.5 -14.5V-16.4M-16 2.5Q-12 3.5 -9 3.2M4.6 13Q4 15 3 16" fill="none" stroke="#2a1038" stroke-width="1.4"/><circle r="16.4" fill="none" stroke="#8a3a9a" stroke-width="1"/></g><path d="M212.6 709L218 704.2L220.4 705.4V733.6L212.6 735.2L213.4 722Z" fill="#22dd33" stroke="#000" stroke-width="1.7" stroke-linejoin="round"/><path d="M222.8 703.5L225.6 701.8Q227.6 711 231.2 717.6V735.2H225L226.4 718.6Q223.6 711 222.8 703.5Z" fill="#2299dd" stroke="#000" stroke-width="1.6" stroke-linejoin="round"/><path d="M229.9 707.3L239.2 701.2L244.9 702.6V735.4H238.3L236.9 715Q233 711 229.9 707.3Z" fill="#ff0000" stroke="#000" stroke-width="1.7" stroke-linejoin="round"/><rect x="253.6" y="700.9" width="34.4" height="35" fill="#fff" stroke="#1010e0" stroke-width="1.5"/><rect x="254.6" y="702" width="16" height="16.5" fill="#ffee00" stroke="#000" stroke-width="1.2"/><rect x="272" y="702" width="15.2" height="16" fill="#ee1122" stroke="#000" stroke-width="1"/><rect x="254.6" y="720" width="15" height="15" fill="#f8b4bc"/><rect x="272.6" y="720" width="14.6" height="15" fill="#a4f0f0"/><path d="M260.5 705.5L274 728M282 705.5L268.5 728" stroke="#5c6068" stroke-width="3.4"/><path d="M261.5 706L273 726M281 706L269.5 726" stroke="#d9dde3" stroke-width="1"/><ellipse cx="264.4" cy="731.4" rx="4.4" ry="3.4" fill="#fff" stroke="#1a3ca0" stroke-width="2"/><ellipse cx="278.8" cy="731.4" rx="4.4" ry="3.4" fill="#fff" stroke="#1a3ca0" stroke-width="2"/><path transform="translate(306.4 711.8) scale(1.35) rotate(-28)" d="M-4.6 -4.6H-1.7V-4.9A2.05 2.05 0 1 1 1.7 -4.9V-4.6H4.6V-1.7H4.9A2.05 2.05 0 1 1 4.9 1.7H4.6V4.6H1.7V4.9A2.05 2.05 0 1 1 -1.7 4.9V4.6H-4.6V1.7H-4.9A2.05 2.05 0 1 1 -4.9 -1.7H-4.6Z" fill="#1e9be8" stroke="#102040" stroke-width="1.1" stroke-linejoin="round"/><path transform="translate(318.8 725.6) scale(1.35) rotate(-28)" d="M-4.6 -4.6H-1.7V-4.9A2.05 2.05 0 1 1 1.7 -4.9V-4.6H4.6V-1.7H4.9A2.05 2.05 0 1 1 4.9 1.7H4.6V4.6H1.7V4.9A2.05 2.05 0 1 1 -1.7 4.9V4.6H-4.6V1.7H-4.9A2.05 2.05 0 1 1 -4.9 -1.7H-4.6Z" fill="#ffee22" stroke="#3a3000" stroke-width="1.1" stroke-linejoin="round"/><rect x="338.8" y="701.6" width="13.6" height="33" fill="#ffb0c8" stroke="#c0607f" stroke-width="1.5"/><path d="M345.6 710.2h6.6M345.6 722.3h6.6" stroke="#000" stroke-width="1.5"/><rect x="358.6" y="701.6" width="12.4" height="33" fill="#a8dcea" stroke="#22b4f0" stroke-width="1.6"/><path d="M358.6 710.2h6.4M358.6 722.3h6.4" stroke="#000" stroke-width="1.5"/><rect x="379.8" y="701.6" width="10.2" height="34" fill="#ffb0c8" stroke="#000" stroke-width="1.9"/><rect x="407" y="701.2" width="8" height="35" fill="#a8dcea"/><path d="M407 701.4V736M407 701.8h8M407 704.6h7M407 710.4h7M407 718h7M407 725.8h7M407 735.6h8" stroke="#000" stroke-width="1.6" fill="none"/><path d="M409.6 702.2L398 716.4" stroke="#e8c020" stroke-width="3.4"/><path d="M409.6 702.2L398 716.4" stroke="#7a6000" stroke-width="0.8" transform="translate(1.6 1.2)"/><path d="M392.6 716.8L400.4 722.6L397 726.6L389.4 720.6Z" fill="#b8bcc4" stroke="#222" stroke-width="1"/><path d="M388.6 720.4L397.4 727.2L393.6 731.6Q388 731.6 385.6 725.6Z" fill="#ff8a1a" stroke="#000" stroke-width="1.6"/><polygon points="428,700.8 457,700.8 457,716" fill="#d9dce0"/><path d="M423.1 701.6L437.2 709.2L426 728.5L445.2 720.9L456.1 729.4" fill="none" stroke="#4040d8" stroke-width="2.6" stroke-dasharray="3.4 1.2"/><rect x="436.5" y="711.7" width="3.4" height="3.4" fill="#fff" stroke="#000" stroke-width="1.3"/><rect x="444.0" y="719.2" width="3.4" height="3.4" fill="#fff" stroke="#000" stroke-width="1.3"/><rect x="424.3" y="726.9" width="3.4" height="3.4" fill="#fff" stroke="#000" stroke-width="1.3"/><path d="M477.7 706.3Q486 710.5 494.6 712.9Q488 723 484.3 733.6Q475 727 466.4 723.3Q473 715 477.7 706.3Z" fill="url(#gbl)" stroke="#fff" stroke-width="3" stroke-linejoin="round"/><path d="M181.9 749.6Q191 753.5 200.2 754.3Q193.5 764 190.3 774.1Q181 769 172.5 767Q178.5 758.5 181.9 749.6Z" fill="url(#gbl)" stroke="#16256e" stroke-width="1.1" stroke-linejoin="round"/><path d="M182.3 749.2Q191 753 200.4 753.6" fill="none" stroke="#fff" stroke-width="2.2"/><ellipse cx="228.9" cy="766.1" rx="16.6" ry="8.2" fill="url(#grb)"/><path d="M210.4 746.4L226.6 750" stroke="#cdbb8c" stroke-width="2.6"/><rect x="226" y="746.4" width="4.6" height="9.6" rx="1.6" fill="#7d8078" stroke="#555" stroke-width="0.6"/><path d="M245.6 743.6L238.6 746L236.6 749.4L242.4 753.4L241.2 759.4L232 764.4L224 769.4L219 774.6L214.6 777.4" fill="none" stroke="#000" stroke-width="2.6" stroke-linejoin="round"/><path d="M271.6 746.6Q262 745 257 750.5Q253.5 760 259.4 773.6L263 768Q266 764 268.4 757Q269 752 271.6 752Z" fill="#4a68dc" stroke="#16256e" stroke-width="1.2"/><path d="M268 747.4Q262 746.6 258.6 751Q257 758 259.6 766Q261 756 268 752Z" fill="#9db0ff" opacity=".7"/><ellipse cx="274.6" cy="763.2" rx="11.2" ry="8.4" fill="url(#ggs)" stroke="#333" stroke-width="1.2" transform="rotate(-12 274.6 763.2)"/><path d="M264.6 762Q274 756.6 285 760.6M270 755.6Q275.6 762 277.6 771" fill="none" stroke="#444" stroke-width="1.1"/></svg><div style="left:119px;top:844px;width:1503px;height:3px;background:#d6dae4;"></div><svg style="left:100px;top:844px" width="480" height="44" viewBox="100 844 480 44"><path d="M497 846 L497 863.5 L512 881 L549.5 881 Q555.5 881 555.5 875 L555.5 846Z" fill="#e4e7ef" stroke="#c3c8d6" stroke-width="1.2"/><path d="M425 846 L425 863.5 L440 881 L491 881 Q497 881 497 875 L497 846Z" fill="#d3d8e6" stroke="#b7bdce" stroke-width="1.2"/><path d="M338.5 846 L338.5 863.5 L353.5 881 L419 881 Q425 881 425 875 L425 846Z" fill="#d3d8e6" stroke="#b7bdce" stroke-width="1.2"/><path d="M264 846 L264 863.5 L279 881 L332.5 881 Q338.5 881 338.5 875 L338.5 846Z" fill="#d3d8e6" stroke="#b7bdce" stroke-width="1.2"/><path d="M119.5 846 L119.5 863.5 L134.5 881 L258 881 Q264 881 264 875 L264 846Z" fill="#ffffff" stroke="#d5d9e3" stroke-width="1.2"/><path d="M527 858.5h5.6v3.7h3.7v5.6h-3.7v3.7h-5.6v-3.7h-3.7v-5.6h3.7z" fill="#eef0f5" stroke="#6b7080" stroke-width="1.3"/></svg><span class="t" style="left:137.3px;top:853.9px;font-size:21.51px;color:#222;transform:scaleX(1.0128);">Perspective</span><span class="t" style="left:284.9px;top:853.9px;font-size:21.51px;color:#222;transform:scaleX(1.1301);">Top</span><span class="t" style="left:359.3px;top:853.9px;font-size:21.51px;color:#222;transform:scaleX(1.0716);">Front</span><span class="t" style="left:444.8px;top:853.9px;font-size:21.51px;color:#222;transform:scaleX(1.0949);">Left</span><div style="left:5px;top:892px;width:1px;height:34px;background:#b9bfcc;"></div><div style="left:8px;top:892px;width:1px;height:34px;background:#b9bfcc;"></div><div style="left:16.7px;top:898px;width:19px;height:19px;background:#fff;border:1.3px solid #5f6368;"></div><svg style="left:16.7px;top:898px" width="19" height="19" viewBox="0 0 19 19"><path d="M4 9.6l3.6 4.2L15 4.6" fill="none" stroke="#000" stroke-width="2.3"/></svg><span class="t" style="left:42.8px;top:899.4px;font-size:17.46px;color:#1a1a1a;transform:scaleX(0.9279);">End</span><div style="left:82.5px;top:898px;width:19px;height:19px;background:#fff;border:1.3px solid #5f6368;"></div><svg style="left:82.5px;top:898px" width="19" height="19" viewBox="0 0 19 19"><path d="M4 9.6l3.6 4.2L15 4.6" fill="none" stroke="#000" stroke-width="2.3"/></svg><span class="t" style="left:108.8px;top:899.4px;font-size:17.46px;color:#1a1a1a;transform:scaleX(0.9523);">Near</span><div style="left:154.2px;top:898px;width:19px;height:19px;background:#fff;border:1.3px solid #5f6368;"></div><svg style="left:154.2px;top:898px" width="19" height="19" viewBox="0 0 19 19"><path d="M4 9.6l3.6 4.2L15 4.6" fill="none" stroke="#000" stroke-width="2.3"/></svg><span class="t" style="left:180.8px;top:899.4px;font-size:17.46px;color:#1a1a1a;transform:scaleX(0.9055);">Point</span><div style="left:228px;top:898px;width:19px;height:19px;background:#fff;border:1.3px solid #5f6368;"></div><span class="t" style="left:254.2px;top:899.4px;font-size:17.46px;color:#1a1a1a;transform:scaleX(0.9283);">Mid</span><div style="left:290.8px;top:898px;width:19px;height:19px;background:#fff;border:1.3px solid #5f6368;"></div><span class="t" style="left:316.1px;top:899.4px;font-size:17.46px;color:#1a1a1a;transform:scaleX(0.9373);">Cen</span><div style="left:357.4px;top:898px;width:19px;height:19px;background:#fff;border:1.3px solid #5f6368;"></div><span class="t" style="left:383.2px;top:899.4px;font-size:17.46px;color:#1a1a1a;transform:scaleX(0.9384);">Int</span><div style="left:412.5px;top:898px;width:19px;height:19px;background:#fff;border:1.3px solid #5f6368;"></div><span class="t" style="left:439.3px;top:899.4px;font-size:17.46px;color:#1a1a1a;transform:scaleX(0.8711);">Perp</span><div style="left:483px;top:898px;width:19px;height:19px;background:#fff;border:1.3px solid #5f6368;"></div><span class="t" style="left:509.8px;top:899.4px;font-size:17.46px;color:#1a1a1a;transform:scaleX(0.9918);">Tan</span><div style="left:549.2px;top:898px;width:19px;height:19px;background:#fff;border:1.3px solid #5f6368;"></div><span class="t" style="left:574.8px;top:899.4px;font-size:17.46px;color:#1a1a1a;transform:scaleX(0.9209);">Quad</span><div style="left:625.5px;top:898px;width:19px;height:19px;background:#fff;border:1.3px solid #5f6368;"></div><span class="t" style="left:651.7px;top:899.4px;font-size:17.46px;color:#1a1a1a;transform:scaleX(0.9337);">Knot</span><div style="left:696px;top:898px;width:19px;height:19px;background:#fff;border:1.3px solid #5f6368;"></div><span class="t" style="left:721.5px;top:899.4px;font-size:17.46px;color:#1a1a1a;transform:scaleX(0.9385);">Vertex</span><div style="left:777.5px;top:897px;width:21px;height:21px;background:#ebebed;border:1px solid #c6c8cc;"></div><span class="t" style="left:804.6px;top:899.4px;font-size:17.46px;color:#1a1a1a;transform:scaleX(0.9155);">Project</span><div style="left:864.5px;top:897px;width:21px;height:21px;background:#ebebed;border:1px solid #c6c8cc;"></div><span class="t" style="left:891.6px;top:899.4px;font-size:17.46px;color:#1a1a1a;transform:scaleX(0.9130);">Disable</span><div style="left:0px;top:927px;width:1913px;height:1px;background:#cfd3dd;"></div><div style="left:0px;top:928px;width:1913px;height:67px;background:linear-gradient(#ffffff,#f4f5f8 35%,#dfe3ea);"></div><div style="left:5px;top:934px;width:1px;height:58px;background:#b9bfcc;"></div><div style="left:8px;top:934px;width:1px;height:58px;background:#b9bfcc;"></div><div style="left:13.6px;top:935px;width:36px;height:36px;background:#ffffff;"></div><div style="left:55.6px;top:935px;width:36px;height:36px;background:#6b6b6b;"></div><div style="left:97.6px;top:935px;width:36px;height:36px;background:#ff0000;"></div><div style="left:139.6px;top:935px;width:36px;height:36px;background:#000000;"></div><div style="left:181.6px;top:935px;width:36px;height:36px;background:#c43c3c;"></div><div style="left:223.6px;top:935px;width:36px;height:36px;background:#ffb90a;"></div><div style="left:265.6px;top:935px;width:36px;height:36px;background:#ff8000;"></div><div style="left:307.6px;top:935px;width:36px;height:36px;background:#e6e6e6;"></div><div style="left:349.6px;top:935px;width:36px;height:36px;background:#ffff00;"></div><div style="left:391.6px;top:935px;width:36px;height:36px;background:#008000;"></div><div style="left:433.6px;top:935px;width:36px;height:36px;background:#80ffc0;"></div><div style="left:475.6px;top:935px;width:36px;height:36px;background:#40c080;"></div><div style="left:517.6px;top:935px;width:36px;height:36px;background:#0000b4;"></div><div style="left:559.6px;top:935px;width:36px;height:36px;background:#c040ff;"></div><div style="left:601.6px;top:935px;width:36px;height:36px;background:#ff00ff;"></div><div style="left:643.6px;top:935px;width:36px;height:36px;background:#ff80ff;"></div><div style="left:685.6px;top:935px;width:36px;height:36px;background:#ffc0c0;"></div><div style="left:727.6px;top:935px;width:36px;height:36px;background:#00ffff;"></div><div style="left:769.6px;top:935px;width:36px;height:36px;background:#0000ff;"></div><div style="left:811.6px;top:935px;width:36px;height:36px;background:#40c0c0;"></div><div style="left:853.6px;top:935px;width:36px;height:36px;background:#80ff00;"></div><div style="left:895.6px;top:935px;width:36px;height:36px;background:#00ff00;"></div><div style="left:937.6px;top:935px;width:18px;height:18px;background:#ff0000;"></div><div style="left:955.6px;top:935px;width:18px;height:18px;background:#00e000;"></div><div style="left:937.6px;top:953px;width:18px;height:18px;background:#ffffff;"></div><div style="left:955.6px;top:953px;width:18px;height:18px;background:#0000e0;"></div><div style="left:0px;top:995px;width:1913px;height:19px;background:#f0f0f0;border-top:1px solid #b4b7bd;"></div><div style="left:83.6px;top:996px;width:1px;height:18px;background:#c8c8c8;"></div><div style="left:215.8px;top:996px;width:1px;height:18px;background:#c8c8c8;"></div><div style="left:348px;top:996px;width:1px;height:18px;background:#c8c8c8;"></div><div style="left:480.8px;top:996px;width:1px;height:18px;background:#c8c8c8;"></div><div style="left:612.2px;top:996px;width:1px;height:18px;background:#c8c8c8;"></div><div style="left:871.7px;top:996px;width:1px;height:18px;background:#c8c8c8;"></div><div style="left:1907.7px;top:996px;width:1px;height:18px;background:#c8c8c8;"></div><div style="left:873px;top:996px;width:110px;height:18px;background:#e6f0fb;"></div><span class="t" style="left:8.7px;top:1002.1px;font-size:19.27px;color:#111;transform:scaleX(1.0178);">CPlane</span><span class="t" style="left:112.4px;top:1002.1px;font-size:19.27px;color:#111;transform:scaleX(1.0418);">x 174.53</span><span class="t" style="left:235.6px;top:1002.1px;font-size:19.27px;color:#111;transform:scaleX(1.0172);">y -2345.98</span><span class="t" style="left:388.5px;top:1002.1px;font-size:19.27px;color:#111;transform:scaleX(1.0310);">z 0.00</span><span class="t" style="left:493.7px;top:1002.1px;font-size:19.27px;color:#111;transform:scaleX(1.0236);">Centimeters</span><div style="left:618px;top:1003px;width:21px;height:14px;background:#f000b4;border:1.5px solid #000;"></div><span class="t" style="left:640.5px;top:1002.1px;font-size:19.27px;color:#111;transform:scaleX(1.0124);">Layer 01</span><span class="t" style="left:881.4px;top:1002.1px;font-size:19.27px;color:#111;transform:scaleX(1.0429);font-weight:700;">Grid Snap</span><span class="t" style="left:994.7px;top:1002.1px;font-size:19.27px;color:#111;transform:scaleX(0.9611);">Ortho</span><span class="t" style="left:1066.7px;top:1002.1px;font-size:19.27px;color:#111;transform:scaleX(0.9391);">Planar</span><span class="t" style="left:1148.7px;top:1002.1px;font-size:19.27px;color:#111;transform:scaleX(0.9059);font-weight:700;">Osnap</span><span class="t" style="left:1230.7px;top:1002.1px;font-size:19.27px;color:#111;transform:scaleX(0.9339);">SmartTrack</span><span class="t" style="left:1350.7px;top:1002.1px;font-size:19.27px;color:#111;transform:scaleX(0.9122);font-weight:700;">Gumball</span><span class="t" style="left:1446.7px;top:1002.1px;font-size:19.27px;color:#111;transform:scaleX(0.9443);">Record History</span><span class="t" style="left:1598.7px;top:1002.1px;font-size:19.27px;color:#111;transform:scaleX(0.9883);">Filter</span><span class="t" style="left:1681.5px;top:1002.1px;font-size:19.27px;color:#111;transform:scaleX(1.0185);">Minutes from last save: 7</span><div style="left:1622px;top:140px;width:291px;height:787px;background:#e0e4ec;"></div><div style="left:1623px;top:146px;width:2px;height:698px;background:#eef0f4;"></div><div style="left:1634px;top:151px;width:279px;height:1px;background:#c3c8d4;"></div><div style="left:1634px;top:154px;width:279px;height:1px;background:#c3c8d4;"></div><div style="left:1634px;top:190px;width:279px;height:548px;background:#f8f9fb;border-left:1px solid #cfd3dd;border-bottom:1px solid #c9cdd8;"></div><svg style="left:1630px;top:156px" width="283" height="38" viewBox="1630 156 283 38"><path d="M1823.5 190.5 L1823.5 165 Q1823.5 159 1829.5 159 L1868 159 Q1873 159 1877 164 L1900 190.5Z" fill="#dde1ec" stroke="#bcc2d2" stroke-width="1.2"/><path d="M1760.5 190.5 L1760.5 165 Q1760.5 159 1766.5 159 L1817 159 Q1823 159 1823 165 L1823 190.5Z" fill="#dde1ec" stroke="#bcc2d2" stroke-width="1.2"/><path d="M1698 190.5 L1698 165 Q1698 159 1704 159 L1726 159 Q1731 159 1735 164 L1758 190.5Z" fill="#dde1ec" stroke="#bcc2d2" stroke-width="1.2"/><path d="M1634.5 190.5 L1634.5 165 Q1634.5 159 1640.5 159 L1680 159 Q1685 159 1689 164 L1712 190.5Z" fill="#f8f9fb" stroke="#cfd3dd" stroke-width="1.2"/><rect x="1635.2" y="189" width="75" height="3" fill="#f8f9fb"/></svg><span class="t" style="left:1667.8px;top:164.3px;font-size:17.04px;color:#111;transform:scaleX(0.9710);">P</span><span class="t" style="left:1679.8px;top:170.3px;font-size:9.78px;color:#111;transform:scaleX(1.0655);">...</span><span class="t" style="left:1731.4px;top:164.3px;font-size:17.04px;color:#111;transform:scaleX(0.9431);">L</span><span class="t" style="left:1740.8px;top:170.3px;font-size:9.78px;color:#111;transform:scaleX(1.0655);">...</span><span class="t" style="left:1793.4px;top:164.3px;font-size:17.04px;color:#111;transform:scaleX(0.9845);">Di</span><span class="t" style="left:1809.8px;top:170.3px;font-size:9.78px;color:#111;transform:scaleX(1.1883);">...</span><span class="t" style="left:1857.0px;top:164.3px;font-size:17.04px;color:#111;transform:scaleX(0.9133);">H</span><span class="t" style="left:1868.8px;top:170.3px;font-size:9.78px;color:#111;transform:scaleX(1.1883);">...</span><div style="left:1640px;top:202.0px;width:244px;height:535.4px;background:#fff;border:1px solid #e3e5ec;"></div><div style="left:1640px;top:202.0px;width:244px;height:34.0px;background:#f5f6f9;border-top:1px solid #e3e6ee;border-bottom:1px solid #e3e6ee;"></div><span class="t" style="left:1644.1px;top:210.5px;font-size:17.18px;color:#111;transform:scaleX(0.9363);">Viewport</span><div style="left:1640px;top:236.0px;width:12px;height:28.6px;background:#f1f2f6;"></div><div style="left:1640px;top:263.6px;width:244px;height:1px;background:#e6e8ef;"></div><div style="left:1762px;top:236.0px;width:1px;height:28.6px;background:#e6e8ef;"></div><span class="t" style="left:1658.8px;top:242.1px;font-size:17.46px;color:#111;transform:scaleX(0.9225);">Title</span><span class="t" style="left:1767.6px;top:242.1px;font-size:17.46px;color:#111;transform:scaleX(0.9296);">Perspective</span><div style="left:1640px;top:264.6px;width:12px;height:28.6px;background:#f1f2f6;"></div><div style="left:1640px;top:292.20000000000005px;width:244px;height:1px;background:#e6e8ef;"></div><div style="left:1762px;top:264.6px;width:1px;height:28.6px;background:#e6e8ef;"></div><div style="left:1763px;top:264.6px;width:121px;height:27.6px;background:#dfe3ec;"></div><span class="t" style="left:1658.8px;top:270.7px;font-size:17.46px;color:#7d7d7d;transform:scaleX(0.9308);">Width</span><span class="t" style="left:1767.6px;top:270.7px;font-size:17.46px;color:#7d7d7d;transform:scaleX(0.9484);">1001</span><div style="left:1640px;top:293.20000000000005px;width:12px;height:28.6px;background:#f1f2f6;"></div><div style="left:1640px;top:320.80000000000007px;width:244px;height:1px;background:#e6e8ef;"></div><div style="left:1762px;top:293.20000000000005px;width:1px;height:28.6px;background:#e6e8ef;"></div><div style="left:1763px;top:293.20000000000005px;width:121px;height:27.6px;background:#dfe3ec;"></div><span class="t" style="left:1658.8px;top:299.3px;font-size:17.46px;color:#7d7d7d;transform:scaleX(0.9046);">Height</span><span class="t" style="left:1767.6px;top:299.3px;font-size:17.46px;color:#7d7d7d;transform:scaleX(0.9726);">464</span><div style="left:1640px;top:321.80000000000007px;width:12px;height:28.6px;background:#f1f2f6;"></div><div style="left:1640px;top:349.4000000000001px;width:244px;height:1px;background:#e6e8ef;"></div><div style="left:1762px;top:321.80000000000007px;width:1px;height:28.6px;background:#e6e8ef;"></div><span class="t" style="left:1658.8px;top:327.9px;font-size:17.46px;color:#111;transform:scaleX(0.9013);">Projection</span><span class="t" style="left:1766.0px;top:327.9px;font-size:17.46px;color:#111;transform:scaleX(0.9296);">Perspective</span><div style="left:1856px;top:322.30000000000007px;width:27px;height:27.5px;background:linear-gradient(#f4f4f4,#e2e2e2);border:1px solid #c9ccd2;"></div><svg style="left:1861px;top:329.8px" width="17" height="12" viewBox="0 0 17 12"><path d="M3.5 3l5 5.6 5-5.6" fill="none" stroke="#333" stroke-width="2.2"/></svg><div style="left:1640px;top:350.4000000000001px;width:244px;height:34.0px;background:#f5f6f9;border-top:1px solid #e3e6ee;border-bottom:1px solid #e3e6ee;"></div><span class="t" style="left:1643.8px;top:358.9px;font-size:17.18px;color:#111;transform:scaleX(0.8982);">Camera</span><div style="left:1640px;top:384.4000000000001px;width:12px;height:28.6px;background:#f1f2f6;"></div><div style="left:1640px;top:412.0000000000001px;width:244px;height:1px;background:#e6e8ef;"></div><div style="left:1762px;top:384.4000000000001px;width:1px;height:28.6px;background:#e6e8ef;"></div><span class="t" style="left:1658.8px;top:390.5px;font-size:17.46px;color:#111;transform:scaleX(0.9145);">Lens Length</span><span class="t" style="left:1767.6px;top:390.5px;font-size:17.46px;color:#111;transform:scaleX(0.9718);">50.0</span><div style="left:1640px;top:413.0000000000001px;width:12px;height:28.6px;background:#f1f2f6;"></div><div style="left:1640px;top:440.60000000000014px;width:244px;height:1px;background:#e6e8ef;"></div><div style="left:1762px;top:413.0000000000001px;width:1px;height:28.6px;background:#e6e8ef;"></div><span class="t" style="left:1658.8px;top:419.1px;font-size:17.46px;color:#111;transform:scaleX(0.9206);">Rotation</span><span class="t" style="left:1767.6px;top:419.1px;font-size:17.46px;color:#111;transform:scaleX(0.9977);">0.0</span><div style="left:1640px;top:441.60000000000014px;width:12px;height:28.6px;background:#f1f2f6;"></div><div style="left:1640px;top:469.20000000000016px;width:244px;height:1px;background:#e6e8ef;"></div><div style="left:1762px;top:441.60000000000014px;width:1px;height:28.6px;background:#e6e8ef;"></div><span class="t" style="left:1658.8px;top:447.7px;font-size:17.46px;color:#111;transform:scaleX(0.9234);">X Location</span><span class="t" style="left:1767.6px;top:447.7px;font-size:17.46px;color:#111;transform:scaleX(0.9522);">-11.424</span><div style="left:1640px;top:470.20000000000016px;width:12px;height:28.6px;background:#f1f2f6;"></div><div style="left:1640px;top:497.8000000000002px;width:244px;height:1px;background:#e6e8ef;"></div><div style="left:1762px;top:470.20000000000016px;width:1px;height:28.6px;background:#e6e8ef;"></div><span class="t" style="left:1658.8px;top:476.3px;font-size:17.46px;color:#111;transform:scaleX(0.9269);">Y Location</span><span class="t" style="left:1767.6px;top:476.3px;font-size:17.46px;color:#111;transform:scaleX(0.9150);">-131.591</span><div style="left:1640px;top:498.8000000000002px;width:12px;height:28.6px;background:#f1f2f6;"></div><div style="left:1640px;top:526.4000000000002px;width:244px;height:1px;background:#e6e8ef;"></div><div style="left:1762px;top:498.8000000000002px;width:1px;height:28.6px;background:#e6e8ef;"></div><span class="t" style="left:1658.8px;top:504.9px;font-size:17.46px;color:#111;transform:scaleX(0.9344);">Z Location</span><span class="t" style="left:1767.6px;top:504.9px;font-size:17.46px;color:#111;transform:scaleX(0.9437);">147.644</span><div style="left:1640px;top:527.4000000000002px;width:12px;height:28.6px;background:#f1f2f6;"></div><div style="left:1640px;top:555.0000000000002px;width:244px;height:1px;background:#e6e8ef;"></div><div style="left:1762px;top:527.4000000000002px;width:1px;height:28.6px;background:#e6e8ef;"></div><span class="t" style="left:1658.8px;top:533.5px;font-size:17.46px;color:#111;transform:scaleX(0.9296);">Location</span><div style="left:1764px;top:529.9000000000002px;width:118.5px;height:24.5px;background:linear-gradient(#f3f3f3,#dedede);border:1px solid #9fa3aa;border-radius:2px;"></div><span class="t" style="left:1795.8px;top:533.5px;font-size:17.46px;color:#111;transform:scaleX(0.9474);">Place...</span><div style="left:1640px;top:556.0000000000002px;width:244px;height:34.0px;background:#f5f6f9;border-top:1px solid #e3e6ee;border-bottom:1px solid #e3e6ee;"></div><span class="t" style="left:1645.5px;top:564.5px;font-size:17.18px;color:#111;transform:scaleX(0.9691);">Target</span><div style="left:1640px;top:590.0000000000002px;width:12px;height:28.6px;background:#f1f2f6;"></div><div style="left:1640px;top:617.6000000000003px;width:244px;height:1px;background:#e6e8ef;"></div><div style="left:1762px;top:590.0000000000002px;width:1px;height:28.6px;background:#e6e8ef;"></div><span class="t" style="left:1658.8px;top:596.1px;font-size:17.46px;color:#111;transform:scaleX(0.9485);">X Target</span><span class="t" style="left:1767.6px;top:596.1px;font-size:17.46px;color:#111;transform:scaleX(0.9646);">4.388</span><div style="left:1640px;top:618.6000000000003px;width:12px;height:28.6px;background:#f1f2f6;"></div><div style="left:1640px;top:646.2000000000003px;width:244px;height:1px;background:#e6e8ef;"></div><div style="left:1762px;top:618.6000000000003px;width:1px;height:28.6px;background:#e6e8ef;"></div><span class="t" style="left:1658.8px;top:624.7px;font-size:17.46px;color:#111;transform:scaleX(0.9531);">Y Target</span><span class="t" style="left:1767.6px;top:624.7px;font-size:17.46px;color:#111;transform:scaleX(0.9646);">5.056</span><div style="left:1640px;top:647.2000000000003px;width:12px;height:28.6px;background:#f1f2f6;"></div><div style="left:1640px;top:674.8000000000003px;width:244px;height:1px;background:#e6e8ef;"></div><div style="left:1762px;top:647.2000000000003px;width:1px;height:28.6px;background:#e6e8ef;"></div><span class="t" style="left:1658.8px;top:653.3px;font-size:17.46px;color:#111;transform:scaleX(0.9629);">Z Target</span><span class="t" style="left:1767.6px;top:653.3px;font-size:17.46px;color:#111;transform:scaleX(0.9484);">125.857</span><div style="left:1640px;top:675.8000000000003px;width:12px;height:28.6px;background:#f1f2f6;"></div><div style="left:1640px;top:703.4000000000003px;width:244px;height:1px;background:#e6e8ef;"></div><div style="left:1762px;top:675.8000000000003px;width:1px;height:28.6px;background:#e6e8ef;"></div><span class="t" style="left:1658.8px;top:681.9px;font-size:17.46px;color:#111;transform:scaleX(0.9296);">Location</span><div style="left:1764px;top:678.3000000000003px;width:118.5px;height:24.5px;background:linear-gradient(#f3f3f3,#dedede);border:1px solid #9fa3aa;border-radius:2px;"></div><span class="t" style="left:1795.8px;top:681.9px;font-size:17.46px;color:#111;transform:scaleX(0.9474);">Place...</span><div style="left:1640px;top:704.4000000000003px;width:244px;height:34.0px;background:#f5f6f9;border-top:1px solid #e3e6ee;border-bottom:1px solid #e3e6ee;"></div><span class="t" style="left:1644.5px;top:712.9px;font-size:17.18px;color:#111;transform:scaleX(0.9620);">Wallpaper</span><div style="left:1890px;top:202px;width:23px;height:536px;background:#f3f4f7;"></div><div style="left:1890px;top:227px;width:23px;height:418px;background:#c9c9c9;"></div><svg style="left:1891px;top:208px" width="20" height="14" viewBox="0 0 20 14"><path d="M4 10.5l5.5-6 5.5 6" fill="none" stroke="#444" stroke-width="2.4"/></svg><svg style="left:1891px;top:719px" width="20" height="14" viewBox="0 0 20 14"><path d="M4 3.5l5.5 6 5.5-6" fill="none" stroke="#444" stroke-width="2.4"/></svg><div style="left:1634px;top:745px;width:279px;height:1px;background:#c3c8d4;"></div><div style="left:1634px;top:753px;width:279px;height:1px;background:#c3c8d4;"></div><svg style="left:979px;top:761.7px" width="705" height="252" viewBox="979 761.7 705 252"><defs><linearGradient id="fg982" x1="0" y1="0" x2="0" y2="1"><stop offset="0" stop-color="#fdfdfe"/><stop offset="0.45" stop-color="#f7f8fa"/><stop offset="1" stop-color="#e4e7ee"/></linearGradient></defs><rect x="980.5" y="786.7" width="702" height="225.79999999999995" fill="#98a0ad" opacity="0.55"/><rect x="1084" y="763.7" width="597" height="25" fill="#9ab4d2"/><rect x="982" y="788.7" width="699" height="222.29999999999995" fill="url(#fg982)"/><path d="M982 789.7 L982 780.7 L998 764.7 L1085 764.7 L1085 789.7Z" fill="#fcfcfd"/><g transform="translate(1635.5 776.8)"><circle r="6.6" fill="#e3e3e3"/><rect x="-2.1" y="-9.2" width="4.2" height="4.6" fill="#e3e3e3" transform="rotate(0)"/><rect x="-2.1" y="-9.2" width="4.2" height="4.6" fill="#e3e3e3" transform="rotate(45)"/><rect x="-2.1" y="-9.2" width="4.2" height="4.6" fill="#e3e3e3" transform="rotate(90)"/><rect x="-2.1" y="-9.2" width="4.2" height="4.6" fill="#e3e3e3" transform="rotate(135)"/><rect x="-2.1" y="-9.2" width="4.2" height="4.6" fill="#e3e3e3" transform="rotate(180)"/><rect x="-2.1" y="-9.2" width="4.2" height="4.6" fill="#e3e3e3" transform="rotate(225)"/><rect x="-2.1" y="-9.2" width="4.2" height="4.6" fill="#e3e3e3" transform="rotate(270)"/><rect x="-2.1" y="-9.2" width="4.2" height="4.6" fill="#e3e3e3" transform="rotate(315)"/><circle r="3.9" fill="#9ab4d2"/><circle r="1.8" fill="#e3e3e3"/></g><path d="M1656.9 772.9L1666.1 782.1M1666.1 772.9L1656.9 782.1" stroke="#dfe8f3" stroke-width="2.8"/></svg><span class="t" style="left:1023.6px;top:769.3px;font-size:16.9px;color:#151515;transform:scaleX(1.0229);">Aliona</span><svg class="ic" style="left:982px;top:790px" width="700" height="222" viewBox="982 790 700 222"><defs><radialGradient id="gsph" cx="0.38" cy="0.3" r="0.75"><stop offset="0" stop-color="#b9c6ff"/><stop offset="0.45" stop-color="#6c87ee"/><stop offset="1" stop-color="#2c46b8"/></radialGradient><linearGradient id="gbl" x1="0" y1="0" x2="1" y2="1"><stop offset="0" stop-color="#a9baff"/><stop offset="1" stop-color="#5874e6"/></linearGradient><linearGradient id="ggr" x1="0" y1="0" x2="1" y2="1"><stop offset="0" stop-color="#ffffff"/><stop offset="1" stop-color="#c4c4c4"/></linearGradient><linearGradient id="gcy" x1="0" y1="0" x2="1" y2="0"><stop offset="0" stop-color="#8ea4f6"/><stop offset="0.45" stop-color="#4a68dc"/><stop offset="1" stop-color="#3350c4"/></linearGradient><radialGradient id="gtor" cx="0.45" cy="0.4" r="0.6"><stop offset="0" stop-color="#9fb2ff"/><stop offset="1" stop-color="#5f7cf0"/></radialGradient><radialGradient id="ggs" cx="0.4" cy="0.35" r="0.7"><stop offset="0" stop-color="#ffffff"/><stop offset="0.6" stop-color="#d8d8d8"/><stop offset="1" stop-color="#8a8a8a"/></radialGradient><linearGradient id="gred" gradientUnits="userSpaceOnUse" x1="0" y1="-15" x2="0" y2="15"><stop offset="0" stop-color="#f03a30"/><stop offset="0.5" stop-color="#d80c0c"/><stop offset="1" stop-color="#c00000"/></linearGradient><linearGradient id="gfol" x1="0" y1="0" x2="0" y2="1"><stop offset="0" stop-color="#ffe88a"/><stop offset="1" stop-color="#f0b420"/></linearGradient></defs><g transform="translate(1003.9 812.5)"><path d="M-17.4 -5.8Q4 -6 6.3 14.4" fill="none" stroke="#111" stroke-width="2.6" /><path d="M-17.4 -14.6H-4.7L13 3.9V15.5" fill="none" stroke="#111" stroke-width="1.3" stroke-dasharray="1.4 1.6"/><rect x="-6.9" y="-16.8" width="4.4" height="4.4" fill="#fff" stroke="#000" stroke-width="1.4"/><rect x="10.8" y="1.7" width="4.4" height="4.4" fill="#fff" stroke="#000" stroke-width="1.4"/><polygon points="18.5,9 18.5,18 9.5,18" fill="#8a8a8a"/></g><g transform="translate(1045.9 812.5)"><path d="M-15.8 -7.6Q-11 -10 -7.6 -8.8Q5 -5 7 6.5V14.4" fill="none" stroke="#111" stroke-width="2.4" /><rect x="-9.9" y="-11.1" width="4.6" height="4.6" fill="#fff" stroke="#000" stroke-width="1.4"/><rect x="4.7" y="4.2" width="4.6" height="4.6" fill="#fff" stroke="#000" stroke-width="1.4"/></g><g transform="translate(1129.9 812.5)"><rect x="-13.3" y="-15.5" width="9.6" height="9.7" fill="url(#gbl)" stroke="#16256e" stroke-width="1.3"/><rect x="4.2" y="-11" width="9.7" height="8.7" fill="url(#gbl)" stroke="#16256e" stroke-width="1.3"/><rect x="-0.7" y="-6.7" width="9.3" height="8.8" fill="url(#gbl)" stroke="#16256e" stroke-width="1.3"/><rect x="-13.3" y="3" width="9.6" height="9.1" fill="url(#ggr)" stroke="#333" stroke-width="1.3"/><rect x="5.1" y="5.6" width="9.3" height="9.2" fill="url(#gbl)" stroke="#16256e" stroke-width="1.3"/></g><g transform="translate(1171.9 812.5)"><rect x="-15.8" y="-13.7" width="7.5" height="21" fill="#fff" stroke="#222" stroke-width="1.4"/><path d="M-8 -9.5H3.5V-5" fill="none" stroke="#333" stroke-width="1.2"/><polygon points="3.5,-2.6 0.8,-6.6 6.2,-6.6" fill="#333"/><rect x="-11" y="-3.6" width="22" height="7.2" transform="translate(5.8 3.9) rotate(-38)" fill="url(#gbl)" stroke="#16256e" stroke-width="1.3"/></g><g transform="translate(1213.9 812.5)"><path d="M-3 -12.5L-6.5 -7L-4.5 -6L-9.5 -0.5L-6.5 0.8L-12.5 8L-9 9.5L-11 12.5H-3Z" fill="url(#ggr)" stroke="#333" stroke-width="1.2"/><path d="M2.6 -12.5L6.1 -7L4.1 -6L9.1 -0.5L6.1 0.8L12.1 8L8.6 9.5L10.6 12.5H2.6Z" fill="url(#gbl)" stroke="#16256e" stroke-width="1.2"/><path d="M-0.2 -16V16" stroke="#000" stroke-width="1.3" stroke-dasharray="1.3 1.3"/></g><g transform="translate(1255.9 812.5)"><circle cx="0" cy="-7.6" r="5" fill="#9a9af5" stroke="#3c3c80" stroke-width="1.2"/><circle cx="-7.6" cy="5.6" r="4.9" fill="#fffdf4" stroke="#222" stroke-width="1.3"/><circle cx="7.7" cy="4.7" r="5.2" fill="#2a2a9c" stroke="#1c1c70" stroke-width="1"/></g><g transform="translate(1297.9 812.5)"><circle cx="0.4" cy="-5.8" r="6.6" fill="#000"/><circle cx="-4.9" cy="3" r="6.8" fill="#000"/><circle cx="6.5" cy="2.1" r="6.6" fill="#000"/><circle cx="6.5" cy="2.1" r="4.5" fill="#2a2a9c"/><circle cx="0.4" cy="-5.8" r="4.5" fill="#9a9af5"/><circle cx="-4.9" cy="3" r="4.5" fill="#fffdf0"/></g><g transform="translate(1339.9 812.5)"><rect x="-14.8" y="-1.4" width="27.3" height="7" fill="#fff" stroke="#000" stroke-width="1.5"/><polygon points="1,-13.7 9.8,-13.7 5.4,0.4 1,5.6" fill="#1c3a9c"/></g><g transform="translate(1381.9 812.5)"><path d="M-16 -7.9H-8.6M8.8 7.6V15.3" stroke="#aaa" stroke-width="1.2"/><rect x="-8.4" y="-10.0" width="4.2" height="4.2" fill="#fff" stroke="#000" stroke-width="1.3"/><rect x="6.7" y="3.2" width="4.2" height="4.2" fill="#fff" stroke="#000" stroke-width="1.3"/><path d="M1.4 -9.1L8.8 -1.7M8.8 -9.1L1.4 -1.7" stroke="#ee1111" stroke-width="2.4"/></g><g transform="translate(1423.9 812.5)"><path d="M0 -11.1H11.9V1" fill="none" stroke="#b9bcc4" stroke-width="1" /><path d="M-12.1 -11.1H0Q11.9 -11.1 11.9 1V10.9" fill="none" stroke="#111" stroke-width="2.5" /><rect x="-14.4" y="-13.4" width="4.6" height="4.6" fill="#fff" stroke="#000" stroke-width="1.4"/><rect x="9.6" y="8.6" width="4.6" height="4.6" fill="#fff" stroke="#000" stroke-width="1.4"/></g><g transform="translate(1465.9 812.5)"><path d="M-11.9 -2.3H-8Q1.6 -2.3 1.6 8V10.9" fill="none" stroke="#aaa" stroke-width="1.2" /><rect x="-14.1" y="-4.5" width="4.4" height="4.4" fill="#fff" stroke="#aaa" stroke-width="1.2"/><rect x="-0.6" y="8.7" width="4.4" height="4.4" fill="#fff" stroke="#aaa" stroke-width="1.2"/><path d="M-11.9 -12.8H-6Q12.1 -10 12.1 10.9" fill="none" stroke="#111" stroke-width="2.5" /><rect x="-14.2" y="-15.1" width="4.6" height="4.6" fill="#fff" stroke="#000" stroke-width="1.4"/><rect x="9.8" y="8.6" width="4.6" height="4.6" fill="#fff" stroke="#000" stroke-width="1.4"/></g><g transform="translate(1507.9 812.5)"><path d="M-10.5 -9.8H7.9M-10.5 8.3H7.9" fill="none" stroke="#111" stroke-width="1.3" stroke-dasharray="4 2.4"/><path d="M7.9 -9.8Q13.6 -0.7 7.9 8.3" fill="none" stroke="#333" stroke-width="1.2" /><rect x="-12.7" y="-12.0" width="4.4" height="4.4" fill="#fff" stroke="#000" stroke-width="1.4"/><rect x="5.7" y="-12.0" width="4.4" height="4.4" fill="#fff" stroke="#000" stroke-width="1.4"/><rect x="-12.7" y="6.1" width="4.4" height="4.4" fill="#fff" stroke="#000" stroke-width="1.4"/><rect x="5.7" y="6.1" width="4.4" height="4.4" fill="#fff" stroke="#000" stroke-width="1.4"/></g><g transform="translate(1549.9 812.5)"><path d="M-13 12.3L-6.9 0.4L6.3 -3.5L13 -14.2" fill="none" stroke="#444" stroke-width="1.6" /><circle cx="-13" cy="12.3" r="2.6" fill="#fff" stroke="#222" stroke-width="1.3"/><circle cx="-6.9" cy="0.4" r="2.6" fill="#fff" stroke="#222" stroke-width="1.3"/><circle cx="6.3" cy="-3.5" r="2.6" fill="#fff" stroke="#222" stroke-width="1.3"/><circle cx="13" cy="-14.2" r="2.6" fill="#fff" stroke="#222" stroke-width="1.3"/></g><g transform="translate(1591.9 812.5)"><path d="M-1.4 -2.3H13.9" fill="none" stroke="#111" stroke-width="1.6" /><rect x="-3.5" y="-4.4" width="4.2" height="4.2" fill="#fff" stroke="#000" stroke-width="1.4"/><rect x="11.8" y="-4.4" width="4.2" height="4.2" fill="#fff" stroke="#000" stroke-width="1.4"/></g><g transform="translate(1633.9 812.5)"><path d="M-6.6 1.5 L-7.0 1.3 L-7.3 1.1 L-7.7 0.7 L-7.9 0.2 L-7.9 -0.4 L-7.8 -1.0 L-7.4 -1.6 L-6.9 -2.2 L-6.3 -2.6 L-5.5 -2.8 L-4.6 -2.7 L-3.7 -2.5 L-2.9 -2.0 L-2.2 -1.2 L-1.7 -0.2 L-1.5 0.9 L-1.6 2.0 L-2.0 3.1 L-2.7 4.2 L-3.8 5.0 L-5.0 5.6 L-6.4 5.8 L-7.8 5.6 L-9.2 5.1 L-10.4 4.2 L-11.4 2.9 L-12.1 1.4 L-12.3 -0.3 L-12.1 -2.0 L-11.4 -3.7 L-10.3 -5.1 L-8.8 -6.3 L-7.0 -7.0 L-5.0 -7.2 L-3.0 -6.9 L-1.1 -6.1 L0.6 -4.8 L1.9 -3.0 L2.7 -0.9 L2.9 1.3 L2.6 3.6 L1.6 5.8 L0.1 7.7 L-1.9 9.1 L-4.3 10.0 L-6.8 10.2 L-9.4 9.8 L-11.8 8.7 L-13.9 7.0 L-15.5 4.7 L-16.5 2.1 L-16.7 -0.8" fill="none" stroke="#444" stroke-width="1.2" /><path d="M14.4 -15.5H8Q4 -14.5 1 -10.5" fill="none" stroke="#111" stroke-width="1.2" /><polygon points="-0.6,-8.6 1.4,-13 4,-9.4" fill="#111"/></g><g transform="translate(1003.9 853.4)"><text x="-12.4" y="3.4" font-family="Liberation Sans, sans-serif" font-size="9.6" font-weight="700" fill="#000" textLength="24" lengthAdjust="spacingAndGlyphs">TEXT</text></g><g transform="translate(1045.9 853.4)"><circle cx="0" cy="-0.5" r="14.3" fill="none" stroke="#444" stroke-width="1.3"/><path d="M0 -0.5L9.5 -9.8" fill="none" stroke="#2b2b2b" stroke-width="1.4" /><circle cx="0" cy="-0.5" r="2.1" fill="#fff" stroke="#222" stroke-width="1.2"/><circle cx="9.5" cy="-9.8" r="2.1" fill="#fff" stroke="#222" stroke-width="1.2"/></g><g transform="translate(1087.9 853.4)"><path d="M-10.9 0.2H13.2" fill="none" stroke="#111" stroke-width="2.5" stroke-dasharray="3.6 1.7"/><rect x="-16.6" y="-2.0" width="4.4" height="4.4" fill="#fff" stroke="#000" stroke-width="1.4"/></g><g transform="translate(1129.9 853.4)"><g transform="translate(0 0) scale(1.0)"><circle cx="1.6" cy="-12.2" r="3.1" fill="#000"/><path d="M-1 -7.6Q-8.6 -9.4 -10.2 1.4" fill="none" stroke="#000" stroke-width="5.6" stroke-linecap="round"/><path d="M-10.6 1L-11.4 14.4M-9 2L-3.4 14.4" fill="none" stroke="#000" stroke-width="3.2" stroke-linecap="square"/><path d="M-2.4 -6.4L2.6 -0.8L8 -1.6" fill="none" stroke="#000" stroke-width="2.5" stroke-linejoin="round"/></g><path d="M3 -2H10.6M10.6 -4.6V2.6" stroke="#000" stroke-width="2"/><circle cx="7.7" cy="12.1" r="5.8" fill="none" stroke="#888" stroke-width="1.6"/><circle cx="7.7" cy="12.1" r="2.6" fill="none" stroke="#aaa" stroke-width="1.2"/></g><g transform="translate(1171.9 853.4)"><polygon points="-0.5,-13.7 13.4,-0.5 -0.5,12.7 -14.4,-0.5" fill="url(#gbl)" stroke="#16256e" stroke-width="1.3"/><rect x="-14.5" y="7.2" width="8" height="8" fill="url(#ggr)" stroke="#222" stroke-width="1.4"/></g><g transform="translate(1213.9 853.4)"><path d="M-5 5L6 -6" stroke="#222" stroke-width="1.3"/><polygon points="7.4,-7.4 6.4,-2.6 2.6,-6.4" fill="#222"/><rect x="-13.6" y="3.6" width="10" height="10" fill="url(#ggr)" stroke="#222" stroke-width="1.4"/><rect x="5" y="-14.5" width="9.6" height="9.6" fill="url(#gbl)" stroke="#16256e" stroke-width="1.3"/></g><g transform="translate(1255.9 853.4)"><path d="M-8.6 -10.7H8" stroke="#111" stroke-width="1.5"/><polygon points="9.4,-10.7 5.4,-13.5 5.4,-7.8999999999999995" fill="#111"/><circle cx="-11.6" cy="-10.7" r="3.5" fill="url(#ggr)" stroke="#555" stroke-width="1"/><circle cx="12.6" cy="-10.7" r="3.6" fill="url(#gsph)" stroke="#2a3c9a" stroke-width="0.8"/><path d="M-1.9000000000000004 -0.5H8" stroke="#111" stroke-width="1.5"/><polygon points="9.4,-0.5 5.4,-3.3 5.4,2.3" fill="#111"/><circle cx="-4.9" cy="-0.5" r="3.5" fill="url(#ggr)" stroke="#555" stroke-width="1"/><circle cx="12.6" cy="-0.5" r="3.6" fill="url(#gsph)" stroke="#2a3c9a" stroke-width="0.8"/><path d="M-6.300000000000001 9.5H8" stroke="#111" stroke-width="1.5"/><polygon points="9.4,9.5 5.4,6.7 5.4,12.3" fill="#111"/><circle cx="-9.3" cy="9.5" r="3.5" fill="url(#ggr)" stroke="#555" stroke-width="1"/><circle cx="12.6" cy="9.5" r="3.6" fill="url(#gsph)" stroke="#2a3c9a" stroke-width="0.8"/></g><g transform="translate(1297.9 853.4)"><polygon points="-4.9,-10.7 13.5,-6.3 4.7,10.4 -13.7,4.2" fill="url(#gbl)" stroke="#16256e" stroke-width="1.3"/><path d="M-4.4 -8.6L4.4 9" stroke="#fff" stroke-width="1.5"/><rect x="-6.6" y="-10.8" width="4.4" height="4.4" fill="#fff" stroke="#000" stroke-width="1.4"/><rect x="2.2" y="6.8" width="4.4" height="4.4" fill="#fff" stroke="#000" stroke-width="1.4"/></g><g transform="translate(1339.9 853.4)"><path d="M-11.2 -12.5L2 -7.2V-2.8L14.2 -1.9L5.4 13.9L-13.9 8.6L-8.6 1.6Z" fill="#4a68dc" stroke="#16256e" stroke-width="1.3" stroke-linejoin="round"/><path d="M-8.6 1.6L2 -2.8" stroke="#16256e" stroke-width="1.2"/><path d="M-7 0L1 3" stroke="#fff" stroke-width="1.8"/><path d="M-6 4L9 2.5L4 11L-10 7.5Z" fill="#9db0ff" opacity=".55"/></g><g transform="translate(1381.9 853.4)"><polygon points="-4.9,-9 6.5,-14.2 6.5,9.5 -4.9,13.9" fill="url(#gbl)" stroke="#16256e" stroke-width="1.4"/><path d="M0.8 -11.6V11.7M-4.9 2.5L6.5 -2.4" stroke="#16256e" stroke-width="1.1"/><rect x="-11.9" y="-3.7" width="12.4" height="3.5" fill="#c4c4c4"/><rect x="0.5" y="-3.7" width="13" height="3.5" fill="#6e6e6e"/></g><g transform="translate(1423.9 853.4)"><path d="M-1.2 -9.8Q8 -6 16.3 -5.4Q11 2 7.6 8.6Q-3 5 -12.6 4.2Q-6 -3 -1.2 -9.8Z" fill="url(#gbl)" stroke="#fff" stroke-width="2.4" stroke-linejoin="round"/></g><g transform="translate(1465.9 853.4)"><path d="M-2.8 -9.8Q6 -6 13.9 -4.6Q9 3 5.1 10.4Q-5 6 -14.2 4.2Q-8 -3 -2.8 -9.8Z" fill="url(#gbl)" stroke="#fff" stroke-width="1.6" stroke-linejoin="round"/><path d="M-14.2 4.2Q-5 6 5.1 10.4Q9 3 13.9 -4.6" fill="none" stroke="#16256e" stroke-width="1.5"/></g><g transform="translate(1507.9 853.4)"><path d="M-11.4 -8.1V8.5Q-6 12 -1.5 10.5L0.5 7.5L2.5 10.8Q8 11.5 11.4 8.5V-8.1Z" fill="url(#gcy)" stroke="#16256e" stroke-width="1.5" stroke-linejoin="round"/><ellipse cx="0" cy="-8.1" rx="11.4" ry="4.4" fill="#8fa6f8" stroke="#16256e" stroke-width="1.5"/><path d="M0.5 -3.8V7.5" stroke="#16256e" stroke-width="1.1"/><polygon points="19,11.5 19,19 11.5,19" fill="#8a8a8a"/></g><g transform="translate(1549.9 853.4)"><circle cx="0.5" cy="0.2" r="12.8" fill="#fff" opacity=".8"/><circle cx="0.5" cy="0.2" r="11.6" fill="url(#gtor)"/><ellipse cx="-1.6" cy="-2.8" rx="4.6" ry="3.5" fill="#fff"/></g><g transform="translate(1591.9 853.4)"><g fill="#6f8bee" stroke="#fff" stroke-width="1.2"><polygon points="-7,-12 -1.5,-11 -2.5,-4 -6,-5.5"/><polygon points="0,-10.5 6.5,-7 3,-2 -1,-4"/><polygon points="7.5,-5.5 11.5,0 5.5,2.5 4,-1"/><polygon points="-5.5,-3.5 -2.5,-2 -5,4 -7.5,2"/><polygon points="-1,-1.5 3,0.5 -2,7 -4.5,5"/><polygon points="4,2.5 9,4.5 1,11.5 -1.5,9"/><polygon points="9.5,3 12.5,6 8,9 7,7"/></g></g><g transform="translate(1633.9 853.4)"><polygon points="0.4,-13.3 -9.3,-1.9 4.7,6.9" fill="#ffc860"/><polygon points="0.4,-13.3 14.4,-1.9 4.7,6.9" fill="#d88a10"/><polygon points="0.4,-13.3 -9.3,-1.9 4.7,6.9 14.4,-1.9" fill="none" stroke="#7a4a00" stroke-width="1"/><rect x="-15.5" y="1.6" width="14.1" height="14" fill="#cfcfcf" stroke="#222" stroke-width="1.6"/><circle cx="-8.4" cy="8.6" r="3.3" fill="#ee0000"/></g><g transform="translate(1003.9 895.5)"><g transform="translate(-270.6 -761)"><path d="M271.6 746.6Q262 745 257 750.5Q253.5 760 259.4 773.6L263 768Q266 764 268.4 757Q269 752 271.6 752Z" fill="#4a68dc" stroke="#16256e" stroke-width="1.2"/><path d="M268 747.4Q262 746.6 258.6 751Q257 758 259.6 766Q261 756 268 752Z" fill="#9db0ff" opacity=".7"/><ellipse cx="274.6" cy="763.2" rx="11.2" ry="8.4" fill="url(#ggs)" stroke="#333" stroke-width="1.2" transform="rotate(-12 274.6 763.2)"/><path d="M264.6 762Q274 756.6 285 760.6M270 755.6Q275.6 762 277.6 771" fill="none" stroke="#444" stroke-width="1.1"/></g></g><g transform="translate(1045.9 895.5)"><circle cx="-1.4" cy="-3" r="10.4" fill="none" stroke="#444" stroke-width="1.2"/><path d="M-4.9 6.7Q-12 9.5 -8 12.2Q2 15.5 8 10.5Q10.5 7 6.5 4" fill="none" stroke="#444" stroke-width="1.2" /><rect x="-2.9" y="-11.5" width="3" height="3" fill="#fff" stroke="#000" stroke-width="1.2"/><rect x="-7.3" y="-4.5" width="3" height="3" fill="#fff" stroke="#000" stroke-width="1.2"/><rect x="3.2" y="-6.2" width="3" height="3" fill="#fff" stroke="#000" stroke-width="1.2"/><rect x="-1.1" y="-0.7" width="3" height="3" fill="#fff" stroke="#000" stroke-width="1.2"/><path d="M10.9 -15.3H16.2V-10.9M-16.3 11.1V15.5H-11.1" fill="none" stroke="#222" stroke-width="1.4" /><polygon points="18.5,9.5 18.5,18 10,18" fill="#8a8a8a"/></g><g transform="translate(1087.9 895.5)"><path d="M-0.9 -1.3 L-1.3 -1.4 L-1.7 -1.7 L-2.1 -2.2 L-2.3 -2.7 L-2.3 -3.4 L-2.2 -4.1 L-1.8 -4.8 L-1.3 -5.3 L-0.5 -5.8 L0.4 -6.0 L1.3 -6.0 L2.3 -5.7 L3.2 -5.1 L3.9 -4.2 L4.4 -3.2 L4.7 -2.0 L4.6 -0.7 L4.1 0.5 L3.3 1.6 L2.2 2.5 L0.9 3.1 L-0.6 3.4 L-2.2 3.2 L-3.7 2.6 L-5.1 1.6 L-6.1 0.2 L-6.8 -1.4 L-7.1 -3.2 L-6.8 -5.1 L-6.1 -6.9 L-4.8 -8.5 L-3.2 -9.7 L-1.3 -10.5 L0.9 -10.8 L3.1 -10.4 L5.1 -9.5 L6.9 -8.1 L8.3 -6.2 L9.2 -3.9 L9.4 -1.5 L9.1 1.0 L8.0 3.3 L6.3 5.4 L4.2 6.9 L1.6 7.9 L-1.1 8.1 L-3.9 7.7 L-6.5 6.5 L-8.8 4.6 L-10.5 2.2 L-11.6 -0.7 L-11.8 -3.8 L-11.3 -6.8 L-9.9 -9.7 L-7.9 -12.2" fill="none" stroke="#444" stroke-width="1.2" /><path d="M10.9 -15.3H16.2V-10.9M-16.3 11.1V15.5H-11.1" fill="none" stroke="#222" stroke-width="1.4" /></g><g transform="translate(1129.9 895.5)"><path d="M1.6 -11.8Q-8 -13 -11.5 -1Q-13 9 -6 11Q1 11 3.3 0.5" fill="none" stroke="#444" stroke-width="1.2" /><rect x="-0.2" y="-13.6" width="3.6" height="3.6" fill="#fff" stroke="#000" stroke-width="1.3"/><rect x="1.5" y="-1.3" width="3.6" height="3.6" fill="#fff" stroke="#000" stroke-width="1.3"/><path d="M10.9 -15.3H16.2V-10.9M-16.3 11.1V15.5H-11.1" fill="none" stroke="#222" stroke-width="1.4" /></g><g transform="translate(1171.9 895.5)"><path d="M-4 -12Q4 -14 10 -10.5Q13 -6 6 -2.5Q2 0 1 6Q-2 12 -8 10.5Q-13 6 -10 -3Q-8.5 -10 -4 -12Z" fill="none" stroke="#444" stroke-width="1.2" /><path d="M10.9 -15.3H16.2V-10.9M-16.3 11.1V15.5H-11.1" fill="none" stroke="#222" stroke-width="1.4" /></g><g transform="translate(1213.9 895.5)"><polygon points="-8,-4.8 1,-10 13.4,-5.6 4.6,-0.4" fill="#fff6a0"/><polygon points="-8,-4.8 4.6,-0.4 4.6,12.2 -8,7" fill="#ffe400"/><polygon points="4.6,-0.4 13.4,-5.6 13.4,6.6 4.6,12.2" fill="#e8a400"/><circle cx="-8" cy="-5" r="3" fill="#fff" opacity=".8"/><path d="M10.9 -15.3H16.2V-10.9M-16.3 11.1V15.5H-11.1" fill="none" stroke="#222" stroke-width="1.4" /></g><g transform="translate(1255.9 895.5)"><g transform="translate(-1 0) scale(1)"><circle cx="1.6" cy="-12.2" r="3.1" fill="#000"/><path d="M-1 -7.6Q-8.6 -9.4 -10.2 1.4" fill="none" stroke="#000" stroke-width="5.6" stroke-linecap="round"/><path d="M-10.6 1L-11.4 14.4M-9 2L-3.4 14.4" fill="none" stroke="#000" stroke-width="3.2" stroke-linecap="square"/><path d="M-2.4 -6.4L2.6 -0.8L8 -1.6" fill="none" stroke="#000" stroke-width="2.5" stroke-linejoin="round"/></g><rect x="1.2" y="5.8" width="14.1" height="10.5" fill="url(#gbl)" stroke="#000" stroke-width="1.6"/><path d="M10.9 -2.2V5.8" stroke="#000" stroke-width="2.6"/></g><g transform="translate(1297.9 895.5)"><path d="M-12.4 -10V6Q-1.4 11 9.6 6V-10Z" fill="url(#gcy)" stroke="#16256e" stroke-width="1.3"/><ellipse cx="-1.4" cy="-10" rx="11" ry="4.4" fill="#8fa6f8" stroke="#16256e" stroke-width="1.3"/><path d="M-14 12.8H14" stroke="#333" stroke-width="1.2"/><polygon points="-16.5,12.8 -12.5,10.6 -12.5,15" fill="#333"/><polygon points="16.3,12.8 12.3,10.6 12.3,15" fill="#333"/><circle cx="-4" cy="11.6" r="1.6" fill="#fff" stroke="#333" stroke-width="0.8"/></g><g transform="translate(1339.9 895.5)"><polygon points="-16.5,12.8 -10.4,4.8 16,4.8 9,12.8" fill="url(#gbl)" stroke="#16256e" stroke-width="1.3"/><path d="M-12.5 6.8H13" stroke="#16256e" stroke-width="1.3" stroke-dasharray="3.4 2"/><path d="M-9.5 -11V8M-0.7 -11V8M8.1 -11V8" stroke="#fff" stroke-width="2.4" opacity=".95"/></g><g transform="translate(1381.9 895.5)"><g transform="translate(-2 0.5) scale(0.95)"><circle cx="1.6" cy="-12.2" r="3.1" fill="#000"/><path d="M-1 -7.6Q-8.6 -9.4 -10.2 1.4" fill="none" stroke="#000" stroke-width="5.6" stroke-linecap="round"/><path d="M-10.6 1L-11.4 14.4M-9 2L-3.4 14.4" fill="none" stroke="#000" stroke-width="3.2" stroke-linecap="square"/><path d="M-2.4 -6.4L2.6 -0.8L8 -1.6" fill="none" stroke="#000" stroke-width="2.5" stroke-linejoin="round"/></g><rect x="1.2" y="4.8" width="15" height="10.6" fill="url(#gbl)" stroke="#7088c8" stroke-width="1"/><path d="M9.4 -3.4V4.6" stroke="#000" stroke-width="2.4"/><path d="M2 -1.6H9" stroke="#000" stroke-width="1.6"/></g><g transform="translate(1423.9 895.5)"><rect x="-15.3" y="-11.8" width="2.1" height="2.6" fill="#6f8bee"/><rect x="-15.1" y="-7.6" width="2.1" height="2.6" fill="#6f8bee"/><rect x="-14.8" y="-3.4" width="2.1" height="2.6" fill="#6f8bee"/><rect x="-14.6" y="0.8" width="2.1" height="2.6" fill="#6f8bee"/><rect x="-14.3" y="5.0" width="2.1" height="2.6" fill="#6f8bee"/><rect x="-14.1" y="9.2" width="2.1" height="2.6" fill="#6f8bee"/><rect x="-11.7" y="-10.9" width="2.1" height="2.6" fill="#6f8bee"/><rect x="-11.5" y="-6.7" width="2.1" height="2.6" fill="#6f8bee"/><rect x="-11.2" y="-2.5" width="2.1" height="2.6" fill="#6f8bee"/><rect x="-11.0" y="1.7" width="2.1" height="2.6" fill="#6f8bee"/><rect x="-10.7" y="5.9" width="2.1" height="2.6" fill="#6f8bee"/><rect x="-10.5" y="10.1" width="2.1" height="2.6" fill="#6f8bee"/><rect x="-8.1" y="-10.0" width="2.1" height="2.6" fill="#6f8bee"/><rect x="-7.9" y="-5.8" width="2.1" height="2.6" fill="#6f8bee"/><rect x="-7.6" y="-1.6" width="2.1" height="2.6" fill="#6f8bee"/><rect x="-7.4" y="2.6" width="2.1" height="2.6" fill="#6f8bee"/><rect x="-7.1" y="6.8" width="2.1" height="2.6" fill="#6f8bee"/><rect x="-6.9" y="11.0" width="2.1" height="2.6" fill="#6f8bee"/><rect x="-4.5" y="-9.1" width="2.1" height="2.6" fill="#6f8bee"/><rect x="-4.2" y="-4.9" width="2.1" height="2.6" fill="#6f8bee"/><rect x="-4.0" y="-0.7" width="2.1" height="2.6" fill="#6f8bee"/><rect x="-3.8" y="3.5" width="2.1" height="2.6" fill="#6f8bee"/><rect x="-3.5" y="7.7" width="2.1" height="2.6" fill="#6f8bee"/><rect x="-3.2" y="11.9" width="2.1" height="2.6" fill="#6f8bee"/><rect x="-0.9" y="-8.2" width="2.1" height="2.6" fill="#6f8bee"/><rect x="-0.7" y="-4.0" width="2.1" height="2.6" fill="#6f8bee"/><rect x="-0.4" y="0.2" width="2.1" height="2.6" fill="#6f8bee"/><rect x="-0.2" y="4.4" width="2.1" height="2.6" fill="#6f8bee"/><rect x="0.1" y="8.6" width="2.1" height="2.6" fill="#6f8bee"/><rect x="0.3" y="12.8" width="2.1" height="2.6" fill="#6f8bee"/><polygon points="-2.1,-15.4 16.3,-6.6 16.3,11.9 3.2,4.8" fill="#6f8bee" stroke="#16256e" stroke-width="1.3"/><path d="M3.2 4.8L16.3 -6.6M-2.1 -15.4L3.2 4.8" stroke="#16256e" stroke-width="1.1"/><polygon points="-2.1,-15.4 16.3,-6.6 3.2,4.8" fill="#4a68dc" opacity=".7"/></g><g transform="translate(1465.9 895.5)"><rect x="-15.1" y="-0.4" width="28.1" height="7.9" fill="#fff" stroke="#000" stroke-width="1.7"/><path d="M-12.5 1.6h5v4h-5zM-5.5 1.6h5v4h-5zM5 1.6h5v4h-5z" fill="#ddd" stroke="#555" stroke-width="0.9"/><polygon points="-0.2,-13.6 9.5,-13.6 5.1,1.3 1.6,4.8" fill="#1c3a9c"/></g><g transform="translate(1507.9 895.5)"><path d="M-12.5 -8.5L-4.5 -13.5L3 -11.5Q12 -4 11.5 6.5L5.5 11.5L4.5 4Q2 -4 -5 -7.5L-8 -3.5Z" fill="#6f8bee" stroke="#16256e" stroke-width="1.3" stroke-linejoin="round"/><path d="M-4.5 -13.5L-8.5 -8.5L-1 -6.5Q7 -1 5.5 11.5" fill="none" stroke="#16256e" stroke-width="1.1"/><path d="M-11.5 -6L-8 -3.5L-4 -6.5M0 2L2.5 9.5L5 8" fill="#fff" stroke="#333" stroke-width="1"/></g><g transform="translate(1549.9 895.5)"><path d="M-10.5 -10.5L10.5 10.5M10.5 -10.5L-10.5 10.5" stroke="#b80000" stroke-width="10.6" stroke-linecap="round"/><path d="M-10.5 -10.5L10.5 10.5M10.5 -10.5L-10.5 10.5" stroke="url(#gred)" stroke-width="9" stroke-linecap="round"/><path d="M-11 -10L-1 0M11 -10.5L4 -3.5" stroke="#ffb0a8" stroke-width="4" stroke-linecap="round" opacity=".55"/></g><g transform="translate(1591.9 895.5)"><path d="M-16.3 18L17.9 -16.2" fill="none" stroke="#111" stroke-width="1.3" /><rect x="-6.8" y="4.1" width="4.4" height="4.4" fill="#ee1111" stroke="#400" stroke-width="1.2"/><rect x="4.3" y="-6.7" width="4.4" height="4.4" fill="#ee1111" stroke="#400" stroke-width="1.2"/></g><g transform="translate(1633.9 895.5)"><path d="M-15 -3Q-9.3 -5 -9.3 1V18M15 -6Q7.4 -5 7.4 2V18" fill="none" stroke="#111" stroke-width="1.7" /><path d="M-4 -9V18M0.5 -9V18" fill="none" stroke="#999" stroke-width="1.2" /><path d="M-15 -8L-4 -9M0.5 -9Q6 -12 15 -13M-15 3L-9.3 1.6M7.4 -1L15 -4" fill="none" stroke="#666" stroke-width="1" stroke-dasharray="2 1.4"/></g><g transform="translate(1003.9 937.7)"><path d="M-16.5 16.2L-3.3 -10.1L8.1 13L16 -10.1" fill="none" stroke="#111" stroke-width="1.3" /><rect x="-5.2" y="-11.9" width="3.8" height="3.8" fill="none" stroke="#ee1111" stroke-width="1.3"/><rect x="6.2" y="11.1" width="3.8" height="3.8" fill="none" stroke="#ee1111" stroke-width="1.3"/></g><g transform="translate(1045.9 937.7)"><path d="M-14.6 -14H1.6L4.6 -11V-4L1.6 -1H-14.6L-17.6 -4V-11Z" fill="#000"/><text x="-15.4" y="-2.6" font-family="Liberation Sans, sans-serif" font-size="12.6" fill="#fff" textLength="18" lengthAdjust="spacingAndGlyphs">5.3</text><path d="M4.6 -9.6H12.4" stroke="#8a8a8a" stroke-width="1.2"/><polygon points="13,-9.6 9.4,-12 9.4,-7.2" fill="#8a8a8a"/><path d="M13.6 -12V-0.6" stroke="#8a8a8a" stroke-width="1.2"/><path d="M4 -9L-14 7.6" stroke="#9a9a9a" stroke-width="0.9"/><polygon points="-15.6,9.2 -10.4,7.6 -13.6,4.4" fill="#8a8a8a"/><path d="M-19 5.4V16.4" stroke="#8a8a8a" stroke-width="1.2"/><path d="M14 -0.2L12 -1.6H5L-12.6 16.6H-19" fill="none" stroke="#111" stroke-width="1.6"/></g><g transform="translate(1087.9 937.7)"><path d="M5 13.6H-12.8Q-15.3 13.6 -15.3 11.1V-13.8Q-15.3 -16.3 -12.8 -16.3H13.8Q16.3 -16.3 16.3 -13.8V1M16.3 6V13.6H11" fill="none" stroke="#2a9a2a" stroke-width="2.6"/><text x="-10.5" y="0.4" font-family="Liberation Sans, sans-serif" font-size="12.4" fill="#111" textLength="16.5" lengthAdjust="spacingAndGlyphs">5.3</text><path d="M5 2.5L11 8.5" stroke="#e8189a" stroke-width="2.2"/><polygon points="12.8,10.3 12.4,3.8 6,9.8" fill="#e8189a"/></g><g transform="translate(1129.9 937.7)"><rect x="-16" y="-13.6" width="31.6" height="28.1" fill="#ececf2" stroke="#888" stroke-width="1.1" stroke-dasharray="3 2"/><circle cx="-4.9" cy="-4.8" r="3.4" fill="#ffb060" stroke="#f08a1a" stroke-width="1.6"/><circle cx="6.9" cy="-7.5" r="3.4" fill="#ffb060" stroke="#f08a1a" stroke-width="1.6"/><circle cx="4.2" cy="6.6" r="3.4" fill="#ffb060" stroke="#f08a1a" stroke-width="1.6"/></g><g transform="translate(1171.9 937.7)"><circle cx="0" cy="0.4" r="15.4" fill="none" stroke="#6a6a6a" stroke-width="1.9"/><path d="M0 -17V-10M0 17.8V10.8M-17.4 0.4H-10.4M17.4 0.4H10.4" stroke="#333" stroke-width="1.8"/><circle cx="0" cy="0.4" r="2" fill="none" stroke="#888" stroke-width="1.1"/></g><g transform="translate(1213.9 937.7)"><path d="M-2.5 6.8Q-15.5 5.5 -15.6 0.4Q-14 -5.8 0 -5.8Q15 -5.5 15.8 0.6Q15 5 7.5 6.4" fill="none" stroke="#000" stroke-width="2.8"/><polygon points="3.2,6.8 -5.4,1.6 -5.4,12.4" fill="#000"/></g><g transform="translate(1255.9 937.7)"><circle cx="2.8" cy="-2.2" r="11" fill="#fafafa" stroke="#8a8a8a" stroke-width="1.8"/><text x="-5.4" y="2.2" font-family="Liberation Sans, sans-serif" font-size="12" font-weight="700" fill="#111" textLength="16.5" lengthAdjust="spacingAndGlyphs">1:1</text><path d="M-5.6 6.6L-13 13" stroke="#222" stroke-width="2.6" stroke-linecap="round"/></g><g transform="translate(1297.9 937.7)"><circle cx="2.8" cy="-2.2" r="11" fill="#fafafa" stroke="#8a8a8a" stroke-width="1.8"/><circle cx="5.6" cy="-4.8" r="3.6" fill="#ffe620" stroke="#a89000" stroke-width="0.9"/><circle cx="1.2" cy="0.4" r="3.6" fill="#ffe620" stroke="#a89000" stroke-width="0.9"/><path d="M-5.6 6.6L-13 13" stroke="#222" stroke-width="2.6" stroke-linecap="round"/></g><g transform="translate(1339.9 937.7)"><path d="M-15.8 -7.6Q-11 -10 -7.6 -8.8Q5 -5 7 6.5V14.4" fill="none" stroke="#111" stroke-width="2.4" /><rect x="-9.9" y="-11.1" width="4.6" height="4.6" fill="#fff" stroke="#000" stroke-width="1.4"/><rect x="4.7" y="4.2" width="4.6" height="4.6" fill="#fff" stroke="#000" stroke-width="1.4"/></g><g transform="translate(1381.9 937.7)"><path d="M-17.4 -5.8Q4 -6 6.3 14.4" fill="none" stroke="#111" stroke-width="2.6" /><path d="M-17.4 -14.6H-4.7L13 3.9V15.5" fill="none" stroke="#111" stroke-width="1.3" stroke-dasharray="1.4 1.6"/><rect x="-6.9" y="-16.8" width="4.4" height="4.4" fill="#fff" stroke="#000" stroke-width="1.4"/><rect x="10.8" y="1.7" width="4.4" height="4.4" fill="#fff" stroke="#000" stroke-width="1.4"/></g><g transform="translate(1423.9 937.7)"><path d="M-12.6 12.7L11.9 -11.9" fill="none" stroke="#111" stroke-width="2.5" /><rect x="-2.2" y="-1.8" width="4.4" height="4.4" fill="#fff" stroke="#000" stroke-width="1.4"/><path d="M-11.6 -4H-6.6M-9.1 -6.5V-1.5" fill="none" stroke="#111" stroke-width="1.5" /></g><g transform="translate(1465.9 937.7)"><path d="M-12.6 12.7L11.9 -11.9" fill="none" stroke="#111" stroke-width="2.5" /><rect x="-2.2" y="-1.8" width="4.4" height="4.4" fill="#fff" stroke="#000" stroke-width="1.4"/><path d="M-10.6 -4H-5.6" fill="none" stroke="#111" stroke-width="1.5" /></g><g transform="translate(1507.9 937.7)"><path d="M-14 -12.8H13.2V14.5H-5.3V5.7H-14Z" fill="url(#gbl)" stroke="#16256e" stroke-width="1.5"/><rect x="-14" y="5.7" width="8.7" height="8.8" fill="#fff" stroke="#000" stroke-width="1.5"/></g><g transform="translate(1549.9 937.7)"><path d="M-13.5 -6L-2 -13.5L13 -8.5L2 -1Z" fill="#95aaf8"/><path d="M-13.5 -6L2 -1V15L-13.5 9.5Z" fill="#6f8bee"/><path d="M2 -1L13 -8.5V7L2 15Z" fill="#3f5ed2"/><path d="M-13.5 -6L-2 -13.5L13 -8.5V7L2 15L-13.5 9.5Z" fill="none" stroke="#16256e" stroke-width="1.3" stroke-linejoin="round"/><path d="M-4 6L2 8V15L-4 13ZM2 8L7 4.5V11.5L2 15ZM-4 6L1 3L7 4.5L2 8Z" fill="#fff" stroke="#333" stroke-width="0.9"/></g><g transform="translate(1591.9 937.7)"><rect x="-14.6" y="-11.0" width="5" height="6.5" fill="#30c030"/><rect x="-9.6" y="-11.0" width="5" height="6.5" fill="#60e060"/><rect x="-4.6" y="-11.0" width="5" height="6.5" fill="#30c030"/><rect x="0.4" y="-11.0" width="5" height="6.5" fill="#60e060"/><rect x="5.4" y="-11.0" width="5" height="6.5" fill="#30c030"/><rect x="10.4" y="-11.0" width="5" height="6.5" fill="#60e060"/><rect x="-14.6" y="-4.6" width="5" height="6.5" fill="#20a0e0"/><rect x="-9.6" y="-4.6" width="5" height="6.5" fill="#60d0a0"/><rect x="-4.6" y="-4.6" width="5" height="6.5" fill="#8080f0"/><rect x="0.4" y="-4.6" width="5" height="6.5" fill="#20a0e0"/><rect x="5.4" y="-4.6" width="5" height="6.5" fill="#a060e0"/><rect x="10.4" y="-4.6" width="5" height="6.5" fill="#60d0a0"/><rect x="-14.6" y="1.8" width="5" height="6.5" fill="#e03030"/><rect x="-9.6" y="1.8" width="5" height="6.5" fill="#f0a020"/><rect x="-4.6" y="1.8" width="5" height="6.5" fill="#e03090"/><rect x="0.4" y="1.8" width="5" height="6.5" fill="#f0e020"/><rect x="5.4" y="1.8" width="5" height="6.5" fill="#e03030"/><rect x="10.4" y="1.8" width="5" height="6.5" fill="#f0a020"/><rect x="-14.6" y="-11" width="29.9" height="19.3" fill="none" stroke="#000" stroke-width="1.5"/><rect x="-15.4" y="5.6" width="4.4" height="4.4" fill="#fff" stroke="#000" stroke-width="1.4"/><rect x="11.7" y="5.6" width="4.4" height="4.4" fill="#fff" stroke="#000" stroke-width="1.4"/></g><g transform="translate(1633.9 937.7)"><path transform="translate(-5.2 -6) scale(1.25) rotate(-28)" d="M-4.6 -4.6H-1.7V-4.9A2.05 2.05 0 1 1 1.7 -4.9V-4.6H4.6V-1.7H4.9A2.05 2.05 0 1 1 4.9 1.7H4.6V4.6H1.7V4.9A2.05 2.05 0 1 1 -1.7 4.9V4.6H-4.6V1.7H-4.9A2.05 2.05 0 1 1 -4.9 -1.7H-4.6Z" fill="#ffad14" stroke="#4a3608" stroke-width="1.1" stroke-linejoin="round"/><path transform="translate(5.4 5.6) scale(1.25) rotate(-28)" d="M-4.6 -4.6H-1.7V-4.9A2.05 2.05 0 1 1 1.7 -4.9V-4.6H4.6V-1.7H4.9A2.05 2.05 0 1 1 4.9 1.7H4.6V4.6H1.7V4.9A2.05 2.05 0 1 1 -1.7 4.9V4.6H-4.6V1.7H-4.9A2.05 2.05 0 1 1 -4.9 -1.7H-4.6Z" fill="#ffffff" stroke="#555" stroke-width="1.1" stroke-linejoin="round"/></g><g transform="translate(1003.9 979.8)"><rect x="-17.5" y="-4.9" width="3" height="3" fill="#fff" stroke="#000" stroke-width="1.1"/><path d="M-12.8 -3.4H16.5" fill="none" stroke="#111" stroke-width="1.5" stroke-dasharray="5 1.5 1.5 1.5"/><rect x="-17.5" y="1.2" width="3" height="3" fill="#fff" stroke="#000" stroke-width="1.1"/><path d="M-12.8 2.7H16.5" fill="none" stroke="#111" stroke-width="1.5" stroke-dasharray="4 2"/><rect x="-17.5" y="7.1" width="3" height="3" fill="#fff" stroke="#000" stroke-width="1.1"/><path d="M-12.8 8.6H16.5" fill="none" stroke="#111" stroke-width="1.5" stroke-dasharray="2.5 2.5"/><rect x="-17.5" y="12.6" width="3" height="3" fill="#fff" stroke="#000" stroke-width="1.1"/><path d="M-12.8 14.1H16.5" fill="none" stroke="#111" stroke-width="1.5" stroke-dasharray="1.2 1.4"/><path d="M-5 -9L3 -17H12L16 -15V-9H4Z" fill="#9a9a9a" stroke="#444" stroke-width="0.9"/><rect x="12" y="-16" width="4.5" height="7" fill="#222"/></g><g transform="translate(1045.9 979.8)"><path d="M-0.3 -15.5Q-11 -15 -11.3 -5Q-10.5 1 -5.5 5.5V10.5Q-3 14 -0.3 14Q2.4 14 4.9 10.5V5.5Q10 1 10.7 -5Q10.4 -15 -0.3 -15.5Z" fill="url(#ggs)" stroke="#9a9a9a" stroke-width="1"/><path d="M-5 7.5H4.4M-5 10H4.4" stroke="#888" stroke-width="1"/></g><g transform="translate(1087.9 979.8)"><path d="M-5.4 -2.3V-6Q-5.4 -11 -0.4 -11Q4.6 -11 4.6 -6V-2.3" fill="none" stroke="#333" stroke-width="2.4"/><rect x="-9" y="-2.3" width="17.1" height="13.1" rx="1.5" fill="url(#ggr)" stroke="#333" stroke-width="1.4"/><path d="M-5 3H4M-5 6.5H4" stroke="#999" stroke-width="1"/></g><g transform="translate(1129.9 979.8)"><path d="M-15.1 -14.4H12L14.5 -12V14.1H-15.1Z" fill="#cbbb62" stroke="#3a3410" stroke-width="1.6"/><rect x="-9.6" y="-13.2" width="18.6" height="11" fill="url(#ggr)" stroke="#6a6230" stroke-width="0.8"/><rect x="-7.4" y="4.2" width="14.2" height="9.9" fill="#b0b0a0" stroke="#3a3410" stroke-width="1.1"/><rect x="-5.4" y="6" width="4.4" height="6.5" fill="#5a5636"/></g><g transform="translate(1171.9 979.8)"><path d="M-8 -4L-4.5 -14H10.5L8 -4Z" fill="#fff" stroke="#444" stroke-width="1"/><path d="M1 -10.5h4v3h-4z" fill="#999"/><path d="M-15.5 -1.5Q-15.5 -4.5 -12.5 -4.5H11.5Q14.5 -4.5 14.5 -1.5V5.5H-15.5Z" fill="url(#ggr)" stroke="#222" stroke-width="1.3"/><path d="M-14 3H13" stroke="#000" stroke-width="2.4"/><path d="M-12 5.5H11L12.5 11H-13.5Z" fill="#fff" stroke="#222" stroke-width="1.2"/><path d="M-15 11H14.5V13.5H-15Z" fill="#333"/></g><g transform="translate(1213.9 979.8)"><path d="M-9.5 -12.2H8.3V10Q8.3 13 5.3 13H-11.4Q-9 11.5 -9.5 9Z" fill="#fff" stroke="#333" stroke-width="1.2"/><path d="M-6.5 -8.5H5M-6.5 -5.5H5M-6.5 -2.5H2M-6.5 0.5H1M-6.5 3.5H4M-6.5 6.5H4" stroke="#777" stroke-width="1"/><path d="M-11.4 13Q-13.4 11 -11.4 9.6H3.5Q5.2 11.2 3.8 13" fill="#eee" stroke="#333" stroke-width="1.1"/><path d="M17 -16.6L13.8 -19L0.5 -3.5L-1.5 1.6L3.4 -0.9Z" fill="#ff7a1a" stroke="#a03a00" stroke-width="0.8"/><path d="M0.5 -3.5L-1.5 1.6L3.4 -0.9Z" fill="#f4dca0" stroke="#333" stroke-width="0.7"/></g><g transform="translate(1255.9 979.8)"><path d="M-14 -9.5H-5L-3 -7H9.5V11.5H-14Z" fill="#f3c84a" stroke="#7a5a00" stroke-width="1.2"/><path d="M-15 11.8L-10.5 -2.5H14.7L10 11.8Z" fill="url(#gfol)" stroke="#7a5a00" stroke-width="1.2" stroke-linejoin="round"/></g><g transform="translate(1297.9 979.8)"><ellipse cx="0.5" cy="-12" rx="9" ry="4" fill="none" stroke="#333" stroke-width="1.3"/><path d="M-15.7 -2.5Q0.5 3.5 16.5 -2.5V10.7Q0.5 20.5 -15.7 10.7Z" fill="#5f7eea" stroke="#16256e" stroke-width="1.4"/><path d="M-10.5 4.5Q0.5 13 11.5 4.5Q10 10 0.5 11Q-9 10 -10.5 4.5Z" fill="#fff" opacity=".92"/></g><g transform="translate(1339.9 979.8)"><g transform="translate(-3 0) scale(0.95)"><circle cx="1.6" cy="-12.2" r="3.1" fill="#000"/><path d="M-1 -7.6Q-8.6 -9.4 -10.2 1.4" fill="none" stroke="#000" stroke-width="5.6" stroke-linecap="round"/><path d="M-10.6 1L-11.4 14.4M-9 2L-3.4 14.4" fill="none" stroke="#000" stroke-width="3.2" stroke-linecap="square"/><path d="M-2.4 -6.4L2.6 -0.8L8 -1.6" fill="none" stroke="#000" stroke-width="2.5" stroke-linejoin="round"/></g><rect x="0.6" y="5.8" width="14.8" height="10.4" fill="url(#gbl)" stroke="#7088c8" stroke-width="1"/><path d="M8.4 -3V5.4" stroke="#000" stroke-width="2.4"/><path d="M1 -1.4H8" stroke="#000" stroke-width="1.6"/></g><g transform="translate(1381.9 979.8)"><path d="M-11.4 -0.2H12.7" fill="none" stroke="#111" stroke-width="2.4" stroke-dasharray="3.4 1.7"/><rect x="-16.8" y="-2.3" width="4.2" height="4.2" fill="#fff" stroke="#000" stroke-width="1.4"/><path d="M9 -15Q13 -13 11.5 -7Q10 -1 14 0Q10 1 11.5 7Q13 13 10 15" fill="none" stroke="#d4d6dc" stroke-width="1.4" /><polygon points="19.5,10 19.5,19 10.5,19" fill="#8a8a8a"/></g></svg><svg class="ic" style="left:1676px;top:756px" width="237" height="92" viewBox="1676 756 237 92"><defs><linearGradient id="gmg" x1="0" y1="0" x2="1" y2="0"><stop offset="0" stop-color="#f48ae8"/><stop offset="0.5" stop-color="#e630d4"/><stop offset="1" stop-color="#d020c0"/></linearGradient><radialGradient id="gms" cx="0.38" cy="0.32" r="0.75"><stop offset="0" stop-color="#fbc8f6"/><stop offset="0.5" stop-color="#e84cda"/><stop offset="1" stop-color="#a0148e"/></radialGradient><linearGradient id="gmv" x1="0" y1="0" x2="0" y2="1"><stop offset="0" stop-color="#f9c0f4"/><stop offset="1" stop-color="#e030d0"/></linearGradient></defs><g transform="translate(1698.5 781.2)"><path d="M-15 -14.5Q-10 -16.5 -4 -15L6.6 -15.7V-6H-15Z" fill="#2a5aa8" stroke="#10204a" stroke-width="1"/><path d="M-13.2 -6.5Q-6 -4.5 0 -7Q7 -8.5 14 -7V12Q7 10.5 0 13Q-7 15 -13.2 12.5Z" fill="url(#gmg)" stroke="#300030" stroke-width="1.4"/><path d="M8 -15.5Q12 -16 15 -11" fill="none" stroke="#222" stroke-width="1.1" stroke-dasharray="2 1.2"/><polygon points="16,-9.4 12.6,-11.4 16.2,-13.4" fill="#222"/></g><g transform="translate(1739.6 781.2)"><path d="M-13 -8Q-13 -12 -9 -13L3 -15.5Q8 -16 11 -13L14 -8V7Q13 11 9 12.5L-1 15Q-6 15.5 -9 13L-13 8Z" fill="url(#gms)" stroke="#8a2a80" stroke-width="1"/><path d="M-13 -8Q-2 -2 14 -8M-1 -3V15M-13 0.5Q-1 6 14 -0.5M-6 -14Q-4 -9 -7.5 -5.6M6 -15Q8 -10 6.5 -5.4M-7.5 -5.6V13M6.5 -5.4V13.5" fill="none" stroke="#6a1460" stroke-width="1.2" opacity=".85"/><polygon points="18.2,10.9 18.2,18.3 10,18.3" fill="#8a8a8a"/></g><g transform="translate(1781.8 781.2)"><ellipse cx="-4.2" cy="-10.2" rx="8.5" ry="4.6" transform="rotate(-48 -4.2 -10.2)" fill="url(#gms)" stroke="#8a2080" stroke-width="1"/><ellipse cx="6.5" cy="2.2" rx="7.5" ry="5" transform="rotate(5 6.5 2.2)" fill="url(#gms)" stroke="#8a2080" stroke-width="1"/><ellipse cx="-7.9" cy="6.6" rx="8.2" ry="4.8" transform="rotate(-38 -7.9 6.6)" fill="url(#gms)" stroke="#8a2080" stroke-width="1"/></g><g transform="translate(1822 781.2)"><rect x="-15.9" y="-0.2" width="32.8" height="15.4" fill="#e838d8" stroke="#000" stroke-width="1.6"/><path d="M-4.8 -0.2V15.2M6.1 -0.2V15.2" stroke="#000" stroke-width="1.6"/><path d="M-4.8 -14.7H6.1M-4.8 -14.7V-0.2" stroke="#000" stroke-width="1.3"/><path d="M6.1 -14.7V-0.2" stroke="#000" stroke-width="1.2" stroke-dasharray="1.4 1.4"/><circle cx="-15.9" cy="-0.2" r="1.8" fill="#ffe" stroke="#000" stroke-width="1"/><circle cx="-15.9" cy="15.2" r="1.8" fill="#ffe" stroke="#000" stroke-width="1"/><circle cx="-4.8" cy="-0.2" r="1.8" fill="#ffe" stroke="#000" stroke-width="1"/><circle cx="-4.8" cy="15.2" r="1.8" fill="#ffe" stroke="#000" stroke-width="1"/><circle cx="6.1" cy="-0.2" r="1.8" fill="#ffe" stroke="#000" stroke-width="1"/><circle cx="6.1" cy="15.2" r="1.8" fill="#ffe" stroke="#000" stroke-width="1"/><circle cx="16.9" cy="-0.2" r="1.8" fill="#ffe" stroke="#000" stroke-width="1"/><circle cx="16.9" cy="15.2" r="1.8" fill="#ffe" stroke="#000" stroke-width="1"/><circle cx="-4.8" cy="-14.7" r="1.8" fill="#fff" stroke="#000" stroke-width="1"/><circle cx="6.1" cy="-14.7" r="1.8" fill="#fff" stroke="#000" stroke-width="1"/></g><g transform="translate(1863.8 781.2)"><circle cx="-0.7" cy="-0.2" r="11" fill="url(#gms)"/><path d="M-12 -9Q-1 -4 10 -9M-1 -11V11" fill="none" stroke="#7a1a70" stroke-width="1" opacity=".7"/><path d="M-16.8 -8.3H9.2V16.5H-16.8ZM-9.4 -18.2H18.5V7.2H-9.4ZM-16.8 -8.3L-9.4 -18.2M9.2 -8.3L18.5 -18.2M9.2 16.5L18.5 7.2M-16.8 16.5L-9.4 7.2" fill="none" stroke="#111" stroke-width="1.6"/></g><g transform="translate(1698.5 821.6)"><path d="M-14 -13Q-9 -16 -6 -11Q-3 -5 1.5 -3.5Q9 -3 14 3.5L10 7.5Q6 2.5 1 3.5Q-1 6 3 12L-2 17Q-7 9 -6.5 3Q-10 -3 -14 -13Z" fill="url(#gmv)" stroke="#b030a4" stroke-width="1"/><path d="M-11 -12Q-6 -4 -1 0Q6 0 11 5M-2 1Q-3.5 7 0.5 13" fill="none" stroke="#fff" stroke-width="1.6" opacity=".9"/></g><g transform="translate(1739.6 821.6)"><rect x="-17.1" y="-15.3" width="14.2" height="13.6" fill="#e838d8" stroke="#701068" stroke-width="1"/><circle cx="8" cy="9.5" r="7" fill="#e838d8" stroke="#701068" stroke-width="1"/><path d="M10.8 0.5Q9.5 -9 1 -11.8" fill="none" stroke="#222" stroke-width="2"/><polygon points="-1.6,-12.4 3.8,-15.6 3.2,-8.6" fill="#222"/><path d="M-14 1.5Q-12 10 -4 11.8" fill="none" stroke="#222" stroke-width="2"/><polygon points="-1.4,12.4 -6.4,15.6 -6.2,8.4" fill="#222"/></g><g transform="translate(1781.8 821.6)"><polygon points="-15.3,-6 -8.5,-13.5 -2,-4 6,-14 13.5,2 -4,15 " fill="url(#gmv)" stroke="#30002c" stroke-width="1.4" stroke-linejoin="round"/><path d="M-8.5 -13.5L4 7.5M-11.5 -1L0 -7.5M-7.5 6L9.5 -6.5M0 -1L8 9.5M-2 -4L-5 2" fill="none" stroke="#30002c" stroke-width="1.1"/><polygon points="-2,-4 6,-14 13.5,2 4,7.5" fill="#e030d0" opacity=".55"/></g><g transform="translate(1822 821.6)"><path d="M-12.8 13.8V1Q-12.8 -12.8 1.5 -12.8V-6.4Q-6.4 -6.4 -6.4 1V13.8Z" fill="url(#gmv)" stroke="#111" stroke-width="1.4"/><path d="M15.7 13.8V1Q15.7 -12.8 1.5 -12.8V-6.4Q9.3 -6.4 9.3 1V13.8Z" fill="#fff" stroke="#111" stroke-width="1.4"/><path d="M1.5 -16V16" stroke="#000" stroke-width="1.2" stroke-dasharray="1.4 1.4"/><path d="M-10 -6Q-6 -12 1 -12.5V-7Q-4 -6.5 -6 -2Z" fill="#e020cc"/></g><g transform="translate(1863.8 821.6)"><path d="M-12.5 -4Q-4 -12 6 -9.5L13 -2V9L5 14Q3 5 -8 4Z" fill="url(#gmg)" stroke="#30002c" stroke-width="1.2" stroke-linejoin="round"/><path d="M-12.5 -4L-8 4Q3 5 5 14L-2 13.5Q-3 7 -11 5.5Z" fill="#fff" stroke="#444" stroke-width="1"/><path d="M4 -5L12 -12" stroke="#111" stroke-width="1.6"/><polygon points="14,-14 13,-8 8,-13" fill="#111"/></g><g transform="translate(1897.6 821.8)"><path d="M-5.6 -3.8L-1.6 0L-5.6 3.8M0.4 -3.8L4.4 0L0.4 3.8" fill="none" stroke="#000" stroke-width="2.3"/></g></svg><svg class="ic" style="left:1690px;top:70px" width="100" height="45" viewBox="1690 70 100 45"><g transform="translate(1714 91.4)"><text x="-16.4" y="-3" font-family="Liberation Sans, sans-serif" font-size="15.4" fill="#1a1a9a" textLength="16" lengthAdjust="spacingAndGlyphs">5.3</text><path d="M4.6 -9.6H12.4" stroke="#8a8a8a" stroke-width="1.2"/><polygon points="13,-9.6 9.4,-12 9.4,-7.2" fill="#8a8a8a"/><path d="M13.6 -12V-0.6" stroke="#8a8a8a" stroke-width="1.2"/><path d="M4 -9L-14 7.6" stroke="#9a9a9a" stroke-width="0.9"/><polygon points="-15.6,9.2 -10.4,7.6 -13.6,4.4" fill="#8a8a8a"/><path d="M-19 5.4V16.4" stroke="#8a8a8a" stroke-width="1.2"/><path d="M14 -0.2L12 -1.6H5L-12.6 16.6H-19" fill="none" stroke="#111" stroke-width="1.6"/></g><g transform="translate(1755.8 91.4)"><path d="M-14.6 -14H1.6L4.6 -11V-4L1.6 -1H-14.6L-17.6 -4V-11Z" fill="#000"/><text x="-15.4" y="-2.6" font-family="Liberation Sans, sans-serif" font-size="12.6" fill="#fff" textLength="18" lengthAdjust="spacingAndGlyphs">5.3</text><path d="M4.6 -9.6H12.4" stroke="#8a8a8a" stroke-width="1.2"/><polygon points="13,-9.6 9.4,-12 9.4,-7.2" fill="#8a8a8a"/><path d="M13.6 -12V-0.6" stroke="#8a8a8a" stroke-width="1.2"/><path d="M4 -9L-14 7.6" stroke="#9a9a9a" stroke-width="0.9"/><polygon points="-15.6,9.2 -10.4,7.6 -13.6,4.4" fill="#8a8a8a"/><path d="M-19 5.4V16.4" stroke="#8a8a8a" stroke-width="1.2"/><path d="M14 -0.2L12 -1.6H5L-12.6 16.6H-19" fill="none" stroke="#111" stroke-width="1.6"/></g></svg><svg class="ic" style="left:1636px;top:158px" width="277" height="32" viewBox="1636 158 277 32"><defs><linearGradient id="gly" x1="0" y1="0" x2="0" y2="1"><stop offset="0" stop-color="#ff5a10"/><stop offset="0.55" stop-color="#f06030"/><stop offset="0.7" stop-color="#ffffff"/><stop offset="1" stop-color="#3050b0"/></linearGradient><linearGradient id="gmo" x1="0" y1="0" x2="1" y2="1"><stop offset="0" stop-color="#f4f4f4"/><stop offset="1" stop-color="#9a9a9a"/></linearGradient></defs><path d="M1652.2 173.8L1652.2 163.4A10.4 10.4 0 0 1 1659.3 166.2Z" fill="#ff2020"/><path d="M1652.2 173.8L1658.9 165.8A10.4 10.4 0 0 1 1662.5 172.5Z" fill="#ff9a00"/><path d="M1652.2 173.8L1662.4 172.0A10.4 10.4 0 0 1 1660.9 179.4Z" fill="#f0e000"/><path d="M1652.2 173.8L1661.2 179.0A10.4 10.4 0 0 1 1655.3 183.7Z" fill="#40d020"/><path d="M1652.2 173.8L1655.8 183.6A10.4 10.4 0 0 1 1648.2 183.4Z" fill="#00c8a0"/><path d="M1652.2 173.8L1648.6 183.6A10.4 10.4 0 0 1 1642.9 178.5Z" fill="#00a0ff"/><path d="M1652.2 173.8L1643.2 179.0A10.4 10.4 0 0 1 1642.1 171.5Z" fill="#3040f0"/><path d="M1652.2 173.8L1642.0 172.0A10.4 10.4 0 0 1 1645.9 165.5Z" fill="#a020e0"/><path d="M1652.2 173.8L1645.5 165.8A10.4 10.4 0 0 1 1652.7 163.4Z" fill="#ff20b0"/><circle cx="1652.2" cy="173.8" r="10.4" fill="none" stroke="#333" stroke-width="1" opacity=".6"/><circle cx="1652.2" cy="173.8" r="5.4" fill="#fff"/><path d="M1704 164.5L1712 162.6L1726 168V179L1713 185.6L1704.6 177Z" fill="url(#gly)" stroke="#202a50" stroke-width="1.2" stroke-linejoin="round"/><path d="M1704 164.5L1713 172.5L1726 168M1713 172.5V185.6" fill="none" stroke="#202a50" stroke-width="1"/><path d="M1704 164.5L1712 162.6L1726 168L1713 172.5Z" fill="#ff6a20"/><rect x="1768.6" y="164.2" width="21" height="16" rx="1.5" fill="url(#gmo)" stroke="#111" stroke-width="2"/><path d="M1775 182.5H1783.4L1785 185H1773.4Z" fill="#111"/><rect x="1831.6" y="164.2" width="22" height="21" fill="#dfe6f4" stroke="#8a90a0" stroke-width="1"/><rect x="1831.6" y="164.2" width="22" height="3.6" fill="#3a3a9a"/><path d="M1834 184.6Q1834 171 1842.6 171Q1851.2 171 1851.2 184.6Z" fill="#2a60e0"/><text x="1839.2" y="182.6" font-family="Liberation Sans, sans-serif" font-size="12" font-weight="700" fill="#fff">?</text><g transform="translate(1906 177.4)"><path d="M9.7 -1.7 L9.7 1.7 L7.1 2.2 L6.5 3.4 L8.0 5.7 L5.7 8.0 L3.5 6.5 L2.2 7.1 L1.7 9.7 L-1.7 9.7 L-2.2 7.1 L-3.4 6.5 L-5.7 8.0 L-8.0 5.7 L-6.5 3.5 L-7.1 2.2 L-9.7 1.7 L-9.7 -1.7 L-7.1 -2.2 L-6.5 -3.4 L-8.0 -5.7 L-5.7 -8.0 L-3.5 -6.5 L-2.2 -7.1 L-1.7 -9.7 L1.7 -9.7 L2.2 -7.1 L3.4 -6.5 L5.7 -8.0 L8.0 -5.7 L6.5 -3.5 L7.1 -2.2Z" fill="#eef0f4" stroke="#8e929c" stroke-width="1.1" stroke-linejoin="round"/><circle r="3.2" fill="#e0e4ec" stroke="#8e929c" stroke-width="1.1"/></g></svg></body></html>
